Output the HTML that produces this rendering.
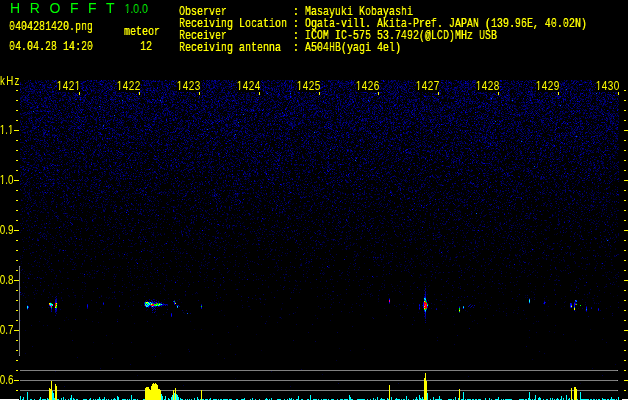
<!DOCTYPE html>
<html lang="en"><head><meta charset="utf-8"><title>HROFFT 1.0.0</title>
<style>
html,body{margin:0;padding:0;background:#000;overflow:hidden}
#s{position:relative;width:629px;height:400px;background:#000;overflow:hidden;font-family:"Liberation Sans",sans-serif}
#s>*{position:absolute}
#s>div,#s>pre{will-change:transform}
.m{font-family:"Liberation Mono","IPAGothic",monospace;font-size:13.6px;line-height:12px;color:#ff0;white-space:pre;transform-origin:0 0;transform:scaleX(0.7353);margin:0;text-shadow:0 0 0 #ff0}
.g{position:absolute;top:0;color:#0f0;font-size:14px;line-height:16px;white-space:pre;word-spacing:5.7px}
.v{color:#0f0;font-size:12.5px;line-height:12px;transform-origin:0 0;transform:scaleX(0.84);white-space:pre;text-indent:-0.6px}
.tl,.yl{position:absolute;color:#ff0;font-size:12.5px;line-height:12px;white-space:pre;transform-origin:0 0}
.tl{top:80px;width:28.75px;height:12px;background:#000;transform:scaleX(0.80);text-indent:-0.4px;letter-spacing:0.55px}
.yl{right:616px;transform-origin:100% 0;transform:scaleX(0.79)}
.kh{position:absolute;left:-0.4px;top:75px;color:#ff0;font-size:12.5px;line-height:12px;white-space:pre;transform-origin:0 0;transform:scaleX(0.78);letter-spacing:1.7px}
svg{position:absolute;left:0;top:0;overflow:hidden}
</style></head><body>
<div id="s">
<svg class="noise" width="599" height="320" viewBox="0 -0.5 599 320" style="left:20px;top:80px" shape-rendering="crispEdges" fill="none" stroke-width="1"><path stroke="#000028" d="M378 132h1M393 134h1m128 0h1M509 136h1M570 139h1M158 141h1m154 0h1m238 0h1M210 142h1M80 145h1m189 0h1M14 146h1m107 0h1m213 0h1m161 0h1M11 147h1m56 0h1M426 149h1M567 150h1M484 151h1M272 152h1m170 0h1M177 153h1M266 154h1m267 0h1M60 156h1m317 0h1m83 0h1M371 157h1M338 159h1M187 160h1m296 0h1m113 0h1M478 161h1M471 162h1M170 163h1m9 0h1M32 164h1m176 0h1m51 0h1m40 0h1m107 0h1m79 0h1M151 165h1m154 0h1m25 0h1M78 166h1m381 0h1M256 167h1M110 172h1m105 0h1m324 0h1M226 173h1m128 0h1m104 0h1M133 174h1m113 0h1m106 0h1m189 0h1M266 175h1m203 0h1M173 177h1m172 0h1m29 0h1M188 178h1m282 0h1m35 0h1M392 179h1m118 0h1M368 180h1M1 181h1M210 182h1m4 0h1m284 0h1m90 0h1M344 183h1M27 184h1M159 185h1m277 0h1M142 187h1m111 0h1m158 0h1m5 0h1m146 0h1M204 188h1m370 0h1M269 189h1M119 190h1m79 0h1m327 0h1M18 191h1m142 0h1M177 192h1m290 0h1m17 0h1M231 193h1M5 194h1m90 0h1m30 0h1m56 0h1m401 0h1m9 0h1M500 196h1M42 197h1M9 198h1m311 0h1M470 199h1M31 200h1m133 0h1m21 0h1m97 0h1M7 202h1m461 0h1m23 0h1m61 0h1M311 203h1M104 204h1m110 0h1m148 0h1m169 0h1M508 206h1M297 207h1M269 208h1m109 0h1M65 209h1m276 0h1M128 210h1M101 212h1m149 0h1M351 213h1m238 0h1M320 214h1M593 216h1M110 217h1m197 0h1m258 0h1M572 218h1M210 220h1M358 221h1m72 0h1m113 0h1M161 222h1m297 0h1M332 224h1m75 0h1m15 0h1m43 0h1M566 226h1M463 227h1M261 228h1m102 0h1m77 0h1m36 0h1m61 0h1M58 229h1M99 230h1M479 231h1M275 232h1M164 233h1M111 235h1M46 237h1m212 0h1M48 239h1m91 0h1m359 0h1M170 241h1M132 246h1M174 249h1m234 0h1m160 0h1M534 252h1M236 254h1M73 262h1M92 263h1M319 268h1M241 270h1M140 273h1M198 274h1M215 298h1M560 303h1M439 308h1"/><path stroke="#000032" d="M450 0h1M123 1h1M562 2h1M123 4h1m365 0h1M4 5h1M540 8h1M28 9h2m512 0h1M271 10h1M140 12h1m190 0h1M79 13h1m66 0h1m68 0h1m144 0h1m82 0h1m81 0h1M87 14h1M24 15h1m251 0h1m113 0h1M19 16h1m99 0h1m188 0h1M102 17h1M170 18h1m190 0h1M103 19h1m222 0h1m253 0h1M178 20h1m6 0h1m259 0h1m43 0h1M289 21h1m184 0h1M166 22h1m270 0h1m88 0h1M310 23h1M25 24h1m69 0h1m122 0h1M182 25h1m239 0h1M414 26h1m27 0h1M583 27h1M446 28h1m109 0h1M140 29h1m366 0h1m53 0h1M260 30h1m8 0h1m207 0h1M19 31h1m6 0h1m68 0h1m152 0h1m83 0h1m40 0h1M220 32h1m71 0h1m129 0h1M54 33h1m11 0h1m216 0h1M36 34h1m173 0h1m223 0h1m104 0h1M27 35h1m160 0h1M15 36h1m206 0h1m85 0h1m36 0h1m213 0h1M96 37h1m46 0h1m14 0h1m179 0h1M363 38h1M110 39h1m80 0h1m35 0h1m38 0h1M130 40h1m202 0h1m10 0h1m235 0h1M163 41h1m113 0h1m186 0h1M61 42h1m28 0h1m39 0h1M103 43h1m25 0h1m58 0h1m198 0h1m43 0h1m162 0h1M169 44h1m39 0h1m132 0h1m157 0h1m60 0h1M48 45h1m120 0h1m144 0h1m7 0h1m223 0h1M233 46h1m138 0h1m110 0h1m9 0h1M165 47h1m37 0h1m64 0h1m37 0h1m64 0h1m29 0h1m73 0h1m12 0h1m2 0h1m37 0h1M307 48h1M49 49h1m17 0h1m161 0h1m112 0h1m187 0h1m1 0h1M142 50h1m38 0h1m85 0h1m23 0h1m111 0h1M33 51h1m112 0h1m128 0h1m68 0h1M218 52h1m309 0h1M109 53h1M134 54h1M97 55h1m41 0h1m221 0h1m147 0h1m31 0h1m9 0h1M48 56h1m38 0h1m220 0h1m119 0h1M248 57h1m40 0h1m22 0h1m63 0h1m96 0h1m113 0h1M120 58h1m57 0h1m109 0h1m173 0h1m49 0h1m33 0h1M8 59h1m127 0h1m42 0h1m6 0h1m35 0h1m14 0h1m72 0h1m63 0h1m6 0h1m173 0h1M38 60h1m11 0h1m126 0h1m8 0h1m55 0h1M13 61h1m188 0h1m63 0h1m81 0h1m166 0h1m40 0h1m35 0h1M40 62h1m4 0h1m83 0h1m1 0h1M107 63h1m59 0h1m103 0h1m178 0h1M49 64h1m57 0h1m10 0h1m35 0h1m22 0h1m81 0h1m4 0h1m38 0h1m250 0h1M122 65h1m330 0h1M30 66h1m107 0h1m68 0h1m60 0h1m41 0h1m8 0h1m50 0h1m83 0h1m5 0h1m48 0h1m38 0h1m22 0h1M93 67h1m157 0h1m3 0h1m30 0h1m19 0h1m8 0h1m168 0h1m28 0h1M8 68h1m5 0h1m171 0h1m138 0h1m47 0h1m14 0h1m59 0h1m37 0h1m17 0h1m70 0h1M14 69h1m31 0h1m60 0h1m96 0h1m178 0h1m201 0h1M27 70h1m11 0h1m350 0h1m23 0h1M148 71h1m143 0h1m41 0h1M39 72h1m13 0h1m104 0h1m5 0h1m57 0h1m72 0h1m38 0h1m62 0h1m58 0h1m20 0h1M133 73h1m169 0h1m29 0h1m52 0h1m78 0h1m84 0h1m41 0h1m2 0h1M107 74h1m53 0h1m68 0h1m56 0h1m117 0h1m62 0h1m5 0h1m66 0h1m49 0h1M210 75h1m162 0h1m66 0h1m145 0h1M1 76h1m20 0h1m26 0h1m10 0h1m1 0h1m131 0h1m88 0h1m58 0h1m131 0h1m23 0h1M49 77h1m5 0h1m2 0h1m53 0h1m161 0h1m113 0h1m59 0h1m87 0h1M134 78h1m55 0h1m59 0h1m40 0h1m134 0h1m88 0h1M45 79h1m172 0h1m69 0h1m40 0h1m5 0h1m20 0h1m10 0h1m24 0h1m117 0h1m32 0h1M69 80h1m44 0h1m232 0h1m21 0h1m19 0h1m48 0h1m66 0h1m60 0h1M5 81h1m21 0h1m72 0h1m18 0h1m294 0h1m8 0h1m96 0h1M40 82h1m9 0h1m71 0h1m30 0h1m159 0h1m60 0h1m41 0h1M31 83h1m20 0h1m31 0h1m35 0h1m27 0h1m5 0h1m131 0h1m162 0h1m64 0h1M319 84h1m228 0h1m33 0h1M27 85h1m21 0h1m25 0h1m35 0h1m55 0h1m75 0h1m102 0h1M9 86h1m106 0h1m100 0h1m77 0h1m34 0h1m35 0h1m55 0h1m11 0h1m92 0h1m12 0h1m12 0h1m29 0h1M25 87h1m25 0h1m12 0h1m51 0h1m145 0h1m46 0h1m76 0h1m11 0h1m21 0h1m67 0h1m3 0h1m47 0h1M102 88h1m13 0h1m74 0h1m114 0h1m78 0h1M48 89h1m31 0h1m12 0h1m41 0h1m22 0h1m22 0h1m22 0h1m28 0h1m103 0h1m1 0h1m158 0h1M14 90h1m5 0h1m15 0h1m212 0h1m40 0h1m243 0h1M65 91h1m118 0h1m102 0h1m107 0h2m6 0h1M7 92h1m37 0h1m39 0h1m25 0h1m6 0h1m51 0h1m77 0h1m87 0h1m51 0h1m13 0h1m7 0h1m55 0h1M20 93h1m25 0h1m150 0h1m74 0h1m11 0h1m94 0h1m20 0h1m8 0h1m25 0h1M42 94h1m50 0h1m52 0h1m51 0h1m26 0h1m25 0h1m8 0h1m92 0h1m25 0h1m35 0h1m16 0h1m12 0h1m4 0h1m37 0h1m31 0h1m56 0h1M15 95h1m94 0h1m65 0h1m170 0h1m49 0h1m45 0h1M115 96h1m56 0h1m307 0h1M73 97h1m61 0h1m59 0h1m20 0h1m8 0h1m253 0h1m53 0h1m39 0h1M200 98h1m5 0h1m8 0h1m46 0h1m27 0h1m38 0h1m3 0h1m135 0h1m93 0h1M53 99h1m116 0h1m58 0h1m46 0h1m3 0h1m146 0h1m3 0h1m91 0h1m50 0h1m16 0h1M6 100h1m48 0h1m106 0h1m128 0h1m27 0h1m17 0h1m108 0h1m9 0h1m20 0h1m22 0h1m4 0h1m28 0h1m34 0h1M71 101h1m26 0h1m45 0h1m58 0h1m108 0h1m31 0h1m15 0h1m3 0h1m3 0h1m88 0h1m93 0h1M81 102h1m48 0h1m6 0h2m157 0h1m48 0h1m57 0h1m90 0h1M2 103h1m7 0h1m20 0h1m53 0h1m11 0h1m159 0h1m11 0h1m230 0h1m3 0h1M16 104h1m41 0h1m60 0h1m160 0h1m27 0h1m5 0h1m48 0h1m1 0h1m13 0h1m3 0h1m88 0h1m47 0h1m8 0h1m27 0h1m34 0h1M12 105h1m53 0h1m229 0h1m52 0h1m57 0h1m25 0h1m14 0h1m7 0h1m14 0h1M57 106h1m78 0h1m59 0h1m28 0h1m7 0h1m47 0h1m161 0h2m9 0h1m7 0h1m72 0h1M13 107h1m99 0h1m46 0h1m1 0h1m36 0h1m108 0h1m44 0h1m8 0h1m17 0h1m36 0h1m29 0h1m36 0h1m87 0h1M136 108h1m77 0h1m142 0h1m21 0h1m20 0h1m98 0h1m38 0h1m28 0h1m10 0h1M121 109h1m104 0h1m67 0h1m5 0h1m7 0h1m183 0h1m23 0h1M4 110h1m73 0h1m71 0h1m11 0h1m106 0h1m7 0h1m20 0h1m33 0h1m27 0h1m144 0h1m32 0h1M216 111h1m118 0h1m22 0h1m65 0h1m49 0h1M16 112h1m6 0h1m34 0h1m83 0h1m149 0h1m58 0h1m48 0h1m45 0h1m3 0h1m6 0h1m21 0h1m38 0h1m55 0h1M57 113h1m3 0h1m55 0h2m24 0h1m147 0h1m22 0h1m57 0h1m70 0h1m74 0h1m50 0h1M9 114h1m19 0h1m8 0h1m4 0h1m10 0h1m59 0h1m29 0h1m50 0h1m17 0h1m16 0h1m21 0h1m2 0h1m25 0h1m13 0h1m38 0h1m5 0h1m9 0h1m96 0h1m13 0h1m15 0h1m107 0h1M9 115h1m115 0h1m67 0h1m19 0h1m74 0h1m206 0h1m90 0h1M69 116h1m58 0h1m78 0h1m39 0h1m1 0h1m35 0h1m12 0h1m63 0h1m11 0h1m33 0h1m3 0h1m21 0h1m18 0h1m76 0h1m7 0h1m55 0h1M9 117h1m39 0h1m38 0h1m24 0h1m75 0h1m136 0h1m106 0h1m63 0h1m9 0h1m9 0h1M44 118h1m18 0h1m61 0h1m44 0h1m56 0h1m104 0h1m36 0h1m43 0h1m60 0h1m54 0h1m6 0h1M25 119h1m53 0h1m7 0h1m3 0h1m42 0h1m15 0h1m41 0h2m42 0h1m59 0h1m53 0h1m30 0h1m91 0h1m10 0h1m48 0h1m56 0h1m7 0h1M83 120h1m40 0h1m10 0h1m15 0h1m36 0h1m18 0h1m3 0h1m33 0h1m10 0h1m36 0h1m13 0h1m2 0h1m50 0h1m168 0h1M19 121h1m121 0h1m32 0h1m27 0h1m38 0h1m60 0h1m69 0h1m29 0h1m23 0h1m50 0h1m14 0h1m81 0h1m13 0h1M20 122h1m31 0h1m10 0h1m101 0h1m17 0h1m43 0h1m102 0h1m8 0h1m217 0h1M15 123h1m9 0h1m49 0h1m107 0h1m47 0h1m23 0h1m14 0h1m2 0h1m33 0h1m22 0h1m19 0h1m5 0h1m42 0h1m102 0h1M20 124h1m5 0h1m60 0h1m80 0h1m28 0h1m20 0h1m14 0h1m145 0h1m2 0h1m13 0h1m114 0h1m55 0h1M41 125h1m12 0h1m8 0h1m27 0h1m12 0h1m55 0h2m12 0h1m37 0h1m70 0h1m12 0h1m9 0h1m113 0h1m4 0h1m2 0h1m6 0h1m7 0h1M65 126h1m6 0h1m79 0h2m18 0h2m110 0h1m36 0h1m60 0h1m8 0h1m12 0h1m32 0h1m67 0h1m1 0h1m38 0h1m16 0h1m6 0h1M5 127h1m44 0h1m28 0h1m35 0h1m38 0h1m27 0h1m58 0h1m89 0h1m14 0h1m10 0h1m54 0h1m29 0h1m16 0h1m88 0h1m2 0h1M42 128h1m28 0h1m39 0h1m3 0h1m67 0h1m34 0h1m148 0h1m13 0h1m82 0h1m84 0h1m9 0h1m20 0h1M125 129h1m5 0h1m30 0h1m18 0h1m78 0h1m14 0h1m25 0h1m27 0h1m40 0h2m35 0h1m8 0h1m8 0h1m57 0h1m49 0h1M4 130h1m10 0h1m9 0h1m15 0h1m104 0h1m19 0h1m57 0h1m2 0h1m286 0h1m32 0h1M17 131h1m49 0h1m95 0h1m10 0h1m5 0h1m5 0h1m77 0h1m169 0h1m84 0h1M11 132h1m10 0h2m45 0h1m32 0h1m120 0h1m37 0h1m21 0h1m8 0h1m15 0h1m58 0h1m103 0h1m5 0h1m10 0h1m21 0h1m43 0h1m29 0h1M28 133h1m18 0h1m109 0h1m74 0h1m29 0h1m7 0h1m37 0h1m123 0h1m5 0h1m20 0h1m75 0h1m26 0h1m14 0h1M74 134h1m105 0h1m10 0h1m25 0h1m46 0h1m16 0h2m33 0h1m7 0h1m3 0h1m69 0h1m15 0h1m25 0h1m8 0h1m16 0h1m4 0h1m19 0h1m17 0h2m77 0h1M44 135h1m21 0h1m27 0h1m16 0h1m11 0h1m40 0h1m7 0h1m42 0h1m43 0h1m4 0h1m16 0h1m31 0h1m11 0h1m19 0h1m54 0h1m36 0h1m26 0h1m44 0h1m4 0h1m18 0h1m19 0h1M28 136h1m3 0h1m14 0h1m116 0h2m17 0h1m17 0h1m30 0h1m80 0h1m5 0h1m113 0h1m126 0h1m9 0h1m20 0h1M55 137h1m19 0h1m49 0h1m66 0h2m17 0h1m2 0h1m39 0h1m26 0h1m23 0h1m74 0h1m63 0h1m25 0h1M165 138h1m209 0h1m21 0h1m6 0h1m50 0h1m28 0h1m90 0h1M2 139h1m27 0h1m80 0h1m17 0h1m76 0h1m37 0h1m23 0h1m31 0h1m14 0h1m142 0h1m30 0h1M119 140h1m86 0h1m7 0h1m2 0h1m34 0h1m14 0h1m6 0h1m3 0h1m13 0h1m34 0h1m51 0h1m53 0h1m1 0h1m26 0h1m84 0h2m12 0h1m5 0h1m11 0h1M14 141h1m25 0h2m20 0h1m1 0h1m8 0h1m53 0h1m127 0h1m47 0h1m59 0h1m3 0h1m25 0h1m4 0h1m10 0h1m17 0h1m28 0h1m81 0h1m25 0h1M67 142h1m58 0h1m19 0h1m14 0h1m61 0h1m14 0h1m19 0h1m26 0h1m43 0h1m47 0h1m6 0h1m17 0h1m58 0h1m34 0h1m29 0h1m11 0h1m57 0h1M30 143h1m3 0h1m17 0h1m13 0h1m34 0h1m16 0h1m10 0h1m11 0h1m14 0h1m16 0h1m48 0h1m48 0h1m7 0h1m37 0h1m45 0h1m11 0h1m75 0h1m132 0h1m12 0h1M7 144h1m20 0h1m48 0h1m3 0h1m5 0h1m20 0h1m27 0h1m107 0h1m3 0h1m124 0h1m29 0h1m43 0h1m4 0h1m37 0h1m74 0h1m13 0h1M169 145h1m87 0h1m54 0h1m31 0h1m13 0h1m7 0h1m26 0h1m108 0h1m14 0h1m2 0h1m8 0h1M43 146h1m13 0h1m35 0h2m1 0h1m23 0h1m46 0h1m14 0h1m14 0h1m14 0h1m3 0h1m6 0h1m32 0h1m21 0h1m34 0h1m9 0h1m33 0h1m4 0h1m13 0h1m71 0h2m30 0h1m15 0h1m3 0h1m41 0h2m15 0h1M74 147h1m48 0h1m48 0h1m47 0h1m32 0h2m29 0h1m88 0h1m52 0h1m39 0h1m62 0h1m41 0h1M20 148h1m4 0h1m54 0h1m3 0h1m16 0h1m93 0h1m28 0h1m40 0h1m1 0h1m34 0h1m52 0h1m30 0h1m43 0h1m28 0h1m80 0h1M50 149h1m114 0h1m72 0h1m49 0h1m94 0h1m14 0h1m2 0h1m5 0h1m10 0h1m57 0h1m47 0h1m9 0h1M81 150h1m4 0h1m22 0h1m23 0h1m36 0h1m8 0h1m4 0h1m57 0h1m17 0h1m146 0h1m22 0h1m98 0h1m57 0h1M42 151h1m32 0h1m36 0h1m16 0h1m83 0h1m76 0h1m25 0h1m12 0h1m3 0h1m5 0h1m79 0h1m39 0h1m37 0h1m11 0h1m73 0h1M27 152h1m28 0h1m39 0h1m29 0h1m10 0h1m21 0h1m59 0h1m10 0h1m11 0h1m144 0h1M10 153h1m73 0h1m4 0h1m43 0h1m6 0h1m3 0h1m53 0h1m15 0h1m3 0h1m12 0h1m4 0h1m105 0h1m51 0h1m38 0h1m103 0h1M21 154h1m57 0h1m19 0h1m5 0h1m63 0h1m36 0h1m39 0h1m32 0h1m185 0h1M71 155h1m65 0h1m85 0h1m102 0h1m36 0h1m52 0h1m27 0h1m38 0h1m32 0h1m51 0h1m26 0h1M9 156h1m22 0h1m8 0h1m93 0h1m43 0h1m12 0h1m2 0h1m71 0h1m5 0h1m55 0h1m52 0h1m62 0h1m65 0h1m47 0h1M4 157h1m18 0h1m58 0h1m65 0h1m49 0h1m38 0h1m3 0h1m25 0h1m64 0h1m82 0h1m41 0h1m24 0h1m28 0h1m16 0h1m33 0h1m30 0h1M26 158h1m3 0h1m4 0h1m51 0h1m149 0h1m2 0h1m10 0h1m22 0h1m33 0h1m18 0h1m2 0h1m20 0h1m4 0h1m13 0h1m23 0h1m29 0h1m34 0h1M33 159h1m90 0h1m10 0h1m46 0h1m32 0h1m96 0h1m81 0h1m24 0h1m88 0h1m7 0h1m9 0h1m39 0h1m8 0h1m18 0h1M35 160h1m12 0h1m16 0h1m44 0h1m9 0h1m119 0h1m50 0h1m16 0h1m8 0h1m47 0h1m21 0h1m35 0h1m39 0h1m5 0h1M53 161h1m31 0h1m94 0h1m251 0h1m25 0h1M129 162h1m173 0h1m87 0h1m36 0h1m57 0h1m23 0h1m52 0h1M14 163h1m33 0h1m5 0h1m22 0h1m38 0h1m216 0h1m16 0h1m73 0h1m5 0h1m40 0h1m10 0h1m12 0h1M55 164h1m5 0h1m12 0h1m4 0h1m15 0h1m24 0h1m46 0h2m16 0h1m4 0h1m123 0h1m15 0h1m73 0h1m34 0h1m40 0h1m23 0h1m6 0h1m71 0h1M141 165h1m54 0h1m8 0h1m5 0h1m32 0h1m83 0h1m8 0h1m34 0h1m42 0h1m53 0h1m37 0h1m4 0h1m1 0h1m66 0h1M142 166h1m56 0h1m20 0h1m28 0h1m90 0h1m43 0h1m20 0h1m21 0h2m17 0h1m26 0h1m2 0h1m53 0h1m19 0h1m28 0h1m11 0h1M79 167h1m6 0h1m66 0h1m38 0h1m91 0h1m8 0h1m53 0h1m17 0h1m36 0h1m80 0h1m32 0h1m63 0h1m3 0h2M33 168h2m27 0h1m143 0h1m18 0h1m20 0h1m238 0h1m25 0h1m83 0h1M6 169h1m64 0h1m18 0h2m60 0h1m11 0h1m80 0h1m76 0h1m74 0h1m21 0h1m30 0h1m144 0h1M26 170h1m115 0h1m116 0h1m26 0h1m60 0h1m142 0h1m21 0h1m54 0h1M129 171h1m36 0h1m168 0h1m86 0h1m82 0h1m8 0h1M26 172h1m16 0h1m9 0h1m24 0h1m96 0h1m53 0h1m62 0h1m47 0h1m61 0h1m25 0h1m45 0h1m70 0h1M29 173h1m72 0h1m34 0h1m48 0h1m38 0h1m64 0h1m76 0h1m54 0h1m26 0h1m53 0h2m45 0h1m1 0h1m36 0h1M25 174h1m80 0h1m274 0h1m54 0h1m21 0h1m36 0h1m1 0h1m26 0h1m61 0h1M54 175h1m237 0h1m51 0h1m24 0h1m24 0h1m2 0h1m4 0h1m43 0h1m26 0h1m76 0h1m24 0h1M0 176h1m68 0h1m29 0h1m3 0h1m56 0h1m93 0h1m4 0h1m75 0h1m17 0h1m12 0h1m43 0h1m1 0h1m11 0h1m11 0h1m3 0h1m3 0h1m8 0h1m42 0h1m3 0h1M2 177h1m109 0h1m19 0h1m3 0h1m110 0h1m136 0h1m41 0h1m73 0h1m32 0h2M58 178h1m33 0h1m9 0h1m9 0h1m162 0h1m7 0h1m73 0h1m21 0h1m6 0h1m43 0h1m32 0h1m97 0h1M75 179h1m43 0h1m11 0h1m107 0h1m12 0h2m49 0h1m7 0h1m50 0h1m9 0h1m18 0h1m33 0h1m23 0h1m81 0h1m7 0h1m27 0h1m6 0h1M43 180h1m131 0h1m19 0h1m65 0h1m126 0h1m45 0h1m64 0h1M38 181h1m4 0h1m20 0h1m86 0h1m55 0h1m100 0h1m100 0h1m2 0h1m16 0h1m104 0h1m41 0h1m8 0h1M189 182h1m115 0h1m50 0h1m12 0h1m87 0h1m31 0h1m49 0h1M1 183h1m24 0h1m192 0h1m61 0h1m48 0h1m35 0h1m32 0h1m1 0h1m16 0h1m3 0h1m12 0h1m46 0h1m98 0h1M11 184h1m40 0h1m71 0h1m15 0h1m40 0h1m59 0h1m38 0h1m82 0h1m16 0h1m9 0h1m55 0h1m29 0h1m6 0h1m24 0h1M56 185h1m14 0h1m94 0h1m48 0h1m12 0h1m28 0h1m77 0h1m18 0h1m35 0h1m87 0h1m7 0h1m89 0h1m14 0h1M12 186h1m11 0h1m58 0h1m16 0h1m48 0h1m14 0h1m19 0h1m39 0h1m32 0h1m12 0h1m115 0h1m19 0h1m21 0h1m129 0h1M122 187h1m165 0h1m10 0h1m85 0h1m159 0h1M84 188h1m17 0h1m90 0h1m110 0h1m80 0h1m94 0h1m93 0h1m9 0h1M31 189h1m23 0h1m51 0h1m59 0h1m90 0h1m6 0h1m23 0h1m124 0h1M22 190h1m10 0h1m38 0h1m1 0h1m24 0h1m23 0h1m85 0h1m206 0h1m32 0h1m65 0h1M4 191h1m5 0h1m77 0h1m78 0h1m11 0h1m189 0h1m40 0h1m21 0h1m6 0h1m113 0h1M0 192h1m39 0h1m145 0h1m37 0h1m78 0h1m85 0h1m30 0h1m8 0h1m155 0h1M3 193h1m30 0h1m25 0h1m1 0h1m13 0h1m7 0h1m46 0h1m103 0h1m17 0h1m32 0h1m17 0h1m88 0h1m24 0h1m55 0h1m15 0h1M12 194h1m94 0h1m35 0h1m227 0h1m32 0h2m191 0h1M110 195h1m3 0h1m100 0h1m9 0h1m15 0h1m28 0h1m48 0h1m81 0h1m106 0h1m27 0h1m25 0h1m19 0h1M36 196h1m83 0h1m11 0h1m20 0h1m3 0h1m14 0h1m79 0h1m15 0h1m67 0h1m10 0h1m8 0h2m34 0h1m59 0h1m19 0h1m8 0h1m3 0h1m35 0h1M5 197h1m2 0h1m14 0h1m34 0h1m13 0h1m73 0h1m12 0h1m88 0h1m52 0h1m97 0h1m6 0h1m65 0h1m44 0h1m6 0h1m68 0h1m1 0h1M72 198h1m29 0h1m30 0h1m20 0h1m8 0h1m31 0h1m4 0h1m39 0h1m174 0h1m172 0h1M16 199h1m109 0h1m11 0h1m70 0h1m102 0h1M53 200h1m48 0h1m9 0h1m34 0h1m116 0h2m40 0h1m26 0h1m77 0h1m15 0h1m50 0h1m55 0h1m20 0h1M145 201h1m3 0h1m5 0h1m28 0h1m19 0h1m80 0h1m52 0h1m46 0h1m210 0h1M64 202h1m103 0h1m4 0h1m29 0h1m15 0h1m70 0h1m103 0h1m10 0h1m148 0h1M33 203h1m1 0h1m101 0h1m24 0h1m265 0h1m10 0h1m34 0h1m3 0h1m97 0h1M33 204h1m337 0h1m81 0h1m7 0h1m18 0h1M94 205h2m16 0h1m47 0h1m32 0h1m66 0h1m148 0h1m141 0h1m13 0h1M5 206h1m59 0h1m70 0h1m111 0h1m56 0h1m84 0h1m49 0h1m30 0h1m43 0h1m69 0h1m12 0h1M32 207h1m5 0h1m146 0h1m62 0h1m335 0h1M291 208h1m82 0h1m88 0h1m21 0h1M43 209h1m8 0h1m8 0h1m52 0h1m161 0h1m113 0h1m8 0h1m99 0h1m15 0h1m18 0h1M375 210h1m56 0h1M64 211h1m29 0h1m45 0h1m231 0h1m106 0h1m11 0h1m19 0h1M126 212h1m152 0h1m202 0h1m30 0h1m40 0h1m29 0h1M177 213h1m148 0h1m16 0h1m4 0h1m79 0h1m32 0h1m3 0h1m92 0h1M117 214h1m54 0h1m45 0h1m163 0h1m24 0h1m6 0h1m68 0h1M8 215h1m39 0h1m5 0h1m7 0h1m18 0h1m31 0h1m188 0h1m202 0h1m91 0h1M49 216h1m288 0h1m11 0h1M5 217h1m35 0h1m13 0h1m30 0h1m2 0h1m381 0h1m33 0h1M14 218h1m73 0h1m59 0h1m209 0h1m152 0h1m29 0h1m31 0h1M236 219h1m68 0h1m15 0h1m36 0h1m77 0h1M157 220h1m63 0h1m199 0h1m74 0h1m27 0h1m3 0h1m44 0h1M556 221h1m23 0h1M106 222h1m11 0h1m15 0h1m178 0h1m222 0h1m37 0h1M55 223h1m206 0h1m130 0h1m71 0h1m17 0h1m92 0h1M105 224h1m308 0h1m7 0h1m55 0h1M121 225h1m100 0h1m116 0h1m130 0h1M108 226h1m22 0h1m96 0h2m68 0h1m106 0h1m122 0h1m15 0h1M304 227h1m155 0h1m37 0h1M427 228h1m58 0h1m71 0h1m27 0h1M137 229h1m92 0h1m30 0h1m118 0h1m117 0h1M126 230h1m74 0h1m292 0h1m29 0h1m40 0h1M77 231h1m121 0h1m247 0h1M81 232h1m247 0h1m68 0h1M421 233h1M312 234h1m27 0h1m163 0h1M136 235h1m67 0h1m90 0h1m84 0h1m69 0h1m76 0h1M433 236h1m80 0h1M352 237h1m40 0h1M261 238h1M66 239h1m30 0h1M0 240h1m43 0h1m265 0h1m143 0h1M19 241h1m52 0h1m173 0h1m205 0h1m63 0h1M78 242h1m178 0h1M114 243h1m342 0h1m55 0h1M434 244h1M23 245h1M39 248h1M181 249h1M5 250h1m45 0h1M529 251h1M417 257h1m91 0h1M582 259h1M555 260h1M197 263h1M210 264h1M344 269h1M330 270h1M5 273h1M512 279h1M316 280h1M595 284h1M572 288h1M284 290h1M35 291h1M403 293h1M302 294h1M117 295h1M4 314h1M233 318h1"/><path stroke="#00003e" d="M4 0h1m12 0h1m3 0h1m5 0h1m45 0h1m1 0h1m59 0h1m13 0h1m6 0h1m106 0h1m2 0h1m34 0h1m4 0h1m5 0h2m58 0h2m14 0h1m45 0h1m9 0h1m39 0h1m25 0h1m41 0h1m14 0h1M83 1h1m56 0h1m3 0h1m53 0h1m6 0h1m64 0h1m118 0h1m4 0h1m42 0h1m8 0h1m7 0h1m39 0h1m1 0h1m59 0h1m13 0h1m2 0h1M23 2h1m72 0h1m33 0h1m7 0h1m15 0h1m52 0h1m36 0h1m29 0h1m46 0h2m4 0h1m57 0h1m40 0h1m28 0h1m87 0h1M79 3h1m8 0h1m52 0h1m1 0h1m10 0h1m37 0h1m14 0h1m44 0h1m22 0h1m36 0h1m4 0h1m8 0h2m36 0h2m25 0h1m51 0h1m5 0h1m30 0h1m6 0h1m20 0h1m37 0h1m27 0h1M1 4h1m7 0h1m51 0h1m4 0h1m79 0h1m35 0h1m8 0h1m16 0h1m51 0h1m45 0h1m10 0h1m65 0h1m3 0h1m36 0h1m26 0h1m33 0h1m61 0h1m20 0h1M2 5h1m22 0h1m5 0h1m32 0h1m6 0h1m12 0h1m38 0h1m2 0h1m53 0h1m12 0h1m8 0h1m41 0h1m29 0h1m119 0h1m31 0h1m2 0h1m118 0h1m4 0h1M15 6h1m1 0h1m47 0h1m19 0h1m6 0h1m40 0h1m6 0h1m11 0h1m3 0h1m36 0h1m4 0h2m55 0h1m47 0h1m30 0h1m47 0h1m36 0h1m128 0h2m15 0h1m3 0h1m3 0h1M1 7h1m7 0h1m72 0h1m2 0h1m4 0h1m35 0h1m21 0h1m31 0h1m1 0h1m27 0h1m3 0h1m25 0h1m22 0h1m12 0h1m44 0h1m13 0h1m32 0h1m58 0h1m51 0h1m67 0h2m1 0h1m14 0h1m6 0h1M0 8h1m8 0h1m112 0h1m21 0h1m53 0h1m51 0h1m18 0h1m31 0h1m7 0h1m4 0h1m11 0h1m35 0h1m13 0h1m5 0h1m1 0h1m52 0h1m12 0h2m59 0h1m57 0h1M25 9h1m42 0h1m2 0h1m50 0h1m141 0h1m7 0h2m26 0h1m30 0h1m33 0h1m2 0h1m8 0h1m42 0h1m30 0h1m28 0h1m2 0h1m5 0h1m6 0h1m8 0h1m37 0h1m15 0h1m12 0h1M11 10h1m14 0h1m54 0h1m8 0h1m2 0h1m41 0h1m1 0h1m6 0h1m5 0h3m35 0h1m24 0h2m1 0h1m27 0h2m26 0h1m3 0h1m43 0h1m14 0h1m28 0h1m19 0h1m99 0h1m13 0h1m6 0h1m2 0h1m6 0h1m23 0h1m3 0h1m21 0h1m5 0h1M19 11h1m10 0h1m44 0h1m5 0h1m7 0h1m33 0h1m67 0h1m10 0h1m68 0h1m1 0h1m30 0h1m15 0h1m62 0h1m11 0h1m27 0h1m65 0h1m20 0h1M13 12h2m30 0h1m25 0h1m49 0h1m9 0h1m30 0h1m13 0h1m19 0h1m4 0h2m25 0h1m41 0h1m13 0h1m13 0h1m34 0h1m6 0h1m10 0h1m1 0h1m11 0h1m54 0h1m5 0h1m7 0h1m5 0h1m11 0h1m17 0h1m29 0h1m17 0h1m41 0h1m7 0h1m6 0h1m19 0h1M20 13h1m7 0h1m11 0h1m17 0h1m11 0h1m4 0h1m7 0h1m9 0h2m2 0h1m24 0h1m15 0h1m10 0h2m18 0h2m10 0h1m16 0h1m17 0h1m27 0h1m29 0h1m3 0h1m2 0h1m18 0h1m13 0h1m8 0h2m51 0h1m16 0h1m16 0h1m2 0h1m1 0h1m17 0h1m6 0h1m27 0h1m58 0h1m54 0h1m14 0h1M94 14h1m6 0h1m73 0h1m17 0h1m1 0h1m3 0h1m27 0h1m8 0h1m3 0h1m5 0h1m10 0h1m9 0h1m1 0h1m8 0h1m8 0h1m10 0h1m29 0h1m2 0h1m10 0h1m1 0h1m11 0h1m12 0h1m19 0h1m24 0h1m27 0h1m80 0h1m21 0h2m9 0h1m6 0h1m11 0h1m2 0h2m1 0h1M6 15h1m28 0h1m23 0h1m1 0h1m11 0h1m7 0h1m17 0h1m15 0h1m22 0h1m2 0h1m84 0h1m7 0h1m20 0h1m1 0h1m4 0h1m35 0h1m24 0h1m3 0h1m14 0h1m4 0h1m45 0h1m42 0h1m21 0h1m1 0h1m3 0h1m7 0h1m20 0h1m2 0h1m25 0h1m11 0h1m4 0h1m2 0h1m38 0h1M25 16h1m10 0h1m14 0h1m28 0h1m34 0h1m14 0h1m22 0h1m48 0h1m5 0h1m7 0h1m3 0h1m5 0h1m4 0h1m44 0h1m3 0h1m45 0h1m13 0h1m2 0h1m9 0h1m7 0h1m34 0h2m23 0h1m2 0h1m4 0h1m36 0h1m4 0h1m16 0h1m52 0h1m12 0h1m15 0h1m3 0h1m14 0h1M0 17h1m58 0h1m10 0h1m40 0h1m21 0h1m8 0h1m18 0h1m3 0h1m22 0h1m17 0h1m40 0h1m9 0h2m24 0h1m17 0h1m22 0h1m71 0h1m10 0h1m22 0h1m31 0h1m2 0h1m17 0h2m2 0h1m47 0h1m1 0h1m49 0h1M14 18h1m3 0h1m13 0h2m3 0h1m16 0h1m23 0h1m2 0h1m12 0h1m73 0h1m29 0h1m45 0h1m22 0h1m7 0h1m6 0h2m3 0h1m56 0h2m11 0h1m22 0h1m38 0h1m3 0h1m35 0h1m4 0h1m12 0h1m5 0h1m5 0h1m1 0h1m1 0h1m3 0h1m11 0h1m51 0h1m9 0h1M43 19h1m3 0h1m14 0h1m19 0h1m27 0h1m7 0h1m9 0h1m11 0h1m60 0h1m19 0h1m2 0h1m1 0h1m50 0h1m17 0h1m9 0h1m3 0h1m34 0h1m20 0h1m83 0h1m17 0h1m5 0h1m13 0h1m8 0h1m89 0h1M24 20h1m51 0h1m9 0h1m4 0h1m6 0h1m12 0h2m87 0h1m45 0h1m41 0h1m23 0h1m34 0h1m5 0h1m37 0h1m73 0h1m4 0h1m5 0h1m10 0h1m29 0h1m13 0h1m37 0h1m6 0h1m4 0h1m5 0h1m5 0h1m4 0h1M6 21h1m44 0h1m16 0h1m8 0h1m58 0h1m16 0h1m25 0h1m56 0h1m2 0h1m14 0h2m27 0h1m55 0h1m27 0h1m4 0h1m3 0h1m39 0h1m28 0h1m4 0h1m19 0h1m14 0h1m25 0h1m3 0h1m16 0h1m1 0h1m11 0h1m41 0h1m3 0h1m2 0h1M7 22h1m50 0h1m6 0h1m14 0h1m5 0h1m30 0h1m1 0h1m16 0h1m1 0h1m40 0h1m1 0h1m49 0h1m1 0h1m6 0h1m54 0h1m34 0h1m5 0h1m2 0h1m30 0h1m12 0h1m18 0h1m15 0h1m4 0h1m41 0h1m53 0h1m1 0h1m15 0h1m37 0h2m20 0h1M6 23h1m14 0h1m25 0h1m32 0h1m6 0h2m43 0h1m34 0h1m11 0h1m15 0h1m16 0h1m6 0h1m42 0h1m10 0h1m6 0h1m2 0h1m58 0h1m6 0h1m2 0h1m16 0h1m6 0h1m29 0h1m12 0h1m15 0h1m38 0h1m25 0h1m28 0h1m2 0h1m5 0h1m17 0h1m1 0h1M24 24h1m13 0h1m25 0h1m22 0h1m4 0h1m19 0h1m44 0h1m15 0h1m6 0h1m16 0h1m4 0h1m2 0h1m14 0h1m62 0h1m55 0h1m2 0h1m27 0h1m21 0h1m1 0h1m6 0h1m24 0h2m3 0h1m1 0h1m1 0h1m8 0h1m42 0h1m1 0h1m3 0h1m8 0h1m1 0h1m16 0h1m9 0h1m22 0h1m2 0h1m5 0h1m3 0h1m12 0h1M12 25h1m3 0h1m24 0h1m2 0h1m39 0h1m8 0h1m51 0h1m45 0h1m10 0h1m1 0h1m9 0h1m2 0h2m3 0h1m2 0h2m16 0h1m28 0h1m15 0h1m4 0h1m27 0h1m4 0h1m17 0h1m3 0h1m3 0h1m29 0h1m43 0h2m3 0h2m6 0h1m6 0h1m1 0h1m41 0h1m2 0h1m12 0h1m6 0h1m2 0h1m6 0h1m10 0h1m22 0h1m4 0h1m30 0h2M1 26h1m4 0h1m5 0h1m50 0h1m2 0h1m4 0h1m28 0h1m12 0h1m27 0h1m39 0h1m87 0h1m36 0h1m24 0h1m16 0h1m6 0h1m15 0h2m38 0h1m6 0h1m9 0h1m66 0h1m3 0h1m4 0h1m1 0h1m11 0h1m12 0h1m43 0h1m15 0h1m2 0h1M25 27h1m8 0h1m36 0h1m9 0h1m8 0h1m10 0h1m4 0h1m10 0h1m44 0h1m13 0h1m19 0h1m9 0h1m3 0h1m35 0h1m9 0h1m4 0h1m7 0h1m6 0h1m12 0h1m1 0h1m5 0h1m23 0h1m6 0h2m3 0h2m31 0h1m2 0h1m5 0h1m48 0h1m146 0h1M17 28h1m73 0h1m4 0h1m63 0h1m9 0h1m25 0h1m32 0h2m19 0h1m2 0h1m1 0h1m14 0h1m8 0h1m27 0h1m13 0h1m18 0h1m1 0h1m14 0h1m21 0h1m139 0h1m6 0h1m13 0h1m18 0h1m2 0h1m4 0h1m23 0h1M13 29h2m7 0h1m9 0h1m2 0h1m15 0h1m6 0h1m39 0h1m12 0h1m2 0h1m43 0h1m4 0h1m16 0h2m5 0h1m1 0h1m10 0h1m12 0h1m36 0h1m10 0h1m4 0h1m12 0h1m8 0h1m47 0h1m10 0h1m2 0h1m1 0h1m2 0h1m6 0h1m2 0h1m5 0h1m35 0h1m8 0h1m4 0h1m11 0h1m28 0h1m6 0h1m4 0h1m7 0h1m27 0h1m2 0h1m34 0h1M30 30h1m2 0h1m39 0h1m2 0h1m9 0h1m4 0h1m24 0h1m9 0h1m5 0h1m3 0h1m9 0h1m4 0h1m1 0h1m7 0h1m11 0h1m1 0h1m7 0h1m10 0h1m10 0h1m5 0h1m3 0h1m16 0h1m16 0h1m35 0h1m14 0h1m5 0h1m33 0h2m18 0h1m25 0h1m12 0h1m11 0h1m21 0h1m21 0h1m16 0h1m17 0h1m18 0h1m9 0h2m28 0h1m43 0h1M46 31h1m11 0h1m18 0h1m42 0h1m8 0h1m5 0h1m2 0h1m19 0h1m10 0h1m2 0h1m8 0h1m6 0h1m1 0h1m24 0h1m12 0h1m3 0h1m1 0h1m3 0h1m5 0h1m30 0h1m45 0h1m19 0h1m30 0h1m19 0h1m16 0h1m4 0h1m5 0h1m27 0h2m60 0h1m8 0h1m16 0h1m56 0h1M34 32h1m23 0h1m68 0h1m55 0h1m12 0h1m19 0h1m5 0h1m20 0h1m30 0h1m10 0h1m42 0h1m59 0h1m5 0h1m12 0h1m8 0h1m1 0h1m31 0h1m5 0h1m33 0h1m8 0h1m20 0h1m21 0h2m10 0h1m21 0h1m21 0h1M2 33h1m7 0h1m6 0h1m5 0h1m15 0h1m33 0h1m13 0h2m3 0h2m55 0h1m15 0h1m14 0h1m45 0h1m28 0h1m20 0h1m9 0h1m18 0h1m6 0h1m14 0h1m3 0h1m18 0h1m10 0h1m27 0h1m51 0h1m36 0h1m6 0h1m20 0h1m33 0h1M16 34h1m4 0h1m22 0h1m3 0h1m94 0h2m74 0h1m2 0h1m18 0h1m76 0h1m2 0h1m3 0h1m15 0h1m51 0h1m27 0h1m6 0h1m13 0h1m16 0h1m16 0h1m15 0h1m3 0h1m3 0h1m4 0h1m11 0h1m3 0h1m22 0h1m18 0h1m23 0h1m9 0h1M40 35h1m9 0h1m35 0h1m2 0h1m11 0h1m9 0h1m55 0h1m3 0h1m9 0h1m13 0h1m3 0h1m7 0h1m33 0h1m15 0h1m2 0h1m1 0h1m12 0h1m29 0h1m12 0h1m4 0h1m18 0h1m8 0h1m41 0h1m8 0h1m24 0h1m36 0h1m16 0h1m3 0h1m8 0h1m22 0h1m7 0h1m9 0h1m12 0h1m21 0h2m6 0h1M51 36h1m5 0h1m8 0h1m16 0h1m49 0h1m15 0h1m8 0h1m1 0h1m50 0h1m27 0h2m6 0h1m4 0h1m31 0h2m4 0h1m59 0h1m22 0h1m16 0h1m7 0h2m1 0h1m3 0h1m1 0h1m1 0h1m2 0h1m19 0h1m4 0h1m39 0h1m5 0h1m3 0h1m3 0h1m5 0h1m6 0h2m11 0h1m6 0h1m10 0h1m43 0h1m10 0h1M2 37h1m8 0h1m23 0h1m25 0h1m21 0h1m23 0h1m21 0h1m12 0h1m32 0h1m78 0h1m39 0h2m88 0h1m24 0h1m99 0h1m49 0h1m13 0h1m17 0h1M2 38h1m7 0h1m10 0h1m48 0h1m7 0h1m12 0h1m32 0h2m47 0h2m20 0h1m21 0h1m7 0h1m1 0h1m20 0h1m35 0h1m11 0h1m5 0h1m9 0h1m7 0h1m6 0h1m2 0h1m16 0h1m11 0h1m44 0h1m18 0h1m49 0h1m27 0h1m1 0h1m24 0h1m13 0h1m14 0h1m8 0h1m1 0h1m6 0h1m3 0h1m9 0h1m1 0h1M22 39h1m3 0h1m6 0h1m5 0h1m3 0h1m10 0h2m12 0h1m25 0h1m21 0h1m2 0h1m10 0h1m2 0h1m68 0h1m10 0h1m7 0h1m22 0h1m23 0h1m4 0h1m5 0h1m23 0h1m4 0h1m41 0h1m17 0h1m21 0h1m5 0h1m15 0h1m2 0h1m4 0h1m7 0h1m14 0h1m7 0h1m2 0h1m23 0h1m40 0h1m18 0h1m20 0h1m18 0h1m2 0h1m2 0h1m13 0h1M42 40h1m15 0h1m16 0h1m14 0h1m16 0h1m20 0h2m20 0h2m8 0h1m42 0h1m28 0h1m25 0h1m9 0h1m1 0h1m8 0h1m3 0h1m15 0h1m21 0h1m1 0h1m2 0h1m32 0h1m24 0h1m14 0h1m11 0h1m6 0h1m38 0h1m15 0h1m116 0h1m5 0h2M18 41h2m25 0h2m6 0h2m11 0h1m3 0h1m28 0h2m3 0h1m11 0h1m24 0h1m4 0h1m31 0h1m33 0h3m2 0h1m19 0h1m11 0h2m21 0h1m29 0h1m7 0h2m30 0h1m6 0h1m5 0h1m17 0h1m23 0h1m2 0h1m50 0h1m29 0h1m3 0h1m1 0h1m27 0h1m13 0h1m22 0h1m41 0h1M5 42h1m18 0h1m9 0h1m20 0h1m8 0h1m19 0h2m10 0h1m28 0h1m14 0h1m13 0h1m3 0h1m36 0h1m20 0h1m4 0h1m51 0h1m4 0h1m1 0h1m14 0h1m11 0h1m10 0h1m28 0h1m9 0h1m3 0h2m16 0h1m23 0h1m57 0h1m33 0h1m6 0h1m23 0h1m19 0h1m13 0h1m1 0h1m13 0h1m9 0h1m5 0h1M12 43h1m11 0h1m23 0h1m4 0h1m40 0h1m3 0h1m15 0h1m5 0h1m10 0h1m2 0h1m22 0h1m15 0h1m12 0h1m9 0h1m4 0h2m3 0h1m6 0h1m3 0h1m25 0h1m4 0h1m32 0h1m11 0h1m4 0h1m7 0h1m12 0h2m8 0h1m27 0h1m25 0h1m10 0h2m68 0h1m1 0h1m27 0h2m28 0h1m2 0h1m6 0h1m56 0h1M12 44h1m12 0h1m41 0h1m15 0h1m89 0h1m39 0h1m3 0h1m61 0h1m13 0h1m19 0h1m5 0h2m33 0h1m21 0h1m9 0h1m11 0h1m16 0h1m29 0h1m16 0h1m1 0h1m12 0h1m15 0h1m2 0h1m26 0h1m60 0h1m10 0h1m2 0h1M13 45h1m25 0h1m40 0h1m68 0h1m2 0h1m7 0h1m7 0h1m33 0h1m16 0h1m19 0h1m36 0h1m11 0h2m16 0h1m14 0h1m12 0h1m36 0h1m48 0h1m25 0h1m6 0h1m67 0h1m5 0h1m5 0h1m33 0h1M0 46h1m22 0h1m11 0h1m44 0h1m55 0h1m23 0h1m32 0h1m7 0h1m22 0h1m3 0h1m1 0h1m12 0h1m27 0h1m1 0h1m115 0h1m12 0h1m5 0h1m1 0h1m52 0h1m17 0h1m4 0h1m15 0h1m65 0h1m18 0h1M48 47h1m19 0h1m7 0h1m27 0h1m6 0h1m2 0h1m15 0h1m12 0h1m25 0h1m2 0h1m20 0h1m13 0h1m8 0h1m7 0h1m69 0h1m5 0h2m9 0h1m8 0h1m12 0h1m32 0h1m2 0h1m16 0h1m15 0h1m74 0h1m6 0h1m7 0h1m33 0h1m19 0h1m15 0h1m8 0h1m2 0h1m15 0h1M13 48h1m38 0h1m4 0h1m72 0h1m9 0h2m20 0h1m23 0h1m27 0h1m2 0h1m24 0h1m42 0h1m14 0h1m38 0h1m14 0h1m13 0h1m22 0h1m31 0h1m6 0h1m20 0h1m13 0h1m17 0h1m36 0h1m18 0h1m3 0h1m7 0h1m9 0h1m8 0h1m26 0h1M14 49h1m44 0h1m30 0h1m35 0h1m39 0h1m21 0h1m1 0h1m22 0h1m41 0h1m12 0h1m33 0h1m6 0h1m35 0h1m2 0h1m29 0h1m1 0h1m24 0h2m5 0h1m8 0h1m1 0h1m2 0h1m5 0h1m17 0h1m3 0h1m19 0h1m24 0h1m28 0h1m15 0h1m7 0h1m13 0h1M8 50h1m3 0h1m71 0h1m13 0h1m10 0h1m21 0h1m33 0h1m9 0h1m65 0h1m7 0h1m35 0h1m18 0h1m19 0h1m9 0h1m1 0h1m1 0h2m32 0h2m32 0h1m18 0h1m30 0h1m6 0h1m5 0h1m4 0h1m26 0h1m30 0h1m18 0h1m5 0h1m10 0h1m1 0h1m8 0h1M11 51h1m36 0h1m2 0h1m25 0h1m11 0h1m2 0h1m15 0h1m8 0h3m4 0h1m19 0h1m44 0h1m23 0h1m23 0h1m58 0h1m19 0h1m40 0h1m18 0h1m29 0h1m79 0h1m1 0h1m7 0h1m10 0h1m6 0h2m3 0h1m14 0h1m12 0h1m5 0h1m4 0h1m3 0h1m24 0h1m5 0h1M19 52h1m56 0h1m25 0h1m35 0h1m32 0h1m24 0h1m4 0h1m34 0h1m20 0h1m1 0h1m11 0h2m9 0h1m12 0h1m26 0h1m10 0h1m14 0h1m13 0h1m35 0h1m27 0h1m17 0h1m13 0h1m29 0h1m16 0h1m1 0h1m4 0h1m47 0h1m1 0h1m6 0h1m10 0h1m13 0h1M5 53h1m23 0h1m15 0h1m3 0h1m19 0h1m9 0h1m18 0h1m5 0h1m8 0h1m5 0h1m6 0h1m9 0h1m11 0h1m29 0h1m2 0h1m11 0h1m44 0h1m3 0h1m26 0h1m8 0h1m14 0h1m7 0h1m8 0h1m17 0h1m24 0h1m44 0h1m7 0h1m24 0h1m26 0h1m7 0h1m10 0h1m13 0h1m4 0h1m12 0h1m8 0h1m3 0h1m16 0h1m3 0h1m3 0h1m6 0h2m18 0h1m5 0h1m16 0h1M12 54h1m8 0h1m6 0h1m4 0h1m24 0h1m31 0h1m1 0h1m4 0h1m5 0h1m17 0h1m56 0h2m3 0h1m1 0h1m9 0h1m59 0h1m32 0h1m5 0h1m41 0h1m83 0h1m23 0h1m17 0h1m39 0h1m4 0h2m12 0h1m5 0h1m16 0h1m4 0h2m30 0h1m14 0h1M29 55h1m4 0h1m54 0h1m2 0h1m15 0h1m1 0h1m9 0h1m1 0h1m1 0h2m8 0h1m19 0h1m6 0h1m2 0h1m39 0h1m4 0h1m8 0h1m7 0h1m8 0h3m9 0h1m37 0h1m52 0h1m12 0h1m63 0h1m17 0h1m15 0h1m116 0h1m1 0h1m27 0h1M32 56h1m2 0h1m3 0h1m36 0h1m31 0h1m19 0h1m4 0h1m3 0h1m2 0h1m13 0h1m11 0h1m30 0h1m24 0h1m31 0h1m2 0h1m3 0h1m56 0h1m2 0h1m11 0h1m12 0h1m12 0h2m82 0h2m5 0h1m12 0h1m2 0h1m3 0h1m18 0h1m3 0h2m13 0h1m68 0h1M10 57h1m46 0h1m3 0h1m10 0h1m18 0h1m17 0h2m14 0h1m30 0h1m9 0h1m1 0h1m1 0h1m6 0h1m66 0h1m13 0h1m19 0h1m31 0h1m31 0h1m23 0h1m29 0h1m3 0h1m11 0h1m7 0h2m4 0h1m8 0h1m28 0h1m23 0h1m23 0h1m2 0h1m9 0h1m23 0h2m12 0h1m21 0h2M15 58h1m52 0h1m37 0h1m7 0h1m26 0h1m57 0h1m12 0h1m28 0h1m8 0h1m7 0h1m9 0h1m1 0h1m36 0h1m9 0h1m16 0h1m35 0h1m6 0h1m37 0h1m20 0h1m1 0h1m8 0h1m6 0h1m22 0h1m15 0h1m17 0h1m6 0h1m5 0h1m14 0h1m4 0h1m17 0h1m2 0h1m4 0h1m6 0h1m17 0h1M10 59h1m36 0h1m39 0h1m1 0h1m88 0h1m3 0h1m71 0h1m12 0h1m8 0h1m9 0h1m8 0h1m19 0h1m7 0h1m4 0h1m18 0h1m14 0h1m63 0h1m38 0h1m3 0h1m61 0h1m12 0h1m16 0h1m30 0h1M10 60h1m38 0h1m1 0h1m2 0h1m8 0h1m19 0h1m12 0h1m18 0h1m1 0h1m27 0h1m70 0h1m2 0h1m5 0h1m24 0h1m4 0h1m11 0h1m21 0h1m23 0h1m1 0h1m26 0h2m16 0h1m23 0h1m20 0h1m8 0h1m1 0h1m24 0h1m14 0h1m30 0h1m33 0h2m5 0h1m1 0h1m4 0h1m30 0h1m21 0h1m6 0h1m1 0h1M19 61h1m18 0h1m9 0h1m34 0h1m10 0h1m38 0h1m31 0h1m40 0h1m16 0h1m73 0h1m3 0h1m17 0h1m34 0h1m54 0h1m31 0h1m23 0h1m5 0h1m24 0h1m86 0h1m6 0h1M3 62h1m34 0h1m32 0h1m30 0h1m3 0h1m1 0h1m5 0h1m4 0h1m28 0h1m12 0h1m21 0h1m10 0h1m1 0h1m37 0h1m23 0h1m29 0h1m5 0h1m28 0h1m2 0h1m3 0h1m1 0h1m4 0h1m20 0h1m11 0h1m13 0h1m36 0h1m9 0h1m9 0h1m11 0h1m65 0h1m8 0h1M24 63h1m11 0h1m6 0h1m8 0h1m16 0h1m2 0h1m6 0h1m24 0h1m3 0h1m8 0h1m14 0h1m9 0h1m7 0h1m10 0h1m9 0h2m18 0h1m32 0h1m6 0h1m4 0h1m5 0h1m31 0h1m8 0h1m21 0h1m6 0h1m25 0h1m17 0h1m45 0h1m4 0h1m10 0h1m1 0h1m10 0h1m2 0h1m11 0h2m6 0h1m10 0h1m5 0h1m6 0h1m32 0h1m52 0h1m11 0h1m2 0h1m8 0h1M22 64h2m8 0h1m9 0h1m14 0h1m8 0h1m62 0h1m51 0h1m44 0h1m3 0h1m55 0h1m5 0h1m19 0h1m6 0h1m6 0h1m15 0h1m27 0h1m27 0h1m26 0h1m1 0h1m19 0h1m9 0h1m4 0h2m4 0h1m5 0h1m16 0h1m15 0h1m13 0h1m21 0h1m2 0h1m22 0h1m28 0h1M3 65h1m12 0h1m8 0h1m20 0h1m21 0h1m39 0h1m15 0h1m3 0h1m6 0h1m26 0h1m34 0h1m16 0h1m4 0h1m25 0h1m73 0h1m23 0h1m3 0h1m3 0h1m4 0h1m16 0h1m13 0h1m11 0h1m44 0h1m30 0h1m13 0h1m6 0h1m66 0h1m17 0h1M11 66h1m31 0h1m25 0h1m11 0h1m14 0h1m20 0h1m1 0h1m5 0h1m7 0h1m39 0h1m4 0h1m40 0h1m17 0h1m3 0h1m60 0h1m24 0h1m12 0h1m6 0h1m23 0h1m4 0h1m34 0h1m10 0h1m10 0h1m7 0h1m10 0h1m22 0h1m30 0h1m18 0h1m9 0h1m3 0h1m5 0h1m4 0h1m31 0h1M16 67h2m15 0h1m4 0h1m36 0h1m3 0h1m6 0h1m28 0h2m15 0h1m1 0h1m2 0h1m9 0h1m18 0h1m11 0h1m4 0h1m28 0h1m13 0h1m5 0h2m33 0h1m10 0h1m26 0h1m12 0h1m21 0h1m4 0h1m28 0h1m3 0h1m53 0h1m18 0h1m18 0h1m33 0h1m15 0h1m1 0h1m34 0h1m12 0h1M0 68h1m11 0h1m17 0h1m11 0h3m5 0h1m4 0h1m48 0h1m7 0h1m12 0h1m58 0h1m3 0h1m25 0h1m8 0h1m49 0h1m34 0h1m14 0h1m7 0h1m2 0h2m14 0h1m26 0h1m14 0h1m19 0h1m4 0h1m4 0h1m5 0h1m32 0h1m29 0h2m13 0h1m50 0h1M0 69h1m8 0h1m7 0h1m52 0h1m3 0h1m62 0h1m5 0h1m4 0h3m41 0h1m42 0h1m12 0h1m26 0h1m22 0h1m6 0h1m20 0h1m17 0h1m27 0h2m4 0h1m70 0h1m7 0h1m8 0h1m4 0h1m27 0h1m13 0h1m23 0h1m9 0h1m26 0h1M9 70h1m6 0h1m1 0h1m7 0h1m16 0h1m28 0h1m21 0h1m69 0h2m34 0h1m5 0h1m12 0h1m31 0h1m14 0h1m38 0h1m28 0h1m31 0h1m3 0h1m9 0h1m15 0h1m40 0h1m55 0h1m67 0h1m5 0h1m20 0h2m6 0h1M28 71h1m12 0h1m26 0h1m4 0h1m7 0h1m2 0h1m29 0h1m29 0h1m11 0h1m29 0h1m3 0h1m7 0h1m48 0h1m16 0h1m2 0h1m26 0h1m28 0h1m4 0h1m1 0h1m8 0h1m20 0h1m12 0h2m4 0h1m32 0h1m24 0h1m62 0h1m11 0h1m3 0h1m4 0h1m54 0h1m4 0h1m12 0h2M15 72h1m2 0h1m43 0h1m16 0h2m11 0h1m37 0h1m12 0h1m24 0h1m22 0h2m16 0h1m134 0h1m24 0h1m10 0h1m10 0h1m14 0h1m2 0h1m40 0h1m2 0h1m34 0h1m2 0h1m9 0h1m5 0h1m13 0h1m13 0h1m7 0h1m16 0h1m15 0h1M48 73h1m10 0h1m19 0h1m29 0h1m8 0h2m30 0h1m3 0h1m41 0h1m43 0h2m16 0h1m7 0h1m47 0h1m4 0h1m17 0h1m1 0h1m40 0h1m4 0h1m2 0h1m23 0h1m7 0h1m43 0h1m9 0h1m5 0h1m14 0h1m65 0h1M27 74h1m13 0h1m2 0h1m6 0h1m4 0h1m7 0h1m14 0h1m2 0h1m9 0h1m15 0h1m2 0h1m60 0h1m43 0h2m68 0h1m51 0h1m4 0h1m1 0h1m7 0h1m3 0h1m4 0h1m34 0h1m12 0h1m16 0h1m28 0h1m8 0h1m1 0h1m55 0h1M37 75h1m3 0h1m4 0h1m4 0h1m4 0h1m16 0h1m28 0h1m5 0h1m8 0h1m1 0h1m31 0h1m82 0h1m52 0h1m7 0h1m18 0h1m30 0h1m2 0h1m6 0h1m29 0h1m28 0h1m9 0h1m7 0h1m8 0h1m3 0h1m2 0h1m36 0h1m13 0h1m10 0h1m1 0h1m46 0h1m37 0h1M0 76h1m8 0h1m8 0h1m13 0h1m11 0h1m21 0h1m69 0h1m21 0h1m41 0h1m5 0h1m21 0h1m10 0h1m14 0h1m4 0h1m54 0h1m8 0h1m26 0h1m2 0h1m38 0h1m13 0h1m45 0h1m18 0h1m18 0h1m41 0h1m35 0h1M1 77h1m13 0h1m66 0h1m25 0h1m29 0h2m23 0h1m109 0h1m27 0h1m25 0h1m43 0h1m30 0h1m22 0h1m27 0h1m9 0h1m40 0h1m20 0h1m2 0h1m30 0h1M0 78h1m8 0h1m7 0h1m9 0h2m1 0h1m3 0h1m60 0h1m2 0h1m1 0h1m65 0h1m15 0h1m27 0h1m4 0h1m1 0h1m3 0h1m13 0h1m25 0h1m6 0h1m54 0h1m11 0h1m18 0h1m1 0h1m6 0h1m103 0h1m9 0h1m5 0h2m49 0h1m29 0h1m2 0h1m27 0h1M11 79h1m17 0h1m5 0h1m27 0h1m56 0h1m16 0h1m2 0h1m6 0h1m8 0h1m7 0h1m23 0h1m36 0h1m40 0h1m55 0h1m5 0h1m43 0h1m26 0h1m33 0h1m20 0h1m13 0h1m9 0h2m17 0h1m2 0h1m14 0h1m1 0h1m20 0h1m2 0h1m14 0h1m4 0h1m13 0h1M14 80h1m6 0h2m2 0h1m10 0h1m5 0h1m15 0h1m26 0h1m26 0h1m30 0h1m77 0h1m10 0h1m32 0h1m64 0h1m36 0h1m3 0h1m4 0h1m49 0h1m6 0h1m14 0h1m14 0h1m10 0h1m29 0h1m76 0h1m6 0h1M3 81h1m13 0h1m32 0h1m9 0h1m29 0h1m48 0h1m18 0h2m23 0h1m32 0h1m9 0h1m11 0h1m5 0h1m10 0h1m15 0h1m10 0h1m7 0h1m16 0h1m7 0h1m17 0h1m24 0h1m25 0h1m18 0h1m32 0h1m19 0h1m34 0h1m13 0h1m4 0h1m40 0h1m6 0h1m19 0h1M6 82h2m1 0h1m32 0h1m8 0h1m30 0h2m48 0h2m8 0h1m37 0h1m1 0h1m7 0h1m19 0h1m15 0h1m8 0h1m59 0h1m9 0h1m1 0h1m64 0h1m13 0h1m28 0h1m5 0h1m6 0h1m63 0h1m1 0h1m42 0h1m56 0h1M14 83h1m11 0h1m22 0h1m53 0h1m6 0h1m13 0h1m39 0h1m34 0h1m2 0h1m9 0h1m17 0h1m15 0h1m59 0h1m65 0h1m45 0h1m14 0h1m7 0h1m23 0h1m12 0h1m7 0h1m8 0h1m11 0h1m21 0h1m9 0h1m27 0h1m2 0h1M13 84h1m3 0h1m5 0h1m6 0h1m16 0h1m17 0h1m8 0h1m2 0h1m25 0h2m5 0h1m17 0h1m17 0h1m54 0h1m12 0h1m49 0h1m20 0h1m23 0h1m41 0h1m3 0h1m12 0h1m8 0h1m27 0h1m5 0h1m24 0h1m23 0h1m39 0h1m14 0h1m17 0h1m2 0h1m54 0h1m1 0h1m3 0h1M12 85h1m25 0h1m13 0h1m12 0h1m8 0h1m66 0h1m13 0h1m33 0h1m6 0h1m63 0h1m13 0h1m6 0h1m23 0h1m7 0h1m24 0h1m29 0h1m3 0h1m67 0h1m17 0h1m18 0h1m5 0h1m19 0h1m27 0h1m9 0h1m21 0h1m6 0h1m5 0h1m2 0h1M24 86h1m7 0h1m3 0h1m16 0h1m2 0h1m6 0h1m15 0h1m23 0h1m7 0h1m8 0h1m64 0h1m27 0h1m43 0h1m62 0h1m18 0h1m51 0h1m94 0h1m36 0h1m12 0h1m6 0h1m50 0h1M7 87h1m47 0h1m4 0h1m38 0h1m7 0h1m23 0h1m32 0h1m26 0h1m5 0h1m1 0h1m3 0h1m49 0h1m1 0h1m11 0h1m39 0h1m17 0h1m1 0h1m16 0h1m72 0h1m19 0h1m4 0h1m15 0h1m20 0h1m6 0h1m6 0h1m2 0h1m101 0h1M28 88h1m7 0h1m14 0h1m81 0h1m33 0h1m15 0h1m23 0h2m20 0h2m3 0h1m8 0h1m6 0h1m27 0h1m7 0h1m1 0h1m30 0h1m13 0h1m28 0h1m3 0h1m38 0h1m13 0h1m7 0h1m13 0h1m23 0h1m37 0h1m2 0h1m5 0h1m2 0h1m63 0h1m6 0h1M2 89h1m16 0h1m19 0h1m34 0h1m8 0h1m11 0h1m8 0h1m21 0h1m32 0h1m31 0h1m58 0h1m6 0h1m37 0h1m13 0h1m90 0h2m7 0h1m41 0h1m5 0h1m15 0h2m22 0h1m52 0h1m15 0h1m1 0h2m18 0h1M55 90h1m37 0h1m21 0h1m16 0h1m18 0h1m2 0h2m2 0h1m11 0h1m4 0h1m9 0h1m14 0h1m16 0h1m16 0h1m10 0h1m14 0h2m1 0h1m20 0h2m3 0h1m29 0h1m12 0h1m4 0h1m4 0h1m6 0h1m7 0h1m13 0h1m17 0h1m5 0h1m11 0h1m33 0h1m33 0h1m25 0h1m74 0h1m8 0h1M0 91h1m62 0h1m42 0h1m14 0h1m20 0h1m11 0h1m45 0h1m45 0h1m8 0h1m6 0h1m1 0h1m55 0h1m29 0h1m34 0h1m22 0h1m13 0h1m27 0h1m27 0h1m21 0h1m9 0h1m5 0h1m25 0h1m26 0h1m27 0h1M6 92h1m16 0h1m4 0h1m43 0h1m6 0h1m2 0h1m18 0h1m27 0h1m35 0h1m11 0h1m4 0h1m9 0h1m32 0h1m29 0h1m23 0h1m39 0h2m9 0h1m24 0h1m23 0h1m52 0h1m55 0h1m2 0h1m38 0h1m4 0h1m2 0h1m23 0h1m23 0h1M1 93h1m2 0h1m19 0h1m2 0h1m14 0h1m15 0h1m7 0h1m24 0h1m34 0h1m6 0h1m11 0h1m10 0h1m11 0h1m35 0h1m12 0h1m1 0h1m4 0h1m13 0h1m18 0h1m88 0h1m8 0h1m11 0h1m3 0h1m11 0h1m43 0h1m16 0h1m30 0h2m21 0h1m5 0h1m43 0h1m3 0h1m43 0h1M14 94h1m17 0h1m66 0h2m1 0h1m29 0h1m7 0h1m21 0h1m46 0h1m56 0h1m80 0h1m48 0h1m15 0h1m87 0h1m11 0h1m16 0h1m1 0h1m10 0h1m18 0h1m24 0h1M9 95h1m65 0h1m8 0h1m12 0h1m28 0h1m14 0h1m25 0h1m1 0h1m39 0h1m18 0h1m7 0h1m1 0h1m24 0h1m58 0h1m8 0h1m1 0h1m5 0h1m45 0h1m4 0h1m20 0h1m51 0h1m4 0h1m19 0h1m14 0h1m33 0h1m5 0h1M33 96h1m4 0h1m6 0h1m6 0h1m21 0h1m17 0h1m3 0h1m5 0h2m32 0h1m17 0h1m25 0h1m1 0h1m9 0h1m23 0h1m5 0h1m5 0h1m16 0h1m21 0h1m46 0h1m1 0h1m7 0h1m15 0h1m22 0h1m21 0h1m43 0h1m7 0h1m12 0h1m42 0h1m22 0h1m61 0h1M31 97h1m14 0h1m2 0h1m8 0h1m37 0h1m49 0h1m30 0h1m15 0h1m52 0h1m31 0h1m7 0h1m10 0h1m13 0h1m3 0h1m15 0h1m6 0h1m9 0h1m4 0h1m16 0h1m7 0h1m21 0h1m9 0h1m2 0h1m35 0h1m36 0h1m33 0h1m8 0h1m35 0h1M18 98h1m14 0h1m55 0h1m40 0h1m1 0h1m6 0h1m18 0h1m61 0h2m25 0h2m3 0h1m25 0h1m14 0h1m11 0h1m6 0h1m1 0h1m20 0h1m7 0h1m7 0h1m13 0h1m13 0h1m15 0h1m51 0h1m42 0h1m13 0h1m4 0h1m14 0h1m4 0h1m12 0h1m14 0h1M45 99h1m27 0h1m17 0h1m53 0h1m50 0h1m42 0h1m10 0h1m11 0h1m2 0h1m25 0h1m28 0h1m8 0h1m22 0h1m3 0h1m7 0h1m15 0h1m11 0h1m5 0h1m8 0h1m39 0h1m5 0h1m14 0h1m52 0h1m49 0h1m5 0h1M17 100h1m16 0h1m1 0h1m25 0h1m23 0h1m3 0h1m32 0h1m11 0h1m8 0h1m10 0h1m17 0h1m18 0h1m22 0h1m22 0h1m75 0h1m50 0h1m33 0h1m1 0h1m3 0h1m7 0h1m2 0h1m1 0h1m5 0h1m3 0h1m28 0h1m55 0h1m32 0h1m47 0h1M9 101h1m90 0h1m50 0h1m10 0h1m1 0h1m31 0h1m23 0h1m1 0h1m2 0h1m3 0h1m141 0h2m1 0h1m41 0h1m6 0h1m4 0h1m6 0h1m31 0h1m27 0h1m1 0h1m18 0h1m1 0h1m7 0h1m71 0h1M8 102h2m23 0h1m4 0h1m7 0h1m4 0h1m62 0h1m19 0h1m118 0h1m55 0h1m4 0h1m15 0h1m5 0h1m3 0h1m15 0h1m36 0h1m3 0h1m23 0h1m43 0h1m7 0h1m12 0h1m22 0h1m17 0h1m1 0h1m12 0h1m2 0h1m17 0h1m17 0h1m1 0h1M0 103h1m5 0h1m9 0h1m8 0h1m13 0h1m3 0h1m20 0h1m31 0h1m13 0h1m5 0h1m27 0h2m40 0h1m7 0h1m28 0h1m10 0h3m9 0h1m41 0h1m1 0h1m52 0h1m37 0h1m26 0h1m34 0h1m5 0h2m31 0h1m52 0h1m1 0h1m5 0h1m9 0h1m4 0h1m13 0h1m5 0h1M24 104h1m37 0h1m10 0h1m15 0h1m9 0h1m5 0h1m4 0h1m26 0h1m30 0h1m28 0h1m8 0h1m78 0h1m39 0h1m25 0h1m7 0h1m14 0h1m2 0h1m15 0h1m25 0h2m5 0h1m14 0h1m33 0h1m4 0h1m15 0h1M26 105h1m3 0h1m39 0h1m3 0h1m40 0h1m5 0h1m3 0h1m10 0h1m22 0h1m14 0h1m28 0h1m2 0h1m57 0h1m23 0h1m33 0h1m11 0h1m17 0h1m14 0h1m8 0h1m27 0h1m4 0h1m11 0h1m22 0h1m12 0h1m9 0h1m35 0h1m36 0h1m11 0h1m4 0h1M9 106h1m13 0h2m2 0h1m2 0h1m13 0h1m1 0h2m18 0h1m17 0h1m26 0h1m67 0h1m18 0h1m15 0h2m28 0h1m32 0h1m44 0h1m33 0h1m34 0h1m18 0h1m22 0h1m16 0h1m6 0h1m5 0h1m33 0h1m45 0h1m31 0h1m19 0h1M2 107h1m29 0h1m55 0h1m4 0h1m18 0h1m11 0h1m10 0h1m41 0h1m1 0h1m31 0h1m18 0h1m13 0h1m1 0h1m23 0h1m11 0h1m7 0h1m8 0h1m18 0h1m25 0h1m20 0h1m3 0h1m18 0h2m1 0h1m11 0h1m28 0h2m18 0h1m43 0h1m24 0h1m13 0h1m17 0h1m23 0h1m11 0h1M47 108h1m45 0h1m3 0h1m9 0h1m78 0h1m8 0h1m1 0h1m3 0h1m14 0h1m12 0h1m10 0h1m12 0h1m16 0h1m7 0h1m15 0h1m7 0h1m1 0h1m9 0h1m8 0h1m40 0h1m47 0h2m7 0h1m20 0h1m63 0h1m62 0h1M9 109h1m40 0h1m13 0h1m6 0h1m4 0h1m58 0h2m12 0h1m19 0h1m11 0h1m7 0h1m28 0h1m48 0h1m143 0h1m84 0h1m26 0h1m43 0h1m3 0h1m25 0h1M27 110h1m7 0h1m45 0h1m20 0h2m30 0h1m25 0h1m12 0h1m33 0h1m1 0h1m17 0h1m15 0h1m42 0h1m8 0h1m4 0h1m12 0h1m63 0h1m19 0h1m6 0h1m1 0h1m1 0h1m7 0h1m30 0h1m28 0h1m16 0h1m1 0h1m26 0h1m1 0h1m23 0h1m15 0h1M42 111h1m8 0h1m8 0h1m9 0h1m17 0h1m6 0h1m57 0h1m2 0h1m8 0h1m5 0h1m17 0h1m62 0h1m38 0h1m2 0h1m1 0h1m3 0h1m6 0h1m5 0h1m1 0h1m60 0h1m15 0h1m82 0h1m4 0h1m35 0h1m33 0h2m8 0h1m15 0h1m17 0h1M74 112h1m9 0h1m11 0h2m17 0h1m25 0h1m4 0h1m2 0h1m59 0h1m25 0h1m4 0h2m8 0h1m14 0h1m9 0h1m7 0h1m28 0h1m3 0h1m3 0h1m1 0h1m17 0h1m55 0h1m14 0h1m11 0h1m7 0h1m34 0h1m13 0h1m24 0h1m4 0h1m6 0h1m19 0h1m48 0h1m3 0h1M30 113h1m19 0h1m2 0h1m24 0h1m3 0h1m30 0h1m2 0h1m14 0h1m6 0h1m6 0h1m2 0h1m3 0h1m7 0h1m18 0h1m14 0h2m5 0h1m16 0h2m10 0h1m2 0h1m2 0h1m4 0h1m1 0h1m9 0h1m29 0h1m2 0h1m2 0h1m30 0h1m2 0h1m9 0h1m25 0h1m48 0h1m29 0h1m13 0h1m26 0h1m34 0h1m7 0h1m30 0h1m5 0h1m6 0h1m5 0h1m6 0h1m8 0h1m3 0h1M35 114h1m31 0h1m4 0h1m28 0h1m3 0h1m4 0h1m36 0h1m15 0h1m19 0h1m31 0h1m2 0h1m18 0h1m13 0h1m12 0h1m18 0h1m8 0h1m27 0h1m9 0h1m8 0h1m9 0h1m4 0h1m10 0h1m8 0h1m63 0h1m12 0h1m47 0h1m11 0h1m10 0h1m2 0h1m15 0h1m5 0h1m10 0h1m17 0h1m1 0h1m11 0h1M6 115h1m9 0h1m4 0h1m22 0h1m33 0h1m87 0h1m11 0h1m13 0h1m16 0h1m43 0h1m11 0h1m30 0h1m30 0h1m12 0h1m61 0h1m5 0h1m3 0h1m10 0h1m22 0h1m47 0h1m10 0h1m38 0h1m27 0h1m14 0h1M47 116h1m38 0h1m17 0h1m14 0h1m7 0h1m5 0h1m31 0h1m27 0h1m14 0h1m59 0h1m3 0h1m26 0h1m46 0h1m19 0h1m32 0h1m42 0h1m5 0h1m29 0h1m11 0h1m82 0h1m15 0h1M60 117h1m17 0h1m18 0h1m6 0h1m1 0h2m39 0h1m26 0h1m11 0h1m24 0h1m24 0h2m6 0h1m36 0h1m9 0h1m30 0h1m4 0h1m10 0h1m8 0h1m10 0h1m23 0h1m1 0h1m39 0h1m24 0h1m4 0h1m3 0h1m4 0h1m35 0h1m50 0h1m35 0h1M8 118h1m41 0h1m15 0h1m17 0h1m2 0h1m87 0h1m22 0h1m31 0h1m8 0h1m3 0h1m2 0h1m92 0h1m1 0h1m17 0h1m4 0h1m58 0h1m24 0h1m19 0h1m7 0h1m67 0h1m7 0h1m20 0h1m1 0h1m5 0h1M1 119h1m3 0h1m5 0h1m1 0h1m7 0h1m12 0h1m23 0h1m9 0h1m90 0h1m50 0h1m18 0h1m14 0h1m26 0h1m66 0h1m19 0h1m4 0h1m21 0h1m1 0h1m4 0h1m1 0h1m50 0h1m15 0h1m1 0h1m6 0h1m74 0h1m22 0h1m6 0h2m6 0h1M23 120h1m9 0h1m80 0h1m22 0h1m16 0h1m15 0h1m22 0h1m6 0h1m11 0h1m15 0h1m25 0h1m14 0h1m112 0h1m39 0h1m17 0h1m54 0h1m26 0h1m19 0h1m17 0h1m25 0h1M72 121h1m15 0h1m2 0h1m3 0h1m4 0h1m1 0h1m1 0h1m22 0h1m22 0h1m7 0h1m21 0h1m13 0h1m1 0h1m9 0h1m9 0h1m15 0h1m24 0h1m10 0h1m1 0h1m32 0h1m2 0h1m3 0h1m15 0h1m1 0h1m60 0h1m7 0h1m40 0h1m7 0h1m4 0h1m49 0h1m3 0h1m5 0h1m69 0h1M19 122h1m3 0h1m7 0h1m4 0h1m57 0h1m12 0h1m39 0h1m40 0h1m12 0h1m12 0h1m19 0h1m3 0h1m55 0h1m24 0h1m15 0h1m8 0h1m25 0h1m3 0h1m55 0h1m11 0h1m17 0h1m2 0h1m24 0h1m15 0h1m35 0h1m6 0h1m25 0h1m1 0h1m8 0h1M32 123h1m14 0h2m18 0h2m39 0h1m11 0h1m11 0h1m5 0h1m26 0h1m19 0h2m35 0h1m37 0h1m41 0h1m34 0h1m2 0h1m18 0h1m62 0h1m32 0h2m73 0h1m25 0h1M9 124h1m6 0h1m19 0h2m2 0h1m1 0h1m1 0h1m9 0h1m8 0h1m20 0h1m6 0h1m28 0h1m13 0h1m53 0h1m26 0h1m24 0h1m53 0h1m5 0h1m49 0h1m49 0h1m8 0h1m6 0h1m27 0h1m1 0h1m15 0h1m7 0h1m32 0h1m57 0h1m29 0h1m3 0h1M0 125h1m5 0h1m5 0h2m55 0h1m12 0h1m7 0h1m39 0h1m54 0h1m35 0h1m26 0h1m11 0h1m2 0h1m20 0h1m1 0h1m2 0h1m5 0h1m22 0h1m22 0h1m7 0h1m4 0h1m36 0h2m54 0h1m12 0h1m15 0h1m28 0h1m5 0h1m14 0h1m5 0h1m10 0h1m12 0h1m13 0h1m11 0h1M26 126h2m22 0h1m5 0h1m5 0h1m13 0h1m18 0h1m55 0h1m2 0h1m2 0h1m2 0h1m15 0h1m3 0h1m24 0h1m32 0h1m5 0h1m35 0h1m19 0h2m58 0h1m36 0h1m20 0h1m120 0h1m9 0h1m36 0h1M8 127h1m10 0h1m60 0h1m1 0h1m1 0h1m24 0h1m10 0h1m23 0h1m2 0h1m12 0h1m62 0h1m24 0h1m2 0h1m27 0h1m27 0h1m51 0h1m15 0h1m28 0h1m69 0h1m19 0h1m12 0h1m41 0h1M27 128h1m65 0h1m6 0h1m1 0h1m46 0h1m15 0h1m13 0h1m90 0h1m5 0h1m6 0h2m16 0h1m27 0h1m97 0h1m69 0h1m32 0h1m22 0h1m38 0h1m3 0h1M1 129h1m28 0h1m12 0h1m61 0h1m5 0h1m3 0h1m17 0h1m2 0h1m4 0h1m2 0h1m12 0h1m14 0h1m58 0h1m82 0h1m9 0h1m26 0h1m103 0h1m12 0h1m13 0h1m19 0h1m54 0h1m3 0h1m12 0h1m19 0h1M14 130h1m3 0h1m75 0h1m31 0h1m6 0h1m34 0h1m40 0h2m6 0h1m8 0h1m6 0h1m21 0h1m8 0h1m13 0h1m53 0h1m30 0h1m9 0h1m2 0h1m22 0h1m26 0h1m10 0h1m1 0h1m17 0h1m5 0h1m26 0h1m21 0h1m10 0h1m16 0h1m45 0h1m3 0h1M44 131h1m93 0h1m8 0h1m45 0h1m31 0h1m6 0h1m8 0h1m17 0h1m13 0h1m35 0h1m9 0h1m20 0h1m1 0h1m3 0h1m60 0h1m19 0h1m11 0h2m21 0h1m13 0h1m22 0h1m2 0h1m10 0h1m14 0h1m9 0h1m5 0h1m37 0h1m11 0h1M8 132h1m26 0h1m65 0h1m18 0h1m24 0h1m1 0h1m1 0h1m12 0h1m1 0h1m21 0h1m50 0h1m11 0h1m10 0h1m33 0h1m53 0h1m33 0h1m54 0h1m2 0h1m11 0h1m29 0h1m52 0h1m30 0h1m19 0h1M94 133h1m22 0h1m40 0h1m47 0h1m45 0h1m6 0h1m18 0h1m5 0h1m1 0h1m4 0h1m12 0h1m14 0h1m5 0h1m8 0h1m6 0h1m39 0h1m1 0h1m4 0h1m7 0h1m23 0h1m80 0h1m5 0h1m3 0h1m52 0h1m16 0h1m1 0h1m10 0h1M1 134h1m51 0h1m2 0h1m16 0h1m23 0h1m85 0h1m8 0h1m4 0h1m10 0h1m35 0h1m20 0h1m13 0h1m23 0h1m5 0h2m21 0h1m7 0h1m29 0h1m18 0h1m23 0h1m55 0h1m31 0h1m81 0h1m8 0h1M28 135h1m5 0h1m14 0h1m53 0h1m31 0h1m1 0h1m69 0h1m5 0h1m15 0h1m27 0h1m58 0h1m21 0h1m4 0h1m33 0h1m46 0h1m81 0h1m50 0h1m9 0h1m17 0h1M14 136h1m20 0h1m94 0h1m4 0h1m34 0h1m29 0h1m40 0h1m56 0h1m33 0h1m5 0h1m6 0h1m11 0h1m42 0h1m55 0h1m6 0h1m22 0h1m13 0h1m3 0h1m3 0h1m23 0h1m63 0h1M4 137h1m83 0h1m10 0h1m53 0h1m18 0h1m15 0h1m18 0h1m29 0h1m30 0h1m45 0h1m3 0h1m63 0h1m9 0h1m29 0h1m16 0h1m34 0h1m17 0h1m14 0h1M74 138h1m6 0h1m7 0h1m45 0h1m5 0h1m43 0h1m35 0h1m9 0h1m5 0h1m5 0h1m36 0h1m31 0h1m39 0h1m10 0h1m8 0h1m26 0h1m38 0h1m2 0h1m10 0h1m43 0h1m8 0h1m2 0h1m29 0h1m26 0h1M40 139h1m18 0h1m13 0h1m23 0h1m67 0h1m3 0h1m11 0h1m14 0h1m12 0h1m16 0h1m3 0h1m1 0h1m37 0h1m47 0h1m46 0h1m23 0h1m48 0h1m35 0h2m9 0h1m13 0h1m18 0h1m22 0h1m13 0h1m8 0h1m6 0h1m17 0h1m5 0h1m1 0h1M7 140h1m14 0h1m25 0h1m1 0h1m11 0h1m21 0h1m13 0h1m22 0h1m43 0h1m152 0h1m18 0h1m10 0h2m3 0h1m8 0h1m7 0h2m19 0h1m8 0h1m4 0h1m11 0h1m25 0h1m13 0h1m32 0h1m22 0h1m10 0h1m1 0h1m46 0h1m2 0h1M3 141h1m68 0h1m16 0h1m9 0h1m5 0h1m16 0h2m5 0h1m27 0h1m42 0h1m13 0h1m42 0h1m33 0h1m60 0h1m19 0h1m71 0h1m41 0h1m2 0h1M87 142h1m180 0h1m29 0h1m3 0h2m4 0h1m24 0h1m40 0h1m14 0h1m10 0h1m12 0h1m15 0h1m37 0h1m7 0h1m1 0h1m2 0h1m13 0h1m63 0h1m12 0h2M12 143h1m11 0h1m4 0h1m13 0h1m55 0h1m10 0h1m48 0h1m10 0h2m48 0h1m14 0h1m40 0h1m51 0h1m20 0h1m11 0h1m22 0h1m57 0h1m36 0h1m13 0h1m5 0h1m5 0h1m53 0h1m17 0h1M24 144h1m18 0h1m49 0h1m1 0h1m4 0h1m33 0h1m5 0h1m13 0h1m19 0h1m16 0h1m64 0h1m26 0h1m42 0h1m18 0h1m33 0h1m9 0h1m34 0h1m74 0h1m8 0h1m12 0h1m17 0h1m11 0h1M73 145h1m4 0h1m5 0h1m23 0h1m5 0h1m44 0h1m6 0h1m36 0h1m8 0h1m3 0h1m169 0h1m30 0h1m3 0h1m18 0h1m12 0h1m16 0h1m21 0h1m94 0h1m4 0h1M11 146h1m10 0h1m66 0h1m19 0h2m24 0h2m48 0h1m20 0h1m8 0h1m41 0h1m7 0h1m14 0h1m8 0h1m29 0h1m4 0h1m14 0h1m1 0h1m1 0h1m28 0h1m4 0h1m10 0h2m1 0h1m8 0h1m73 0h1m35 0h1m3 0h1m11 0h1m1 0h1m23 0h1m8 0h1m16 0h1m11 0h1m6 0h1M6 147h1m34 0h1m3 0h1m59 0h1m28 0h1m5 0h1m2 0h1m17 0h1m66 0h1m2 0h1m55 0h1m4 0h1m39 0h1m3 0h1m8 0h1m15 0h1m1 0h1m47 0h1m2 0h1m23 0h1m28 0h1m8 0h1m15 0h1m11 0h1m22 0h1M21 148h1m10 0h1m35 0h1m30 0h1m30 0h1m16 0h1m3 0h1m20 0h1m13 0h1m75 0h1m49 0h1m43 0h1m16 0h1m48 0h1m21 0h1m1 0h1m3 0h1m25 0h1m17 0h1m12 0h1m21 0h1m21 0h1m5 0h1m2 0h1m3 0h1m11 0h1M9 149h1m46 0h1m15 0h1m4 0h1m11 0h1m24 0h1m10 0h1m15 0h1m22 0h1m3 0h1m64 0h1m11 0h1m31 0h1m5 0h1m48 0h1m11 0h1m69 0h1m4 0h1m8 0h1m23 0h1m72 0h1M1 150h1m7 0h1m3 0h1m10 0h1m70 0h1m7 0h1m57 0h1m6 0h1m140 0h1m27 0h1m9 0h1m26 0h1m14 0h1m8 0h1m49 0h1m3 0h1m4 0h1m3 0h1m10 0h1m91 0h1m20 0h1M11 151h1m35 0h1m3 0h1m31 0h1m9 0h1m138 0h1m16 0h1m3 0h1m3 0h1m28 0h1m68 0h1m116 0h1m4 0h1m13 0h1m29 0h1m24 0h1M0 152h1m14 0h1m21 0h1m67 0h1m25 0h1m81 0h1m24 0h1m43 0h1m97 0h1m22 0h1m28 0h1m55 0h1m56 0h1m14 0h1m7 0h2M23 153h1m4 0h1m11 0h1m19 0h1m14 0h1m85 0h1m21 0h1m16 0h1m3 0h1m30 0h1m63 0h1m4 0h1m24 0h1m34 0h1m26 0h1m4 0h1m15 0h1m30 0h1m2 0h1m19 0h1m7 0h1m11 0h1m27 0h1m4 0h1m1 0h1m49 0h1m26 0h1M25 154h1m13 0h1m5 0h1m60 0h1m12 0h1m2 0h1m10 0h1m42 0h2m71 0h1m47 0h1m8 0h1m10 0h1m23 0h1m22 0h1m54 0h2m6 0h1m8 0h1m31 0h1m9 0h1m16 0h1m27 0h1m12 0h1m58 0h1M22 155h1m47 0h1m28 0h1m41 0h1m159 0h1m1 0h2m16 0h1m29 0h1m35 0h1m19 0h1m33 0h1m100 0h1m16 0h1M77 156h1m20 0h1m26 0h1m36 0h1m5 0h1m37 0h1m1 0h1m95 0h1m35 0h1m36 0h1m13 0h1m12 0h1m14 0h1m81 0h1m3 0h1m78 0h2M41 157h1m9 0h1m47 0h1m35 0h1m19 0h1m23 0h1m21 0h1m81 0h1m6 0h1m35 0h1m59 0h1m8 0h1m21 0h1m15 0h1m2 0h1m6 0h1m1 0h1m25 0h1m11 0h1m3 0h1m5 0h1m21 0h1m74 0h1M6 158h1m6 0h1m3 0h1m13 0h1m19 0h1m9 0h1m11 0h1m15 0h1m28 0h1m39 0h1m13 0h1m12 0h1m15 0h1m36 0h1m101 0h1m17 0h1m9 0h1m35 0h1m21 0h1m77 0h1m19 0h1m67 0h1M18 159h1m46 0h1m21 0h1m91 0h1m54 0h1m28 0h1m47 0h1m7 0h1m5 0h1m1 0h1m35 0h1m33 0h1m75 0h1m25 0h1m25 0h1m57 0h1m4 0h1M68 160h1m157 0h1m1 0h1m38 0h1m79 0h1m1 0h1m9 0h1m23 0h1m6 0h1m4 0h1m47 0h1m4 0h1m6 0h1m46 0h1m47 0h1m4 0h1M3 161h1m36 0h1m14 0h1m19 0h1m17 0h1m57 0h1m12 0h1m62 0h1m75 0h1m22 0h1m28 0h1m29 0h1m38 0h1m8 0h1m25 0h1m47 0h1m32 0h1m43 0h1M32 162h1m8 0h1m19 0h1m41 0h1m68 0h1m9 0h1m12 0h1m106 0h1m27 0h1m59 0h1m4 0h1m37 0h1m3 0h1m12 0h1m15 0h1m36 0h1m13 0h1M52 163h1m62 0h1m4 0h1m24 0h1m35 0h1m51 0h1m4 0h1m57 0h1m22 0h1m14 0h1m1 0h1m29 0h1m8 0h1m81 0h1m14 0h1m34 0h1m26 0h1m10 0h1m20 0h1m3 0h1M12 164h1m29 0h1m111 0h1m28 0h1m22 0h1m15 0h1m2 0h1m23 0h1m30 0h1m9 0h1m75 0h1m23 0h1m11 0h1m61 0h1m58 0h1m16 0h1M9 165h1m58 0h1m105 0h1m43 0h2m76 0h1m33 0h1m75 0h1m18 0h1m95 0h1m36 0h1m29 0h1M11 166h1m86 0h1m2 0h1m6 0h1m1 0h3m23 0h1m53 0h1m11 0h1m14 0h1m70 0h1m13 0h1m2 0h1m7 0h1m40 0h1m65 0h1m21 0h2m46 0h1m38 0h1m9 0h1M3 167h1m127 0h3m22 0h1m16 0h1m8 0h1m17 0h1m13 0h1m45 0h1m121 0h1m5 0h1m38 0h1m4 0h1m57 0h1m11 0h1m24 0h1m21 0h1m15 0h1m4 0h1m8 0h1M9 168h1m46 0h1m27 0h1m75 0h1m21 0h1m11 0h1m55 0h1m30 0h1m4 0h1m5 0h1m32 0h1m94 0h1m27 0h1m17 0h1m24 0h1m12 0h1m27 0h2M39 169h1m26 0h1m16 0h2m62 0h1m94 0h1m8 0h2m112 0h1m40 0h1m47 0h1m13 0h1m44 0h1m42 0h1M24 170h1m98 0h2m6 0h2m55 0h1m16 0h1m14 0h1m34 0h1m106 0h1m45 0h1m2 0h1m33 0h1m10 0h1m21 0h1m20 0h1m5 0h1m18 0h1m44 0h1m4 0h1M53 171h1m12 0h1m7 0h1m6 0h1m11 0h1m60 0h1m1 0h1m1 0h1m119 0h1m30 0h1m109 0h1m170 0h1M98 172h1m6 0h1m5 0h1m7 0h1m20 0h1m2 0h1m16 0h1m2 0h1m98 0h1m24 0h1m17 0h1m48 0h1m21 0h1m30 0h1m7 0h1m62 0h1m29 0h1m41 0h1M38 173h1m25 0h1m20 0h1m3 0h1m17 0h1m50 0h1m1 0h1m20 0h1m66 0h1m45 0h1m42 0h1m32 0h1m16 0h1m17 0h1m44 0h1m30 0h1m40 0h1m54 0h1M31 174h1m25 0h1m77 0h1m67 0h1m130 0h1m2 0h1m46 0h1m104 0h1m16 0h1m32 0h1m57 0h1M2 175h1m8 0h1m7 0h1m79 0h1m7 0h1m31 0h1m84 0h1m51 0h1m17 0h1m68 0h1m88 0h1m4 0h1m17 0h1m13 0h1m6 0h1m88 0h1M21 176h1m7 0h1m154 0h1m24 0h1m6 0h1m5 0h1m15 0h1m9 0h1m48 0h1m38 0h1m6 0h1m19 0h1m20 0h1m11 0h1m183 0h1m6 0h1m7 0h1M15 177h1m49 0h1m9 0h1m89 0h1m23 0h1m9 0h1m4 0h2m32 0h1m74 0h1m19 0h1m38 0h1m34 0h1m4 0h1m17 0h1m24 0h1m66 0h1M24 178h1m19 0h1m110 0h1m2 0h1m25 0h1m111 0h1m9 0h1m48 0h1m41 0h1m70 0h1m15 0h1m38 0h1m2 0h1M89 179h1m31 0h1m17 0h1m16 0h1m15 0h1m81 0h1m53 0h1m47 0h1m51 0h1m20 0h1m63 0h1m22 0h1m26 0h1M27 180h1m87 0h1m34 0h1m135 0h1m113 0h1m35 0h1m13 0h1m5 0h1m26 0h1m47 0h1m9 0h1m2 0h1M28 181h1m42 0h1m11 0h1m77 0h1m40 0h1m27 0h1m57 0h1m72 0h1m8 0h1m19 0h1m67 0h1m12 0h1m18 0h1m8 0h1m44 0h1m9 0h1M17 182h1m1 0h1m105 0h1m30 0h1m24 0h1m6 0h1m45 0h1m21 0h1m111 0h1m20 0h1m119 0h1m45 0h1M8 183h1m46 0h1m87 0h1m43 0h1m49 0h1m50 0h1m120 0h1m109 0h1m35 0h1m5 0h1m7 0h1m7 0h1M23 184h1m23 0h1m14 0h1m68 0h1m34 0h1m18 0h1m29 0h1m9 0h1m55 0h1m20 0h1m54 0h1m23 0h1m19 0h1m97 0h1m66 0h1m2 0h1M114 185h1m11 0h1m60 0h1m9 0h1m111 0h1m49 0h1m24 0h1m2 0h1m38 0h1m34 0h1m2 0h1m52 0h1m29 0h2M13 186h1m63 0h1m7 0h1m8 0h1m22 0h1m38 0h1m3 0h1m18 0h1m33 0h1m41 0h1m16 0h1m56 0h1m4 0h1m29 0h1m38 0h1m8 0h1m26 0h1m119 0h1m22 0h1M28 187h1m64 0h1m33 0h1m9 0h1m90 0h1m29 0h1m2 0h1m4 0h1m12 0h1m6 0h1m22 0h1m53 0h1m84 0h1m40 0h1m2 0h1m56 0h1M43 188h1m70 0h1m2 0h1m17 0h1m14 0h1m43 0h1m245 0h1m4 0h1m19 0h1m28 0h1m10 0h1m7 0h1m33 0h1m14 0h1M29 189h1m2 0h1m20 0h1m73 0h1m133 0h1m109 0h1m83 0h1m14 0h1m65 0h1m57 0h1M78 190h1m178 0h1m25 0h1m102 0h1m72 0h1m5 0h1m13 0h1m17 0h1m42 0h1m2 0h1m1 0h1M66 191h1m9 0h1m31 0h1m1 0h1m48 0h1m48 0h1m6 0h1m6 0h1m43 0h1m8 0h1m11 0h1m26 0h1m12 0h1m60 0h1m49 0h1m63 0h1m10 0h1m27 0h1m47 0h1M47 192h1m82 0h1m4 0h1m22 0h1m11 0h1m28 0h1m129 0h1m89 0h1m8 0h1m12 0h1m13 0h1m7 0h1m37 0h1m10 0h1m74 0h1m3 0h1M9 193h1m100 0h1m31 0h1m71 0h1m87 0h1M26 194h1m95 0h1m78 0h1m48 0h1m3 0h1m38 0h1m69 0h1m2 0h1m33 0h1M7 195h1m76 0h1m53 0h1m40 0h1m7 0h1m55 0h1m76 0h1m7 0h1m71 0h1m51 0h1m62 0h1m50 0h1m5 0h1m10 0h1m11 0h1M69 196h1m23 0h1m23 0h1m62 0h1m55 0h1m46 0h1m27 0h1m31 0h1m18 0h1m136 0h1m7 0h1m30 0h1m47 0h1M19 197h1m54 0h1m36 0h1m74 0h1m73 0h1m154 0h1m34 0h1M47 198h2m215 0h1m163 0h1M83 199h1m35 0h1m64 0h1m37 0h1m13 0h1m88 0h1m3 0h1m10 0h1m1 0h1m101 0h1m84 0h1M192 200h1m10 0h1m7 0h1m21 0h1m8 0h1m2 0h1m118 0h1m170 0h1M24 201h1m69 0h1m181 0h1m3 0h1m19 0h1m16 0h1m116 0h1m30 0h1m31 0h1M109 202h1m21 0h1m216 0h1m244 0h1M132 203h1m229 0h1m30 0h1m114 0h1M124 204h1m1 0h2m276 0h1m42 0h1m48 0h1m89 0h1m7 0h1M224 205h1m50 0h1m1 0h1m51 0h1m34 0h1m12 0h1m107 0h1M361 206h1m10 0h1m9 0h1m25 0h1m14 0h1m132 0h1m29 0h1M0 207h1m5 0h1m81 0h1m29 0h1m1 0h1m77 0h1m148 0h1m1 0h1m83 0h1m4 0h1m18 0h1m6 0h1M32 208h1m95 0h1m109 0h1m63 0h1m4 0h1M24 209h1m92 0h1m26 0h1m7 0h1m63 0h1m63 0h1m81 0h1m207 0h1M15 210h1m1 0h1m5 0h1m121 0h1m111 0h1m186 0h1m134 0h1M73 211h1M13 212h1m27 0h1m11 0h1m38 0h1m9 0h1m170 0h1M2 213h1m1 0h1m11 0h1m123 0h1m34 0h1m129 0h1m152 0h1M0 214h1m20 0h1m8 0h1m71 0h1m45 0h1m16 0h1m40 0h1m101 0h1m36 0h1m22 0h1m198 0h1M352 215h1m221 0h1M94 216h1m29 0h1m316 0h1m55 0h1m28 0h1m18 0h1M62 217h1m363 0h1m80 0h1m6 0h1M41 218h1m50 0h1m104 0h1m41 0h2m72 0h1m78 0h1m62 0h1m68 0h1M144 219h1m14 0h1m80 0h1m4 0h1m65 0h1m28 0h1m221 0h1M42 220h1m28 0h1m122 0h1m8 0h1m262 0h1M113 221h1m113 0h1M240 222h1m324 0h1M336 223h1m237 0h1M53 224h1m257 0h1m12 0h1m17 0h1m181 0h1m40 0h1M374 225h1M59 226h1m282 0h1m33 0h1m213 0h1M22 227h1m5 0h1m108 0h1m84 0h1m108 0h1M80 228h1m219 0h1m85 0h1m24 0h1m56 0h1m93 0h1M40 229h1m63 0h1m22 0h1M435 230h1m9 0h1m30 0h1M332 231h1m150 0h1m71 0h1M163 232h1m329 0h1M486 233h1m10 0h1M269 234h1M366 235h1m106 0h1m12 0h1M241 236h1m7 0h1M382 237h1M297 238h1m208 0h1m76 0h1M394 240h1M518 241h1M276 244h1M11 245h1m15 0h1m507 0h1M217 246h1m114 0h1M509 250h1M208 252h1m79 0h1m227 0h1M86 255h1M417 260h1M111 262h1m474 0h1M434 264h1M12 266h1M168 269h1M519 271h1M524 273h1M215 274h1M57 277h1M204 278h1M110 284h1M80 288h1M281 289h1M251 291h1M448 296h1M378 303h1M163 305h1M44 306h1m225 0h1M573 318h1"/><path stroke="#00004c" d="M8 0h1m6 0h1m17 0h1m34 0h1m1 0h1m19 0h1m5 0h1m89 0h1m4 0h1m11 0h1m1 0h2m5 0h1m44 0h2m3 0h1m4 0h4m4 0h1m38 0h2m46 0h1m2 0h1m18 0h1m9 0h1m28 0h1m4 0h1m14 0h1m65 0h1m37 0h1m7 0h2m11 0h1M20 1h1m7 0h1m4 0h1m2 0h1m24 0h1m17 0h1m46 0h2m13 0h1m5 0h1m46 0h1m1 0h2m4 0h1m12 0h1m29 0h1m1 0h1m3 0h2m2 0h1m18 0h1m28 0h1m71 0h1m9 0h1m42 0h1m1 0h1m22 0h1m1 0h1m55 0h1m29 0h1m3 0h1m12 0h1m6 0h1M6 2h2m23 0h1m2 0h1m1 0h1m31 0h1m4 0h1m2 0h2m4 0h1m6 0h1m36 0h1m1 0h1m12 0h1m7 0h1m1 0h1m45 0h1m7 0h2m38 0h2m4 0h1m60 0h2m18 0h1m43 0h2m14 0h2m36 0h1m17 0h1m36 0h1m5 0h1m17 0h1m32 0h1m15 0h1m5 0h1m2 0h1M13 3h1m110 0h1m13 0h1m57 0h1m2 0h1m10 0h1m3 0h2m24 0h1m7 0h1m8 0h1m13 0h1m29 0h2m1 0h1m14 0h1m2 0h1m1 0h1m35 0h1m7 0h1m5 0h1m2 0h1m3 0h1m11 0h1m34 0h1m15 0h1m6 0h1m3 0h1m29 0h1m14 0h1m50 0h1m10 0h1m1 0h1M12 4h1m55 0h1m9 0h2m7 0h1m1 0h1m31 0h1m64 0h1m11 0h1m49 0h1m14 0h1m2 0h1m60 0h1m38 0h1m21 0h1m31 0h1m13 0h1m18 0h1m25 0h1m3 0h2m2 0h1m20 0h1m31 0h1m4 0h1m20 0h1m3 0h1M22 5h1m11 0h1m37 0h1m17 0h1m39 0h1m6 0h1m4 0h1m5 0h1m41 0h1m4 0h1m4 0h1m2 0h1m7 0h2m2 0h1m27 0h1m26 0h1m39 0h2m7 0h1m2 0h2m41 0h1m7 0h1m64 0h1m2 0h1m5 0h1m55 0h1m10 0h1m34 0h1M0 6h1m5 0h1m6 0h2m7 0h1m39 0h1m11 0h1m4 0h1m2 0h1m12 0h2m53 0h1m3 0h1m50 0h2m1 0h1m45 0h1m12 0h1m5 0h1m28 0h1m2 0h1m14 0h2m4 0h1m3 0h1m35 0h2m1 0h2m2 0h1m9 0h1m5 0h1m1 0h1m32 0h1m16 0h2m5 0h1m37 0h1m2 0h1m4 0h1m1 0h1m4 0h1m49 0h1m4 0h1m4 0h1M3 7h1m9 0h1m2 0h1m1 0h1m3 0h1m13 0h1m44 0h1m1 0h1m49 0h1m10 0h1m5 0h1m105 0h1m5 0h1m44 0h1m3 0h1m10 0h1m38 0h1m12 0h1m47 0h2m13 0h1m16 0h1m28 0h1m1 0h1m6 0h1m8 0h1m7 0h1m3 0h1m38 0h1m3 0h2M2 8h1m1 0h1m18 0h1m9 0h1m39 0h1m1 0h1m10 0h1m42 0h1m11 0h1m1 0h1m36 0h1m9 0h1m2 0h1m7 0h1m4 0h1m5 0h1m32 0h1m10 0h1m13 0h1m4 0h2m41 0h1m64 0h1m10 0h1m27 0h1m4 0h1m3 0h1m8 0h1m3 0h2m9 0h1m30 0h1m5 0h1m5 0h1m7 0h1m41 0h1m4 0h1M17 9h1m9 0h1m45 0h1m2 0h1m1 0h1m13 0h1m30 0h1m3 0h1m8 0h1m2 0h1m8 0h1m5 0h1m25 0h1m34 0h1m29 0h1m3 0h1m12 0h2m59 0h1m57 0h1m54 0h1m4 0h1m8 0h1m35 0h1m7 0h2m7 0h1m36 0h2m11 0h1m3 0h1m10 0h1M22 10h1m1 0h1m7 0h1m44 0h1m4 0h1m8 0h1m29 0h1m9 0h1m15 0h1m49 0h1m3 0h1m53 0h1m11 0h1m36 0h1m3 0h1m4 0h1m17 0h1m104 0h1m18 0h1m33 0h1m10 0h1m39 0h1m4 0h2m7 0h1m4 0h1M7 11h1m2 0h1m1 0h2m2 0h1m1 0h1m16 0h1m37 0h1m22 0h1m34 0h1m6 0h1m8 0h1m2 0h1m2 0h1m1 0h1m45 0h1m43 0h1m19 0h1m8 0h1m96 0h1m2 0h2m45 0h1m3 0h1m1 0h1m5 0h1m11 0h1m36 0h2m10 0h1m3 0h1m1 0h1m5 0h1m5 0h1m1 0h1m28 0h1m1 0h1m8 0h1m14 0h2M8 12h1m3 0h1m17 0h1m2 0h1m1 0h1m2 0h1m3 0h1m41 0h2m13 0h1m9 0h1m10 0h1m1 0h3m8 0h1m3 0h1m12 0h1m4 0h2m38 0h1m4 0h1m13 0h1m9 0h1m8 0h2m2 0h1m1 0h1m5 0h1m3 0h1m6 0h1m6 0h1m35 0h1m5 0h1m24 0h1m4 0h1m1 0h1m3 0h1m8 0h1m22 0h1m18 0h1m1 0h1m2 0h1m30 0h1m22 0h1m7 0h1m46 0h1m20 0h1m7 0h1m3 0h1m4 0h2m1 0h1m21 0h1m4 0h1m15 0h1M12 13h2m1 0h1m6 0h1m3 0h1m15 0h1m6 0h1m2 0h1m1 0h1m5 0h2m7 0h1m4 0h1m5 0h1m3 0h1m3 0h1m50 0h1m5 0h1m31 0h1m27 0h1m3 0h1m17 0h1m3 0h1m5 0h1m57 0h1m6 0h1m4 0h1m1 0h1m3 0h1m5 0h1m11 0h1m1 0h1m41 0h1m6 0h1m13 0h2m1 0h1m12 0h1m15 0h1m8 0h1m15 0h1m4 0h1m5 0h1m15 0h1m6 0h1m14 0h1m9 0h1m2 0h1m2 0h1m31 0h2m20 0h1m12 0h1m10 0h1M15 14h1m46 0h1m20 0h1m4 0h1m32 0h1m11 0h1m1 0h1m13 0h2m5 0h1m1 0h1m20 0h1m11 0h1m5 0h1m25 0h1m4 0h1m3 0h1m23 0h1m4 0h1m2 0h1m3 0h1m15 0h2m2 0h1m12 0h2m2 0h1m6 0h3m5 0h1m2 0h1m1 0h1m17 0h1m2 0h1m4 0h1m18 0h1m1 0h2m2 0h1m1 0h1m5 0h1m12 0h1m8 0h1m13 0h1m13 0h2m13 0h1m14 0h1m23 0h1m3 0h1m7 0h1m8 0h1m14 0h1m4 0h1m6 0h1m14 0h1m20 0h1M1 15h1m16 0h1m2 0h1m6 0h1m21 0h1m2 0h1m55 0h1m2 0h1m30 0h1m1 0h1m7 0h2m4 0h1m5 0h1m6 0h1m7 0h1m4 0h1m1 0h1m8 0h1m11 0h1m9 0h2m19 0h1m5 0h1m4 0h2m21 0h1m30 0h1m6 0h1m2 0h1m14 0h1m2 0h1m4 0h1m5 0h1m2 0h1m8 0h1m38 0h1m9 0h1m3 0h1m13 0h1m3 0h2m7 0h1m5 0h1m4 0h1m4 0h1m2 0h1m15 0h1m13 0h1m24 0h2m1 0h1m5 0h1m5 0h1m8 0h1m20 0h1m13 0h3m12 0h1m12 0h1M12 16h1m4 0h1m14 0h1m24 0h1m1 0h1m8 0h1m4 0h1m2 0h1m9 0h1m18 0h1m1 0h1m1 0h1m1 0h1m8 0h2m25 0h1m2 0h1m1 0h1m12 0h1m3 0h1m5 0h1m10 0h1m25 0h1m16 0h1m3 0h1m6 0h2m5 0h1m3 0h2m16 0h1m12 0h1m1 0h1m1 0h1m7 0h2m3 0h1m46 0h1m2 0h1m16 0h1m15 0h1m12 0h1m10 0h1m2 0h2m3 0h1m4 0h2m1 0h1m2 0h1m11 0h1m2 0h1m2 0h1m16 0h1m21 0h1m7 0h1m23 0h1m10 0h1m32 0h1m4 0h1m4 0h1m7 0h1m3 0h1m4 0h1m6 0h1m1 0h1m3 0h1M2 17h1m1 0h1m1 0h1m2 0h1m3 0h1m30 0h3m8 0h1m1 0h2m5 0h1m16 0h1m2 0h1m6 0h1m9 0h1m4 0h1m19 0h1m23 0h1m16 0h1m19 0h1m6 0h1m1 0h1m24 0h1m7 0h1m7 0h1m5 0h1m5 0h1m21 0h1m15 0h1m7 0h1m22 0h1m20 0h1m8 0h1m21 0h1m3 0h1m5 0h1m2 0h1m21 0h1m17 0h1m8 0h1m14 0h1m23 0h1m49 0h1m8 0h1m20 0h1m1 0h1m5 0h1m10 0h1m11 0h1m8 0h1M1 18h1m4 0h2m31 0h2m9 0h1m1 0h2m2 0h1m5 0h1m20 0h1m1 0h1m3 0h1m6 0h1m1 0h1m4 0h1m4 0h1m7 0h1m5 0h1m2 0h1m17 0h1m3 0h1m8 0h1m21 0h2m13 0h1m5 0h1m4 0h1m6 0h1m11 0h1m7 0h1m16 0h1m31 0h1m30 0h1m7 0h1m3 0h1m24 0h2m12 0h1m1 0h1m1 0h1m9 0h1m7 0h1m3 0h1m17 0h1m9 0h2m3 0h1m5 0h1m38 0h1m7 0h1m12 0h1m13 0h1m37 0h1m19 0h1m5 0h1m2 0h1m21 0h1m4 0h1M0 19h1m21 0h1m6 0h1m33 0h1m8 0h1m5 0h1m22 0h1m5 0h1m4 0h1m32 0h1m23 0h1m12 0h1m11 0h1m1 0h1m11 0h1m5 0h1m20 0h1m4 0h1m4 0h1m18 0h1m17 0h1m10 0h2m16 0h1m1 0h1m36 0h1m6 0h1m4 0h1m3 0h2m9 0h1m3 0h1m6 0h1m4 0h2m17 0h1m3 0h1m10 0h1m12 0h1m33 0h1m8 0h1m5 0h1m4 0h1m19 0h1m1 0h1m61 0h1m3 0h1m7 0h1m1 0h2m1 0h1M1 20h1m1 0h1m1 0h1m8 0h1m7 0h1m2 0h1m7 0h1m19 0h1m13 0h1m3 0h1m20 0h1m14 0h2m7 0h1m3 0h1m7 0h1m23 0h1m11 0h2m2 0h1m1 0h1m9 0h1m7 0h1m6 0h1m10 0h3m7 0h1m11 0h2m1 0h1m12 0h2m15 0h1m12 0h1m12 0h1m4 0h2m15 0h1m8 0h3m22 0h1m18 0h1m24 0h1m6 0h2m3 0h1m16 0h1m1 0h1m8 0h1m13 0h1m10 0h1m3 0h1m22 0h1m22 0h1m3 0h1m30 0h2m8 0h1m1 0h1m4 0h1m1 0h1m5 0h1m8 0h1m8 0h1m3 0h1M63 21h1m3 0h1m3 0h1m19 0h1m1 0h1m2 0h1m17 0h1m10 0h1m3 0h1m13 0h1m13 0h1m4 0h1m11 0h1m15 0h1m3 0h1m28 0h1m10 0h1m8 0h1m9 0h1m10 0h1m9 0h1m12 0h1m2 0h1m1 0h2m1 0h1m5 0h1m30 0h1m11 0h1m11 0h2m19 0h1m10 0h1m19 0h1m1 0h1m28 0h2m32 0h1m15 0h1m4 0h1m25 0h2m3 0h1m4 0h1m4 0h1m17 0h1m8 0h1m19 0h1M8 22h1m3 0h1m1 0h1m10 0h1m19 0h1m4 0h1m10 0h1m1 0h1m18 0h1m1 0h1m10 0h1m43 0h1m15 0h1m7 0h2m18 0h1m14 0h1m16 0h2m5 0h1m7 0h1m4 0h1m6 0h1m15 0h2m7 0h1m14 0h1m7 0h1m12 0h1m4 0h2m2 0h1m5 0h1m28 0h1m1 0h1m4 0h1m37 0h1m19 0h1m15 0h1m28 0h1m16 0h1m1 0h2m9 0h1m6 0h1m7 0h1m12 0h1m1 0h1m52 0h1M1 23h1m8 0h1m12 0h1m4 0h1m4 0h1m7 0h1m3 0h1m14 0h1m11 0h1m2 0h1m22 0h1m1 0h1m16 0h1m2 0h1m18 0h1m1 0h1m8 0h1m9 0h1m21 0h1m11 0h1m19 0h1m2 0h1m3 0h1m26 0h1m6 0h1m26 0h1m16 0h2m3 0h1m4 0h1m2 0h1m10 0h1m6 0h1m7 0h1m1 0h1m3 0h1m16 0h1m26 0h1m20 0h1m22 0h1m24 0h1m8 0h1m4 0h1m32 0h1m3 0h1m10 0h1m6 0h1m23 0h1m13 0h1m1 0h2m8 0h1M19 24h1m2 0h1m7 0h1m1 0h1m1 0h1m8 0h1m7 0h1m6 0h1m8 0h1m8 0h1m2 0h1m11 0h1m62 0h1m5 0h1m22 0h1m27 0h1m22 0h1m1 0h1m6 0h1m24 0h1m21 0h1m2 0h1m8 0h1m7 0h1m17 0h1m1 0h2m11 0h1m1 0h1m5 0h1m3 0h1m6 0h1m21 0h1m12 0h1m40 0h1m12 0h1m9 0h1m6 0h1m1 0h1m6 0h1m3 0h1m6 0h1m31 0h1m7 0h1m9 0h1m9 0h1m35 0h1M5 25h1m11 0h1m4 0h1m3 0h2m3 0h1m19 0h1m5 0h1m4 0h1m8 0h2m22 0h1m1 0h1m7 0h1m5 0h1m16 0h1m12 0h1m5 0h1m5 0h1m15 0h1m14 0h1m1 0h1m1 0h1m8 0h1m13 0h1m17 0h1m20 0h2m12 0h1m11 0h1m6 0h3m8 0h1m14 0h2m5 0h1m6 0h1m1 0h1m33 0h1m2 0h1m31 0h1m3 0h1m1 0h1m5 0h1m5 0h1m40 0h1m6 0h2m12 0h1m20 0h1m7 0h1m1 0h1m5 0h1m10 0h1m42 0h1m1 0h1M44 26h1m49 0h2m1 0h1m5 0h1m10 0h1m8 0h1m1 0h1m25 0h1m12 0h1m11 0h1m5 0h1m23 0h1m12 0h1m2 0h1m10 0h1m10 0h1m2 0h1m14 0h1m9 0h2m2 0h1m16 0h1m29 0h2m9 0h1m3 0h1m19 0h1m2 0h1m6 0h1m5 0h1m10 0h1m18 0h1m2 0h1m8 0h1m13 0h1m5 0h1m22 0h1m2 0h1m5 0h2m3 0h1m15 0h1m6 0h1m5 0h1m20 0h1m5 0h1m12 0h1m3 0h1m1 0h2m13 0h1m8 0h2m2 0h1m10 0h1m1 0h1M0 27h1m23 0h1m14 0h1m22 0h1m2 0h1m14 0h1m13 0h1m30 0h1m15 0h1m9 0h1m4 0h1m13 0h1m13 0h1m2 0h1m16 0h1m3 0h1m3 0h1m39 0h1m14 0h1m19 0h1m2 0h1m4 0h1m14 0h1m7 0h1m20 0h1m8 0h1m5 0h1m1 0h1m25 0h1m10 0h1m2 0h1m3 0h1m26 0h2m1 0h1m6 0h1m3 0h1m9 0h1m1 0h1m2 0h2m26 0h1m15 0h1m5 0h1m7 0h1m12 0h2m4 0h1m7 0h2m3 0h2m29 0h1m1 0h1m10 0h1m2 0h1M11 28h1m36 0h1m9 0h1m1 0h1m5 0h1m6 0h1m31 0h2m1 0h2m9 0h2m1 0h1m21 0h1m10 0h3m1 0h1m7 0h1m7 0h3m9 0h1m2 0h1m12 0h2m4 0h1m12 0h1m10 0h1m18 0h1m6 0h1m2 0h1m8 0h1m5 0h1m37 0h1m33 0h1m15 0h1m10 0h1m14 0h1m8 0h1m1 0h2m12 0h1m3 0h2m27 0h1m1 0h1m29 0h1m16 0h1m9 0h1m2 0h1m22 0h1m22 0h1m14 0h2m4 0h1m2 0h1m7 0h2m4 0h1m1 0h1M36 29h1m4 0h2m2 0h1m13 0h2m6 0h1m2 0h1m4 0h2m6 0h1m4 0h1m3 0h1m7 0h1m27 0h1m7 0h1m9 0h1m23 0h1m12 0h1m13 0h1m11 0h1m2 0h1m61 0h1m12 0h1m5 0h1m1 0h1m19 0h1m3 0h1m12 0h1m49 0h1m2 0h1m1 0h1m20 0h2m17 0h1m9 0h1m10 0h1m11 0h1m16 0h1m3 0h1m13 0h1m9 0h1m12 0h1m4 0h1m10 0h1m6 0h1m7 0h1M20 30h2m3 0h1m3 0h1m13 0h2m30 0h1m5 0h1m3 0h1m22 0h1m6 0h1m6 0h1m21 0h1m2 0h1m9 0h1m4 0h2m5 0h1m36 0h1m9 0h1m17 0h2m7 0h1m27 0h1m2 0h1m5 0h1m15 0h1m14 0h1m14 0h1m2 0h1m1 0h2m10 0h1m2 0h1m19 0h1m12 0h1m5 0h1m3 0h1m8 0h1m16 0h1m4 0h1m1 0h1m13 0h1m7 0h1m26 0h1m3 0h1m4 0h1m6 0h1m8 0h1m8 0h1m20 0h1m10 0h1m27 0h1m3 0h1m18 0h1M8 31h1m1 0h1m5 0h1m1 0h1m3 0h1m1 0h1m22 0h1m11 0h1m4 0h1m9 0h1m13 0h1m14 0h1m4 0h1m4 0h1m13 0h1m34 0h1m3 0h1m3 0h1m7 0h1m1 0h1m4 0h1m6 0h1m23 0h1m8 0h1m1 0h1m5 0h1m46 0h2m23 0h1m2 0h1m2 0h1m42 0h1m1 0h1m21 0h1m5 0h1m5 0h1m3 0h1m9 0h1m2 0h1m10 0h1m12 0h1m7 0h1m19 0h1m18 0h2m5 0h1m4 0h1m18 0h1m4 0h1m10 0h1m15 0h1m4 0h1m1 0h1m3 0h1m2 0h1m2 0h2m5 0h1m3 0h1m9 0h2m8 0h1M31 32h1m21 0h2m23 0h1m2 0h1m24 0h1m8 0h1m10 0h1m1 0h1m9 0h2m11 0h1m5 0h1m37 0h1m27 0h1m5 0h1m16 0h1m24 0h2m3 0h1m2 0h1m25 0h2m33 0h1m1 0h1m3 0h1m1 0h1m13 0h1m9 0h1m19 0h1m3 0h1m17 0h1m5 0h1m49 0h1m1 0h1m8 0h1m1 0h1m5 0h1m11 0h1m28 0h1m9 0h1m5 0h1m12 0h1m3 0h1m6 0h1m8 0h1m2 0h1m5 0h2M4 33h1m6 0h2m2 0h1m10 0h1m3 0h1m1 0h1m4 0h1m11 0h1m22 0h1m33 0h2m6 0h2m16 0h2m23 0h1m17 0h1m21 0h1m4 0h1m7 0h1m36 0h1m11 0h1m11 0h1m8 0h1m7 0h1m7 0h1m31 0h1m3 0h1m33 0h1m1 0h1m1 0h1m42 0h1m5 0h1m3 0h1m21 0h1m41 0h1m3 0h1m3 0h1m3 0h1m1 0h1m7 0h1m16 0h1m2 0h1m12 0h1m29 0h1m12 0h2m1 0h1m2 0h1m5 0h1M0 34h1m8 0h1m16 0h1m3 0h1m6 0h1m43 0h1m6 0h1m12 0h1m24 0h1m5 0h1m7 0h1m24 0h1m1 0h1m5 0h2m9 0h1m14 0h1m5 0h1m6 0h1m1 0h1m2 0h1m7 0h1m10 0h1m10 0h1m12 0h1m7 0h1m10 0h1m11 0h1m10 0h1m4 0h1m41 0h1m7 0h1m38 0h1m5 0h1m1 0h1m33 0h1m4 0h1m22 0h1m15 0h1m8 0h1m9 0h2m12 0h1m6 0h1m15 0h1m3 0h1m27 0h1m2 0h1m21 0h1M3 35h2m6 0h1m41 0h1m24 0h1m5 0h1m7 0h1m6 0h1m20 0h1m9 0h1m7 0h1m1 0h1m4 0h1m9 0h1m24 0h1m10 0h1m19 0h1m8 0h1m6 0h1m3 0h1m12 0h1m3 0h1m7 0h1m8 0h1m19 0h1m12 0h1m9 0h1m3 0h1m14 0h1m16 0h1m13 0h1m7 0h1m23 0h1m3 0h2m16 0h1m17 0h1m36 0h2m3 0h1m4 0h1m8 0h1m17 0h1m35 0h1m12 0h1m14 0h1m23 0h1m5 0h1M20 36h1m2 0h1m7 0h1m7 0h1m6 0h2m4 0h1m17 0h1m6 0h1m10 0h1m11 0h1m7 0h2m31 0h1m2 0h1m7 0h1m46 0h1m2 0h2m30 0h1m19 0h1m3 0h1m3 0h1m19 0h1m5 0h1m21 0h1m15 0h1m5 0h1m3 0h1m17 0h1m8 0h1m10 0h1m5 0h1m5 0h1m2 0h1m18 0h1m5 0h1m5 0h1m17 0h1m17 0h1m22 0h1m1 0h1m50 0h1m29 0h2m9 0h1m7 0h1m6 0h1m3 0h1m1 0h1m1 0h1M6 37h1m3 0h1m1 0h1m1 0h1m8 0h1m1 0h1m4 0h1m14 0h1m11 0h1m2 0h1m13 0h1m5 0h1m46 0h1m11 0h1m28 0h1m4 0h2m2 0h1m32 0h1m7 0h1m13 0h1m12 0h1m5 0h1m25 0h1m4 0h2m5 0h1m11 0h1m6 0h1m13 0h1m5 0h1m28 0h1m25 0h1m16 0h1m24 0h1m17 0h1m2 0h1m22 0h2m1 0h1m11 0h1m1 0h1m20 0h1m12 0h1m4 0h1m13 0h1m4 0h1m1 0h1m2 0h1m13 0h1m11 0h1M16 38h1m5 0h1m10 0h1m2 0h1m5 0h1m3 0h1m7 0h1m10 0h1m1 0h1m7 0h1m12 0h1m47 0h1m1 0h1m14 0h1m10 0h1m12 0h1m18 0h1m17 0h1m24 0h1m9 0h1m13 0h1m3 0h1m37 0h1m4 0h1m38 0h1m2 0h1m24 0h1m10 0h1m5 0h1m3 0h1m3 0h1m3 0h1m8 0h1m3 0h1m14 0h2m21 0h2m1 0h1m4 0h1m1 0h2m33 0h1m19 0h1m2 0h1m9 0h1m12 0h1m33 0h1m1 0h1M8 39h2m14 0h1m5 0h1m34 0h2m3 0h1m5 0h1m3 0h1m1 0h2m6 0h1m2 0h1m7 0h1m7 0h1m3 0h2m10 0h1m10 0h1m4 0h1m12 0h1m20 0h1m20 0h1m23 0h1m2 0h1m18 0h1m7 0h1m16 0h1m7 0h1m33 0h2m5 0h1m7 0h1m18 0h1m13 0h1m3 0h1m5 0h1m8 0h1m1 0h1m6 0h2m19 0h1m7 0h1m17 0h1m4 0h2m10 0h1m12 0h1m5 0h2m18 0h2m1 0h1m1 0h1m5 0h1m6 0h1m32 0h2m3 0h1m12 0h1m31 0h1M0 40h1m16 0h2m8 0h1m7 0h1m2 0h1m7 0h1m1 0h1m4 0h1m9 0h1m19 0h1m3 0h1m9 0h1m5 0h1m10 0h1m19 0h1m19 0h1m1 0h1m4 0h1m3 0h1m1 0h1m8 0h1m11 0h1m2 0h1m21 0h1m8 0h1m6 0h1m18 0h1m4 0h1m6 0h1m5 0h1m7 0h1m6 0h1m29 0h1m12 0h1m4 0h1m1 0h1m25 0h1m2 0h1m5 0h1m3 0h1m2 0h1m7 0h1m13 0h1m19 0h2m15 0h1m9 0h1m1 0h1m26 0h1m20 0h1m8 0h1m1 0h1m15 0h1m67 0h1m5 0h1M0 41h1m15 0h1m5 0h1m7 0h1m1 0h1m8 0h1m6 0h1m32 0h1m1 0h1m17 0h1m15 0h1m10 0h1m3 0h1m6 0h1m10 0h1m29 0h1m4 0h1m4 0h3m13 0h1m9 0h1m5 0h1m16 0h1m29 0h1m1 0h1m2 0h1m7 0h1m37 0h1m9 0h1m4 0h1m5 0h1m1 0h1m16 0h1m3 0h1m4 0h1m13 0h1m7 0h1m15 0h1m27 0h1m19 0h1m13 0h2m24 0h1m4 0h1m2 0h1m14 0h1m8 0h1m2 0h1m36 0h1m5 0h1m18 0h1m4 0h2M10 42h1m1 0h1m3 0h1m2 0h2m4 0h1m14 0h1m19 0h1m4 0h1m5 0h1m7 0h1m18 0h1m3 0h1m21 0h1m9 0h1m3 0h1m6 0h1m9 0h1m3 0h1m1 0h1m36 0h1m14 0h2m56 0h1m30 0h1m7 0h1m6 0h1m6 0h1m4 0h2m5 0h2m32 0h1m2 0h1m8 0h1m3 0h1m17 0h2m3 0h2m12 0h1m1 0h1m10 0h1m30 0h1m4 0h1m75 0h1m8 0h1m10 0h1m5 0h1M4 43h1m11 0h1m3 0h1m4 0h1m4 0h1m5 0h1m30 0h1m1 0h1m19 0h1m3 0h1m7 0h1m13 0h1m12 0h1m10 0h1m4 0h1m17 0h1m8 0h1m13 0h1m17 0h1m7 0h1m15 0h1m17 0h1m18 0h2m17 0h1m12 0h1m12 0h1m1 0h1m3 0h1m7 0h1m4 0h1m1 0h1m11 0h2m3 0h1m4 0h1m15 0h1m15 0h1m8 0h1m11 0h1m34 0h1m3 0h1m1 0h1m11 0h1m22 0h1m10 0h1m7 0h1m11 0h1m9 0h1m7 0h1m4 0h1m25 0h1m7 0h1m15 0h1M6 44h1m8 0h1m38 0h1m25 0h1m3 0h1m11 0h1m9 0h1m7 0h1m13 0h1m7 0h1m33 0h1m8 0h1m18 0h1m17 0h1m9 0h2m26 0h1m1 0h1m11 0h1m1 0h1m1 0h1m35 0h1m16 0h1m14 0h1m52 0h1m6 0h1m15 0h1m13 0h1m11 0h1m5 0h1m12 0h1m7 0h1m20 0h1m7 0h2m35 0h1m5 0h1m4 0h1m10 0h1m27 0h1M12 45h1m6 0h1m7 0h1m22 0h2m4 0h1m43 0h2m12 0h1m14 0h1m2 0h1m13 0h1m14 0h1m19 0h1m16 0h1m10 0h2m11 0h1m10 0h1m13 0h1m2 0h1m4 0h1m4 0h1m11 0h3m9 0h1m6 0h1m1 0h1m18 0h1m2 0h2m1 0h1m9 0h1m24 0h2m29 0h1m54 0h1m9 0h1m6 0h1m6 0h1m1 0h1m3 0h1m2 0h1m42 0h1m7 0h1m52 0h1m1 0h1m5 0h1m1 0h1M7 46h1m9 0h1m11 0h1m21 0h1m5 0h1m6 0h1m7 0h1m23 0h1m6 0h1m20 0h1m13 0h1m30 0h1m18 0h1m5 0h1m22 0h1m8 0h1m13 0h1m22 0h1m21 0h1m21 0h1m21 0h1m3 0h1m11 0h1m32 0h1m24 0h1m64 0h1m39 0h1m10 0h1m3 0h1m25 0h1m3 0h1m10 0h1m9 0h1m7 0h2m10 0h1M3 47h1m2 0h1m1 0h1m16 0h1m6 0h1m55 0h1m8 0h1m2 0h1m18 0h1m9 0h1m7 0h2m16 0h1m3 0h1m17 0h1m13 0h1m12 0h1m20 0h1m10 0h1m15 0h1m23 0h1m4 0h1m2 0h1m6 0h1m35 0h1m23 0h1m35 0h1m10 0h1m19 0h1m32 0h1m5 0h1m5 0h2m14 0h1m16 0h1m2 0h1m2 0h1m7 0h1m13 0h1m14 0h2m10 0h1m6 0h1m9 0h1m4 0h1m14 0h2m2 0h1m3 0h1M23 48h1m5 0h1m2 0h2m9 0h1m1 0h1m4 0h1m10 0h1m15 0h1m3 0h1m63 0h2m12 0h3m2 0h1m28 0h1m7 0h1m4 0h1m29 0h1m2 0h1m26 0h1m19 0h1m11 0h1m15 0h1m9 0h1m1 0h1m8 0h1m29 0h1m20 0h1m14 0h1m10 0h2m7 0h1m2 0h1m8 0h1m1 0h1m2 0h2m28 0h1m12 0h1m26 0h1m13 0h1m5 0h1m20 0h1m5 0h1m3 0h1m26 0h1M16 49h1m33 0h1m41 0h3m25 0h2m22 0h2m7 0h1m7 0h1m10 0h1m13 0h1m14 0h1m41 0h1m3 0h1m10 0h1m6 0h1m22 0h1m40 0h2m1 0h1m8 0h1m1 0h1m21 0h1m17 0h2m33 0h1m38 0h1m30 0h1m8 0h1m2 0h1m30 0h1m19 0h1m9 0h1m18 0h1M1 50h1m26 0h2m36 0h1m4 0h1m14 0h1m6 0h1m11 0h1m7 0h1m1 0h1m4 0h1m2 0h1m10 0h2m2 0h1m17 0h1m19 0h1m23 0h1m1 0h1m17 0h1m8 0h2m3 0h1m33 0h1m38 0h1m7 0h1m4 0h1m14 0h1m39 0h1m24 0h1m9 0h1m13 0h1m3 0h1m10 0h1m4 0h1m10 0h1m3 0h1m24 0h1m20 0h1m13 0h1m3 0h1m3 0h1m46 0h1M9 51h1m13 0h1m5 0h1m6 0h1m17 0h1m4 0h1m8 0h1m2 0h1m16 0h1m23 0h1m53 0h1m10 0h1m5 0h1m11 0h1m34 0h1m13 0h2m7 0h1m34 0h1m16 0h1m9 0h1m14 0h1m2 0h1m60 0h1m3 0h1m19 0h1m6 0h1m2 0h1m18 0h1m16 0h1m10 0h1m3 0h1m13 0h1m18 0h1m10 0h1m49 0h1m3 0h1m3 0h1m7 0h1m4 0h1m3 0h1M2 52h2m27 0h1m27 0h2m28 0h1m4 0h1m1 0h1m18 0h1m4 0h1m18 0h1m8 0h1m4 0h1m22 0h1m12 0h1m29 0h1m6 0h1m5 0h1m1 0h1m26 0h1m3 0h1m23 0h1m20 0h1m13 0h1m1 0h1m1 0h1m36 0h1m14 0h1m15 0h1m3 0h1m31 0h1m3 0h1m4 0h1m4 0h1m12 0h1m6 0h1m1 0h1m5 0h1m20 0h1m20 0h1m1 0h1m5 0h1m5 0h1m2 0h1m17 0h2M4 53h1m22 0h1m12 0h1m1 0h1m7 0h1m2 0h1m2 0h1m17 0h1m32 0h1m31 0h1m23 0h1m5 0h1m4 0h1m10 0h1m9 0h2m8 0h1m3 0h1m1 0h1m6 0h1m13 0h1m6 0h1m11 0h1m6 0h1m8 0h1m11 0h1m27 0h1m31 0h1m2 0h1m3 0h1m2 0h1m16 0h1m18 0h1m24 0h1m1 0h1m28 0h2m35 0h1m5 0h1m7 0h2m23 0h1m20 0h1m5 0h1m3 0h1m4 0h1m15 0h1m6 0h2m5 0h1m8 0h1m5 0h1M0 54h1m18 0h1m9 0h1m2 0h1m4 0h1m1 0h1m3 0h1m26 0h1m3 0h1m7 0h1m17 0h1m36 0h1m4 0h1m2 0h1m5 0h1m10 0h1m25 0h1m7 0h1m10 0h1m3 0h1m5 0h1m12 0h3m34 0h2m17 0h1m22 0h1m12 0h1m10 0h1m6 0h1m22 0h1m11 0h1m38 0h1m44 0h1m10 0h4m4 0h1m11 0h1m7 0h1m13 0h1m4 0h1m24 0h1m3 0h1m7 0h1m3 0h1m12 0h1m8 0h1m9 0h1M5 55h1m6 0h1m6 0h2m32 0h1m1 0h1m4 0h1m2 0h1m12 0h1m28 0h1m9 0h1m10 0h1m23 0h1m4 0h1m2 0h1m3 0h1m6 0h1m20 0h1m12 0h1m16 0h2m12 0h1m25 0h1m10 0h1m5 0h1m11 0h1m1 0h1m2 0h1m13 0h1m18 0h1m7 0h1m8 0h1m36 0h1m8 0h1m9 0h1m16 0h1m6 0h1m12 0h1m7 0h1m4 0h1m2 0h3m3 0h1m2 0h1m18 0h1m2 0h2m22 0h1m8 0h1m12 0h2m5 0h1m43 0h1m8 0h1m6 0h1M9 56h1m12 0h3m70 0h1m16 0h1m9 0h1m7 0h1m19 0h1m13 0h1m14 0h1m16 0h1m10 0h1m8 0h1m19 0h1m9 0h1m2 0h1m19 0h1m23 0h2m10 0h1m3 0h1m18 0h2m4 0h1m22 0h1m27 0h1m20 0h1m3 0h1m5 0h1m19 0h1m4 0h1m16 0h1m14 0h1m8 0h1m18 0h1m2 0h1m10 0h1m5 0h1m16 0h1m15 0h1m8 0h1m32 0h2M24 57h1m13 0h1m12 0h1m1 0h2m25 0h1m27 0h1m2 0h1m2 0h1m23 0h1m11 0h1m4 0h1m15 0h1m22 0h1m2 0h1m3 0h1m16 0h1m15 0h1m5 0h1m2 0h1m13 0h1m1 0h1m6 0h1m7 0h1m8 0h1m2 0h1m9 0h1m2 0h1m6 0h1m2 0h1m12 0h1m13 0h1m4 0h1m5 0h1m8 0h1m3 0h1m8 0h1m2 0h1m16 0h1m24 0h2m13 0h1m14 0h1m1 0h1m7 0h1m4 0h2m1 0h1m7 0h1m5 0h1m8 0h2m4 0h1m1 0h1m5 0h1m9 0h1m27 0h1m4 0h1m16 0h2m15 0h1m19 0h1M20 58h1m35 0h1m14 0h1m1 0h1m4 0h1m5 0h1m3 0h1m1 0h1m42 0h1m28 0h1m53 0h1m10 0h1m29 0h1m7 0h1m20 0h1m9 0h1m4 0h1m7 0h2m1 0h1m2 0h1m10 0h1m15 0h1m10 0h1m27 0h2m3 0h1m22 0h1m11 0h1m4 0h1m10 0h1m13 0h1m12 0h1m2 0h1m4 0h1m11 0h1m5 0h1m13 0h1m22 0h1m3 0h1m11 0h1m3 0h1m5 0h1m12 0h1m18 0h1m2 0h1M7 59h1m29 0h2m1 0h1m23 0h1m8 0h1m30 0h1m15 0h2m1 0h2m2 0h1m16 0h1m2 0h1m6 0h1m9 0h2m5 0h1m40 0h1m1 0h1m9 0h1m7 0h1m17 0h1m18 0h1m21 0h1m10 0h1m36 0h1m5 0h1m5 0h1m3 0h1m11 0h1m2 0h1m7 0h1m4 0h1m5 0h1m26 0h1m7 0h1m6 0h1m22 0h1m2 0h1m5 0h1m4 0h1m34 0h1m13 0h1m28 0h1m1 0h1m23 0h1m4 0h1M33 60h1m51 0h1m6 0h1m10 0h1m4 0h1m10 0h1m7 0h1m6 0h1m11 0h1m8 0h2m13 0h1m28 0h1m15 0h1m14 0h1m7 0h2m21 0h1m1 0h1m11 0h1m5 0h1m3 0h1m26 0h1m3 0h1m4 0h1m1 0h1m9 0h1m16 0h1m14 0h1m8 0h1m5 0h1m4 0h1m7 0h1m86 0h1m4 0h1m9 0h1m3 0h1m25 0h1m13 0h1m6 0h1m4 0h1m37 0h1M17 61h1m16 0h1m4 0h2m3 0h1m19 0h1m3 0h1m9 0h1m7 0h1m20 0h1m13 0h1m4 0h1m23 0h1m22 0h1m5 0h2m5 0h1m4 0h1m16 0h1m8 0h1m16 0h1m6 0h1m1 0h1m2 0h1m12 0h1m2 0h1m11 0h1m1 0h1m7 0h2m12 0h1m7 0h1m14 0h1m2 0h1m2 0h2m2 0h1m8 0h2m1 0h1m8 0h1m11 0h2m3 0h1m17 0h1m14 0h1m1 0h1m12 0h1m1 0h1m18 0h2m19 0h1m4 0h1m7 0h1m18 0h1m5 0h1m12 0h1m27 0h1m16 0h1m1 0h1m14 0h1m22 0h1M1 62h2m17 0h1m10 0h1m35 0h1m8 0h1m3 0h1m13 0h1m2 0h3m10 0h1m11 0h1m2 0h1m2 0h1m7 0h1m39 0h1m14 0h1m5 0h1m13 0h1m10 0h1m16 0h1m28 0h1m18 0h1m5 0h1m7 0h1m17 0h1m11 0h1m49 0h1m10 0h1m1 0h1m4 0h2m11 0h1m9 0h1m9 0h1m9 0h1m13 0h1m10 0h1m2 0h1m2 0h1m1 0h1m1 0h1m21 0h1m26 0h1m5 0h1m3 0h1m10 0h1m2 0h1m1 0h1m1 0h1m12 0h1m1 0h1m12 0h1m5 0h1M15 63h1m15 0h1m8 0h1m3 0h1m9 0h1m15 0h1m9 0h1m9 0h1m1 0h1m6 0h1m20 0h1m5 0h1m4 0h1m7 0h1m15 0h1m6 0h1m17 0h1m1 0h2m2 0h2m8 0h1m13 0h2m23 0h1m29 0h1m13 0h1m4 0h1m46 0h1m37 0h1m3 0h1m17 0h1m5 0h1m27 0h1m17 0h1m11 0h1m13 0h1m3 0h1m23 0h1m8 0h4m2 0h1m3 0h1m2 0h1m29 0h1m35 0h1M15 64h1m35 0h1m13 0h1m28 0h1m5 0h1m14 0h1m24 0h1m7 0h2m18 0h1m21 0h1m3 0h1m24 0h1m3 0h1m16 0h1m5 0h1m9 0h1m24 0h1m6 0h1m5 0h1m2 0h1m1 0h1m21 0h1m2 0h1m29 0h1m4 0h1m9 0h1m25 0h1m4 0h1m1 0h1m1 0h1m2 0h1m3 0h1m7 0h1m3 0h1m2 0h1m1 0h1m52 0h1m7 0h1m26 0h1m38 0h1m18 0h2m4 0h1m3 0h2m5 0h2m4 0h1M6 65h1m42 0h1m29 0h1m2 0h1m9 0h1m4 0h1m2 0h1m43 0h1m4 0h1m20 0h1m16 0h1m8 0h1m5 0h1m38 0h1m28 0h1m4 0h1m21 0h1m2 0h1m37 0h1m92 0h1m5 0h1m42 0h1m5 0h1m14 0h1m27 0h1m3 0h1m23 0h1m2 0h2m17 0h1m14 0h1M13 66h1m25 0h1m8 0h1m12 0h1m4 0h1m8 0h1m1 0h1m6 0h1m18 0h1m25 0h1m27 0h1m30 0h1m11 0h1m9 0h1m6 0h1m4 0h1m13 0h1m2 0h1m4 0h1m11 0h1m6 0h1m18 0h1m5 0h1m5 0h1m1 0h1m6 0h1m1 0h1m5 0h1m1 0h2m6 0h1m58 0h1m13 0h1m9 0h2m2 0h1m34 0h1m23 0h1m8 0h1m9 0h1m2 0h1m52 0h1m1 0h1m11 0h1m13 0h1M5 67h1m5 0h2m8 0h1m2 0h1m11 0h1m7 0h1m7 0h1m10 0h1m5 0h1m39 0h1m1 0h1m29 0h1m9 0h1m3 0h1m9 0h1m6 0h1m13 0h1m5 0h1m15 0h1m2 0h1m2 0h1m3 0h1m1 0h1m3 0h1m3 0h1m23 0h1m24 0h1m21 0h1m20 0h2m35 0h1m3 0h1m11 0h1m1 0h1m4 0h1m24 0h1m15 0h1m7 0h1m14 0h1m9 0h1m13 0h1m39 0h1m32 0h1m1 0h1m10 0h1m18 0h1m5 0h1M24 68h1m42 0h1m5 0h1m4 0h1m4 0h2m9 0h1m7 0h1m7 0h1m67 0h2m18 0h1m11 0h1m5 0h1m18 0h1m25 0h1m17 0h1m7 0h1m2 0h1m7 0h1m5 0h1m2 0h1m9 0h1m26 0h1m30 0h1m18 0h1m42 0h1m33 0h2m8 0h1m5 0h1m9 0h1m14 0h1m42 0h1m12 0h1m10 0h1M47 69h1m17 0h1m9 0h2m32 0h1m24 0h1m17 0h1m2 0h2m37 0h1m18 0h1m31 0h1m16 0h1m7 0h1m6 0h1m2 0h1m10 0h1m56 0h1m7 0h1m1 0h1m18 0h1m25 0h1m7 0h1m4 0h1m3 0h1m54 0h1m3 0h1m23 0h1m4 0h1m24 0h1m2 0h1m7 0h1m12 0h1m5 0h1m3 0h1m9 0h1m2 0h1m11 0h1M2 70h1m26 0h1m3 0h1m14 0h1m31 0h1m19 0h1m7 0h1m7 0h1m11 0h2m8 0h1m21 0h2m7 0h1m3 0h1m6 0h1m7 0h1m14 0h1m28 0h1m3 0h2m9 0h1m11 0h1m7 0h1m4 0h1m74 0h1m13 0h1m2 0h1m30 0h1m1 0h1m9 0h1m4 0h1m8 0h1m26 0h1m5 0h1m41 0h2m20 0h2m4 0h1m7 0h1m5 0h1m14 0h1m1 0h1m1 0h1m8 0h1m1 0h1m1 0h2m1 0h1m4 0h1M4 71h1m1 0h1m9 0h1m22 0h1m65 0h2m6 0h1m6 0h1m44 0h1m44 0h1m66 0h1m29 0h1m77 0h1m13 0h1m15 0h1m3 0h1m5 0h1m1 0h1m8 0h1m4 0h1m5 0h1m6 0h1m6 0h1m15 0h1m9 0h1m49 0h1m1 0h1m3 0h3m10 0h1m15 0h1m4 0h2M0 72h1m2 0h1m19 0h1m2 0h1m20 0h2m7 0h1m39 0h2m3 0h1m39 0h1m30 0h1m4 0h1m12 0h1m27 0h1m29 0h1m3 0h1m6 0h1m3 0h1m24 0h1m1 0h1m6 0h1m4 0h1m1 0h1m9 0h1m33 0h1m34 0h1m4 0h1m4 0h1m24 0h1m22 0h1m28 0h1m3 0h1m15 0h1m3 0h1m37 0h1m26 0h1m11 0h2m22 0h1M3 73h1m13 0h2m15 0h1m30 0h1m6 0h2m9 0h1m6 0h1m33 0h1m20 0h1m5 0h1m33 0h1m36 0h1m2 0h1m30 0h1m12 0h1m15 0h1m1 0h1m2 0h2m15 0h1m5 0h1m12 0h1m5 0h1m7 0h1m13 0h1m6 0h2m4 0h1m5 0h1m22 0h1m22 0h1m8 0h1m24 0h2m1 0h1m11 0h1m8 0h1m1 0h1m17 0h1m34 0h2m46 0h1m16 0h1M10 74h1m17 0h1m20 0h1m7 0h1m11 0h1m28 0h1m2 0h1m12 0h1m6 0h1m34 0h1m9 0h1m8 0h1m1 0h1m7 0h1m18 0h1m19 0h1m2 0h2m8 0h1m44 0h1m17 0h1m2 0h1m113 0h1m13 0h1m25 0h1m3 0h1m7 0h1m6 0h1m20 0h1m2 0h1m9 0h1m2 0h1m18 0h1m48 0h1m7 0h1M10 75h1m24 0h1m8 0h1m29 0h1m4 0h1m4 0h1m2 0h1m6 0h1m21 0h1m24 0h1m3 0h1m3 0h1m2 0h1m17 0h1m4 0h1m10 0h1m25 0h1m5 0h1m5 0h1m6 0h1m9 0h1m7 0h1m32 0h1m20 0h1m26 0h1m18 0h1m10 0h1m16 0h1m20 0h1m2 0h1m25 0h1m34 0h1m6 0h1m32 0h1m23 0h1m3 0h1m8 0h1M4 76h1m8 0h1m17 0h1m8 0h1m6 0h1m24 0h1m3 0h1m6 0h1m7 0h1m8 0h1m18 0h1m1 0h1m2 0h1m9 0h1m35 0h1m4 0h1m2 0h1m10 0h1m5 0h1m18 0h1m3 0h1m6 0h1m1 0h1m1 0h1m22 0h1m9 0h1m38 0h1m65 0h1m7 0h1m2 0h1m23 0h2m8 0h1m13 0h1m1 0h1m46 0h1m5 0h1m7 0h1m35 0h1m4 0h1m15 0h1m7 0h1m4 0h1M19 77h1m13 0h1m14 0h1m1 0h1m8 0h2m28 0h1m8 0h1m15 0h2m27 0h1m2 0h1m1 0h1m19 0h1m6 0h1m13 0h1m12 0h1m17 0h1m2 0h1m1 0h1m9 0h1m20 0h1m8 0h1m17 0h1m18 0h1m10 0h2m2 0h1m1 0h1m28 0h1m12 0h1m14 0h1m10 0h1m5 0h1m23 0h1m38 0h1m7 0h2m4 0h1m1 0h1m3 0h1m4 0h1m14 0h1m14 0h1m27 0h2m20 0h2m12 0h1m5 0h1M14 78h1m10 0h1m3 0h1m6 0h2m22 0h1m54 0h1m5 0h1m6 0h1m8 0h1m27 0h1m3 0h1m29 0h1m36 0h1m19 0h1m21 0h1m4 0h2m4 0h1m13 0h1m2 0h1m36 0h1m17 0h1m8 0h1m14 0h1m29 0h1m1 0h1m7 0h1m14 0h1m45 0h1m67 0h1m4 0h1m34 0h1M3 79h1m36 0h1m11 0h3m29 0h1m21 0h2m2 0h1m4 0h2m36 0h1m23 0h1m1 0h1m9 0h1m21 0h1m7 0h1m8 0h1m1 0h1m3 0h1m13 0h1m2 0h1m26 0h1m44 0h1m2 0h1m26 0h1m5 0h1m3 0h1m20 0h1m6 0h1m17 0h1m9 0h1m11 0h1m23 0h1m6 0h2m5 0h1m5 0h1m8 0h1m19 0h1m9 0h1m9 0h1m11 0h1m17 0h1m12 0h1m22 0h1M20 80h1m32 0h2m8 0h1m8 0h1m16 0h1m7 0h1m3 0h1m19 0h1m3 0h2m21 0h1m8 0h1m30 0h1m6 0h1m16 0h1m22 0h1m3 0h1m5 0h1m4 0h1m15 0h1m20 0h1m6 0h1m51 0h1m7 0h1m57 0h1m4 0h1m27 0h1m10 0h1m7 0h1m17 0h1m1 0h1m27 0h1m1 0h1m4 0h1m37 0h1m2 0h1m11 0h1M4 81h1m10 0h1m22 0h1m28 0h1m14 0h3m4 0h1m46 0h1m16 0h1m25 0h1m2 0h1m6 0h1m2 0h1m6 0h1m5 0h1m40 0h1m38 0h1m6 0h1m8 0h1m15 0h1m1 0h1m7 0h1m12 0h1m34 0h1m6 0h2m6 0h1m24 0h1m4 0h1m11 0h1m6 0h2m3 0h1m16 0h1m7 0h1m3 0h1m3 0h1m3 0h1m39 0h1m1 0h1m10 0h1m13 0h1m4 0h1m9 0h1m1 0h1m16 0h1m9 0h1m5 0h1M15 82h1m78 0h1m14 0h1m4 0h1m6 0h1m15 0h1m2 0h1m7 0h1m12 0h1m2 0h1m11 0h1m6 0h1m7 0h1m39 0h1m5 0h1m3 0h1m9 0h1m10 0h1m59 0h1m1 0h1m27 0h1m18 0h1m13 0h1m2 0h1m8 0h1m4 0h1m67 0h1m7 0h1m23 0h1m15 0h1m7 0h1m24 0h1m22 0h1m3 0h1m3 0h2m8 0h1m4 0h1M21 83h1m33 0h1m9 0h1m9 0h1m10 0h1m51 0h1m28 0h1m38 0h1m4 0h1m10 0h1m5 0h1m2 0h1m2 0h2m17 0h2m4 0h1m1 0h2m27 0h1m1 0h1m26 0h1m6 0h1m17 0h1m3 0h1m2 0h3m3 0h1m7 0h1m12 0h1m8 0h1m2 0h1m13 0h1m2 0h1m5 0h1m17 0h1m10 0h2m13 0h1m10 0h1m91 0h2m9 0h1m1 0h1m9 0h1M14 84h1m3 0h1m18 0h1m6 0h1m1 0h1m42 0h1m41 0h1m35 0h1m1 0h2m18 0h1m9 0h1m3 0h1m1 0h1m1 0h1m5 0h1m4 0h1m9 0h1m46 0h1m1 0h1m23 0h1m9 0h1m1 0h1m8 0h1m6 0h1m7 0h1m3 0h1m19 0h2m46 0h1m29 0h1m1 0h1m28 0h1m4 0h1m6 0h1m13 0h1m34 0h1m12 0h1m22 0h1m3 0h1M26 85h1m28 0h2m2 0h1m9 0h1m19 0h1m3 0h2m15 0h1m9 0h2m34 0h1m43 0h1m29 0h1m4 0h1m17 0h1m21 0h1m13 0h1m18 0h1m26 0h1m3 0h1m56 0h1m24 0h1m1 0h1m12 0h1m16 0h1m14 0h1m2 0h2m1 0h2m23 0h1m1 0h2m14 0h1m39 0h1m15 0h1m4 0h1m3 0h2m12 0h1M27 86h1m2 0h1m19 0h1m1 0h1m5 0h2m1 0h1m12 0h1m29 0h1m23 0h1m21 0h1m2 0h1m16 0h1m8 0h1m9 0h2m3 0h1m29 0h1m11 0h1m3 0h1m10 0h1m2 0h1m52 0h1m56 0h1m24 0h1m12 0h1m13 0h1m12 0h1m7 0h1m10 0h1m75 0h2m4 0h1m38 0h1m5 0h1m14 0h1m2 0h1M14 87h1m44 0h1m31 0h1m29 0h1m25 0h1m4 0h1m21 0h1m2 0h1m3 0h1m6 0h3m9 0h1m40 0h1m16 0h1m27 0h1m18 0h1m9 0h1m44 0h1m8 0h1m5 0h1m4 0h1m9 0h1m19 0h1m84 0h1m3 0h1m4 0h1m12 0h1m18 0h1m54 0h1M8 88h1m21 0h1m18 0h1m9 0h1m20 0h1m27 0h1m33 0h1m1 0h1m5 0h1m22 0h1m8 0h1m7 0h1m13 0h1m31 0h1m10 0h1m3 0h1m1 0h1m6 0h1m14 0h1m1 0h1m31 0h1m22 0h1m13 0h1m5 0h1m1 0h1m9 0h1m12 0h1m24 0h1m22 0h1m33 0h1m21 0h1m8 0h1m2 0h1m20 0h1m40 0h1m18 0h1m9 0h1m5 0h1m4 0h1M8 89h1m16 0h1m15 0h1m16 0h1m7 0h1m10 0h1m6 0h1m2 0h1m3 0h1m6 0h1m6 0h1m22 0h1m36 0h1m44 0h1m17 0h1m1 0h1m10 0h1m3 0h1m22 0h1m13 0h1m9 0h1m20 0h1m14 0h1m3 0h1m25 0h1m57 0h1m24 0h2m18 0h1m31 0h2m1 0h1m7 0h1m20 0h1m9 0h1m18 0h1m38 0h1M23 90h1m23 0h1m6 0h1m3 0h1m14 0h1m16 0h1m9 0h1m24 0h1m12 0h1m28 0h1m14 0h1m8 0h1m26 0h1m14 0h1m2 0h1m33 0h1m3 0h4m1 0h1m36 0h1m12 0h1m3 0h1m9 0h1m17 0h1m18 0h1m2 0h1m17 0h1m2 0h1m10 0h1m30 0h2m1 0h1m15 0h1m11 0h1m30 0h1m2 0h1m7 0h1m4 0h1m8 0h1m4 0h2m11 0h1m16 0h1m4 0h1M26 91h1m12 0h1m5 0h1m5 0h1m2 0h1m15 0h1m14 0h1m11 0h1m3 0h1m2 0h1m11 0h1m18 0h1m24 0h2m17 0h1m8 0h1m39 0h1m5 0h1m6 0h1m26 0h1m14 0h2m7 0h1m52 0h1m6 0h1m5 0h1m9 0h1m1 0h1m7 0h1m32 0h1m50 0h1m4 0h1m4 0h1m2 0h1m6 0h1m8 0h1m14 0h1m5 0h1m9 0h1m53 0h1m7 0h1M20 92h1m10 0h1m12 0h1m4 0h1m2 0h1m5 0h2m2 0h1m7 0h1m10 0h1m7 0h1m3 0h1m36 0h1m2 0h1m68 0h1m4 0h1m26 0h1m35 0h1m4 0h1m14 0h1m10 0h1m3 0h1m45 0h1m4 0h1m12 0h1m11 0h1m2 0h1m1 0h1m13 0h1m5 0h1m13 0h1m25 0h1m31 0h1m32 0h1m33 0h1m42 0h1m7 0h1M49 93h1m15 0h1m4 0h1m7 0h1m3 0h1m1 0h1m4 0h1m3 0h1m2 0h1m31 0h1m22 0h1m71 0h1m3 0h1m40 0h1m24 0h1m18 0h1m2 0h1m5 0h1m30 0h1m5 0h1m35 0h1m4 0h1m28 0h1m7 0h1m2 0h1m25 0h1m1 0h2m19 0h1m22 0h2m5 0h1m13 0h1m43 0h1m6 0h1M16 94h1m7 0h1m11 0h1m48 0h1m3 0h1m4 0h2m7 0h1m16 0h1m7 0h1m18 0h1m24 0h1m9 0h1m11 0h2m15 0h1m15 0h1m35 0h1m13 0h1m45 0h1m2 0h1m11 0h1m3 0h1m21 0h1m1 0h1m26 0h1m32 0h1m12 0h1m7 0h1m10 0h1m23 0h1m28 0h1m3 0h1m8 0h1m23 0h1m35 0h1m13 0h1M49 95h1m8 0h1m20 0h1m20 0h1m4 0h1m19 0h1m6 0h1m13 0h1m7 0h1m17 0h1m4 0h1m19 0h1m2 0h1m7 0h1m20 0h1m4 0h1m22 0h1m11 0h1m15 0h1m88 0h1m19 0h1m25 0h2m8 0h1m2 0h1m20 0h1m11 0h1m20 0h1m25 0h1m1 0h1m1 0h1m12 0h1m18 0h1m8 0h1m19 0h1m1 0h1m8 0h1M17 96h2m7 0h1m2 0h2m87 0h1m6 0h1m16 0h1m5 0h1m18 0h1m22 0h1m18 0h2m3 0h1m14 0h1m6 0h1m41 0h1m19 0h1m5 0h2m22 0h1m16 0h1m10 0h2m14 0h1m1 0h1m14 0h1m23 0h1m4 0h1m33 0h1m35 0h1m19 0h1M12 97h1m14 0h1m17 0h1m4 0h1m15 0h2m13 0h1m12 0h1m2 0h1m34 0h1m53 0h1m14 0h1m2 0h1m1 0h1m46 0h1m2 0h1m44 0h1m26 0h1m29 0h1m27 0h1m8 0h1m2 0h1m3 0h1m3 0h1m2 0h1m8 0h2m11 0h1m84 0h1m24 0h1m2 0h1m1 0h1m1 0h1m5 0h1m6 0h1m14 0h1m2 0h1m9 0h1M26 98h1m18 0h1m1 0h1m31 0h1m8 0h1m9 0h1m4 0h1m32 0h1m54 0h1m7 0h1m1 0h1m10 0h1m3 0h1m10 0h1m43 0h1m13 0h1m12 0h1m9 0h2m145 0h1m33 0h1m38 0h1m4 0h1m5 0h1m8 0h1m23 0h1m21 0h2M21 99h1m12 0h1m40 0h1m1 0h2m19 0h1m12 0h1m62 0h1m12 0h1m30 0h1m5 0h2m16 0h1m35 0h1m5 0h1m14 0h1m5 0h1m5 0h1m9 0h1m15 0h1m11 0h1m1 0h1m2 0h1m18 0h1m1 0h1m5 0h1m1 0h1m1 0h1m19 0h1m22 0h1m15 0h1m21 0h1m39 0h1m1 0h1m11 0h1m14 0h1m23 0h1M28 100h1m22 0h1m5 0h1m9 0h1m6 0h1m20 0h1m1 0h1m1 0h1m103 0h1m15 0h1m8 0h1m11 0h1m2 0h1m8 0h1m2 0h1m2 0h1m3 0h1m17 0h1m1 0h1m72 0h1m26 0h1m2 0h2m8 0h1m42 0h1m12 0h1m43 0h1m60 0h1m1 0h1m4 0h2m3 0h1m2 0h1m8 0h1m7 0h1m3 0h1M24 101h1m5 0h1m2 0h1m8 0h1m10 0h1m24 0h1m5 0h1m19 0h1m35 0h1m22 0h1m24 0h1m16 0h1m31 0h1m9 0h2m10 0h1m14 0h1m14 0h1m11 0h1m1 0h1m11 0h1m23 0h1m47 0h1m5 0h1m3 0h1m11 0h1m49 0h1m3 0h1m11 0h1m7 0h1m20 0h1m26 0h1m2 0h1m20 0h1m21 0h1M14 102h1m58 0h1m25 0h1m24 0h1m3 0h1m13 0h1m39 0h1m30 0h1m3 0h1m10 0h1m43 0h1m22 0h1m30 0h1m17 0h1m27 0h1m13 0h1m2 0h1m61 0h1m4 0h1m24 0h1m16 0h1m11 0h1m35 0h1m11 0h2m4 0h1M17 103h2m2 0h1m2 0h1m1 0h2m4 0h1m29 0h1m2 0h1m14 0h1m39 0h1m3 0h1m15 0h1m10 0h1m2 0h1m6 0h1m20 0h1m12 0h1m4 0h1m4 0h1m11 0h1m15 0h1m8 0h1m21 0h1m8 0h1m9 0h1m24 0h1m1 0h1m53 0h1m15 0h1m61 0h1m45 0h1m1 0h1m32 0h1m28 0h1m21 0h1M5 104h1m7 0h1m19 0h1m4 0h1m33 0h1m12 0h1m23 0h1m8 0h1m8 0h1m31 0h1m55 0h1m2 0h1m29 0h1m3 0h1m10 0h1m3 0h1m4 0h1m3 0h1m7 0h1m28 0h1m20 0h1m17 0h1m27 0h1m21 0h1m2 0h1m12 0h1m2 0h1m32 0h1m30 0h1m35 0h1m11 0h1m4 0h1m16 0h1m9 0h1m8 0h1M41 105h1m20 0h1m29 0h1m98 0h1m10 0h1m31 0h1m6 0h1m27 0h1m10 0h1m21 0h1m7 0h1m8 0h1m42 0h1m26 0h1m11 0h1m18 0h1m16 0h1m16 0h1m15 0h1m20 0h1m5 0h1m22 0h1m24 0h1m1 0h1m30 0h1M25 106h1m12 0h1m15 0h1m4 0h1m4 0h1m11 0h1m6 0h1m3 0h1m12 0h1m2 0h1m1 0h1m23 0h1m8 0h1m22 0h1m1 0h1m39 0h1m2 0h1m4 0h1m8 0h1m2 0h1m16 0h1m51 0h1m58 0h1m27 0h1m3 0h1m20 0h1m11 0h1m21 0h1m31 0h1m23 0h1m8 0h1m22 0h1m12 0h1m14 0h1m12 0h1m13 0h1m7 0h1M18 107h1m18 0h1m32 0h1m7 0h2m45 0h1m41 0h1m36 0h1m19 0h1m6 0h1m29 0h1m6 0h1m4 0h1m19 0h1m1 0h1m24 0h1m33 0h1m17 0h1m17 0h1m2 0h1m7 0h1m42 0h1m6 0h1m19 0h1m38 0h1m19 0h1m32 0h2M4 108h1m6 0h1m37 0h1m2 0h1m25 0h1m13 0h1m2 0h1m17 0h1m9 0h1m9 0h1m64 0h1m20 0h1m7 0h1m22 0h1m8 0h1m13 0h1m25 0h1m7 0h1m19 0h1m5 0h1m15 0h1m32 0h1m16 0h1m26 0h1m59 0h1m5 0h1m7 0h1m74 0h1m11 0h1M11 109h1m7 0h1m27 0h1m8 0h1m26 0h1m9 0h1m14 0h1m25 0h1m4 0h1m5 0h1m9 0h1m7 0h2m5 0h1m27 0h1m23 0h1m5 0h1m24 0h1m38 0h1m4 0h1m4 0h1m30 0h1m52 0h1m1 0h1m5 0h1m21 0h1m14 0h1m13 0h1m18 0h1m41 0h1m10 0h1m22 0h1m43 0h1m1 0h1m8 0h1M1 110h1m57 0h1m8 0h1m15 0h1m22 0h1m13 0h1m36 0h1m20 0h1m5 0h1m15 0h1m12 0h2m17 0h1m4 0h1m2 0h1m10 0h1m10 0h1m80 0h1m12 0h1m38 0h1m36 0h1m2 0h2m13 0h1m7 0h1m3 0h1m1 0h1m20 0h1m47 0h1m7 0h3m33 0h1m13 0h1M5 111h1m5 0h1m55 0h1m4 0h1m9 0h1m6 0h1m2 0h1m3 0h1m4 0h1m12 0h1m8 0h1m1 0h1m15 0h1m2 0h1m6 0h1m6 0h1m9 0h1m50 0h1m33 0h1m27 0h1m73 0h1m14 0h2m5 0h1m36 0h1m34 0h1m6 0h1m19 0h1m15 0h2m12 0h2m28 0h1m2 0h1M5 112h1m3 0h1m5 0h1m6 0h1m1 0h1m28 0h1m28 0h1m52 0h1m31 0h1m5 0h1m8 0h1m9 0h1m30 0h1m12 0h1m42 0h1m4 0h1m5 0h1m16 0h1m72 0h1m10 0h1m25 0h1m21 0h1m1 0h1m11 0h1m22 0h1m16 0h1m4 0h1m23 0h1m11 0h1m7 0h1m2 0h1m31 0h1M4 113h1m3 0h2m7 0h1m5 0h1m82 0h1m1 0h1m6 0h1m6 0h1m14 0h1m23 0h2m2 0h1m19 0h1m23 0h1m6 0h1m6 0h1m1 0h1m2 0h1m23 0h1m2 0h2m3 0h1m15 0h1m20 0h1m24 0h1m21 0h1m4 0h1m14 0h1m3 0h1m2 0h1m23 0h1m15 0h1m1 0h1m12 0h1m21 0h1m6 0h1m27 0h1m3 0h1m15 0h1m32 0h1m3 0h1m1 0h1m31 0h1m15 0h1M53 114h1m4 0h1m26 0h2m39 0h1m31 0h1m7 0h1m7 0h1m19 0h1m19 0h1m29 0h1m49 0h1m14 0h2m17 0h1m14 0h1m11 0h1m1 0h3m12 0h1m2 0h1m10 0h1m11 0h1m3 0h1m4 0h1m1 0h1m4 0h1m24 0h1m3 0h1m49 0h1m26 0h1m7 0h1m6 0h1m24 0h1m9 0h1M12 115h2m5 0h1m40 0h1m16 0h1m20 0h1m9 0h1m40 0h1m47 0h1m24 0h1m27 0h1m13 0h1m27 0h1m12 0h1m27 0h1m4 0h2m21 0h1m11 0h1m50 0h1m6 0h1m48 0h1m10 0h1m43 0h2m3 0h1m9 0h1m8 0h1m4 0h1m2 0h1m5 0h1m22 0h1m1 0h1M5 116h1m3 0h1m24 0h1m17 0h1m46 0h1m11 0h1m17 0h1m27 0h1m18 0h1m15 0h1m5 0h1m11 0h1m47 0h1m8 0h1m1 0h1m10 0h1m10 0h1m13 0h1m3 0h1m100 0h1m15 0h1m29 0h1m25 0h1m5 0h1m23 0h1m2 0h1m35 0h1m8 0h1m1 0h1m15 0h1M7 117h1m16 0h1m18 0h1m26 0h1m38 0h1m5 0h1m12 0h1m33 0h1m45 0h1m4 0h1m15 0h1m8 0h1m12 0h1m3 0h1m29 0h1m16 0h1m16 0h1m26 0h1m4 0h1m25 0h1m20 0h1m2 0h1m8 0h1m29 0h1m19 0h1m9 0h1m29 0h1m21 0h2m22 0h1m4 0h1m10 0h1m16 0h1M3 118h1m6 0h1m35 0h2m29 0h1m49 0h1m2 0h1m20 0h1m17 0h1m4 0h1m27 0h1m3 0h1m17 0h1m6 0h1m8 0h1m63 0h1m1 0h1m1 0h1m9 0h1m10 0h1m14 0h1m53 0h1m11 0h1m18 0h3m1 0h1m3 0h1m69 0h1m20 0h1m6 0h1m4 0h1M8 119h1m35 0h1m40 0h1m3 0h1m32 0h1m17 0h1m16 0h1m20 0h1m5 0h1m21 0h1m9 0h1m53 0h1m43 0h1m10 0h1m31 0h1m22 0h1m12 0h1m25 0h1m8 0h1m6 0h1m2 0h1m1 0h1m16 0h1m4 0h1m24 0h1m12 0h1m6 0h1m10 0h1m18 0h1m1 0h1m1 0h1m31 0h2m11 0h1M2 120h1m73 0h1m29 0h1m23 0h1m45 0h1m4 0h1m16 0h1m6 0h1m7 0h1m26 0h1m18 0h1m56 0h1m4 0h1m9 0h1m2 0h1m29 0h1m38 0h1m31 0h1m2 0h1m37 0h1m10 0h1m28 0h1m11 0h1m28 0h1m10 0h1m20 0h1M14 121h1m11 0h1m4 0h2m13 0h1m28 0h1m9 0h1m7 0h1m35 0h1m3 0h1m56 0h1m49 0h1m6 0h1m1 0h1m19 0h1m19 0h1m22 0h1m1 0h1m45 0h1m32 0h1m5 0h1m15 0h1m3 0h1m21 0h1m5 0h1m20 0h1m46 0h1m13 0h1m5 0h1m16 0h1m11 0h1m6 0h1m8 0h1m5 0h2m4 0h1M11 122h1m3 0h1m8 0h1m17 0h1m3 0h1m40 0h1m115 0h1m61 0h1m46 0h1m21 0h1m24 0h1m25 0h1m33 0h1m1 0h1m5 0h1m15 0h1m2 0h1m10 0h1m8 0h1m19 0h1m2 0h1m15 0h1m54 0h1m33 0h1M4 123h1m8 0h1m27 0h2m22 0h1m11 0h1m122 0h1m26 0h1m22 0h1m1 0h1m15 0h1m7 0h1m8 0h1m12 0h1m62 0h1m5 0h1m36 0h1m11 0h1m23 0h1m43 0h1m38 0h2m32 0h1M23 124h1m1 0h1m5 0h1m29 0h1m20 0h1m3 0h1m8 0h1m15 0h1m16 0h1m19 0h1m9 0h1m16 0h1m3 0h1m92 0h1m80 0h1m4 0h1m4 0h1m1 0h1m3 0h1m20 0h1m7 0h1m15 0h1m50 0h1m58 0h1m13 0h1m32 0h1M53 125h1m12 0h1m11 0h1m39 0h1m1 0h1m80 0h1m42 0h2m85 0h1m1 0h1m9 0h1m17 0h1m18 0h1m23 0h1m39 0h2m10 0h1m28 0h1m31 0h1m3 0h1m50 0h1m1 0h1m6 0h1M17 126h1m31 0h1m20 0h1m4 0h1m49 0h1m10 0h1m67 0h1m18 0h1m32 0h1m11 0h2m9 0h1m6 0h1m16 0h1m8 0h2m6 0h1m22 0h1m18 0h1m23 0h1m7 0h1m6 0h1m21 0h1m14 0h1m12 0h1m15 0h1m9 0h1m4 0h1m8 0h1m34 0h1m4 0h1m40 0h1M30 127h1m22 0h1m17 0h1m18 0h1m36 0h1m14 0h1m12 0h1m63 0h1m2 0h1m33 0h1m18 0h1m15 0h1m17 0h1m19 0h1m4 0h1m35 0h1m6 0h1m5 0h1m17 0h1m34 0h1m18 0h1m31 0h1m23 0h1m47 0h1m6 0h1m4 0h1m4 0h1m15 0h1M7 128h1m2 0h1m43 0h1m4 0h1m2 0h1m22 0h1m9 0h1m96 0h1m16 0h1m54 0h1m4 0h1m20 0h1m29 0h1m3 0h2m11 0h1m80 0h1m36 0h1m1 0h1m35 0h1m49 0h1m24 0h1m17 0h1M6 129h1m38 0h1m37 0h1m1 0h1m13 0h1m7 0h1m12 0h1m28 0h1m3 0h1m35 0h1m19 0h1m27 0h1m17 0h1m3 0h1m14 0h1m30 0h1m16 0h1m16 0h2m28 0h1m26 0h1m13 0h1m16 0h1m6 0h2m25 0h1m7 0h1m24 0h1m19 0h1m29 0h1m19 0h1m2 0h1M56 130h1m4 0h1m44 0h1m16 0h1m11 0h1m51 0h1m6 0h1m2 0h1m90 0h1m23 0h1m5 0h1m12 0h1m68 0h1m2 0h1m11 0h1m38 0h1m41 0h1m30 0h1m18 0h1m4 0h1m19 0h1m10 0h1m14 0h1M4 131h1m28 0h1m49 0h1m20 0h1m80 0h1m51 0h2m26 0h1m16 0h1m7 0h1m37 0h1m4 0h1m4 0h1m36 0h1m30 0h1m22 0h1m8 0h1m33 0h1m122 0h1M7 132h1m12 0h1m15 0h1m25 0h1m18 0h1m14 0h1m17 0h1m12 0h1m110 0h1m20 0h1m92 0h1m21 0h1m9 0h1m8 0h1m67 0h1m7 0h1m5 0h1m2 0h1m63 0h1m26 0h1m9 0h1M44 133h1m76 0h1m10 0h1m23 0h1m31 0h1m6 0h1m1 0h1m9 0h1m121 0h1m75 0h1m4 0h1m4 0h2m73 0h1m58 0h2M0 134h1m14 0h1m59 0h1m65 0h1m61 0h1m21 0h1m48 0h1m8 0h1m4 0h1m19 0h1m13 0h1m4 0h1m46 0h1m30 0h1m4 0h1m10 0h1m29 0h1m69 0h1m32 0h1m6 0h1m14 0h1m14 0h1m4 0h1M17 135h1m19 0h1m9 0h1m10 0h1m17 0h1m12 0h1m9 0h1m55 0h1m5 0h1m11 0h1m73 0h1m26 0h1m29 0h1m130 0h1m4 0h1m19 0h1m35 0h1m10 0h1m30 0h1m24 0h1m9 0h1m7 0h1m10 0h1M26 136h1m19 0h1m25 0h1m71 0h1m17 0h1m56 0h1m13 0h1m25 0h1m9 0h1m7 0h1m36 0h1m21 0h1m24 0h1m26 0h1m6 0h1m40 0h1m5 0h1m21 0h1m71 0h1m11 0h1m5 0h1M11 137h1m4 0h1m36 0h2m15 0h1m13 0h1m21 0h1m45 0h1m14 0h1m18 0h1m30 0h1m20 0h1m28 0h1m11 0h1m9 0h1m1 0h1m10 0h1m5 0h1m46 0h1m58 0h2m7 0h1m5 0h1m79 0h1m39 0h1m6 0h1m2 0h1m18 0h1m17 0h1M2 138h1m5 0h1m23 0h1m5 0h1m11 0h1m24 0h1m20 0h1m16 0h1m40 0h1m2 0h1m4 0h1m13 0h1m30 0h1m3 0h1m22 0h1m14 0h1m20 0h1m5 0h1m1 0h1m41 0h1m19 0h1m2 0h1m9 0h1m17 0h1m21 0h1m11 0h1m18 0h1m15 0h1m74 0h1m28 0h1M54 139h1m2 0h1m7 0h1m6 0h1m11 0h1m33 0h1m25 0h1m2 0h1m6 0h1m19 0h1m30 0h1m31 0h1m5 0h1m79 0h1m13 0h1m44 0h1m30 0h1m34 0h1m111 0h2m24 0h1M6 140h1m3 0h1m6 0h1m19 0h1m74 0h1m46 0h1m11 0h1m76 0h1m49 0h1m3 0h1m3 0h1m6 0h1m73 0h1m2 0h1m30 0h1m16 0h1m36 0h1m45 0h1m16 0h1m14 0h1M6 141h1m22 0h1m36 0h1m76 0h1m12 0h1m16 0h1m32 0h1m11 0h2m72 0h1m27 0h1m102 0h1m25 0h1m11 0h1m1 0h1m39 0h1m35 0h1m4 0h1m33 0h1m3 0h1M90 142h1m33 0h1m28 0h1m10 0h1m18 0h1m49 0h1m27 0h1m32 0h1m30 0h1m34 0h1m7 0h1m57 0h1m89 0h1m31 0h1m35 0h1m2 0h1m5 0h1M0 143h1m99 0h1m14 0h1m20 0h1m57 0h1m22 0h1m101 0h1m25 0h1m4 0h1m2 0h1m17 0h1m20 0h1m3 0h1m12 0h1m3 0h1m21 0h1m10 0h1m33 0h1m72 0h1m19 0h1m2 0h1M5 144h1m38 0h1m144 0h1m17 0h1m35 0h1m51 0h1m4 0h1m1 0h1m5 0h1m104 0h1m11 0h1m57 0h1m13 0h1m33 0h1m5 0h1m32 0h1m4 0h1m16 0h1M1 145h1m6 0h1m34 0h1m7 0h1m14 0h1m20 0h1m39 0h1m3 0h1m74 0h1m37 0h1m32 0h1m21 0h1m51 0h2m28 0h1m13 0h1m13 0h1m40 0h1m9 0h1m32 0h1m1 0h1m5 0h1m3 0h1m32 0h1M8 146h1m31 0h1m5 0h1m105 0h1m117 0h1m32 0h1m25 0h1m38 0h1m13 0h1m4 0h1m75 0h1m4 0h1m20 0h1m21 0h1m4 0h1m32 0h1M12 147h1m5 0h1m17 0h1m38 0h1m19 0h1m16 0h2m12 0h1m58 0h1m8 0h1m8 0h1m3 0h1m43 0h1m7 0h1m62 0h1m7 0h1m19 0h1m6 0h1m59 0h1m14 0h2m24 0h1m22 0h1m60 0h1m47 0h1M35 148h1m61 0h1m5 0h1m60 0h1m15 0h1m3 0h1m27 0h1m27 0h1m2 0h1m41 0h1m92 0h1m31 0h1m43 0h1m26 0h1m15 0h1m52 0h1M44 149h1m45 0h1m98 0h1m22 0h1m27 0h1m64 0h1m12 0h1m30 0h1m43 0h1m35 0h1m39 0h1m12 0h1m8 0h1m17 0h1m60 0h1m4 0h2M51 150h1m53 0h1m15 0h1m33 0h1m19 0h1m87 0h1m7 0h1m26 0h1m31 0h1m109 0h1m12 0h1m71 0h2m64 0h1M27 151h1m168 0h1m33 0h1m28 0h1m8 0h1m14 0h1m16 0h1m27 0h1m72 0h1m2 0h1m90 0h1m8 0h1m35 0h1m19 0h1m23 0h1M53 152h1m61 0h1m17 0h1m27 0h1m3 0h1m13 0h1m82 0h1m42 0h1m4 0h1m3 0h1m6 0h2m70 0h1m5 0h1m37 0h1m19 0h1m14 0h1m39 0h1m27 0h1m14 0h1M18 153h1m5 0h1m128 0h1m1 0h1m13 0h1m3 0h1m23 0h1m23 0h1m34 0h1m22 0h1m31 0h1m119 0h1m70 0h1M23 154h1m30 0h1m55 0h1m29 0h1m3 0h1m37 0h1m38 0h1m28 0h1m1 0h2m7 0h1m37 0h1m37 0h1m24 0h1m4 0h1m22 0h1m1 0h1m5 0h1m1 0h1m16 0h1m55 0h1m15 0h1m64 0h1m43 0h1M20 155h1m5 0h1m9 0h1m35 0h1m20 0h1m68 0h1m3 0h1m3 0h1m17 0h1m69 0h1m3 0h1m14 0h1m7 0h1m34 0h1m9 0h1m45 0h1m5 0h1m25 0h1m6 0h1m145 0h1m36 0h1M26 156h1m56 0h1m39 0h1m7 0h1m61 0h1m24 0h1m28 0h1m44 0h1m34 0h1m16 0h1m10 0h1m34 0h1m29 0h1m33 0h1m5 0h1m6 0h1m11 0h1m8 0h1m8 0h1m14 0h1m83 0h1M33 157h1m11 0h1m4 0h1m37 0h1m4 0h1m19 0h1m6 0h1m2 0h1m44 0h1m26 0h1m43 0h1m24 0h1m7 0h1m18 0h1m49 0h1m17 0h1m59 0h1m39 0h1m13 0h1m10 0h1m13 0h1m97 0h1M180 158h1m14 0h2m1 0h1m3 0h1m52 0h1m14 0h1m35 0h1m22 0h1m11 0h1m13 0h1m35 0h1m102 0h1m4 0h1m54 0h1m21 0h1m4 0h1M2 159h1m14 0h1m30 0h1m2 0h1m9 0h1m26 0h1m3 0h1m33 0h1m46 0h1m4 0h1m44 0h1m43 0h1m6 0h1m9 0h1m120 0h1m7 0h1m39 0h1M45 160h1m35 0h1m30 0h1m19 0h1m6 0h1m32 0h1m32 0h1m33 0h1m40 0h1m12 0h1m13 0h1m5 0h1m1 0h1m68 0h1m89 0h1m11 0h1m6 0h1m2 0h1m8 0h1m35 0h1m46 0h1M8 161h1m19 0h1m17 0h1m73 0h2m5 0h1m19 0h1m95 0h1m4 0h1m27 0h1m131 0h1m7 0h1m6 0h1m31 0h1m53 0h1m12 0h1m58 0h1M37 162h1m43 0h1m55 0h1m14 0h1m15 0h1m8 0h1m22 0h1m7 0h1m56 0h1m15 0h1m4 0h1m17 0h1m52 0h2m3 0h1m88 0h1m49 0h1m68 0h1m10 0h1m7 0h1M71 163h1m116 0h1m1 0h1m36 0h1m23 0h1m25 0h1m102 0h1m24 0h1m23 0h1m21 0h1m12 0h1m8 0h1m49 0h1m53 0h1M16 164h1m21 0h1m10 0h1m37 0h1m2 0h2m22 0h1m21 0h1m95 0h1m3 0h1m42 0h1m16 0h1m4 0h1m9 0h1m21 0h1m20 0h1m15 0h1m54 0h1m19 0h1m57 0h1m84 0h1M59 165h2m68 0h1m24 0h1m27 0h1m14 0h1m16 0h1m132 0h1m3 0h1m19 0h1m31 0h1m9 0h1m2 0h1m41 0h1m5 0h1m99 0h1M45 166h1m16 0h1m24 0h1m88 0h1m150 0h1m49 0h1m56 0h2m12 0h1m32 0h1m100 0h1M25 167h1m10 0h1m167 0h1m34 0h1m22 0h1m194 0h1m37 0h1M74 168h1m100 0h1m3 0h1m19 0h1m23 0h1m72 0h1m4 0h1m24 0h1m2 0h1m15 0h1m54 0h1m25 0h1m18 0h1m31 0h1m24 0h1m26 0h1m19 0h1m11 0h1m28 0h1M20 169h1m19 0h1m14 0h1m66 0h1m15 0h1m18 0h1m24 0h1m72 0h1m11 0h1m14 0h1m43 0h1m16 0h1m29 0h1m75 0h1m12 0h1m37 0h1m30 0h1M42 170h1m45 0h1m27 0h1m120 0h1m13 0h1m57 0h1m192 0h1m70 0h1M39 171h1m90 0h1m119 0h1m83 0h1m17 0h1m54 0h1m152 0h1m24 0h1M12 172h2m262 0h1m74 0h1m14 0h1m17 0h1m54 0h1m12 0h1m52 0h1M56 173h1m1 0h1m103 0h1m4 0h1m21 0h1m75 0h1m1 0h1m151 0h1m134 0h1M98 174h1m146 0h1m70 0h1m185 0h1m47 0h1m47 0h1M31 175h1m3 0h1m30 0h2m102 0h1m13 0h1m73 0h1m31 0h1m45 0h1m1 0h1m21 0h1m61 0h1m3 0h1m84 0h1m25 0h1m56 0h1M155 176h1m156 0h1m13 0h1m48 0h1m50 0h1m10 0h1m5 0h1m10 0h1m139 0h1M120 177h1m16 0h1m33 0h1m177 0h1m8 0h1m4 0h1m71 0h1m44 0h1m4 0h1m50 0h1m6 0h1m9 0h1m13 0h1M0 178h1m28 0h1m20 0h1m43 0h1m11 0h1m381 0h1m74 0h1m1 0h1M51 179h2m17 0h1m172 0h1m91 0h1m17 0h1m76 0h1m32 0h1m7 0h1m54 0h1m64 0h1M15 180h1m48 0h1m61 0h1m3 0h1m84 0h1m11 0h1m86 0h1m91 0h1M50 181h1m117 0h1m16 0h1m46 0h1m56 0h1m81 0h1m21 0h1m29 0h1M27 182h1m25 0h1m141 0h1m74 0h1m18 0h1m89 0h1m23 0h1M62 183h1m60 0h1m7 0h1m15 0h1m108 0h1m28 0h1m105 0h1m12 0h1m64 0h1m38 0h1M54 184h1m148 0h1m129 0h1m72 0h1m26 0h1m34 0h1m42 0h1m55 0h1M16 185h1m63 0h1m100 0h1m1 0h1m20 0h1m75 0h1m32 0h1m44 0h1m17 0h1m30 0h1m24 0h1m6 0h1m61 0h1m28 0h1m53 0h1m7 0h1M0 186h1m28 0h1m31 0h1m45 0h1m23 0h1m86 0h1m73 0h1m84 0h1m2 0h1m35 0h2m31 0h1m11 0h1M54 187h1m42 0h1m150 0h1m53 0h1m36 0h1m52 0h1m182 0h1M110 188h1m13 0h1m41 0h1m161 0h1m76 0h1m95 0h1M52 189h1m33 0h1m47 0h1m34 0h1m59 0h1m104 0h1m3 0h1m108 0h1m24 0h1m57 0h1m34 0h1M1 190h1m37 0h1m105 0h1m217 0h1m11 0h1m8 0h1m119 0h1m4 0h1M40 191h1m340 0h1m29 0h1m69 0h1M25 192h1m43 0h1m67 0h1m69 0h1m114 0h1m13 0h1m107 0h1m30 0h1m28 0h1m12 0h1m80 0h1M74 193h1m144 0h1m101 0h1M70 194h1m192 0h1m1 0h1m37 0h1m23 0h1M146 195h1M64 196h1m43 0h1m13 0h1m7 0h1m333 0h1M116 197h1m8 0h1m93 0h1m4 0h1m128 0h1m137 0h1M14 198h1m79 0h1m99 0h1m364 0h1m3 0h1m32 0h1M146 199h1m91 0h1m71 0h1m110 0h1m114 0h1m23 0h1m28 0h1M151 200h1m5 0h1m98 0h1m18 0h1m177 0h1m84 0h2M269 201h1m58 0h1m51 0h1M3 202h1m58 0h1m427 0h1M41 203h1m23 0h1m444 0h1m13 0h1m33 0h1M37 204h1m74 0h1m87 0h1m41 0h1m109 0h1m239 0h1M20 205h1m93 0h1m29 0h1m194 0h1m10 0h1m143 0h1m45 0h1m23 0h1M144 206h1m23 0h1m95 0h1m48 0h1M106 207h1m81 0h1m175 0h1M15 208h1m74 0h1m52 0h1m130 0h1m203 0h1m2 0h1m76 0h1M204 209h1m58 0h1M110 210h1m162 0h1m73 0h1m106 0h1m79 0h1m15 0h1M23 211h1m75 0h1m212 0h1m66 0h1M29 212h1m146 0h1m94 0h1m108 0h1m188 0h1M38 213h1m353 0h1m176 0h1M1 214h1m12 0h1m140 0h1m185 0h1m8 0h1m163 0h1m49 0h1M55 215h1m109 0h1m30 0h1m38 0h1m74 0h1m47 0h1m148 0h1M32 216h1m48 0h1m139 0h1m75 0h1m134 0h1m19 0h1m124 0h1M28 217h1m171 0h1m237 0h1m5 0h1M95 218h1m136 0h1M134 219h1m281 0h1m97 0h1M408 220h1m11 0h1m19 0h1M6 221h1M76 222h1m242 0h1m224 0h1m10 0h1m42 0h1M37 223h1m373 0h1m166 0h1M244 224h1m134 0h1m3 0h1M34 225h1m78 0h1m292 0h1M277 227h1m32 0h1m287 0h1M166 230h1m336 0h1m74 0h1m1 0h1M321 231h1M146 232h1M592 233h1M143 234h1M592 235h1M465 238h1M127 241h1M292 244h1m99 0h1M317 252h1M192 254h1m350 0h1M437 255h1M52 260h1m220 0h1M295 261h1M506 266h1M169 271h1M135 276h1M92 278h1M582 295h1M318 303h1"/><path stroke="#00005d" d="M25 0h1m2 0h1m7 0h1m46 0h2m39 0h1m2 0h2m1 0h1m15 0h1m5 0h1m1 0h1m99 0h1m16 0h1m44 0h1m5 0h1m6 0h1m38 0h1m9 0h1m56 0h1m5 0h1m13 0h1m23 0h1m3 0h1m3 0h1m10 0h1m7 0h1m5 0h2m40 0h1m5 0h1M15 1h1m2 0h1m41 0h1m2 0h2m4 0h2m5 0h1m4 0h1m11 0h1m45 0h1m2 0h1m8 0h1m29 0h1m4 0h1m4 0h1m16 0h1m35 0h1m64 0h1m7 0h1m1 0h1m1 0h1m3 0h1m1 0h1m4 0h2m38 0h2m6 0h1m6 0h1m31 0h1m6 0h1m66 0h1m6 0h2m3 0h1m1 0h2m1 0h1m28 0h1m21 0h1m2 0h1M0 2h1m15 0h1m15 0h1m29 0h1m1 0h1m9 0h1m4 0h1m8 0h1m42 0h1m10 0h1m12 0h1m33 0h1m1 0h1m2 0h1m8 0h1m39 0h1m17 0h1m3 0h1m7 0h1m30 0h1m5 0h1m6 0h1m2 0h1m48 0h1m13 0h1m7 0h1m36 0h1m2 0h1m11 0h1m2 0h1m40 0h1m25 0h1m25 0h1m23 0h1m5 0h1M9 3h1m18 0h1m31 0h1m65 0h1m15 0h1m2 0h2m2 0h1m32 0h1m3 0h1m26 0h1m52 0h1m58 0h1m2 0h5m29 0h1m16 0h1m8 0h1m30 0h1m3 0h1m11 0h1m3 0h2m7 0h1m3 0h1m31 0h1m7 0h1m4 0h2m16 0h1m26 0h1m5 0h1m4 0h1M2 4h1m8 0h1m7 0h1m4 0h2m59 0h2m5 0h1m27 0h1m5 0h1m25 0h1m31 0h1m3 0h1m1 0h1m6 0h1m3 0h1m39 0h1m1 0h1m18 0h1m4 0h1m8 0h1m24 0h1m9 0h1m4 0h1m2 0h1m47 0h2m10 0h1m2 0h1m10 0h1m1 0h1m30 0h1m20 0h1m2 0h1m29 0h1m9 0h1m1 0h2m17 0h1m30 0h1m7 0h1m5 0h1m5 0h1M13 5h1m1 0h1m3 0h1m9 0h1m32 0h2m21 0h2m45 0h1m5 0h1m6 0h1m9 0h1m38 0h1m1 0h1m17 0h1m36 0h1m10 0h1m4 0h1m44 0h1m1 0h1m19 0h1m25 0h1m8 0h2m5 0h1m4 0h1m7 0h1m29 0h2m10 0h1m10 0h1m3 0h1m1 0h1m4 0h1m39 0h1m2 0h1m2 0h1m57 0h1m16 0h1M7 6h1m1 0h1m1 0h2m10 0h2m2 0h1m33 0h1m10 0h1m5 0h1m8 0h1m95 0h1m13 0h1m9 0h1m1 0h2m48 0h1m100 0h1m3 0h1m6 0h1m5 0h1m1 0h1m10 0h1m35 0h1m1 0h1m11 0h1m3 0h1m6 0h3m55 0h1m1 0h1m40 0h1m14 0h1m3 0h1M7 7h1m12 0h1m109 0h2m7 0h1m2 0h2m42 0h1m1 0h1m8 0h1m5 0h1m40 0h1m8 0h1m46 0h1m19 0h1m5 0h2m51 0h1m60 0h1m1 0h2m2 0h1m1 0h1m31 0h1m1 0h1m1 0h1m8 0h1m4 0h1m4 0h1m35 0h1m4 0h1m14 0h1M3 8h1m10 0h1m14 0h1m4 0h1m32 0h1m2 0h1m8 0h1m7 0h2m7 0h1m36 0h1m13 0h1m37 0h1m11 0h1m6 0h1m3 0h1m49 0h1m2 0h1m5 0h1m47 0h1m6 0h1m36 0h1m1 0h1m5 0h1m17 0h1m4 0h1m1 0h1m32 0h2m7 0h2m13 0h1m32 0h1m10 0h1m47 0h1M5 9h2m4 0h1m3 0h1m5 0h1m43 0h1m14 0h1m3 0h1m5 0h1m34 0h1m4 0h1m2 0h1m1 0h1m9 0h1m37 0h1m7 0h1m4 0h1m46 0h1m26 0h1m37 0h1m1 0h1m13 0h1m34 0h1m15 0h1m7 0h1m9 0h1m31 0h1m1 0h1m4 0h1m7 0h1m3 0h1m4 0h1m38 0h1m1 0h1m7 0h1m9 0h1m1 0h2m42 0h2m18 0h1M0 10h1m12 0h1m50 0h1m1 0h1m5 0h3m3 0h1m4 0h1m4 0h1m5 0h1m27 0h1m13 0h1m2 0h1m3 0h1m4 0h1m45 0h1m12 0h1m43 0h1m2 0h1m6 0h1m71 0h1m36 0h1m2 0h1m1 0h1m18 0h1m39 0h2m1 0h1m1 0h1m14 0h1m48 0h1m47 0h1m4 0h1m7 0h1m2 0h1M6 11h1m7 0h1m7 0h1m37 0h1m5 0h1m12 0h1m52 0h1m1 0h1m1 0h2m7 0h1m8 0h1m25 0h1m5 0h2m6 0h1m48 0h1m3 0h1m11 0h1m7 0h1m8 0h1m34 0h1m15 0h1m7 0h1m27 0h1m22 0h1m42 0h1m23 0h2m44 0h1m48 0h1M19 12h1m11 0h1m5 0h1m1 0h1m3 0h2m8 0h1m23 0h2m9 0h1m12 0h2m31 0h1m11 0h1m11 0h1m10 0h1m8 0h1m3 0h1m4 0h1m3 0h1m1 0h1m5 0h1m13 0h1m17 0h2m15 0h1m28 0h1m11 0h1m18 0h1m23 0h1m9 0h1m16 0h1m25 0h1m12 0h1m3 0h1m5 0h1m38 0h1m9 0h2m4 0h1m1 0h1m19 0h1m24 0h1m1 0h1m13 0h1m5 0h1m1 0h1m28 0h1m6 0h1m1 0h1m9 0h2m12 0h1M2 13h1m2 0h1m11 0h1m5 0h1m11 0h1m62 0h3m4 0h1m7 0h1m29 0h1m7 0h1m2 0h1m6 0h1m4 0h1m6 0h1m10 0h1m41 0h1m1 0h1m4 0h1m19 0h1m36 0h1m2 0h1m11 0h1m12 0h1m8 0h1m2 0h1m7 0h1m11 0h1m8 0h1m2 0h1m9 0h1m4 0h1m40 0h2m18 0h1m13 0h1m17 0h1m2 0h1m10 0h1m3 0h1m6 0h1m1 0h1m1 0h1m6 0h1m3 0h2m2 0h1m6 0h1m11 0h1m1 0h1m30 0h1M20 14h1m13 0h1m3 0h1m5 0h1m8 0h1m1 0h1m24 0h1m8 0h1m2 0h1m2 0h1m17 0h1m14 0h1m9 0h1m16 0h1m21 0h1m30 0h1m11 0h1m3 0h1m25 0h1m2 0h1m45 0h1m10 0h1m5 0h2m4 0h1m6 0h1m3 0h1m7 0h1m29 0h1m11 0h1m18 0h1m53 0h1m9 0h1m6 0h1m4 0h1m10 0h1m9 0h1m3 0h1m9 0h2m2 0h1m13 0h1m5 0h1m4 0h1m21 0h1m1 0h1m2 0h1m15 0h1m3 0h1M4 15h1m2 0h1m8 0h1m15 0h1m27 0h1m18 0h1m14 0h1m2 0h2m2 0h1m19 0h1m4 0h1m30 0h1m8 0h1m6 0h1m9 0h1m4 0h1m26 0h1m7 0h1m3 0h3m6 0h1m12 0h1m9 0h1m25 0h1m7 0h1m6 0h1m7 0h1m8 0h1m38 0h1m1 0h1m2 0h1m8 0h1m4 0h1m4 0h1m22 0h1m59 0h1m7 0h1m5 0h1m3 0h1m6 0h1m11 0h1m28 0h1m22 0h1m24 0h1M7 16h1m35 0h1m4 0h2m14 0h1m32 0h1m2 0h1m16 0h1m15 0h1m9 0h1m5 0h1m27 0h1m14 0h1m3 0h1m2 0h1m9 0h1m3 0h1m13 0h1m30 0h1m4 0h1m2 0h1m22 0h1m1 0h1m4 0h2m2 0h1m16 0h1m6 0h1m11 0h1m52 0h1m1 0h1m15 0h2m29 0h1m2 0h1m7 0h1m6 0h1m10 0h1m5 0h1m19 0h1m14 0h1m13 0h1m3 0h3m9 0h1m3 0h1m1 0h1m24 0h1m1 0h1M1 17h1m9 0h1m13 0h3m7 0h1m14 0h1m1 0h1m8 0h1m55 0h1m21 0h1m3 0h1m7 0h1m3 0h1m49 0h1m8 0h1m11 0h1m1 0h1m2 0h1m2 0h2m4 0h1m10 0h1m10 0h1m1 0h1m14 0h1m1 0h1m21 0h1m3 0h1m21 0h1m31 0h1m11 0h1m21 0h1m19 0h1m11 0h2m14 0h2m41 0h1m45 0h1m5 0h2m27 0h1m9 0h1m10 0h1m3 0h1M5 18h1m6 0h1m6 0h1m4 0h1m3 0h1m13 0h1m6 0h1m34 0h1m6 0h1m25 0h1m5 0h1m24 0h1m3 0h2m29 0h1m17 0h1m4 0h1m19 0h1m34 0h1m4 0h1m1 0h1m12 0h1m7 0h1m1 0h1m1 0h1m6 0h1m29 0h1m4 0h1m22 0h1m6 0h1m2 0h1m46 0h1m14 0h2m3 0h1m4 0h1m2 0h1m4 0h1m24 0h1m12 0h1m1 0h1m6 0h1m2 0h1m32 0h1m2 0h2m9 0h1m7 0h1m16 0h1m5 0h1m4 0h1m11 0h1M4 19h2m1 0h1m1 0h1m7 0h1m3 0h1m6 0h1m1 0h1m9 0h1m1 0h1m18 0h1m2 0h1m9 0h2m16 0h1m1 0h1m34 0h1m4 0h1m15 0h2m4 0h1m3 0h1m6 0h1m7 0h1m19 0h1m10 0h1m3 0h1m4 0h1m12 0h2m4 0h1m1 0h1m14 0h1m60 0h1m29 0h2m4 0h1m3 0h1m17 0h1m16 0h1m1 0h1m7 0h1m1 0h1m6 0h1m41 0h1m4 0h1m16 0h1m4 0h1m9 0h1m6 0h1m15 0h1m13 0h2m37 0h2m13 0h1m11 0h1M6 20h1m4 0h1m30 0h1m11 0h1m29 0h1m8 0h1m42 0h1m11 0h1m50 0h1m11 0h1m2 0h2m11 0h1m7 0h1m16 0h2m17 0h1m1 0h1m4 0h1m4 0h1m16 0h1m2 0h1m25 0h1m24 0h1m1 0h1m17 0h1m5 0h1m11 0h1m10 0h1m1 0h1m4 0h1m4 0h1m28 0h1m12 0h1m5 0h1m17 0h1m9 0h1m1 0h1m15 0h1m1 0h1m10 0h1m9 0h1m19 0h1m15 0h1M2 21h1m11 0h1m18 0h1m5 0h1m8 0h1m8 0h1m11 0h1m3 0h1m1 0h1m4 0h1m16 0h1m4 0h3m3 0h1m2 0h1m29 0h1m4 0h1m5 0h1m6 0h1m10 0h1m1 0h1m4 0h1m8 0h1m1 0h1m3 0h1m4 0h1m12 0h1m3 0h2m2 0h1m7 0h1m15 0h1m5 0h1m9 0h1m41 0h1m7 0h1m4 0h2m2 0h1m3 0h1m8 0h1m27 0h1m10 0h1m3 0h1m7 0h1m7 0h1m1 0h1m4 0h1m2 0h1m2 0h1m10 0h1m7 0h1m12 0h1m12 0h1m4 0h3m20 0h1m1 0h1m3 0h1m4 0h1m5 0h1m2 0h1m7 0h1m3 0h2m24 0h1m36 0h1m9 0h1m9 0h1m7 0h1M4 22h2m14 0h1m2 0h1m9 0h1m1 0h1m21 0h1m2 0h1m5 0h1m4 0h1m1 0h1m1 0h1m1 0h1m22 0h1m2 0h1m12 0h1m10 0h1m1 0h1m7 0h1m4 0h2m5 0h1m34 0h1m2 0h1m1 0h1m14 0h2m2 0h1m9 0h1m9 0h1m21 0h1m9 0h1m2 0h1m10 0h1m10 0h1m2 0h1m2 0h1m10 0h1m1 0h1m15 0h1m25 0h1m18 0h1m24 0h1m12 0h1m11 0h1m9 0h2m22 0h1m5 0h1m2 0h2m1 0h1m8 0h1m24 0h1m11 0h1m8 0h1m11 0h1m14 0h1m6 0h1m33 0h2M17 23h1m1 0h1m29 0h1m13 0h1m12 0h1m14 0h1m7 0h1m4 0h1m7 0h1m14 0h1m6 0h1m1 0h1m47 0h1m6 0h1m5 0h1m11 0h1m8 0h1m8 0h1m11 0h3m36 0h1m26 0h1m30 0h1m71 0h1m22 0h1m5 0h1m24 0h1m13 0h1m43 0h2m27 0h1m5 0h1m5 0h1m17 0h1m4 0h1m9 0h1m1 0h2M13 24h1m21 0h2m11 0h1m11 0h1m35 0h1m5 0h1m28 0h1m9 0h1m3 0h1m25 0h2m1 0h1m7 0h1m9 0h1m2 0h1m5 0h1m19 0h1m15 0h1m11 0h1m20 0h1m4 0h1m2 0h1m2 0h2m9 0h1m2 0h1m19 0h1m18 0h1m13 0h1m50 0h1m24 0h1m21 0h1m10 0h1m6 0h1m7 0h1m11 0h1m6 0h1m14 0h2m7 0h2m5 0h1m3 0h2m11 0h1m1 0h1m5 0h1m13 0h1m8 0h1m6 0h1m1 0h1m1 0h1m3 0h2M1 25h1m21 0h1m6 0h1m5 0h1m30 0h1m36 0h1m4 0h1m25 0h1m3 0h1m30 0h1m2 0h1m16 0h1m2 0h1m22 0h1m6 0h1m9 0h1m2 0h1m2 0h1m5 0h1m7 0h1m3 0h1m24 0h1m7 0h2m5 0h1m24 0h1m6 0h1m21 0h1m13 0h1m30 0h1m8 0h1m10 0h1m2 0h1m13 0h1m10 0h1m23 0h1m6 0h1m12 0h1m3 0h1m16 0h1m19 0h1m3 0h1m42 0h1m5 0h2m1 0h1m11 0h1M9 26h1m11 0h1m4 0h1m5 0h1m6 0h1m3 0h1m4 0h1m9 0h1m49 0h1m2 0h1m5 0h1m17 0h1m6 0h1m19 0h1m28 0h2m4 0h1m15 0h1m26 0h1m9 0h1m6 0h1m2 0h1m35 0h1m1 0h1m14 0h1m8 0h1m3 0h1m14 0h1m1 0h2m1 0h1m18 0h1m11 0h1m6 0h1m5 0h1m19 0h1m12 0h1m9 0h1m7 0h1m45 0h1m25 0h1m2 0h1m2 0h1m1 0h1m10 0h1m7 0h1m15 0h1m1 0h1m8 0h1m3 0h1m2 0h1m2 0h2m3 0h1m3 0h1m3 0h1M5 27h1m6 0h1m5 0h1m10 0h1m6 0h1m18 0h1m1 0h1m14 0h1m42 0h1m2 0h1m36 0h1m1 0h1m45 0h1m1 0h1m16 0h1m5 0h1m3 0h2m19 0h1m1 0h1m2 0h1m16 0h1m3 0h1m16 0h1m9 0h1m9 0h1m19 0h1m1 0h1m34 0h1m30 0h1m4 0h1m2 0h1m7 0h1m2 0h1m10 0h2m3 0h1m28 0h1m3 0h1m1 0h1m17 0h1m14 0h1m1 0h1m7 0h1m2 0h1m3 0h1m6 0h1m12 0h1m9 0h1m18 0h1m22 0h1M14 28h1m15 0h1m6 0h1m17 0h1m20 0h1m7 0h1m28 0h1m4 0h1m2 0h1m10 0h1m14 0h1m36 0h1m26 0h1m14 0h1m11 0h1m4 0h1m3 0h1m26 0h1m6 0h1m1 0h1m5 0h1m4 0h3m2 0h3m2 0h1m4 0h1m3 0h1m14 0h1m3 0h1m19 0h1m6 0h1m1 0h1m39 0h1m5 0h1m1 0h1m1 0h1m2 0h1m2 0h1m4 0h1m2 0h1m3 0h1m1 0h2m2 0h1m8 0h1m18 0h1m2 0h1m9 0h1m8 0h2m3 0h1m4 0h1m6 0h1m3 0h1m6 0h1m2 0h1m4 0h1m6 0h1m10 0h1m5 0h1m30 0h1M20 29h1m4 0h1m2 0h1m18 0h1m4 0h1m27 0h1m15 0h1m19 0h1m5 0h1m1 0h1m6 0h1m1 0h1m10 0h1m16 0h1m4 0h1m5 0h1m5 0h1m16 0h1m10 0h1m17 0h1m11 0h1m4 0h1m34 0h1m17 0h1m9 0h1m88 0h1m8 0h1m8 0h1m2 0h1m5 0h1m25 0h1m29 0h1m7 0h1m41 0h1m36 0h1m1 0h1m4 0h1m6 0h1M2 30h1m6 0h1m5 0h2m6 0h1m14 0h1m13 0h1m49 0h1m22 0h1m8 0h1m21 0h1m8 0h2m14 0h2m2 0h1m35 0h1m7 0h1m10 0h1m6 0h1m8 0h2m21 0h1m22 0h1m6 0h1m11 0h1m5 0h1m9 0h1m16 0h1m3 0h1m13 0h1m15 0h1m12 0h1m10 0h1m4 0h1m16 0h1m3 0h1m10 0h1m18 0h1m42 0h1m10 0h1m7 0h1m12 0h1m7 0h1m4 0h1m5 0h1m13 0h1m4 0h2m9 0h1M17 31h1m18 0h1m19 0h1m14 0h2m6 0h2m3 0h1m7 0h1m28 0h1m62 0h1m18 0h1m3 0h1m1 0h2m2 0h1m4 0h1m12 0h1m33 0h1m26 0h1m40 0h1m5 0h1m6 0h2m7 0h1m11 0h1m1 0h1m21 0h1m11 0h1m9 0h1m3 0h1m16 0h1m22 0h2m9 0h1m3 0h1m15 0h2m5 0h1m9 0h1m29 0h1m9 0h1m27 0h1m7 0h1m1 0h1m10 0h1M4 32h1m2 0h1m35 0h1m23 0h1m1 0h1m13 0h1m3 0h1m3 0h1m4 0h1m4 0h1m3 0h1m1 0h2m7 0h1m3 0h1m1 0h1m14 0h1m9 0h1m7 0h1m3 0h1m22 0h1m4 0h1m1 0h1m22 0h1m37 0h1m6 0h1m7 0h1m7 0h1m9 0h1m11 0h1m2 0h1m14 0h1m2 0h1m3 0h1m9 0h1m2 0h1m13 0h1m1 0h1m19 0h2m14 0h1m24 0h3m11 0h2m14 0h1m1 0h1m4 0h1m12 0h1m13 0h1m16 0h1m10 0h2m7 0h2m2 0h1m11 0h1m1 0h1m5 0h1m11 0h1m12 0h1m3 0h1M9 33h1m8 0h1m29 0h1m8 0h1m2 0h1m50 0h1m5 0h2m2 0h2m13 0h1m6 0h1m9 0h1m22 0h1m4 0h1m9 0h1m2 0h1m5 0h1m6 0h2m3 0h1m45 0h1m4 0h1m8 0h1m4 0h1m16 0h1m7 0h2m5 0h1m16 0h1m17 0h1m18 0h1m13 0h1m13 0h1m25 0h1m12 0h1m22 0h1m7 0h1m5 0h1m7 0h1m10 0h1m7 0h1m7 0h1m10 0h1m13 0h1m15 0h2m7 0h1m10 0h1m17 0h1m5 0h1m1 0h1m3 0h1m2 0h1M1 34h1m3 0h1m26 0h1m1 0h1m45 0h1m6 0h1m27 0h2m4 0h1m6 0h1m4 0h1m11 0h1m3 0h1m11 0h1m47 0h1m36 0h1m2 0h1m21 0h1m11 0h1m8 0h1m1 0h2m57 0h1m2 0h1m11 0h1m11 0h1m8 0h1m22 0h1m18 0h1m1 0h1m34 0h1m6 0h1m31 0h1m11 0h1m16 0h1m15 0h1m2 0h1m32 0h1M22 35h1m31 0h1m18 0h1m9 0h1m66 0h1m13 0h1m17 0h1m1 0h1m16 0h1m7 0h1m3 0h1m4 0h1m27 0h1m4 0h1m39 0h1m1 0h1m17 0h1m16 0h1m5 0h1m41 0h1m12 0h1m18 0h1m9 0h1m6 0h1m6 0h1m1 0h1m4 0h1m21 0h1m13 0h1m21 0h1m2 0h1m11 0h1m10 0h1m5 0h1m2 0h1m8 0h1m37 0h2m8 0h1M9 36h1m1 0h1m24 0h1m30 0h1m4 0h1m18 0h1m9 0h1m4 0h1m3 0h1m2 0h1m2 0h1m9 0h1m9 0h1m37 0h1m23 0h1m32 0h1m61 0h1m4 0h2m61 0h2m6 0h2m1 0h1m42 0h1m6 0h1m4 0h1m22 0h1m1 0h2m3 0h1m5 0h1m25 0h1m6 0h1m2 0h1m7 0h1m15 0h1m16 0h1m2 0h1m17 0h1m7 0h3M20 37h1m28 0h1m5 0h1m16 0h1m22 0h1m8 0h1m19 0h1m6 0h1m4 0h1m1 0h1m13 0h1m7 0h1m18 0h1m7 0h1m4 0h1m6 0h1m22 0h1m4 0h1m44 0h1m1 0h2m11 0h2m2 0h1m12 0h1m55 0h1m4 0h1m11 0h1m3 0h1m33 0h1m5 0h1m5 0h1m13 0h1m13 0h1m3 0h1m1 0h2m3 0h1m18 0h1m8 0h1m18 0h1m20 0h1m10 0h1m47 0h1M8 38h1m23 0h1m29 0h1m10 0h1m2 0h1m17 0h1m17 0h1m8 0h1m11 0h1m1 0h1m10 0h1m12 0h1m8 0h1m10 0h1m19 0h1m8 0h1m2 0h1m17 0h1m1 0h1m2 0h1m5 0h2m10 0h1m20 0h1m4 0h1m1 0h1m25 0h1m14 0h2m9 0h1m5 0h1m6 0h1m5 0h1m8 0h1m6 0h1m5 0h1m9 0h1m12 0h1m11 0h1m5 0h1m15 0h1m1 0h1m7 0h1m10 0h1m12 0h1m25 0h1m1 0h1m15 0h1m14 0h2m1 0h1m14 0h1m12 0h1m4 0h1m38 0h1M59 39h2m24 0h1m29 0h1m1 0h1m34 0h1m35 0h1m8 0h3m4 0h1m2 0h1m8 0h2m37 0h1m3 0h1m22 0h1m2 0h1m1 0h1m1 0h1m4 0h1m31 0h1m5 0h1m7 0h1m5 0h1m6 0h1m1 0h1m8 0h1m5 0h1m39 0h1m6 0h1m9 0h1m2 0h1m2 0h1m13 0h1m24 0h1m34 0h1m12 0h1m5 0h1m1 0h1m12 0h1m13 0h1m29 0h1m4 0h1M43 40h1m1 0h1m42 0h1m6 0h1m27 0h2m15 0h2m7 0h1m12 0h1m3 0h1m1 0h1m2 0h1m11 0h1m6 0h1m4 0h1m6 0h1m2 0h1m2 0h1m15 0h2m5 0h1m6 0h1m4 0h1m5 0h1m2 0h1m2 0h1m33 0h1m22 0h1m6 0h2m17 0h1m4 0h1m20 0h1m40 0h2m14 0h1m3 0h1m2 0h1m1 0h2m5 0h1m7 0h1m18 0h1m14 0h1m1 0h1m22 0h1m17 0h1m2 0h1m3 0h1m6 0h1m2 0h1m21 0h1m13 0h1M12 41h1m2 0h1m13 0h1m12 0h1m22 0h1m10 0h1m3 0h1m4 0h1m24 0h1m25 0h1m6 0h1m3 0h1m39 0h1m10 0h1m2 0h1m8 0h1m16 0h1m20 0h1m7 0h1m10 0h2m6 0h1m12 0h1m4 0h1m6 0h1m6 0h2m20 0h1m7 0h1m7 0h1m12 0h1m28 0h1m13 0h1m16 0h1m2 0h1m17 0h1m12 0h1m5 0h2m22 0h1m11 0h1m13 0h1m2 0h3m8 0h1m11 0h1m21 0h1m2 0h1m1 0h1m9 0h1m15 0h1m3 0h1m4 0h1M0 42h1m10 0h1m16 0h1m13 0h1m4 0h1m9 0h1m18 0h1m9 0h1m16 0h1m12 0h1m22 0h1m6 0h1m21 0h1m14 0h1m3 0h1m27 0h1m8 0h1m37 0h1m11 0h1m17 0h1m13 0h1m7 0h1m11 0h2m39 0h1m22 0h1m1 0h2m1 0h1m5 0h1m6 0h1m4 0h2m13 0h1m33 0h1m1 0h2m4 0h1m13 0h1m31 0h1m4 0h1m14 0h1m12 0h1m17 0h1m7 0h1m7 0h1m9 0h1M8 43h1m1 0h1m4 0h1m45 0h1m13 0h2m9 0h1m31 0h1m6 0h1m23 0h1m18 0h1m5 0h1m14 0h1m2 0h1m47 0h1m21 0h1m7 0h1m1 0h1m1 0h1m14 0h1m10 0h1m21 0h1m8 0h1m1 0h1m6 0h1m4 0h1m4 0h1m19 0h1m9 0h1m8 0h1m12 0h1m15 0h1m29 0h1m21 0h1m18 0h1m51 0h1m12 0h2m8 0h1m30 0h1M64 44h1m22 0h1m9 0h1m1 0h1m12 0h1m3 0h1m16 0h1m13 0h1m11 0h1m1 0h1m13 0h2m10 0h1m22 0h1m17 0h1m2 0h2m2 0h1m38 0h1m15 0h1m43 0h2m23 0h1m1 0h1m41 0h1m4 0h1m29 0h1m2 0h1m4 0h1m2 0h1m7 0h1m14 0h1m11 0h1m10 0h1m5 0h1m22 0h1m23 0h1m2 0h1m14 0h1m10 0h1M31 45h1m17 0h1m36 0h1m7 0h1m7 0h1m17 0h1m36 0h1m47 0h1m1 0h1m36 0h1m20 0h1m3 0h3m3 0h1m10 0h1m12 0h1m11 0h1m13 0h1m3 0h1m7 0h1m11 0h1m47 0h1m5 0h1m32 0h2m17 0h1m33 0h1m2 0h1m14 0h1m3 0h2m47 0h1m12 0h1m15 0h1M2 46h1m3 0h1m8 0h1m22 0h1m14 0h1m1 0h1m2 0h1m16 0h1m6 0h1m42 0h1m16 0h1m7 0h1m47 0h2m15 0h1m22 0h1m18 0h1m14 0h1m8 0h1m14 0h1m2 0h1m28 0h1m37 0h1m4 0h1m9 0h2m14 0h1m6 0h1m6 0h1m1 0h1m1 0h1m10 0h1m16 0h1m29 0h1m16 0h1m10 0h1m3 0h1m26 0h1m10 0h1m7 0h1m4 0h1m20 0h1m1 0h1M0 47h1m6 0h1m20 0h2m20 0h2m5 0h1m13 0h1m7 0h1m2 0h1m22 0h1m1 0h1m42 0h1m17 0h1m9 0h1m6 0h1m15 0h1m8 0h1m20 0h1m1 0h1m14 0h1m10 0h1m2 0h1m6 0h1m7 0h1m15 0h1m4 0h2m2 0h1m6 0h1m14 0h1m5 0h3m12 0h1m10 0h1m16 0h1m14 0h1m21 0h1m18 0h1m4 0h1m15 0h1m9 0h1m9 0h1m1 0h1m12 0h2m13 0h1m14 0h1m1 0h1m14 0h1m2 0h1m27 0h1m15 0h1m2 0h1m3 0h1M26 48h1m29 0h1m3 0h1m19 0h1m9 0h1m7 0h1m4 0h1m18 0h1m35 0h1m12 0h1m1 0h1m3 0h2m56 0h1m15 0h1m40 0h1m6 0h1m11 0h1m5 0h1m23 0h1m2 0h1m2 0h1m1 0h1m7 0h1m13 0h1m23 0h1m4 0h1m3 0h1m14 0h1m8 0h1m24 0h1m4 0h1m3 0h1m7 0h1m11 0h1m5 0h1m1 0h1m6 0h1m4 0h1m1 0h1m36 0h1m3 0h1m2 0h1m22 0h1m5 0h1m17 0h1M0 49h1m3 0h1m19 0h1m49 0h1m32 0h2m3 0h1m5 0h1m37 0h1m6 0h1m3 0h1m53 0h1m28 0h2m4 0h1m9 0h1m3 0h1m26 0h1m14 0h1m22 0h1m4 0h1m55 0h1m12 0h2m6 0h1m22 0h1m26 0h1m1 0h1m11 0h2m13 0h1m11 0h2m6 0h1m39 0h2m25 0h1m8 0h1m3 0h1M2 50h1m7 0h2m1 0h1m4 0h1m6 0h1m6 0h1m3 0h1m19 0h1m61 0h1m3 0h1m3 0h1m28 0h1m10 0h2m36 0h1m7 0h1m15 0h1m24 0h1m28 0h1m7 0h1m31 0h1m17 0h1m6 0h1m7 0h1m4 0h1m3 0h1m1 0h1m26 0h1m27 0h1m8 0h1m14 0h4m12 0h2m29 0h1m25 0h1m12 0h1m2 0h2m19 0h1m29 0h2M20 51h1m4 0h1m20 0h1m13 0h1m5 0h1m3 0h1m65 0h1m6 0h1m16 0h1m11 0h1m18 0h1m13 0h3m6 0h1m1 0h1m2 0h1m3 0h1m7 0h1m50 0h1m9 0h1m1 0h1m16 0h1m22 0h1m21 0h1m1 0h1m28 0h1m8 0h1m8 0h1m6 0h1m21 0h1m7 0h1m27 0h1m18 0h2m13 0h1m4 0h1m16 0h1m25 0h1m7 0h1m7 0h1m10 0h1m11 0h1M15 52h1m2 0h1m4 0h1m14 0h1m36 0h1m3 0h2m12 0h1m13 0h1m39 0h1m3 0h1m7 0h2m34 0h1m1 0h1m6 0h1m4 0h1m2 0h1m1 0h1m6 0h1m31 0h1m1 0h1m21 0h1m21 0h1m15 0h1m47 0h1m56 0h1m2 0h1m10 0h1m8 0h1m28 0h2m6 0h1m11 0h1m15 0h1m5 0h1m20 0h1m19 0h1m5 0h1m3 0h1m1 0h1m4 0h1m13 0h1m5 0h1M7 53h1m6 0h1m53 0h1m19 0h1m38 0h1m17 0h1m1 0h1m11 0h1m16 0h1m26 0h1m2 0h1m1 0h1m28 0h1m6 0h1m8 0h1m1 0h1m9 0h2m16 0h1m6 0h1m9 0h1m8 0h1m4 0h1m1 0h1m1 0h1m11 0h1m20 0h1m10 0h2m1 0h1m1 0h1m15 0h2m2 0h1m7 0h1m13 0h1m4 0h1m11 0h2m18 0h1m8 0h1m5 0h1m37 0h2m4 0h1m2 0h1m28 0h1m14 0h1m7 0h1m12 0h1m5 0h1m2 0h1m11 0h1M10 54h1m12 0h1m10 0h1m7 0h1m22 0h1m12 0h1m1 0h1m41 0h1m2 0h1m4 0h1m32 0h1m2 0h1m1 0h1m12 0h1m5 0h1m17 0h1m2 0h1m5 0h1m7 0h1m5 0h1m9 0h1m20 0h1m6 0h1m12 0h1m12 0h1m4 0h1m2 0h1m25 0h1m1 0h2m1 0h1m14 0h1m27 0h1m3 0h1m8 0h1m8 0h1m86 0h1m17 0h1m26 0h2m9 0h1m46 0h1M10 55h1m4 0h1m17 0h1m18 0h1m9 0h1m4 0h1m1 0h1m15 0h1m27 0h1m32 0h1m2 0h1m60 0h1m16 0h1m5 0h1m6 0h2m6 0h1m5 0h1m4 0h1m5 0h1m22 0h1m14 0h1m3 0h1m14 0h1m18 0h1m6 0h1m3 0h1m3 0h1m40 0h1m7 0h1m1 0h1m27 0h1m2 0h1m2 0h1m15 0h1m8 0h1m1 0h1m4 0h1m26 0h1m5 0h1m6 0h1m4 0h1m13 0h1m9 0h1m13 0h1m18 0h2m3 0h1m6 0h1M53 56h1m5 0h1m5 0h1m7 0h1m5 0h2m4 0h1m27 0h1m3 0h1m1 0h1m70 0h1m7 0h1m25 0h1m6 0h1m6 0h1m4 0h1m6 0h1m34 0h1m4 0h1m1 0h1m18 0h1m10 0h1m3 0h1m18 0h1m57 0h2m12 0h1m51 0h1m26 0h1m23 0h1m13 0h1m4 0h2m4 0h1m13 0h1m5 0h2m4 0h2m13 0h1M5 57h1m23 0h1m14 0h1m23 0h1m5 0h1m7 0h1m1 0h1m36 0h1m17 0h1m8 0h1m3 0h1m10 0h1m8 0h1m1 0h1m24 0h1m28 0h2m5 0h3m1 0h1m27 0h1m61 0h1m24 0h1m33 0h1m3 0h1m4 0h1m12 0h1m14 0h1m2 0h1m5 0h1m21 0h2m17 0h1m18 0h1m15 0h1m24 0h1m20 0h1m20 0h1m6 0h1M16 58h1m35 0h1m17 0h1m3 0h1m1 0h1m18 0h1m15 0h1m3 0h1m5 0h1m1 0h1m3 0h1m40 0h2m2 0h1m32 0h2m4 0h1m14 0h1m18 0h1m47 0h1m65 0h1m30 0h1m4 0h1m10 0h1m11 0h1m31 0h1m12 0h1m9 0h1m2 0h1m5 0h1m8 0h1m8 0h1m14 0h1m39 0h1m4 0h1m3 0h1m8 0h1m8 0h1M15 59h1m1 0h1m11 0h1m3 0h1m16 0h1m19 0h1m4 0h1m20 0h1m8 0h1m29 0h1m87 0h1m11 0h1m38 0h1m8 0h1m13 0h2m33 0h1m8 0h1m22 0h1m1 0h1m5 0h1m22 0h1m7 0h1m18 0h2m14 0h1m9 0h1m13 0h1m21 0h1m17 0h1m11 0h1m39 0h1m3 0h1m14 0h1m1 0h1m4 0h1m16 0h1M18 60h1m28 0h1m9 0h1m32 0h1m10 0h1m46 0h1m2 0h1m45 0h1m31 0h1m6 0h1m33 0h1m1 0h1m25 0h1m3 0h1m34 0h1m1 0h1m28 0h1m13 0h1m4 0h1m12 0h1m32 0h1m16 0h1m3 0h1m7 0h1m7 0h1m11 0h1m1 0h1m13 0h1m2 0h1m4 0h1m24 0h1m6 0h1m32 0h1m15 0h1M24 61h2m21 0h1m18 0h1m28 0h2m41 0h1m8 0h1m3 0h1m16 0h1m2 0h2m24 0h2m37 0h1m7 0h1m55 0h1m2 0h1m11 0h1m28 0h1m23 0h1m1 0h1m10 0h1m21 0h1m7 0h1m43 0h1m23 0h1m1 0h1m1 0h1m24 0h1m8 0h1m16 0h1m5 0h1m7 0h1m18 0h1m19 0h1m8 0h1M0 62h1m22 0h1m17 0h1m4 0h1m11 0h1m3 0h1m24 0h1m23 0h1m1 0h1m10 0h1m9 0h1m32 0h1m27 0h1m60 0h1m4 0h1m11 0h1m24 0h2m4 0h2m15 0h1m38 0h1m1 0h1m10 0h1m19 0h1m24 0h1m11 0h1m32 0h1m1 0h1m37 0h1m1 0h1m16 0h1m38 0h1m11 0h1m4 0h1M17 63h1m20 0h1m7 0h1m17 0h1m37 0h1m19 0h1m30 0h1m34 0h1m20 0h1m13 0h1m35 0h1m44 0h1m2 0h1m3 0h1m8 0h1m19 0h1m12 0h1m40 0h1m10 0h1m32 0h1m3 0h1m10 0h1m21 0h1m81 0h1m5 0h1m1 0h1m14 0h2m8 0h1M28 64h1m5 0h1m21 0h1m1 0h1m21 0h1m2 0h1m28 0h1m3 0h1m22 0h1m18 0h1m38 0h1m30 0h1m36 0h1m5 0h1m18 0h1m17 0h1m25 0h1m17 0h1m8 0h2m17 0h1m4 0h2m4 0h3m40 0h1m80 0h1m1 0h1m15 0h1m5 0h1m4 0h1m2 0h1m47 0h1M9 65h1m60 0h1m25 0h1m9 0h1m16 0h1m21 0h1m1 0h1m37 0h1m8 0h1m88 0h1m27 0h1m8 0h1m48 0h1m6 0h1m8 0h1m4 0h1m5 0h1m11 0h1m7 0h1m6 0h1m2 0h1m9 0h1m11 0h1m7 0h2m13 0h1m22 0h1m2 0h1m6 0h1m5 0h1m11 0h1m13 0h1M7 66h1m14 0h1m2 0h1m2 0h1m2 0h1m3 0h1m2 0h1m3 0h1m14 0h1m89 0h1m10 0h1m11 0h1m1 0h1m11 0h1m26 0h1m13 0h1m23 0h1m15 0h1m10 0h1m2 0h1m9 0h1m47 0h1m17 0h1m41 0h3m1 0h1m4 0h1m23 0h2m21 0h1m15 0h1m31 0h1m9 0h1m39 0h1m5 0h1m37 0h1M51 67h1m9 0h1m48 0h1m38 0h1m14 0h1m2 0h1m2 0h1m16 0h1m21 0h1m21 0h1m6 0h1m7 0h1m2 0h1m19 0h1m42 0h1m1 0h1m9 0h1m2 0h1m7 0h1m43 0h1m28 0h1m100 0h1m16 0h1m34 0h1m16 0h1m16 0h1m2 0h1M37 68h1m1 0h1m23 0h1m23 0h1m2 0h2m32 0h1m25 0h1m14 0h2m2 0h1m11 0h1m1 0h1m81 0h1m10 0h1m8 0h1m20 0h1m59 0h1m13 0h1m2 0h1m5 0h2m13 0h1m15 0h1m2 0h1m3 0h1m4 0h1m8 0h1m5 0h1m10 0h1m4 0h2m12 0h1m27 0h1m22 0h1m18 0h1m12 0h1m24 0h1m2 0h1M6 69h1m6 0h1m12 0h1m9 0h1m7 0h1m14 0h1m3 0h1m95 0h1m2 0h1m24 0h1m13 0h1m7 0h1m17 0h1m2 0h1m5 0h1m31 0h1m20 0h1m3 0h1m9 0h1m2 0h1m21 0h1m23 0h1m22 0h1m56 0h1m3 0h1m3 0h1m9 0h1m7 0h1m10 0h1m16 0h1m10 0h1m32 0h1m22 0h1m8 0h1m34 0h2M60 70h1m26 0h1m9 0h1m36 0h1m5 0h1m2 0h1m4 0h1m34 0h1m28 0h1m4 0h1m16 0h1m8 0h1m6 0h1m35 0h1m13 0h1m3 0h1m12 0h1m2 0h1m3 0h1m14 0h1m5 0h1m33 0h1m22 0h1m1 0h2m2 0h1m2 0h1m1 0h1m10 0h1m26 0h1m9 0h2m37 0h1m10 0h1m9 0h1m24 0h1m2 0h1m19 0h1m10 0h1m5 0h1M27 71h1m25 0h1m8 0h1m3 0h1m35 0h1m9 0h1m15 0h1m23 0h2m1 0h1m85 0h1m3 0h1m2 0h1m39 0h1m7 0h1m23 0h1m10 0h1m8 0h1m7 0h1m14 0h1m12 0h1m11 0h1m7 0h1m12 0h1m1 0h1m4 0h1m16 0h1m6 0h1m30 0h1m19 0h1m3 0h1m3 0h1m24 0h1m22 0h1m5 0h1m7 0h1m4 0h2m14 0h1m7 0h1M31 72h1m6 0h1m4 0h1m29 0h1m41 0h2m2 0h1m15 0h1m6 0h1m18 0h1m18 0h1m14 0h1m1 0h1m7 0h1m1 0h1m36 0h1m21 0h1m12 0h1m9 0h1m4 0h1m8 0h1m8 0h1m5 0h1m3 0h1m3 0h1m3 0h1m20 0h1m7 0h1m3 0h1m3 0h1m4 0h1m8 0h1m33 0h1m26 0h1m4 0h1m16 0h1m31 0h1m16 0h1m14 0h1m2 0h1m13 0h2m17 0h1m8 0h1m22 0h1M12 73h1m3 0h1m15 0h1m21 0h1m6 0h1m25 0h1m4 0h1m8 0h2m3 0h1m52 0h2m5 0h1m3 0h1m6 0h1m8 0h1m5 0h1m31 0h1m1 0h1m19 0h1m23 0h1m1 0h2m2 0h1m2 0h1m44 0h1m28 0h1m17 0h1m25 0h2m16 0h1m17 0h1m8 0h1m46 0h1m10 0h1m10 0h1m8 0h1m9 0h1m22 0h1m8 0h2m4 0h2M0 74h1m7 0h1m6 0h1m3 0h1m25 0h2m24 0h1m6 0h1m6 0h1m7 0h1m1 0h1m4 0h1m9 0h1m7 0h1m9 0h1m15 0h1m47 0h1m6 0h1m33 0h1m16 0h1m21 0h1m22 0h1m23 0h1m8 0h1m8 0h1m18 0h1m36 0h1m4 0h1m27 0h1m5 0h2m3 0h1m49 0h2m7 0h1m45 0h1m8 0h2m8 0h1m1 0h1m28 0h1M18 75h1m26 0h1m20 0h1m55 0h1m20 0h1m35 0h1m18 0h1m9 0h1m48 0h1m6 0h1m6 0h1m4 0h1m13 0h1m3 0h1m28 0h1m7 0h1m1 0h1m8 0h1m13 0h1m7 0h1m3 0h1m57 0h1m16 0h1m15 0h1m12 0h1m14 0h1m17 0h1m13 0h2m4 0h1m7 0h1m26 0h1m24 0h1m8 0h1M55 76h1m22 0h1m9 0h1m10 0h1m1 0h1m36 0h1m6 0h1m66 0h2m33 0h1m15 0h1m3 0h1m4 0h1m15 0h1m24 0h1m4 0h1m22 0h1m9 0h1m6 0h2m22 0h1m3 0h1m30 0h1m4 0h1m6 0h1m3 0h2m3 0h1m5 0h1m8 0h1m41 0h1m1 0h1m10 0h1m22 0h1m4 0h1m5 0h1m20 0h1m7 0h1m18 0h1M64 77h1m1 0h1m26 0h1m2 0h1m12 0h1m8 0h1m25 0h1m11 0h1m22 0h1m61 0h1m2 0h2m13 0h1m2 0h1m15 0h1m11 0h1m75 0h1m22 0h2m10 0h1m1 0h2m1 0h1m32 0h1m1 0h1m12 0h1m6 0h1m11 0h1m40 0h1m4 0h1m6 0h1m15 0h1m43 0h1m3 0h1M2 78h1m1 0h1m54 0h1m3 0h1m1 0h1m31 0h1m1 0h1m20 0h1m15 0h1m14 0h1m39 0h1m30 0h1m30 0h1m12 0h1m42 0h1m1 0h2m46 0h2m12 0h1m10 0h1m4 0h1m9 0h1m38 0h1m2 0h1m5 0h1m54 0h1m9 0h1m25 0h1m3 0h1m13 0h1m33 0h1M13 79h1m4 0h2m19 0h1m29 0h1m19 0h1m1 0h1m26 0h1m6 0h1m10 0h1m25 0h1m18 0h1m9 0h1m1 0h1m5 0h1m10 0h1m16 0h1m30 0h2m26 0h1m4 0h1m3 0h1m9 0h1m12 0h1m21 0h1m3 0h1m21 0h1m1 0h1m6 0h1m44 0h1m24 0h2m5 0h1m14 0h1m8 0h1m18 0h2m23 0h1m1 0h1m16 0h1m8 0h1m40 0h1M2 80h1m13 0h1m15 0h1m16 0h1m1 0h1m13 0h1m11 0h1m31 0h1m40 0h1m50 0h1m17 0h1m7 0h1m19 0h1m7 0h1m1 0h1m1 0h1m10 0h2m11 0h1m11 0h1m26 0h1m9 0h1m12 0h1m12 0h1m7 0h1m32 0h1m31 0h1m46 0h1m42 0h1m56 0h1M21 81h1m10 0h1m8 0h1m44 0h1m42 0h1m16 0h1m14 0h2m15 0h1m9 0h1m4 0h1m9 0h1m9 0h1m11 0h1m8 0h2m16 0h1m40 0h1m58 0h1m1 0h1m19 0h1m32 0h1m25 0h1m1 0h1m21 0h1m13 0h1m6 0h1m1 0h1m58 0h1m15 0h1m3 0h1m4 0h1m15 0h1m6 0h1m2 0h1M4 82h1m22 0h1m65 0h1m6 0h1m12 0h1m3 0h1m2 0h1m34 0h1m15 0h2m5 0h1m9 0h1m10 0h1m8 0h1m2 0h1m3 0h1m17 0h1m4 0h1m8 0h1m13 0h1m14 0h1m15 0h1m22 0h1m1 0h1m12 0h1m9 0h1m22 0h1m42 0h1m24 0h1m4 0h1m2 0h1m14 0h1m26 0h1m26 0h1m11 0h1m33 0h1m2 0h2m7 0h1m3 0h1M46 83h1m11 0h1m4 0h1m4 0h1m2 0h1m2 0h1m29 0h1m37 0h1m17 0h1m12 0h1m12 0h1m54 0h1m5 0h1m16 0h1m50 0h1m9 0h1m17 0h1m1 0h2m52 0h1m39 0h1m19 0h1m6 0h2m3 0h1m36 0h1m36 0h1m5 0h1m12 0h1m31 0h1M83 84h1m11 0h1m16 0h1m4 0h1m35 0h1m30 0h1m24 0h1m7 0h1m30 0h1m4 0h1m26 0h1m2 0h1m7 0h1m3 0h1m3 0h1m28 0h1m3 0h1m6 0h1m3 0h1m38 0h1m2 0h1m24 0h1m60 0h1m13 0h1m3 0h1m2 0h2m19 0h1m6 0h1m16 0h1M0 85h1m10 0h1m4 0h1m1 0h1m47 0h1m37 0h1m2 0h1m6 0h1m23 0h1m27 0h1m11 0h1m3 0h1m4 0h1m15 0h1m10 0h1m13 0h1m50 0h1m29 0h1m19 0h1m67 0h1m5 0h1m5 0h1m33 0h1m17 0h1m99 0h1m2 0h1m1 0h1m4 0h1m23 0h1M2 86h1m8 0h1m6 0h1m23 0h1m22 0h2m2 0h1m5 0h1m12 0h1m9 0h1m39 0h1m8 0h1m3 0h1m15 0h2m9 0h1m4 0h1m17 0h1m40 0h1m3 0h1m16 0h1m38 0h1m5 0h1m3 0h2m18 0h2m34 0h1m28 0h1m9 0h1m19 0h1m19 0h1m40 0h1m42 0h1m47 0h1M6 87h1m8 0h1m7 0h1m2 0h2m5 0h1m32 0h1m73 0h1m15 0h2m35 0h1m25 0h1m56 0h1m23 0h1m27 0h1m25 0h1m15 0h2m27 0h1m31 0h1m39 0h1m36 0h1m12 0h1m5 0h1m10 0h1m26 0h1m9 0h1m8 0h1m9 0h1M9 88h2m5 0h1m15 0h1m1 0h1m30 0h1m4 0h1m10 0h2m3 0h1m2 0h1m6 0h2m26 0h1m15 0h1m2 0h1m8 0h1m19 0h1m26 0h1m12 0h1m1 0h1m25 0h1m14 0h1m6 0h1m41 0h1m23 0h1m10 0h1m4 0h1m20 0h1m22 0h2m7 0h1m47 0h1m24 0h1m18 0h1m1 0h1m8 0h1m6 0h1m1 0h1m14 0h1m21 0h1m15 0h1m12 0h1m21 0h1M23 89h1m37 0h1m14 0h1m9 0h1m40 0h1m4 0h1m36 0h2m32 0h1m33 0h1m15 0h1m6 0h1m1 0h1m98 0h1m3 0h1m28 0h1m53 0h1m27 0h1m30 0h2m9 0h1m34 0h1m6 0h1m2 0h1m34 0h1M7 90h1m7 0h1m2 0h1m8 0h1m6 0h1m26 0h2m14 0h1m18 0h1m52 0h1m7 0h1m36 0h1m48 0h1m10 0h1m28 0h1m19 0h1m21 0h1m4 0h1m9 0h1m9 0h1m72 0h1m27 0h1m6 0h1m23 0h2m10 0h1m8 0h2m15 0h1m6 0h1m8 0h1m28 0h1m9 0h1M8 91h1m28 0h1m26 0h1m4 0h1m39 0h1m58 0h1m3 0h1m7 0h1m2 0h1m26 0h1m1 0h1m14 0h1m3 0h1m13 0h1m10 0h1m1 0h1m8 0h1m20 0h2m17 0h1m36 0h1m1 0h1m9 0h1m8 0h1m14 0h1m47 0h1m12 0h1m9 0h1m19 0h1m9 0h1m10 0h1m52 0h1m8 0h2m21 0h1m2 0h1m8 0h2m7 0h1M1 92h1m1 0h1m8 0h1m16 0h1m8 0h1m53 0h1m39 0h1m1 0h1m27 0h1m25 0h2m55 0h1m16 0h1m22 0h1m28 0h1m11 0h1m40 0h1m67 0h1m81 0h1m5 0h1m2 0h1m1 0h1m7 0h1m17 0h1m10 0h1m18 0h1m13 0h1M5 93h1m23 0h1m13 0h1m25 0h1m24 0h1m5 0h1m4 0h3m7 0h1m14 0h1m8 0h1m7 0h1m9 0h1m43 0h1m28 0h1m14 0h1m12 0h1m10 0h1m7 0h1m1 0h1m25 0h1m17 0h1m7 0h1m16 0h1m10 0h1m6 0h1m2 0h1m14 0h1m18 0h1m133 0h1m26 0h1m3 0h1m11 0h1M1 94h1m1 0h1m13 0h1m7 0h1m8 0h1m12 0h1m1 0h1m18 0h1m13 0h1m28 0h1m7 0h1m7 0h1m20 0h1m12 0h1m4 0h1m24 0h1m1 0h1m9 0h1m22 0h1m6 0h1m22 0h1m11 0h1m7 0h1m11 0h1m44 0h1m16 0h1m19 0h1m67 0h1m31 0h1m3 0h1m8 0h1m1 0h1m72 0h1m21 0h1m2 0h1m10 0h1M0 95h1m2 0h1m41 0h1m67 0h1m28 0h1m1 0h1m34 0h1m8 0h1m41 0h1m56 0h1m58 0h1m7 0h1m80 0h1m2 0h1m28 0h1m17 0h1m60 0h1m10 0h1m11 0h1M0 96h1m4 0h1m17 0h1m56 0h1m1 0h1m27 0h1m18 0h1m10 0h1m24 0h1m60 0h1m3 0h1m18 0h1m15 0h1m24 0h1m28 0h1m1 0h2m4 0h1m1 0h1m38 0h1m6 0h1m33 0h1m10 0h1m43 0h1m11 0h1m4 0h1m5 0h1m35 0h1m17 0h1m1 0h1m23 0h1m13 0h1m13 0h1M20 97h1m18 0h1m22 0h1m52 0h1m6 0h1m50 0h1m17 0h1m60 0h1m45 0h1m14 0h1m4 0h2m3 0h1m52 0h1m37 0h1m18 0h1m10 0h1m31 0h1m17 0h1m65 0h1m25 0h1M10 98h1m26 0h1m4 0h1m19 0h1m11 0h1m26 0h1m35 0h1m7 0h1m4 0h1m74 0h1m2 0h1m24 0h1m18 0h1m14 0h1m73 0h1m5 0h1m18 0h1m28 0h1m52 0h1m4 0h1m46 0h1m1 0h1m29 0h1m8 0h1M22 99h1m6 0h1m3 0h1m3 0h1m5 0h1m15 0h1m5 0h1m24 0h1m5 0h1m8 0h1m9 0h1m2 0h1m33 0h1m16 0h1m21 0h1m27 0h1m6 0h1m16 0h1m8 0h1m3 0h1m9 0h1m3 0h1m54 0h1m10 0h1m22 0h1m33 0h1m30 0h1m16 0h1m17 0h1m1 0h1m28 0h1m34 0h2m23 0h1m47 0h1M2 100h1m10 0h1m17 0h1m17 0h1m14 0h1m14 0h1m47 0h1m1 0h1m9 0h1m6 0h1m50 0h1m12 0h1m7 0h1m32 0h1m14 0h1m35 0h1m23 0h1m49 0h1m7 0h1m4 0h1m12 0h1m1 0h1m4 0h1m55 0h1m9 0h1m6 0h1m9 0h1m91 0h1M19 101h1m45 0h1m13 0h1m38 0h1m2 0h1m50 0h1m8 0h1m34 0h1m18 0h1m5 0h1m33 0h1m9 0h2m9 0h1m14 0h1m14 0h2m3 0h1m49 0h1m3 0h1m64 0h1m29 0h2m10 0h1m34 0h1m14 0h1m4 0h1m11 0h1m29 0h1m1 0h1M3 102h1m2 0h1m15 0h1m64 0h1m37 0h1m21 0h1m13 0h1m14 0h1m2 0h1m62 0h1m6 0h1m1 0h2m15 0h2m21 0h1m18 0h1m1 0h1m15 0h1m5 0h1m27 0h1m95 0h1m40 0h1m14 0h1m21 0h1m53 0h1M1 103h1m18 0h1m7 0h1m9 0h1m1 0h1m6 0h1m10 0h2m39 0h1m30 0h1m3 0h2m21 0h1m12 0h1m9 0h1m8 0h1m25 0h1m4 0h1m121 0h1m23 0h1m11 0h1m24 0h1m28 0h1m19 0h1m14 0h1m15 0h1m14 0h1m81 0h1M6 104h1m2 0h1m55 0h1m5 0h1m3 0h1m3 0h1m11 0h1m44 0h1m3 0h1m10 0h1m12 0h1m14 0h2m8 0h1m30 0h2m97 0h1m20 0h1m117 0h1m8 0h1m16 0h1m8 0h1m4 0h1m2 0h1m33 0h1m8 0h1M14 105h1m5 0h1m11 0h1m18 0h1m101 0h1m12 0h1m71 0h1m1 0h1m7 0h1m12 0h1m4 0h1m4 0h1m58 0h1m1 0h1m8 0h1m39 0h1m41 0h1m21 0h1m44 0h1m23 0h2M3 106h1m63 0h1m7 0h1m12 0h1m20 0h1m85 0h1m50 0h1m12 0h1m3 0h1m5 0h1m35 0h1m20 0h1m11 0h1m6 0h1m32 0h1m5 0h1m71 0h1m1 0h1m10 0h1m3 0h1m2 0h1m19 0h1m2 0h1m2 0h1m2 0h1m30 0h1M47 107h1m9 0h1m1 0h1m1 0h1m11 0h1m57 0h1m7 0h1m14 0h1m46 0h1m17 0h1m22 0h1m4 0h1m19 0h1m16 0h1m12 0h1m47 0h1m50 0h1m2 0h1m9 0h1m35 0h1m66 0h1m25 0h1m9 0h1m39 0h1m8 0h1M41 108h1m15 0h2m15 0h1m13 0h1m15 0h1m12 0h1m53 0h1m2 0h1m57 0h1m31 0h1m4 0h1m78 0h1m2 0h1m8 0h1m27 0h1m2 0h1m90 0h1m13 0h1m30 0h1m24 0h1M4 109h1m22 0h1m6 0h1m3 0h1m21 0h1m89 0h1m74 0h1m1 0h1m5 0h1m43 0h1m2 0h1m20 0h1m14 0h1m39 0h1m109 0h1m26 0h1m37 0h1M9 110h1m14 0h1m3 0h1m14 0h1m42 0h1m9 0h1m3 0h1m5 0h1m15 0h1m9 0h1m28 0h1m15 0h1m13 0h1m18 0h1m1 0h1m32 0h1m27 0h1m4 0h1m15 0h1m1 0h1m17 0h1m37 0h1m12 0h1m4 0h1m17 0h1m9 0h1m26 0h1m22 0h1m36 0h1m11 0h1m8 0h1m20 0h1m17 0h1m7 0h1m18 0h1M43 111h1m104 0h1m18 0h1m9 0h1m17 0h1m19 0h1m22 0h1m24 0h2m54 0h1m24 0h1m20 0h1m23 0h2m5 0h1m32 0h1m18 0h1m33 0h1m12 0h1m23 0h1m3 0h1m9 0h1m38 0h1M85 112h1m53 0h2m2 0h1m1 0h1m7 0h1m4 0h1m54 0h1m8 0h1m10 0h1m47 0h1m21 0h1m88 0h1m19 0h1m2 0h1m2 0h1m9 0h1m68 0h1m4 0h1m23 0h1m30 0h1m13 0h1m6 0h1m1 0h1M3 113h1m11 0h1m17 0h1m24 0h1m3 0h1m16 0h1m13 0h1m18 0h1m6 0h1m33 0h2m11 0h1m4 0h1m25 0h1m80 0h1m30 0h1m15 0h1m12 0h1m7 0h1m22 0h1m53 0h1m13 0h1m3 0h1m16 0h1m8 0h1m33 0h1m21 0h2m6 0h1m26 0h1m24 0h1m12 0h1M8 114h1m64 0h1m34 0h1m14 0h1m53 0h1m14 0h1m23 0h2m41 0h1m14 0h1m3 0h2m21 0h1m81 0h1m3 0h1m11 0h1m21 0h1m5 0h1m6 0h1m24 0h1m9 0h1m11 0h1m19 0h1m7 0h1m83 0h1M5 115h1m26 0h1m14 0h1m28 0h1m82 0h1m30 0h1m17 0h1m88 0h1m6 0h1m9 0h1m98 0h1m18 0h1m29 0h1m15 0h1m13 0h1m4 0h1m8 0h1m23 0h1m40 0h1M23 116h1m39 0h1m2 0h1m14 0h1m9 0h1m1 0h1m9 0h1m27 0h1m31 0h2m14 0h1m14 0h1m20 0h1m67 0h1m2 0h1m16 0h1m46 0h2m12 0h1m65 0h1m72 0h1m46 0h1m12 0h1m19 0h1M10 117h1m53 0h1m3 0h1m6 0h1m7 0h1m219 0h1m29 0h1m18 0h1m8 0h1m27 0h1m19 0h1m1 0h1m126 0h1m28 0h1m3 0h1m4 0h1m7 0h1m3 0h1M22 118h1m79 0h1m1 0h1m3 0h1m5 0h1m64 0h1m32 0h1m68 0h1m25 0h1m9 0h1m24 0h1m15 0h1m28 0h1m1 0h1m30 0h1m6 0h1m11 0h1m18 0h1m22 0h1m36 0h1m22 0h1m12 0h1m16 0h1M47 119h1m17 0h1m10 0h1m87 0h1m3 0h1m46 0h1m2 0h1m45 0h1m59 0h1m10 0h1m5 0h1m14 0h1m47 0h1m4 0h1m8 0h1m18 0h1m3 0h1m2 0h1m2 0h1m7 0h1m39 0h1m7 0h1m12 0h1m43 0h1m21 0h1M10 120h1m10 0h1m55 0h1m29 0h1m58 0h1m62 0h1m9 0h1m10 0h1m64 0h1m54 0h1m28 0h1m1 0h1m10 0h1m31 0h1m18 0h1m9 0h1m70 0h1m8 0h1M33 121h1m15 0h1m21 0h1m4 0h1m61 0h1m22 0h1m53 0h1m45 0h1m26 0h1m59 0h1m4 0h1m56 0h1m21 0h1m9 0h1m15 0h1m7 0h1m12 0h1m56 0h1m57 0h1M72 122h1m107 0h1m68 0h1m6 0h1m76 0h1m17 0h1m73 0h1m54 0h1m44 0h1m30 0h1m32 0h1M81 123h1m34 0h1m29 0h1m17 0h1m32 0h1m41 0h1m22 0h1m21 0h1m70 0h1m70 0h1m115 0h1m5 0h1m1 0h1M47 124h1m64 0h1m34 0h1m66 0h1m16 0h1m24 0h1m103 0h1m6 0h1m114 0h1m19 0h1m24 0h1m21 0h1m8 0h1m27 0h1M16 125h1m43 0h1m24 0h1m27 0h1m20 0h1m3 0h1m19 0h1m7 0h1m2 0h1m5 0h1m57 0h1m4 0h1m53 0h1m74 0h1m70 0h2m83 0h1m38 0h1m1 0h1m3 0h1m8 0h1m5 0h1M20 126h1m2 0h1m20 0h1m8 0h1m28 0h1m17 0h1m5 0h1m25 0h1m76 0h1m49 0h1m88 0h2m27 0h2m1 0h1m18 0h1m44 0h1m28 0h1m4 0h1m15 0h1m7 0h1M6 127h1m29 0h1m32 0h1m8 0h1m14 0h1m49 0h1m27 0h1m28 0h1m4 0h1m5 0h1m24 0h1m26 0h1m74 0h1m139 0h1m1 0h1m54 0h1m9 0h1m15 0h1m21 0h1M2 128h1m20 0h2m76 0h1m68 0h1m9 0h1m10 0h1m8 0h1m10 0h1m4 0h1m16 0h1m11 0h1m6 0h2m12 0h1m39 0h1m4 0h1m81 0h1m78 0h1m18 0h1m11 0h1M9 129h1m15 0h1m25 0h1m24 0h1m33 0h1m2 0h1m3 0h1m11 0h1m26 0h1m13 0h1m43 0h1m24 0h1m12 0h1m62 0h1m2 0h1m18 0h1m16 0h1m68 0h1m46 0h1m101 0h1m9 0h1M13 130h1m39 0h1m30 0h1m32 0h1m12 0h1m1 0h1m43 0h1m8 0h1m16 0h1m72 0h1m13 0h1m1 0h1m4 0h1m47 0h1m14 0h1m15 0h1m5 0h1m135 0h1m80 0h1M21 131h1m52 0h1m17 0h1m15 0h1m14 0h1m30 0h1m18 0h1m182 0h2m4 0h1m5 0h1m3 0h1m62 0h1m15 0h1m51 0h1m57 0h2M27 132h2m105 0h1m69 0h1m57 0h1m328 0h1M34 133h1m8 0h1m2 0h1m53 0h1m19 0h1m178 0h1m9 0h1m72 0h1m41 0h1m9 0h1m10 0h1m15 0h1m22 0h1M118 134h1m12 0h1m75 0h1m4 0h1m16 0h2m11 0h1m133 0h2m54 0h1m37 0h1m45 0h1m15 0h1m5 0h1m13 0h1M124 135h1m19 0h1m31 0h1m6 0h1m40 0h1m25 0h1m17 0h1m3 0h1m14 0h1m72 0h1m10 0h1m22 0h1m15 0h1m3 0h1m50 0h1m39 0h1M9 136h1m28 0h1m141 0h1m125 0h1m57 0h1m131 0h1m18 0h1m30 0h1M37 137h1m9 0h1m8 0h1m3 0h1m18 0h1m204 0h1m27 0h1m159 0h1m56 0h2M26 138h1m10 0h1m74 0h1m25 0h1m212 0h1m12 0h1m14 0h1m39 0h1m71 0h1m17 0h1m4 0h1m35 0h1m16 0h1M61 139h1m28 0h1m4 0h1m44 0h1m30 0h1m18 0h1m159 0h1m47 0h1m37 0h1m78 0h1m22 0h1M61 140h1m25 0h1m30 0h1m9 0h1m8 0h1m38 0h1m64 0h1m39 0h1m60 0h1m16 0h1m28 0h1m100 0h1m35 0h1m23 0h1M45 141h1m113 0h1m37 0h1m66 0h1m54 0h1m82 0h1m152 0h1m18 0h1m12 0h1M47 142h1m37 0h1m87 0h1m198 0h1m10 0h1m102 0h1m43 0h1m26 0h1M2 143h1m129 0h1m70 0h1m26 0h1m62 0h1m126 0h1m1 0h1m2 0h1m113 0h1M21 144h1m244 0h1m69 0h1m79 0h1m6 0h1m21 0h1m14 0h1m19 0h1m5 0h1m51 0h1m56 0h1M48 145h1m52 0h1m13 0h1m83 0h1m14 0h1m58 0h1m51 0h1m2 0h1m9 0h1m3 0h1m116 0h1m19 0h1m11 0h1m67 0h1m28 0h1M209 146h1m29 0h1m12 0h1m47 0h1m15 0h1m28 0h1m29 0h1m2 0h1m83 0h1m95 0h1M24 147h1m4 0h1m106 0h1m72 0h1m110 0h1m2 0h1m14 0h1m70 0h1m45 0h1m104 0h1M47 148h1m13 0h1m3 0h1m38 0h1m23 0h1m41 0h1m36 0h1m56 0h1m70 0h2m15 0h1m30 0h1m30 0h1m74 0h1m47 0h1M58 149h1m8 0h1m44 0h1m8 0h1m66 0h1m36 0h1m20 0h1m40 0h1m28 0h1m160 0h1m37 0h1m69 0h1m7 0h1M7 150h1m31 0h1m26 0h1m84 0h1m17 0h1m27 0h1m39 0h1m13 0h1m22 0h1m67 0h1m6 0h1m92 0h1m100 0h1M60 151h1m41 0h1m8 0h1m51 0h1m80 0h1m7 0h1m19 0h1m24 0h1m6 0h1m14 0h1m2 0h1m19 0h1m5 0h1m17 0h1m23 0h1m3 0h1m90 0h1m26 0h1m38 0h1M166 152h1m31 0h1m55 0h1m39 0h1m31 0h1m92 0h1m55 0h1m23 0h1m80 0h1m7 0h1M103 153h1m62 0h1m13 0h1m58 0h1m145 0h1m27 0h1m66 0h1m73 0h1M30 154h1m65 0h1m41 0h1m81 0h1m3 0h1m50 0h1m104 0h1m74 0h1m59 0h1m41 0h1M44 155h1m88 0h1m33 0h1m41 0h1m26 0h1m29 0h1m48 0h1m172 0h1m13 0h1M40 156h1m13 0h2m127 0h1m69 0h1m296 0h1m2 0h1M20 157h1m97 0h1m178 0h1m209 0h1m66 0h1M24 158h1m44 0h1m141 0h1m13 0h1m18 0h1m45 0h1m29 0h2m78 0h1m1 0h1m10 0h1m73 0h1m38 0h1m59 0h1m3 0h1M108 159h1m13 0h1m145 0h1m45 0h1m69 0h1m4 0h1m25 0h1m47 0h1m99 0h1m22 0h1M80 160h1m1 0h1m26 0h1m55 0h1m29 0h1m167 0h1m25 0h1M49 161h1m33 0h1m12 0h1m97 0h1m57 0h1m45 0h1m19 0h1m145 0h1m130 0h1M158 162h1m32 0h1m4 0h1m78 0h1m23 0h1m24 0h1m31 0h1m237 0h1M111 163h1m212 0h1m130 0h1m81 0h1M34 164h1m98 0h1m10 0h1m48 0h1m44 0h2m78 0h1m2 0h1M23 165h1m31 0h1m133 0h1m244 0h1m66 0h1m25 0h1m62 0h1M34 166h1m291 0h1m220 0h2M216 167h1m61 0h1m13 0h1m47 0h1m82 0h1M124 168h1m173 0h1m97 0h1m122 0h1M4 169h1m56 0h1m91 0h1m325 0h1m3 0h1m48 0h1M127 170h1m275 0h1m15 0h1m8 0h1M3 171h1m12 0h1m6 0h1m127 0h1m118 0h1m171 0h1m14 0h1m52 0h1M131 172h1m321 0h1m93 0h1M10 173h1m82 0h1m439 0h1m12 0h1M62 174h1m127 0h1m59 0h1m59 0h1m49 0h1m43 0h1m148 0h1M261 175h1m110 0h1m122 0h1m32 0h1m49 0h1M75 176h1m345 0h1m167 0h1M55 177h1m301 0h1m2 0h1m82 0h1m30 0h1M71 178h1m125 0h1m88 0h1m104 0h1m61 0h1m43 0h1m20 0h1M25 179h1m85 0h1m4 0h1m66 0h1m177 0h1M258 180h1m75 0h1m135 0h1M178 181h1m112 0h1m62 0h1m148 0h1M116 182h1m348 0h1M146 183h1m80 0h1m140 0h1M238 184h1M172 185h1m108 0h1M19 186h1m148 0h1m201 0h1m24 0h1m90 0h1m34 0h1M274 187h1m33 0h1M88 188h1m91 0h1m6 0h1m264 0h1m82 0h1m45 0h1M2 189h1m346 0h1m38 0h1M301 190h1m17 0h1m121 0h1m133 0h1M31 191h1m138 0h1M82 192h1m97 0h1m234 0h1m7 0h1m126 0h1M300 193h1m247 0h1M10 194h1m56 0h1m26 0h1m171 0h1m16 0h1m128 0h1m97 0h1M36 195h1m426 0h1M95 196h1m315 0h1m42 0h1m75 0h1m67 0h1M264 197h1m22 0h1m208 0h1M20 198h2m13 0h1M306 201h1m165 0h1M20 202h1M479 203h1m2 0h1m107 0h1M169 204h1m366 0h1M12 205h1m15 0h1m171 0h1m231 0h1M102 206h1m355 0h1m64 0h1M263 207h1m292 0h1M47 208h1M217 209h1m108 0h1M359 210h1M313 211h1M196 212h1M243 214h1m177 0h1m77 0h1M3 215h1m313 0h1M79 217h1m174 0h1M270 218h1m221 0h1M178 220h1M387 225h1M147 229h1M162 230h1M170 233h1m102 0h1M568 236h1M260 237h1M353 238h1M245 243h1M449 248h1"/><path stroke="#000072" d="M32 0h1m52 0h1m8 0h1m28 0h1m2 0h1m65 0h1m11 0h1m11 0h1m25 0h1m4 0h1m12 0h1m4 0h1m10 0h1m31 0h2m1 0h1m63 0h1m15 0h1m29 0h2m25 0h1m4 0h2m38 0h1m21 0h1m28 0h1m1 0h1M8 1h1m10 0h1m15 0h1m46 0h1m3 0h1m4 0h1m2 0h1m30 0h1m2 0h1m2 0h1m1 0h2m2 0h1m54 0h2m12 0h1m4 0h2m46 0h1m58 0h1m12 0h1m36 0h1m1 0h2m6 0h1m61 0h2m8 0h1m29 0h1m65 0h1m4 0h1m1 0h2M18 2h1m2 0h2m3 0h1m51 0h1m16 0h1m28 0h1m62 0h1m13 0h1m54 0h1m1 0h1m10 0h1m1 0h1m100 0h1m11 0h1m10 0h1m26 0h1m14 0h2m1 0h1m4 0h1m6 0h1m55 0h1m57 0h1M0 3h1m11 0h1m49 0h1m10 0h1m11 0h1m1 0h1m1 0h2m2 0h1m2 0h1m30 0h3m1 0h1m19 0h1m41 0h1m49 0h1m10 0h1m6 0h2m57 0h2m1 0h1m9 0h1m37 0h1m4 0h1m45 0h1m8 0h1m1 0h1m7 0h1m4 0h1m44 0h1m22 0h1m25 0h1m2 0h1m25 0h1m5 0h1M22 4h1m4 0h1m34 0h1m33 0h1m27 0h1m12 0h1m3 0h1m9 0h1m41 0h1m19 0h1m51 0h1m49 0h1m6 0h1m3 0h1m7 0h2m48 0h1m46 0h1m10 0h2m50 0h1m20 0h1m27 0h1m4 0h1m24 0h1M7 5h1m16 0h1m5 0h1m36 0h1m1 0h1m11 0h1m9 0h1m35 0h1m18 0h1m35 0h2m56 0h1m7 0h2m7 0h1m1 0h1m9 0h1m36 0h2m16 0h2m40 0h1m28 0h1m27 0h1m4 0h1m10 0h1m3 0h1m1 0h1m4 0h1m56 0h1m33 0h1m17 0h1m8 0h1M60 6h1m5 0h1m3 0h1m13 0h1m5 0h1m51 0h1m12 0h1m30 0h1m2 0h1m4 0h1m1 0h1m46 0h1m17 0h1m44 0h1m58 0h1m14 0h1m11 0h1m86 0h1m1 0h1m5 0h1m7 0h1m4 0h1m40 0h1m21 0h1m8 0h1M5 7h2m7 0h1m12 0h1m1 0h2m3 0h1m27 0h1m25 0h1m5 0h1m89 0h1m20 0h1m3 0h1m37 0h2m16 0h1m6 0h1m39 0h1m1 0h1m1 0h1m48 0h1m16 0h1m1 0h1m36 0h1m9 0h1m4 0h1m2 0h1m10 0h1m4 0h1m32 0h1m21 0h2m3 0h1m24 0h1m4 0h1m5 0h1M24 8h1m49 0h1m45 0h1m7 0h1m60 0h1m2 0h1m2 0h1m44 0h1m2 0h1m5 0h1m1 0h1m2 0h1m13 0h1m60 0h1m3 0h1m1 0h1m27 0h2m5 0h1m3 0h1m2 0h1m3 0h1m37 0h1m4 0h1m11 0h1m4 0h1m6 0h1m40 0h1m6 0h1m10 0h1m4 0h1m2 0h1m31 0h1m1 0h1m2 0h1m4 0h1m8 0h1m3 0h1M8 9h1m7 0h1m15 0h1m37 0h1m11 0h1m2 0h1m5 0h1m4 0h1m29 0h1m57 0h1m5 0h1m19 0h1m31 0h1m4 0h1m6 0h1m3 0h1m8 0h1m7 0h1m28 0h1m22 0h1m39 0h1m1 0h1m64 0h1m47 0h1m62 0h1m16 0h1m6 0h2M25 10h1m53 0h1m7 0h1m41 0h1m4 0h1m5 0h1m4 0h1m36 0h1m7 0h1m61 0h1m10 0h1m51 0h1m2 0h1m4 0h1m61 0h2m1 0h1m41 0h1m16 0h1m37 0h1m10 0h1m14 0h1m49 0h1m1 0h1m8 0h1M1 11h1m6 0h2m1 0h1m14 0h1m68 0h1m25 0h1m30 0h1m28 0h1m28 0h1m3 0h1m41 0h2m4 0h1m5 0h1m34 0h1m2 0h1m1 0h1m60 0h1m2 0h1m9 0h1m5 0h1m39 0h1m6 0h1m5 0h2m9 0h1m104 0h1M0 12h1m31 0h1m7 0h1m7 0h1m32 0h1m12 0h1m10 0h1m55 0h1m8 0h1m17 0h1m14 0h1m4 0h2m11 0h1m28 0h1m4 0h1m3 0h1m2 0h1m11 0h1m4 0h1m20 0h2m9 0h1m31 0h1m30 0h1m1 0h1m7 0h1m5 0h2m27 0h1m17 0h1m8 0h1m19 0h1m29 0h1m5 0h1m2 0h1m19 0h1m11 0h1m39 0h1M11 13h1m24 0h1m8 0h1m9 0h1m1 0h1m27 0h2m19 0h2m2 0h1m7 0h1m5 0h1m5 0h1m17 0h1m9 0h1m12 0h1m2 0h1m7 0h1m3 0h1m6 0h1m13 0h2m54 0h1m21 0h1m3 0h1m7 0h1m6 0h1m31 0h1m16 0h2m15 0h2m1 0h1m7 0h1m5 0h1m4 0h1m42 0h1m8 0h1m11 0h1m2 0h3m1 0h1m10 0h1m7 0h1m9 0h1m31 0h1m1 0h1m26 0h1m2 0h1m3 0h1m37 0h1M28 14h1m3 0h1m8 0h1m3 0h1m13 0h1m5 0h2m2 0h1m40 0h1m8 0h1m11 0h1m11 0h1m2 0h1m5 0h2m18 0h1m1 0h1m12 0h1m12 0h1m4 0h1m9 0h1m6 0h1m15 0h1m9 0h1m2 0h1m2 0h1m3 0h1m11 0h1m50 0h1m27 0h1m4 0h1m13 0h1m26 0h1m3 0h1m15 0h1m1 0h1m11 0h1m16 0h1m5 0h1m2 0h1m9 0h1m3 0h1m4 0h1m5 0h1m5 0h1m21 0h1m1 0h1m1 0h1m30 0h1m6 0h1m4 0h1m18 0h1m12 0h1M3 15h1m15 0h1m23 0h1m1 0h1m1 0h1m6 0h1m1 0h1m7 0h1m19 0h1m5 0h1m2 0h1m37 0h1m17 0h1m14 0h1m10 0h1m18 0h1m15 0h1m26 0h1m27 0h1m4 0h1m38 0h2m5 0h1m19 0h1m30 0h1m6 0h1m11 0h1m89 0h1m9 0h1m2 0h1m37 0h1m22 0h1m9 0h1m10 0h1m4 0h1m12 0h1m1 0h1m5 0h1M2 16h1m2 0h1m27 0h1m21 0h1m19 0h1m2 0h1m12 0h1m9 0h1m2 0h1m27 0h1m2 0h1m10 0h1m10 0h1m10 0h1m10 0h1m23 0h1m2 0h2m2 0h1m3 0h1m8 0h1m8 0h1m24 0h1m20 0h1m11 0h1m40 0h1m19 0h1m5 0h1m26 0h1m9 0h1m23 0h1m9 0h1m5 0h1m37 0h1m12 0h1m11 0h1m17 0h1m23 0h1m7 0h1m3 0h1m3 0h2m5 0h1m24 0h1m2 0h1M8 17h1m15 0h1m9 0h1m14 0h1m4 0h1m25 0h1m5 0h1m3 0h1m33 0h1m19 0h2m1 0h1m33 0h2m6 0h2m11 0h1m10 0h1m52 0h1m7 0h1m9 0h1m1 0h1m5 0h1m11 0h1m27 0h2m11 0h1m22 0h1m16 0h1m66 0h1m13 0h1m14 0h1m13 0h1m13 0h2m29 0h1m15 0h1m11 0h1m10 0h1M0 18h1m14 0h1m10 0h1m9 0h1m28 0h1m14 0h1m25 0h2m1 0h1m4 0h1m4 0h1m17 0h1m29 0h1m32 0h1m13 0h1m54 0h1m4 0h1m2 0h1m16 0h1m1 0h1m5 0h1m11 0h1m1 0h1m11 0h1m17 0h1m3 0h1m8 0h1m9 0h2m1 0h1m5 0h1m23 0h1m4 0h1m14 0h1m15 0h1m3 0h1m7 0h1m30 0h1m12 0h1m37 0h2m3 0h1m4 0h1m14 0h1m2 0h1m12 0h1m10 0h1m12 0h1M26 19h1m22 0h1m16 0h1m9 0h1m16 0h1m17 0h1m2 0h2m8 0h1m17 0h1m10 0h2m8 0h1m2 0h1m5 0h1m10 0h1m18 0h1m15 0h1m8 0h1m9 0h1m9 0h1m4 0h1m7 0h1m12 0h1m1 0h1m22 0h1m20 0h1m11 0h1m3 0h1m3 0h1m36 0h1m5 0h1m1 0h1m23 0h1m8 0h1m18 0h2m6 0h1m2 0h1m2 0h1m17 0h2m18 0h1m8 0h1m5 0h1m2 0h1m6 0h1m1 0h1m3 0h1m45 0h1m5 0h1M4 20h1m8 0h1m2 0h1m4 0h1m4 0h1m7 0h2m7 0h1m4 0h1m1 0h1m9 0h1m2 0h1m8 0h1m5 0h1m36 0h1m1 0h1m11 0h1m3 0h1m4 0h2m2 0h1m8 0h1m40 0h1m16 0h1m2 0h1m4 0h1m39 0h1m31 0h1m35 0h2m8 0h1m6 0h1m2 0h1m4 0h1m15 0h2m9 0h1m4 0h1m10 0h1m12 0h1m6 0h2m2 0h1m19 0h1m2 0h1m9 0h1m31 0h1m5 0h1m29 0h1m2 0h1m8 0h1m8 0h1m20 0h1m6 0h1m17 0h1M7 21h1m17 0h1m6 0h1m2 0h1m19 0h1m26 0h1m2 0h1m23 0h1m18 0h1m1 0h1m1 0h1m7 0h1m4 0h1m17 0h1m4 0h1m18 0h1m8 0h1m36 0h1m7 0h1m8 0h2m4 0h1m8 0h1m3 0h1m3 0h1m4 0h1m28 0h1m12 0h1m14 0h1m10 0h1m1 0h1m22 0h1m18 0h1m10 0h1m12 0h1m29 0h1m1 0h1m8 0h1m7 0h1m12 0h1m40 0h1m32 0h1m12 0h1m4 0h1m12 0h1m2 0h1M0 22h1m8 0h2m4 0h1m31 0h1m35 0h1m1 0h1m16 0h1m2 0h1m9 0h1m14 0h1m19 0h1m10 0h2m61 0h1m1 0h1m9 0h1m10 0h1m6 0h1m21 0h1m1 0h1m15 0h1m28 0h1m1 0h1m2 0h1m3 0h1m12 0h1m14 0h1m5 0h1m2 0h1m1 0h2m1 0h1m2 0h1m7 0h1m3 0h1m3 0h1m7 0h1m36 0h1m27 0h1m32 0h1m1 0h1m1 0h2m7 0h1m1 0h1m3 0h1m1 0h1m2 0h2m10 0h1m5 0h1m17 0h1m20 0h1m8 0h1M25 23h1m3 0h2m23 0h1m22 0h1m28 0h1m16 0h1m40 0h1m39 0h1m3 0h1m37 0h1m34 0h1m2 0h1m23 0h1m8 0h2m9 0h1m35 0h1m29 0h1m25 0h1m29 0h1m1 0h1m3 0h1m22 0h1m30 0h1m22 0h1m12 0h1m5 0h1m4 0h1m10 0h1m12 0h1m5 0h1M7 24h1m46 0h1m7 0h1m6 0h1m10 0h2m8 0h1m3 0h1m15 0h1m2 0h1m4 0h1m23 0h1m9 0h1m2 0h1m35 0h1m7 0h1m35 0h1m3 0h2m13 0h2m6 0h1m25 0h1m28 0h1m19 0h1m36 0h1m12 0h1m20 0h1m28 0h1m5 0h1m19 0h1m5 0h1m3 0h1m72 0h1m8 0h1m3 0h1m31 0h1M18 25h1m16 0h1m7 0h1m16 0h1m24 0h1m29 0h1m1 0h1m14 0h1m3 0h1m15 0h1m3 0h1m4 0h2m15 0h1m6 0h1m29 0h1m58 0h1m4 0h2m8 0h1m11 0h1m4 0h1m5 0h1m7 0h1m7 0h1m21 0h1m3 0h1m2 0h1m10 0h1m12 0h1m2 0h1m17 0h2m5 0h1m4 0h1m10 0h1m8 0h1m43 0h1m4 0h1m10 0h1m13 0h1m15 0h1m13 0h2m3 0h1m1 0h1M3 26h1m3 0h1m5 0h2m7 0h1m4 0h1m6 0h1m1 0h1m8 0h1m4 0h1m17 0h2m5 0h1m6 0h1m18 0h1m14 0h1m14 0h1m15 0h1m27 0h1m7 0h1m15 0h1m2 0h1m32 0h1m2 0h1m44 0h1m2 0h1m21 0h1m6 0h1m11 0h1m26 0h1m38 0h1m12 0h1m2 0h1m19 0h1m16 0h1m18 0h1m24 0h1m1 0h1m1 0h1m17 0h1m2 0h1m12 0h1m30 0h1m37 0h1M16 27h1m9 0h1m13 0h1m29 0h1m11 0h1m1 0h1m7 0h1m10 0h1m5 0h1m9 0h1m3 0h1m3 0h1m18 0h1m2 0h1m13 0h1m15 0h1m34 0h1m6 0h1m32 0h1m16 0h1m2 0h1m11 0h1m12 0h1m41 0h1m8 0h1m4 0h1m2 0h1m2 0h1m15 0h1m10 0h1m14 0h1m28 0h1m25 0h3m20 0h1m5 0h1m11 0h1m23 0h1m5 0h1m59 0h1M1 28h1m5 0h1m2 0h1m4 0h1m16 0h1m35 0h1m1 0h1m3 0h1m15 0h1m25 0h1m11 0h2m3 0h1m5 0h1m5 0h2m1 0h1m52 0h1m8 0h1m3 0h1m8 0h1m15 0h1m9 0h1m15 0h1m31 0h1m47 0h1m8 0h1m14 0h1m11 0h1m12 0h1m47 0h1m7 0h1m7 0h1m8 0h2m1 0h1m3 0h2m29 0h1m42 0h1m2 0h1m6 0h1m1 0h1m16 0h1M33 29h1m28 0h1m15 0h2m2 0h1m7 0h1m19 0h1m16 0h1m10 0h1m23 0h1m11 0h1m43 0h1m8 0h1m2 0h1m1 0h2m12 0h1m1 0h2m39 0h1m12 0h1m50 0h1m6 0h1m8 0h1m10 0h1m13 0h1m2 0h1m24 0h1m12 0h1m60 0h1m4 0h1m1 0h1m8 0h1m71 0h1m12 0h2M24 30h1m32 0h1m7 0h1m18 0h1m14 0h1m19 0h1m23 0h1m4 0h1m46 0h1m8 0h1m19 0h1m1 0h1m12 0h1m18 0h1m22 0h1m6 0h1m9 0h1m9 0h1m1 0h1m12 0h1m20 0h1m4 0h1m9 0h1m2 0h1m1 0h1m5 0h1m4 0h1m2 0h1m5 0h1m2 0h1m6 0h1m37 0h1m18 0h1m14 0h1m30 0h1m19 0h1m15 0h1m23 0h1m6 0h1m1 0h1m11 0h1M20 31h1m4 0h1m3 0h2m1 0h2m17 0h1m1 0h1m35 0h1m7 0h1m19 0h1m4 0h1m25 0h2m5 0h1m23 0h1m9 0h1m7 0h1m16 0h1m15 0h1m20 0h1m17 0h1m29 0h1m15 0h1m21 0h1m4 0h1m6 0h1m2 0h1m35 0h1m13 0h1m38 0h1m40 0h1m33 0h1m6 0h1m5 0h1m20 0h1M5 32h1m3 0h1m1 0h1m2 0h1m13 0h1m9 0h1m17 0h1m29 0h1m1 0h1m13 0h1m18 0h1m3 0h1m16 0h1m17 0h1m6 0h1m17 0h1m63 0h1m28 0h1m12 0h1m4 0h1m13 0h1m13 0h2m17 0h1m8 0h1m1 0h1m21 0h1m4 0h1m4 0h2m27 0h1m3 0h1m9 0h1m35 0h1m9 0h2m2 0h1m16 0h2m7 0h1m1 0h1m9 0h1m14 0h1m12 0h1m28 0h2m4 0h1m3 0h1M0 33h1m2 0h1m3 0h2m7 0h1m29 0h1m31 0h1m21 0h1m12 0h1m17 0h1m8 0h1m1 0h1m8 0h1m14 0h1m3 0h2m17 0h2m22 0h1m10 0h1m11 0h1m8 0h1m10 0h1m49 0h1m4 0h1m21 0h1m1 0h1m6 0h1m2 0h1m8 0h1m7 0h1m6 0h1m3 0h1m19 0h2m68 0h1m15 0h1m25 0h1m4 0h1m7 0h1m9 0h1m10 0h1m19 0h1m16 0h1m17 0h1M45 34h1m6 0h1m4 0h1m6 0h1m21 0h1m11 0h1m4 0h1m31 0h1m11 0h1m9 0h1m50 0h1m33 0h1m5 0h1m17 0h1m3 0h1m1 0h1m12 0h1m19 0h1m7 0h1m5 0h1m6 0h1m34 0h1m3 0h1m11 0h1m3 0h1m12 0h1m3 0h1m2 0h1m3 0h1m14 0h1m8 0h1m16 0h2m14 0h1m1 0h2m17 0h1m15 0h1m25 0h2m22 0h1m1 0h1m30 0h1M25 35h1m31 0h1m9 0h1m22 0h1m12 0h1m2 0h1m5 0h1m9 0h1m12 0h1m11 0h1m5 0h1m2 0h1m37 0h1m21 0h1m12 0h1m17 0h1m7 0h1m10 0h1m27 0h1m2 0h1m37 0h1m4 0h1m33 0h1m9 0h2m34 0h1m3 0h1m3 0h1m2 0h1m8 0h1m18 0h1m35 0h1m12 0h1m1 0h1m7 0h1m54 0h2m1 0h2m10 0h1m2 0h1m3 0h1m1 0h1M55 36h1m9 0h1m14 0h1m11 0h1m21 0h1m5 0h1m19 0h1m20 0h1m11 0h1m4 0h1m10 0h1m6 0h1m10 0h1m4 0h1m29 0h1m2 0h1m14 0h1m5 0h1m16 0h1m33 0h1m11 0h1m27 0h1m29 0h1m8 0h1m6 0h1m17 0h1m1 0h1m1 0h2m12 0h1m9 0h1m32 0h1m65 0h1m2 0h1m39 0h1M15 37h1m13 0h1m1 0h1m2 0h1m4 0h1m1 0h1m20 0h1m13 0h1m5 0h1m25 0h4m1 0h1m1 0h1m5 0h1m67 0h1m12 0h1m4 0h2m47 0h1m2 0h1m13 0h1m31 0h1m17 0h1m12 0h1m29 0h1m3 0h1m9 0h1m23 0h1m12 0h1m11 0h1m2 0h1m25 0h1m1 0h1m27 0h1m12 0h1m33 0h1m1 0h1m27 0h1m8 0h1m1 0h1m12 0h1M9 38h1m8 0h1m11 0h1m9 0h1m2 0h1m14 0h1m38 0h1m16 0h1m7 0h1m6 0h1m4 0h1m4 0h2m8 0h1m5 0h3m17 0h1m2 0h1m22 0h2m39 0h1m11 0h1m2 0h1m12 0h2m45 0h1m46 0h1m11 0h1m85 0h2m18 0h1m5 0h1m24 0h1m3 0h1m9 0h1m4 0h1m17 0h1m14 0h1m6 0h2m13 0h1M21 39h1m19 0h1m15 0h1m6 0h1m9 0h1m16 0h1m5 0h1m33 0h1m2 0h2m20 0h1m23 0h1m8 0h1m15 0h1m19 0h1m5 0h1m14 0h1m13 0h1m4 0h1m51 0h2m1 0h1m24 0h1m31 0h1m9 0h1m15 0h1m5 0h1m3 0h1m7 0h1m18 0h1m3 0h1m41 0h1m25 0h1m8 0h1m15 0h1m38 0h1m10 0h1m6 0h1M9 40h1m15 0h1m18 0h1m6 0h1m5 0h1m1 0h1m6 0h1m9 0h1m23 0h1m1 0h1m5 0h1m17 0h1m51 0h1m15 0h1m6 0h1m42 0h1m37 0h1m13 0h1m1 0h1m33 0h1m12 0h2m16 0h1m12 0h1m12 0h1m13 0h1m9 0h1m22 0h1m9 0h2m26 0h1m18 0h1m53 0h1m7 0h1m4 0h1m5 0h1m24 0h1M2 41h1m6 0h1m17 0h1m22 0h2m11 0h1m29 0h1m12 0h1m8 0h1m3 0h1m14 0h1m27 0h1m3 0h1m8 0h1m19 0h1m28 0h1m16 0h1m3 0h1m6 0h1m11 0h1m15 0h1m28 0h1m7 0h1m8 0h1m4 0h1m27 0h1m1 0h1m5 0h1m2 0h1m13 0h1m1 0h1m3 0h1m21 0h1m16 0h1m4 0h1m56 0h1m12 0h1m16 0h1m10 0h1m6 0h1m3 0h1m11 0h1m10 0h1M32 42h1m5 0h1m58 0h1m15 0h1m51 0h1m4 0h1m7 0h1m5 0h1m16 0h1m2 0h1m20 0h1m8 0h1m31 0h1m3 0h1m8 0h1m3 0h1m15 0h1m4 0h1m10 0h1m4 0h1m35 0h1m9 0h1m5 0h1m3 0h1m40 0h1m19 0h1m20 0h1m39 0h1m13 0h1m9 0h1m22 0h1m44 0h1M1 43h1m4 0h1m51 0h1m9 0h1m19 0h1m11 0h1m40 0h1m9 0h1m8 0h1m54 0h1m16 0h1m9 0h1m35 0h1m1 0h1m3 0h1m75 0h1m12 0h1m11 0h1m15 0h1m22 0h1m2 0h2m39 0h1m2 0h1m5 0h1m1 0h1m35 0h1m12 0h1m7 0h1m7 0h1m15 0h1m5 0h1m23 0h1m1 0h1M19 44h1m35 0h1m46 0h1m24 0h1m1 0h1m38 0h1m14 0h1m6 0h1m14 0h1m1 0h1m7 0h1m2 0h1m28 0h1m2 0h1m20 0h1m23 0h1m1 0h1m7 0h1m6 0h1m19 0h1m11 0h2m19 0h1m23 0h1m2 0h1m30 0h1m8 0h1m7 0h1m35 0h1m1 0h1m13 0h1m28 0h1m3 0h1m21 0h1m12 0h1m10 0h1m14 0h1m5 0h1M30 45h1m12 0h1m28 0h1m24 0h1m27 0h1m7 0h1m11 0h1m30 0h1m9 0h1m34 0h1m3 0h1m12 0h1m9 0h1m2 0h1m30 0h1m40 0h1m18 0h1m9 0h1m11 0h1m31 0h1m43 0h1m30 0h1m12 0h1m2 0h1m5 0h1m12 0h1m9 0h1m1 0h1m9 0h1m7 0h1m4 0h1m50 0h1m2 0h2M3 46h1m1 0h1m8 0h1m26 0h1m10 0h1m1 0h1m4 0h1m1 0h1m45 0h1m7 0h1m11 0h1m19 0h1m16 0h1m10 0h1m16 0h1m13 0h1m7 0h1m3 0h2m3 0h1m37 0h1m49 0h1m10 0h1m20 0h1m11 0h1m17 0h1m3 0h1m6 0h1m2 0h1m7 0h1m4 0h1m4 0h2m9 0h1m27 0h2m10 0h1m7 0h1m4 0h2m6 0h1m31 0h1m2 0h1m22 0h1m24 0h3m26 0h2M15 47h1m5 0h2m11 0h1m5 0h1m2 0h1m16 0h1m13 0h1m12 0h1m6 0h1m4 0h1m9 0h1m38 0h1m8 0h1m4 0h1m29 0h1m111 0h1m12 0h1m3 0h1m17 0h1m1 0h1m5 0h1m35 0h1m13 0h1m68 0h1m1 0h1m86 0h1M5 48h1m9 0h1m21 0h1m11 0h1m42 0h1m15 0h1m8 0h1m14 0h1m2 0h1m18 0h1m1 0h2m5 0h1m4 0h1m15 0h1m4 0h2m11 0h1m5 0h1m12 0h1m3 0h3m77 0h1m3 0h1m20 0h1m9 0h1m15 0h1m4 0h1m11 0h1m3 0h1m36 0h1m92 0h1m6 0h1m10 0h1m26 0h1m4 0h1m9 0h1m16 0h1m2 0h2m2 0h1m4 0h1M3 49h1m28 0h1m3 0h1m32 0h1m8 0h1m3 0h1m6 0h1m12 0h1m1 0h1m33 0h1m8 0h1m36 0h1m15 0h1m26 0h1m8 0h1m22 0h2m15 0h1m62 0h1m27 0h1m3 0h1m14 0h1m13 0h1m2 0h1m16 0h1m16 0h1m17 0h1m23 0h1m9 0h1m8 0h1m60 0h1m9 0h1m27 0h1M22 50h1m1 0h1m1 0h1m8 0h1m13 0h1m3 0h2m19 0h1m19 0h1m1 0h1m32 0h2m5 0h1m25 0h1m19 0h1m18 0h1m4 0h2m6 0h2m19 0h2m7 0h1m50 0h1m6 0h1m13 0h1m28 0h1m3 0h1m8 0h1m22 0h1m25 0h2m33 0h1m25 0h1m4 0h1m1 0h1m24 0h1m7 0h1m3 0h1m7 0h1m9 0h1m22 0h1m2 0h1M7 51h1m36 0h1m50 0h1m8 0h1m5 0h1m20 0h2m4 0h1m7 0h1m55 0h1m9 0h1m8 0h1m6 0h1m51 0h1m17 0h2m48 0h2m1 0h1m13 0h1m25 0h1m20 0h1m15 0h1m3 0h1m4 0h1m26 0h1m2 0h2m19 0h1m66 0h1m4 0h1m11 0h1m2 0h1m7 0h1m3 0h1m5 0h1M5 52h1m1 0h1m3 0h1m4 0h1m7 0h1m33 0h1m9 0h1m35 0h1m20 0h1m5 0h1m3 0h1m18 0h1m12 0h1m43 0h1m37 0h1m13 0h1m3 0h1m17 0h1m27 0h1m42 0h1m30 0h1m2 0h2m11 0h1m27 0h1m5 0h1m12 0h1m1 0h2m29 0h2m17 0h1m7 0h1m23 0h1m7 0h1m2 0h1m2 0h1m8 0h1m20 0h1m2 0h1m2 0h1M23 53h1m39 0h1m28 0h1m4 0h1m10 0h1m8 0h1m40 0h1m2 0h1m6 0h1m57 0h2m53 0h1m4 0h1m1 0h1m10 0h1m21 0h1m13 0h1m12 0h1m24 0h1m12 0h1m43 0h1m28 0h1m21 0h1m1 0h1m36 0h2m24 0h1m3 0h1m19 0h1M8 54h1m15 0h1m28 0h1m25 0h1m5 0h1m10 0h1m1 0h1m7 0h1m25 0h1m10 0h1m3 0h1m32 0h1m5 0h1m13 0h1m38 0h1m2 0h1m20 0h1m5 0h1m5 0h1m62 0h1m14 0h1m10 0h1m43 0h1m8 0h1m5 0h1m1 0h1m23 0h1m14 0h1m2 0h1m7 0h1m86 0h1m20 0h1M0 55h1m15 0h1m6 0h1m3 0h1m11 0h1m5 0h2m54 0h1m5 0h1m33 0h1m15 0h1m1 0h1m17 0h1m35 0h1m30 0h1m52 0h1m14 0h1m5 0h2m1 0h1m32 0h1m15 0h1m25 0h1m7 0h1m81 0h1m2 0h1m13 0h1m12 0h1m12 0h1m16 0h2m31 0h1m5 0h1m8 0h1M17 56h1m16 0h1m2 0h1m3 0h1m4 0h1m47 0h1m4 0h1m39 0h1m12 0h1m8 0h1m7 0h1m55 0h1m6 0h1m7 0h1m21 0h1m1 0h2m22 0h1m6 0h1m2 0h1m5 0h1m9 0h1m1 0h1m37 0h1m11 0h1m14 0h1m7 0h1m32 0h1m32 0h1m8 0h1m15 0h2m5 0h1m17 0h1m4 0h1m6 0h1m33 0h1m16 0h1m4 0h1m19 0h1m1 0h1M25 57h1m4 0h1m28 0h1m16 0h1m17 0h1m1 0h1m16 0h1m17 0h1m59 0h1m13 0h1m7 0h1m93 0h1m7 0h1m15 0h1m18 0h1m8 0h1m5 0h1m73 0h1m11 0h1m3 0h1m5 0h1m44 0h1m16 0h1m15 0h1m5 0h1m36 0h1M10 58h1m2 0h1m45 0h1m7 0h1m18 0h1m4 0h1m4 0h1m1 0h1m18 0h2m32 0h2m14 0h1m6 0h1m2 0h1m17 0h1m19 0h1m5 0h1m37 0h2m26 0h1m20 0h1m11 0h1m15 0h1m25 0h1m11 0h2m9 0h1m41 0h1m17 0h1m46 0h1m8 0h1m18 0h1m7 0h1m5 0h1m51 0h1m3 0h1m5 0h1M18 59h1m30 0h1m26 0h1m23 0h1m15 0h1m21 0h1m11 0h1m2 0h1m7 0h1m46 0h1m27 0h1m8 0h1m6 0h1m9 0h1m3 0h1m10 0h1m62 0h1m1 0h1m28 0h1m1 0h1m53 0h1m24 0h1m6 0h1m47 0h1m15 0h1m8 0h1m2 0h1m4 0h1m18 0h1m25 0h1M6 60h1m1 0h1m12 0h2m1 0h1m28 0h1m2 0h1m4 0h1m6 0h1m55 0h1m16 0h1m71 0h1m14 0h1m4 0h1m31 0h1m59 0h1m28 0h1m3 0h1m36 0h1m2 0h1m7 0h1m50 0h1m9 0h1m21 0h1m28 0h1m5 0h1m12 0h1m5 0h1m29 0h1M57 61h1m3 0h1m5 0h1m19 0h1m20 0h1m118 0h1m7 0h1m39 0h1m16 0h1m1 0h1m13 0h1m23 0h1m5 0h1m23 0h1m34 0h1m10 0h1m28 0h1m2 0h1m3 0h1m11 0h1m3 0h1m23 0h1m17 0h1m6 0h1m39 0h1m1 0h1m22 0h1m18 0h1M26 62h1m27 0h1m11 0h1m36 0h1m13 0h1m3 0h1m66 0h1m10 0h1m18 0h1m1 0h1m20 0h1m8 0h1m19 0h1m24 0h1m37 0h1m55 0h1m14 0h1m15 0h1m40 0h1m6 0h1m3 0h1m69 0h1m21 0h1m11 0h2M4 63h1m14 0h1m5 0h1m70 0h1m49 0h1m48 0h1m4 0h1m4 0h1m19 0h1m4 0h1m1 0h1m14 0h1m77 0h1m23 0h1m27 0h2m72 0h1m25 0h1m22 0h1m27 0h1m1 0h1m9 0h1m5 0h1m24 0h1m19 0h1M47 64h1m41 0h1m29 0h1m3 0h1m22 0h1m17 0h1m1 0h1m5 0h1m7 0h1m14 0h1m38 0h1m27 0h1m19 0h1m12 0h1m9 0h1m41 0h1m7 0h1m80 0h1m12 0h1m35 0h1m37 0h1m3 0h1m3 0h1m30 0h1M11 65h2m11 0h1m3 0h1m14 0h1m20 0h1m12 0h2m1 0h1m5 0h1m43 0h1m3 0h1m3 0h1m7 0h1m13 0h1m27 0h1m4 0h1m7 0h1m9 0h1m1 0h1m19 0h1m3 0h1m20 0h1m1 0h1m4 0h1m2 0h1m15 0h1m13 0h1m4 0h1m2 0h1m19 0h1m10 0h1m26 0h1m3 0h1m3 0h1m5 0h1m24 0h1m1 0h1m4 0h1m21 0h1m6 0h1m1 0h1m9 0h1m12 0h1m5 0h1m5 0h2m25 0h1m12 0h1m6 0h1m1 0h1m1 0h1m4 0h1m29 0h1m9 0h1M4 66h1m9 0h1m64 0h1m27 0h1m53 0h1m23 0h1m83 0h1m16 0h1m43 0h1m5 0h1m15 0h1m5 0h1m5 0h1m45 0h1m13 0h1m54 0h1m3 0h1m9 0h1m19 0h1m26 0h1m13 0h1m9 0h1m3 0h1m27 0h1M2 67h1m62 0h1m22 0h1m32 0h1m52 0h1m84 0h1m23 0h1m26 0h1m22 0h1m7 0h1m25 0h1m30 0h1m11 0h1m25 0h1m28 0h1m14 0h1m5 0h1m3 0h1m41 0h1m52 0h1M133 68h1m26 0h1m2 0h1m3 0h1m26 0h1m9 0h1m39 0h1m26 0h2m20 0h1m3 0h1m14 0h3m64 0h1m13 0h1m48 0h1m2 0h1m7 0h1m40 0h1m4 0h1m31 0h1m18 0h1m2 0h1m33 0h1m2 0h1m4 0h1m1 0h1M50 69h1m5 0h1m31 0h1m30 0h1m19 0h1m6 0h1m19 0h1m9 0h1m1 0h1m9 0h1m16 0h1m11 0h2m7 0h1m20 0h1m3 0h1m65 0h1m9 0h1m2 0h1m26 0h1m11 0h1m24 0h1m35 0h1m47 0h1m15 0h1m12 0h1m12 0h1m22 0h1m16 0h1m17 0h1M14 70h1m55 0h1m20 0h1m115 0h1m8 0h1m9 0h1m38 0h1m27 0h1m19 0h1m2 0h1m13 0h1m72 0h1m18 0h1m32 0h1m23 0h1m3 0h1m21 0h1m10 0h1m6 0h1m6 0h1M51 71h1m8 0h2m17 0h1m3 0h1m4 0h1m1 0h1m30 0h1m66 0h1m28 0h1m24 0h2m6 0h1m17 0h1m2 0h1m2 0h1m6 0h1m13 0h1m5 0h1m30 0h1m2 0h1m34 0h1m19 0h1m38 0h1m46 0h1m24 0h1m5 0h1m27 0h1m34 0h1m13 0h1M16 72h1m19 0h1m9 0h1m70 0h1m13 0h1m46 0h1m2 0h1m19 0h1m11 0h1m12 0h1m13 0h1m10 0h1m4 0h1m36 0h1m14 0h1m78 0h1m1 0h2m3 0h1m15 0h1m32 0h1m8 0h1m20 0h1m26 0h1m4 0h1m8 0h1m5 0h1m57 0h1M6 73h1m26 0h1m24 0h1m38 0h1m7 0h1m62 0h1m2 0h1m57 0h1m59 0h1m9 0h1m8 0h1m39 0h1m8 0h1m10 0h1m21 0h1m12 0h1m22 0h1m60 0h1m29 0h1m3 0h1m3 0h1m40 0h1M16 74h1m56 0h1m28 0h1m81 0h1m4 0h1m19 0h1m25 0h1m23 0h1m13 0h1m86 0h2m14 0h1m17 0h1m25 0h1m1 0h1m5 0h1m11 0h1m6 0h1m2 0h1m29 0h1m87 0h1M19 75h1m5 0h1m28 0h1m15 0h1m7 0h1m3 0h1m27 0h1m3 0h1m23 0h1m26 0h1m6 0h1m93 0h1m1 0h1m9 0h1m25 0h1m20 0h2m11 0h1m48 0h1m35 0h1m68 0h1m8 0h1m1 0h1m10 0h1m8 0h1m22 0h1m35 0h1M127 76h1m39 0h1m41 0h1m21 0h1m50 0h1m7 0h1m12 0h1m42 0h1m94 0h1m82 0h1m56 0h1m1 0h1m8 0h1M16 77h1m4 0h1m19 0h1m10 0h1m19 0h1m8 0h1m80 0h1m71 0h1m47 0h1m10 0h1m12 0h1m29 0h2m42 0h1m11 0h1m17 0h1m46 0h1m10 0h1m33 0h1m69 0h1m3 0h1m16 0h1M8 78h1m12 0h1m2 0h1m55 0h1m46 0h1m79 0h1m8 0h1m16 0h1m28 0h1m8 0h1m8 0h1m23 0h1m23 0h1m17 0h1m1 0h1m27 0h1m24 0h1m30 0h1m3 0h1m35 0h1m15 0h1m7 0h1m4 0h1m11 0h2m6 0h1m10 0h1m37 0h1M33 79h1m37 0h1m62 0h1m6 0h1m24 0h1m7 0h1m82 0h1m34 0h2m39 0h1m45 0h2m6 0h1m17 0h1m10 0h1m10 0h1m6 0h1m64 0h1m30 0h1m29 0h1m13 0h1M86 80h1m26 0h1m82 0h1m20 0h1m13 0h1m5 0h1m16 0h1m7 0h1m13 0h1m13 0h1m6 0h1m85 0h1m7 0h1m17 0h1m48 0h1m50 0h1m67 0h1M20 81h1m32 0h1m12 0h1m10 0h1m28 0h1m65 0h1m4 0h1m7 0h1m33 0h1m7 0h1m4 0h1m6 0h1m18 0h1m8 0h2m39 0h1m27 0h1m11 0h1m16 0h1m10 0h1m57 0h1m17 0h1m39 0h1m37 0h1m9 0h1m9 0h1m1 0h1m24 0h1m3 0h1M47 82h1m47 0h2m28 0h1m10 0h1m15 0h1m17 0h1m2 0h1m46 0h1m18 0h1m6 0h1m54 0h1m6 0h1m5 0h1m28 0h1m4 0h1m13 0h1m51 0h1m47 0h1m35 0h1m32 0h1m29 0h1m11 0h1m24 0h1M30 83h1m25 0h1m16 0h1m25 0h1m17 0h1m4 0h1m23 0h1m18 0h1m6 0h1m17 0h1m18 0h1m10 0h1m16 0h1m29 0h1m3 0h1m23 0h1m98 0h1m53 0h1m3 0h1m9 0h1m40 0h1m8 0h1m4 0h1m8 0h1m50 0h1m3 0h2m7 0h1m3 0h1M80 84h1m51 0h1m25 0h1m18 0h1m19 0h1m39 0h1m13 0h1m2 0h2m1 0h1m16 0h1m1 0h1m4 0h1m6 0h1m9 0h1m3 0h1m4 0h1m2 0h1m7 0h1m2 0h1m1 0h1m66 0h1m103 0h1m40 0h1m51 0h1M10 85h1m18 0h1m4 0h1m4 0h1m36 0h1m13 0h1m9 0h1m32 0h1m11 0h1m4 0h1m8 0h1m8 0h1m2 0h2m117 0h1m1 0h1m25 0h1m21 0h1m18 0h1m11 0h1m30 0h1m1 0h1m28 0h1m21 0h1m41 0h1m6 0h1m37 0h2m30 0h1M70 86h1m13 0h1m55 0h1m18 0h1m24 0h1m26 0h1m129 0h1m29 0h1m9 0h1m44 0h1M0 87h1m12 0h1m2 0h1m52 0h1m38 0h1m74 0h1m1 0h1m74 0h1m32 0h1m14 0h1m11 0h1m41 0h1m55 0h1m10 0h1m4 0h1m13 0h1m24 0h1m3 0h1m2 0h1m17 0h1m57 0h1m2 0h1m23 0h1M3 88h1m13 0h1m135 0h1m94 0h1m7 0h1m15 0h1m30 0h1m36 0h1m7 0h1m14 0h1m9 0h1m8 0h1m73 0h1m3 0h1m19 0h1m32 0h1m54 0h2m3 0h1m4 0h1M24 89h1m20 0h1m29 0h1m23 0h1m14 0h1m23 0h1m5 0h1m1 0h1m4 0h1m12 0h1m9 0h1m4 0h1m13 0h1m92 0h1m20 0h1m4 0h1m39 0h2m15 0h1m12 0h1m55 0h1m39 0h1m1 0h1m5 0h1m57 0h2M16 90h1m11 0h1m70 0h1m61 0h1m1 0h1m4 0h1m20 0h1m7 0h1m7 0h1m1 0h1m4 0h1m6 0h1m1 0h1m7 0h1m2 0h1m17 0h1m41 0h1m16 0h1m95 0h1m46 0h1m9 0h1m5 0h1m61 0h1m31 0h1m7 0h1m7 0h1M43 91h1m47 0h1m47 0h1m84 0h1m75 0h1m35 0h1m92 0h1m73 0h1m3 0h1m21 0h1m7 0h1m13 0h1m1 0h1m12 0h1m6 0h1M21 92h1m11 0h1m57 0h1m14 0h1m15 0h1m1 0h1m10 0h1m11 0h1m48 0h1m27 0h1m10 0h1m29 0h1m23 0h1m9 0h1m34 0h1m33 0h1m73 0h1m43 0h1m3 0h1m18 0h1m56 0h1M98 93h1m37 0h1m45 0h1m20 0h1m21 0h1m40 0h1m15 0h1m15 0h1m8 0h1m2 0h1m5 0h1m84 0h1m27 0h1m17 0h1m16 0h1m43 0h1m60 0h1m5 0h1M33 94h1m3 0h1m21 0h1m64 0h1m19 0h1m55 0h1m16 0h1m23 0h1m10 0h2m41 0h1m14 0h1m3 0h1m76 0h1m49 0h1m29 0h1m78 0h2m1 0h1m17 0h1M14 95h1m89 0h1m16 0h1m84 0h1m45 0h1m81 0h1m15 0h1m49 0h1m15 0h1m8 0h1m27 0h1m10 0h1m26 0h1m14 0h1m2 0h1m29 0h1m1 0h1m23 0h1m25 0h1M6 96h1m55 0h1m50 0h1m5 0h1m53 0h1m32 0h1m5 0h2m11 0h1m21 0h1m14 0h1m144 0h1m4 0h1m4 0h1m33 0h1m30 0h1m16 0h1m5 0h1m7 0h1m1 0h1m10 0h1m18 0h1m6 0h1m37 0h1M91 97h1m72 0h1m34 0h1m12 0h1m37 0h1m6 0h2m3 0h1m16 0h1m57 0h1m14 0h1m64 0h1m49 0h1m31 0h1m13 0h1m7 0h1m2 0h1m49 0h1M1 98h1m6 0h1m7 0h1m75 0h1m3 0h1m3 0h1m4 0h1m1 0h1m1 0h1m207 0h1m52 0h1m22 0h1m11 0h1m51 0h1m24 0h1m38 0h1m31 0h1m24 0h2m10 0h1m7 0h1M28 99h1m32 0h1m14 0h1m26 0h1m10 0h1m28 0h1m24 0h1m80 0h1m5 0h1m82 0h1m61 0h1m18 0h1m95 0h1m18 0h1m5 0h1m25 0h1M53 100h2m16 0h1m53 0h1m31 0h1m33 0h1m22 0h1m107 0h1m23 0h1m13 0h1m2 0h1m7 0h1m69 0h1m60 0h1m44 0h1M0 101h1m6 0h1m31 0h1m26 0h1m19 0h1m69 0h1m32 0h1m116 0h1m62 0h1m7 0h1m98 0h1m107 0h1M37 102h1m36 0h1m36 0h1m63 0h1m20 0h1m6 0h1m63 0h1m9 0h1m16 0h1m22 0h1m1 0h1m7 0h1m29 0h1m49 0h1m38 0h1M5 103h1m28 0h1m21 0h1m19 0h1m76 0h1m59 0h1m11 0h1m14 0h1m9 0h1m15 0h1m39 0h1m90 0h1m13 0h1m22 0h1m13 0h1m2 0h1m29 0h1m36 0h1m66 0h1m1 0h1M0 104h1m3 0h1m18 0h1m52 0h1m34 0h1m16 0h1m84 0h1m59 0h1m25 0h1m7 0h1m10 0h1m14 0h1m13 0h1m53 0h1m2 0h1m27 0h1m19 0h1m4 0h1m31 0h1m10 0h1m17 0h1M7 105h1m25 0h1m12 0h1m41 0h1m8 0h2m1 0h1m34 0h1m48 0h1m22 0h1m84 0h1m6 0h1m20 0h1m74 0h1m152 0h1M5 106h1m25 0h1m39 0h1m58 0h1m22 0h1m4 0h1m7 0h1m4 0h1m5 0h1m35 0h1m80 0h1m17 0h1m18 0h1m37 0h1m31 0h2m52 0h1m53 0h1m34 0h1M39 107h1m8 0h1m40 0h1m196 0h1m25 0h1m53 0h1m41 0h1m21 0h1m26 0h1m69 0h1m17 0h1M18 108h1m10 0h1m18 0h1m21 0h1m38 0h1m65 0h1m101 0h1m25 0h1m49 0h1m2 0h1m109 0h1m57 0h1m23 0h1M116 109h1m76 0h2m26 0h1m117 0h1m22 0h1m15 0h1m4 0h1m16 0h1m41 0h1m31 0h1m1 0h1m68 0h1M47 110h1m6 0h1m24 0h1m37 0h1m5 0h1m70 0h1m5 0h1m3 0h1m146 0h1m40 0h1m2 0h1m58 0h1m1 0h1m20 0h1m2 0h1m7 0h1m5 0h1m14 0h1m22 0h1m17 0h1M22 111h1m21 0h1m26 0h1m9 0h1m1 0h1m38 0h1m8 0h1m42 0h1m28 0h1m51 0h1m13 0h1m48 0h1m42 0h1m101 0h1m8 0h1m10 0h1m13 0h1m56 0h1m9 0h1M7 112h1m12 0h1m9 0h1m63 0h1m90 0h1m38 0h1m46 0h1m72 0h1m26 0h1m34 0h1m82 0h1m39 0h2M26 113h1m17 0h1m30 0h1m1 0h1m79 0h1m30 0h1m38 0h1m40 0h2m3 0h1m22 0h1m2 0h1m32 0h1m9 0h1m84 0h1m134 0h1M23 114h1m22 0h1m74 0h1m116 0h1m7 0h1m97 0h1m34 0h1m84 0h1m71 0h1m25 0h1m10 0h1M59 115h1m63 0h1m23 0h1m48 0h1m20 0h1m21 0h1m144 0h1m101 0h1M137 116h1m57 0h1m4 0h1m16 0h1m19 0h1m68 0h1m6 0h1m115 0h1m29 0h1m17 0h1M40 117h2m35 0h1m55 0h1m81 0h1m42 0h1m4 0h1m18 0h1m81 0h1m125 0h1m7 0h1m2 0h1m7 0h1M135 118h1m46 0h1m91 0h1m22 0h1m40 0h1m53 0h1M86 119h1m15 0h1m25 0h1m67 0h1m56 0h1m4 0h1m33 0h1m53 0h1m106 0h1m10 0h1m50 0h1m30 0h1m32 0h1M1 120h1m13 0h1m40 0h1m59 0h1m100 0h1m46 0h1m103 0h1m54 0h1m51 0h1m13 0h1m62 0h1M7 121h1m45 0h1m29 0h1m47 0h1m148 0h1m88 0h1m39 0h1m51 0h1m29 0h1m104 0h1M196 122h1m23 0h1m1 0h1m77 0h1m1 0h1m11 0h1m7 0h1m58 0h1m62 0h1m31 0h1m13 0h1m88 0h2m17 0h1M14 123h1m45 0h1m64 0h1m140 0h1m27 0h1m20 0h1m9 0h1m12 0h1m35 0h1m54 0h1m44 0h1m20 0h1m35 0h1m4 0h1m16 0h1M7 124h1m97 0h1m12 0h1m8 0h1m137 0h1m35 0h1m40 0h1m64 0h1m26 0h1m12 0h1m21 0h1m24 0h1m53 0h1m3 0h1m30 0h1M73 125h1m20 0h1m13 0h1m87 0h1m14 0h1m133 0h1m67 0h1m36 0h1m19 0h1m21 0h1m37 0h1m40 0h1m13 0h1M196 126h1m169 0h1m149 0h1m56 0h1M45 127h1m55 0h1m51 0h1m55 0h1m135 0h1m18 0h1m111 0h1m31 0h1m56 0h1M297 128h1m108 0h1M197 129h1m92 0h1m98 0h1m36 0h1m60 0h1m20 0h1m36 0h1M32 130h1m50 0h1m11 0h1m86 0h1m207 0h1m4 0h1m22 0h1M2 131h1m81 0h1m9 0h2m24 0h1m8 0h1m69 0h1m130 0h1m143 0h1m64 0h1m13 0h1M56 132h1m357 0h1m15 0h1m125 0h1M7 133h2m219 0h2m192 0h1m28 0h1m36 0h1m17 0h1M8 134h1m112 0h1m59 0h1m7 0h1m12 0h1m19 0h1m173 0h1M171 135h1m145 0h1m114 0h1m99 0h1m9 0h1M52 136h1m31 0h1m91 0h1m99 0h1m4 0h1m46 0h1m13 0h1m6 0h1m37 0h1m28 0h1m61 0h1m102 0h1M51 137h1m39 0h1m63 0h1m64 0h1m107 0h1m14 0h1m44 0h1m71 0h1m14 0h1m113 0h1M17 138h1m43 0h1m122 0h1m60 0h1m22 0h1m8 0h1m172 0h1m55 0h1m9 0h1M101 139h1m5 0h1m86 0h1m101 0h1m137 0h1M257 140h1m27 0h1m52 0h1m158 0h1M184 141h1m103 0h1m13 0h1m24 0h1m75 0h1m22 0h1m19 0h1M96 142h1m92 0h1m119 0h1m2 0h1m5 0h1m1 0h1m83 0h1M109 143h1m81 0h1m149 0h1m20 0h1m85 0h1M149 144h1m47 0h1m266 0h1m38 0h1M16 145h1m185 0h1m17 0h1m97 0h1m24 0h1m103 0h1m102 0h1M166 146h1m57 0h1m351 0h1M92 147h1m39 0h1m34 0h1m100 0h1m184 0h1m37 0h1M227 148h1m77 0h1m9 0h1m121 0h1m37 0h1m24 0h1m34 0h1M123 149h1m312 0h1M276 150h1m22 0h1m58 0h1m95 0h1m24 0h1M76 151h1m84 0h1m7 0h1m64 0h1m29 0h1m9 0h1m215 0h1m22 0h1M418 152h1m28 0h1m95 0h1m48 0h1M19 153h1m87 0h1m169 0h1m10 0h1m11 0h1m49 0h1m4 0h1M132 154h1m52 0h1m56 0h1m132 0h1m129 0h1m83 0h1M361 155h1m59 0h1m158 0h1M22 156h1m1 0h1m94 0h1m185 0h1m118 0h1m136 0h1M9 157h1m260 0h1m147 0h1M99 158h1m24 0h1m30 0h1m196 0h1m137 0h1m69 0h1m14 0h1M26 159h1m32 0h1m253 0h1m22 0h1m54 0h1m40 0h1m59 0h1m69 0h1m8 0h1M17 160h1m235 0h1m42 0h1m149 0h1M72 161h1m130 0h1m91 0h1m258 0h1M256 162h1m198 0h1m64 0h1M92 163h1m6 0h1m384 0h1m4 0h1m8 0h1m34 0h1M493 164h1m65 0h1M18 165h1M385 166h1m70 0h1M311 168h1m142 0h1M204 169h1m205 0h1M39 170h1m5 0h1m151 0h1M472 171h1M204 172h1M166 173h1m117 0h1M91 174h1m97 0h1m22 0h1M47 175h1m451 0h1m73 0h1M575 176h1M226 177h1m209 0h1M20 178h1m279 0h1m186 0h1M196 179h1m83 0h1m10 0h1M38 180h1M14 181h1m370 0h1M108 182h1m177 0h1m218 0h1M31 183h1m303 0h1M412 184h1M489 185h1M535 187h1M192 189h1M77 191h1M369 193h1m111 0h1M233 194h1m297 0h1M391 195h1m49 0h1M439 197h1M296 199h1M178 201h1m15 0h1m231 0h1M140 203h1M577 206h1M397 207h1M77 208h1m362 0h1M555 210h1M165 211h1M94 212h1M535 214h1M447 216h1M228 217h1M535 224h1M55 239h1M97 241h1"/><path stroke="#00008c" d="M71 0h1m2 0h1m13 0h1m44 0h1m5 0h1m43 0h1m3 0h1m1 0h1m8 0h2m8 0h1m44 0h1m64 0h1m12 0h1m2 0h1m26 0h1m9 0h1m2 0h1m51 0h1m54 0h1m3 0h1m28 0h1m36 0h1m9 0h1m8 0h1M26 1h1m105 0h1m5 0h1m13 0h1m3 0h1m31 0h1m6 0h1m53 0h1m114 0h1m23 0h1m58 0h1m4 0h1m38 0h1m5 0h1m59 0h1m13 0h1M10 2h1m4 0h1m67 0h1m99 0h1m11 0h1m20 0h1m40 0h1m6 0h1m35 0h1m29 0h1m2 0h1m34 0h1m19 0h1m1 0h1m62 0h1m32 0h1m7 0h1m9 0h1m39 0h1M11 3h1m24 0h1m152 0h1m5 0h1m4 0h1m10 0h1m39 0h1m59 0h1m3 0h1m45 0h1m24 0h1m39 0h1m3 0h1m57 0h1m7 0h1m4 0h1m53 0h1M73 4h1m55 0h1m12 0h1m4 0h1m5 0h1m50 0h1m6 0h1m59 0h1m30 0h1m9 0h1m15 0h1m2 0h2m41 0h1m2 0h1m63 0h1m6 0h1m32 0h1m19 0h1m39 0h1m12 0h1m16 0h1M9 5h1m2 0h1m10 0h1m51 0h1m68 0h1m9 0h1m31 0h1m1 0h2m23 0h1m28 0h1m18 0h1m2 0h1m6 0h1m59 0h1m46 0h1m164 0h2M36 6h1m36 0h1m2 0h1m180 0h2m6 0h1m5 0h1m4 0h1m33 0h1m17 0h1m46 0h1m5 0h1m4 0h1m35 0h1m4 0h1m9 0h1m16 0h1m29 0h1m14 0h1m6 0h1M24 7h1m44 0h1m17 0h1m4 0h1m28 0h1m25 0h1m41 0h1m11 0h1m44 0h1m4 0h1m17 0h1m31 0h1m67 0h1m1 0h1m14 0h1m47 0h1m12 0h1m3 0h1M61 8h1m4 0h1m17 0h1m45 0h1m60 0h1m19 0h1m40 0h1m10 0h1m166 0h1m60 0h1m13 0h1m36 0h1M10 9h1m11 0h1m39 0h1m4 0h1m74 0h1m4 0h1m54 0h1m102 0h1m5 0h1m5 0h1m10 0h1m1 0h1m29 0h1m27 0h1m37 0h1m6 0h1m14 0h1m102 0h1M5 10h1m8 0h1m21 0h1m83 0h1m5 0h1m75 0h1m1 0h1m54 0h1m50 0h1m19 0h1m50 0h1m37 0h1m5 0h1m1 0h1m17 0h1M20 11h1m3 0h1m4 0h1m41 0h1m48 0h1m35 0h1m51 0h1m37 0h1m7 0h1m14 0h1m32 0h1m64 0h1m10 0h1m40 0h1m18 0h1m4 0h2m2 0h1m39 0h1m23 0h1m3 0h1m24 0h1m6 0h1M3 12h1m23 0h1m31 0h1m15 0h1m19 0h1m7 0h1m28 0h1m20 0h1m9 0h1m13 0h1m14 0h1m11 0h1m12 0h1m68 0h1m37 0h1m21 0h1m10 0h1m2 0h1m25 0h1m2 0h1m42 0h1m27 0h1m22 0h1m4 0h1m12 0h1m18 0h1m29 0h1m33 0h1m3 0h1m4 0h1M9 13h1m38 0h1m18 0h1m27 0h1m16 0h1m21 0h1m6 0h1m97 0h1m6 0h1m4 0h1m27 0h1m23 0h1m48 0h1m3 0h1m48 0h1m11 0h1m30 0h1m13 0h1m35 0h1m2 0h1m29 0h1m6 0h1m4 0h1m3 0h1m13 0h1m11 0h1m5 0h1M33 14h1m34 0h1m35 0h1m9 0h1m39 0h1m14 0h1m105 0h1m18 0h1m12 0h1m3 0h1m18 0h1m62 0h1m18 0h1m41 0h1m17 0h1m2 0h1m21 0h1m13 0h1m42 0h1m5 0h1m27 0h1M8 15h1m46 0h1m52 0h1m15 0h1m38 0h1m18 0h1m1 0h1m28 0h1m30 0h1m13 0h1m7 0h1m12 0h1m10 0h1m28 0h1m5 0h1m8 0h1m19 0h1m37 0h1m32 0h1m54 0h1m24 0h1m5 0h1m2 0h1m17 0h1m11 0h1m21 0h1m18 0h1m8 0h1M13 16h1m6 0h1m8 0h1m12 0h1m96 0h1m42 0h1m21 0h1m55 0h1m3 0h2m2 0h1m2 0h1m62 0h1m4 0h1m20 0h1m12 0h1m1 0h1m2 0h1m8 0h1m25 0h1m17 0h1m47 0h1m18 0h1m5 0h1m2 0h1m4 0h1m8 0h1m8 0h1m4 0h3m7 0h1m13 0h1m18 0h1M29 17h1m33 0h1m1 0h1m9 0h1m16 0h1m14 0h1m19 0h1m51 0h1m19 0h1m18 0h1m34 0h1m11 0h1m9 0h1m22 0h1m14 0h1m5 0h1m5 0h1m25 0h1m7 0h1m4 0h1m48 0h1m8 0h1m25 0h1m21 0h1m6 0h1m11 0h1m29 0h1m28 0h1m5 0h1m11 0h1M25 18h1m4 0h1m29 0h1m12 0h1m44 0h1m76 0h1m7 0h1m15 0h1m22 0h1m6 0h1m9 0h1m12 0h1m54 0h1m6 0h1m38 0h1m3 0h1m20 0h2m9 0h1m22 0h1m11 0h1m25 0h1m4 0h1m6 0h1m9 0h1m14 0h1m2 0h1m13 0h1m2 0h1m15 0h1m10 0h1m22 0h1M3 19h1m4 0h1m41 0h1m8 0h1m11 0h1m19 0h1m34 0h1m93 0h1m2 0h1m7 0h1m6 0h1m5 0h1m21 0h1m14 0h1m39 0h1m1 0h1m6 0h1m60 0h1m3 0h2m7 0h1m41 0h1m63 0h1m21 0h1m11 0h1m6 0h1m11 0h1m19 0h2m9 0h1m2 0h1M40 20h1m58 0h1m13 0h1m13 0h1m32 0h1m2 0h1m20 0h1m13 0h1m86 0h1m5 0h1m13 0h1m26 0h1m56 0h1m6 0h1m42 0h1m3 0h1m42 0h1m56 0h1m1 0h1M1 21h1m47 0h1m14 0h1m22 0h1m7 0h1m31 0h1m7 0h1m6 0h1m58 0h1m22 0h1m5 0h1m94 0h1m3 0h1m13 0h1m16 0h1m34 0h1m22 0h1m30 0h1m1 0h1m7 0h1m11 0h1m46 0h1m22 0h1m1 0h1m11 0h1m2 0h1m7 0h1m18 0h1m1 0h1m8 0h1M16 22h1m52 0h1m22 0h1m59 0h1m5 0h1m6 0h1m12 0h1m3 0h1m3 0h1m5 0h1m1 0h1m7 0h1m34 0h1m23 0h1m7 0h1m1 0h1m15 0h1m38 0h1m55 0h1m48 0h1m14 0h1m5 0h1m9 0h1m10 0h1m1 0h1m33 0h1m1 0h1m20 0h1m6 0h1M11 23h1m40 0h2m14 0h1m24 0h1m72 0h1m3 0h1m28 0h1m26 0h1m33 0h1m7 0h1m3 0h1m33 0h1m13 0h1m3 0h1m6 0h1m41 0h1m13 0h1m9 0h1m15 0h1m14 0h1m7 0h1m1 0h1m5 0h1m4 0h1m4 0h1m8 0h2m21 0h1m24 0h2m21 0h1m18 0h1m15 0h1m3 0h1m9 0h1M12 24h1m8 0h1m28 0h1m15 0h1m54 0h1m2 0h1m21 0h1m6 0h1m21 0h1m20 0h1m6 0h1m26 0h1m68 0h1m20 0h1m38 0h1m15 0h2m3 0h1m1 0h1m5 0h1m1 0h1m2 0h1m27 0h1m44 0h1m15 0h1m51 0h1m48 0h1m14 0h1M25 25h1m62 0h1m18 0h1m16 0h1m42 0h1m13 0h1m17 0h1m1 0h1m57 0h1m18 0h1m58 0h1m9 0h1m45 0h1m17 0h1m12 0h1m15 0h1m2 0h1m15 0h1m5 0h1m13 0h1m21 0h1m2 0h1m14 0h1m15 0h1m34 0h1m1 0h1m22 0h1M29 26h1m50 0h1m53 0h1m17 0h1m17 0h1m14 0h1m23 0h1m1 0h1m22 0h1m36 0h1m5 0h1m13 0h1m24 0h1m1 0h1m14 0h1m36 0h1m2 0h1m5 0h1m14 0h1m32 0h1m11 0h1m63 0h1m1 0h1m58 0h1m3 0h1M10 27h1m36 0h1m11 0h1m14 0h1m2 0h1m9 0h1m78 0h1m5 0h1m15 0h1m2 0h1m21 0h1m23 0h1m28 0h1m55 0h1m3 0h1m10 0h1m15 0h1m8 0h1m20 0h1m1 0h1m3 0h1m12 0h1m16 0h1m18 0h1m16 0h1m9 0h1m71 0h1m12 0h1m6 0h1M35 28h1m9 0h1m6 0h1m22 0h1m4 0h1m5 0h1m16 0h1m133 0h1m28 0h1m26 0h1m101 0h1m77 0h1m15 0h1m4 0h1m12 0h1m44 0h1m16 0h2M56 29h1m6 0h1m5 0h1m72 0h1m4 0h1m27 0h1m18 0h1m21 0h1m14 0h1m7 0h1m33 0h1m7 0h1m8 0h2m24 0h1m3 0h1m4 0h1m5 0h1m16 0h1m39 0h1m29 0h1m7 0h1m23 0h1m4 0h1m9 0h1m25 0h1m12 0h1m17 0h1m9 0h1m38 0h2M62 30h1m7 0h1m12 0h1m12 0h1m48 0h1m76 0h1m15 0h1m13 0h1m8 0h1m6 0h1m14 0h1m20 0h2m12 0h1m29 0h1m55 0h1m16 0h1m24 0h1m32 0h1m35 0h1m8 0h1M11 31h1m49 0h1m54 0h1m33 0h1m16 0h1m26 0h1m13 0h1m46 0h1m33 0h1m6 0h1m10 0h1m10 0h1m5 0h1m13 0h1m21 0h1m39 0h1m5 0h1m43 0h1m16 0h1m7 0h1m36 0h1m18 0h1m8 0h1m1 0h1m8 0h1m2 0h1M40 32h1m10 0h2m6 0h1m35 0h1m53 0h1m2 0h1m35 0h1m9 0h1m40 0h1m30 0h1m30 0h1m56 0h1m40 0h1m41 0h1m4 0h1m10 0h1m93 0h1m4 0h1m14 0h1M28 33h1m116 0h1m1 0h1m112 0h1m1 0h1m18 0h1m13 0h1m24 0h1m1 0h1m58 0h1m17 0h2m10 0h1m21 0h1m40 0h1m13 0h1m19 0h1m2 0h1m20 0h1m31 0h1m1 0h2m2 0h1m11 0h1M6 34h1m31 0h1m34 0h1m9 0h1m52 0h1m13 0h1m27 0h1m9 0h1m1 0h1m29 0h1m38 0h1m24 0h1m12 0h1m75 0h1m2 0h1m1 0h1m7 0h1m68 0h1m37 0h2m2 0h2m5 0h1m8 0h1m19 0h1m58 0h1M34 35h1m6 0h1m6 0h1m21 0h1m31 0h1m6 0h1m34 0h1m7 0h1m20 0h1m24 0h1m36 0h2m53 0h1m11 0h1m1 0h1m15 0h1m136 0h1m15 0h1m56 0h1m35 0h1m18 0h1M28 36h1m20 0h1m54 0h1m27 0h1m36 0h1m65 0h1m20 0h1m12 0h1m31 0h1m11 0h1m7 0h1m15 0h1m4 0h1m8 0h1m61 0h1m15 0h1m48 0h1m40 0h1m2 0h1m14 0h1m11 0h1m25 0h1m22 0h1M1 37h1m20 0h1m40 0h1m30 0h1m30 0h1m55 0h1m12 0h1m9 0h1m6 0h1m13 0h1m10 0h1m48 0h1m7 0h1m16 0h1m41 0h1m2 0h1m18 0h1m17 0h1m9 0h1m7 0h1m37 0h1m44 0h1m18 0h1m42 0h1m11 0h1m1 0h1m16 0h1M11 38h1m26 0h1m62 0h1m13 0h1m11 0h1m88 0h1m47 0h1m77 0h1m3 0h1m8 0h1m1 0h1m8 0h1m30 0h1m22 0h1m3 0h1m8 0h1m3 0h1m102 0h1m15 0h1m3 0h1m25 0h1m3 0h1M16 39h2m14 0h1m42 0h1m3 0h1m19 0h1m22 0h1m5 0h1m24 0h1m7 0h1m14 0h1m42 0h1m41 0h1m26 0h1m65 0h1m11 0h1m2 0h1m30 0h1m1 0h1m8 0h1m49 0h1m9 0h1m11 0h1m1 0h1m96 0h1M15 40h1m45 0h1m17 0h1m5 0h1m3 0h1m3 0h1m2 0h1m15 0h1m4 0h1m79 0h1m2 0h1m13 0h2m23 0h1m102 0h1m45 0h1m40 0h1m11 0h1m35 0h1m28 0h1m14 0h1m15 0h1m40 0h1M6 41h1m135 0h1m17 0h1m6 0h1m28 0h1m43 0h1m13 0h1m35 0h1m107 0h1m31 0h1m5 0h1m10 0h1m6 0h1m24 0h2m16 0h1m1 0h1m44 0h1m15 0h1m29 0h1M23 42h1m9 0h1m7 0h1m10 0h1m46 0h1m85 0h1m2 0h1m93 0h1m7 0h1m2 0h1m2 0h1m22 0h1m5 0h1m9 0h1m19 0h1m15 0h1m2 0h1m9 0h2m14 0h1m10 0h1m19 0h1m11 0h1m36 0h1m13 0h1m5 0h1m13 0h1m8 0h1m13 0h1m15 0h1m27 0h2m15 0h1M41 43h1m12 0h1m95 0h1m19 0h1m43 0h1m52 0h1m11 0h1m56 0h1m21 0h1m20 0h1m10 0h1m35 0h1m3 0h1m43 0h1m16 0h1m6 0h1m33 0h1m12 0h1M1 44h1m11 0h1m47 0h1m27 0h1m42 0h1m1 0h1m57 0h1m13 0h1m5 0h1m28 0h1m11 0h1m5 0h1m9 0h1m5 0h1m10 0h1m7 0h1m11 0h1m15 0h1m44 0h1m49 0h1m4 0h1m105 0h1m7 0h1m41 0h1M128 45h1m9 0h1m5 0h1m20 0h1m8 0h1m7 0h2m22 0h1m28 0h1m72 0h1m11 0h1m35 0h1m47 0h1m29 0h1m29 0h1m16 0h1m16 0h1m30 0h1m24 0h1m25 0h1M13 46h1m18 0h1m13 0h1m16 0h1m5 0h2m49 0h1m5 0h1m80 0h1m4 0h1m33 0h1m13 0h1m13 0h1m30 0h1m10 0h1m46 0h1m15 0h1m32 0h1m25 0h1m3 0h1m37 0h1m16 0h2m27 0h1m23 0h1m19 0h1m15 0h1M12 47h1m3 0h1m25 0h1m53 0h1m9 0h1m6 0h1m1 0h1m12 0h1m2 0h1m77 0h1m12 0h1m20 0h1m20 0h1m51 0h1m36 0h1m14 0h1m6 0h2m2 0h1m150 0h1m14 0h1m1 0h1m29 0h1M12 48h1m45 0h1m5 0h1m26 0h1m8 0h1m15 0h1m77 0h1m27 0h1m21 0h1m14 0h1m7 0h1m38 0h1m25 0h1m50 0h1m52 0h1m23 0h1m23 0h1m8 0h1m69 0h1m12 0h1M23 49h1m14 0h1m23 0h1m16 0h1m79 0h1m22 0h1m14 0h1m6 0h1m7 0h1m25 0h1m14 0h1m15 0h1m4 0h1m4 0h1m9 0h1m21 0h1m116 0h1m72 0h1m1 0h1m18 0h1m31 0h1m34 0h2M63 50h1m8 0h1m19 0h1m28 0h1m94 0h2m7 0h1m107 0h1m25 0h1m7 0h1m6 0h1m5 0h1m86 0h1m41 0h1m36 0h1M10 51h1m28 0h1m25 0h1m6 0h1m80 0h1m7 0h1m3 0h1m19 0h1m8 0h1m26 0h1m3 0h1m42 0h1m50 0h1m18 0h1m4 0h1m2 0h1m25 0h1m128 0h1M4 52h1m48 0h1m3 0h1m92 0h1m1 0h1m57 0h1m139 0h1m16 0h1m18 0h1m24 0h1m43 0h1m41 0h1m52 0h1m24 0h1M58 53h1m11 0h1m23 0h1m23 0h1m9 0h1m93 0h1m17 0h1m6 0h1m13 0h1m42 0h1m3 0h1m17 0h1m27 0h1m4 0h1m40 0h1m47 0h1m7 0h1m25 0h1m20 0h1m61 0h1M27 54h1m23 0h1m47 0h1m1 0h1m117 0h1m23 0h1m33 0h1m20 0h1m16 0h1m16 0h1m11 0h1m90 0h1m9 0h1m20 0h1m86 0h1m6 0h1M32 55h1m3 0h1m62 0h1m71 0h1m11 0h1m23 0h1m6 0h1m28 0h1m2 0h1m15 0h1m54 0h1m62 0h1m37 0h1m73 0h1m50 0h1m1 0h1m4 0h1m26 0h1M4 56h1m67 0h1m36 0h1m76 0h1m169 0h1m19 0h1m14 0h1m79 0h1m4 0h1m25 0h1m49 0h1m4 0h1m21 0h1M8 57h1m47 0h1m45 0h2m80 0h1m11 0h1m19 0h1m7 0h1m48 0h1m79 0h1m23 0h1m1 0h1m85 0h2m4 0h1m59 0h1m12 0h1M46 58h1m1 0h1m33 0h1m25 0h1m35 0h1m3 0h1m41 0h1m44 0h1m20 0h1m25 0h1m65 0h1m7 0h1m6 0h1m70 0h1m6 0h1m29 0h1m9 0h1m26 0h1m8 0h1m17 0h1m61 0h1M0 59h1m23 0h1m32 0h1m55 0h1m41 0h1m14 0h1m4 0h1m58 0h1m25 0h1m118 0h1m12 0h1m40 0h1m64 0h1M20 60h1m6 0h1m6 0h1m2 0h1m38 0h1m61 0h1m25 0h1m39 0h1m5 0h1m43 0h1m31 0h1m8 0h1m11 0h1m56 0h1m31 0h1m68 0h1m7 0h1m23 0h1m57 0h1m37 0h1M16 61h1m35 0h1m20 0h1m93 0h1m21 0h1m3 0h1m13 0h1m8 0h1m5 0h1m87 0h1m155 0h1m15 0h1m22 0h1m10 0h1m37 0h1m11 0h1m12 0h1M33 62h1m78 0h1m19 0h1m4 0h1m3 0h1m23 0h1m59 0h1m58 0h1m58 0h1m15 0h1m53 0h1m20 0h1m10 0h1m18 0h1m9 0h1m11 0h1m4 0h1m24 0h1m10 0h1m46 0h1M27 63h1m69 0h1m8 0h1m68 0h1m46 0h1m5 0h1m57 0h1m71 0h1m25 0h1m13 0h1m33 0h1m7 0h1m4 0h1m22 0h1m11 0h1m12 0h1m32 0h1m15 0h1m23 0h1m26 0h1M20 64h1m42 0h1m14 0h1m25 0h1m25 0h1m16 0h1m45 0h1m28 0h1m32 0h1m53 0h1m4 0h1m25 0h1m9 0h1m63 0h1m23 0h1m65 0h1m46 0h1M54 65h1m17 0h1m48 0h1m9 0h1m25 0h1m113 0h1m86 0h1m66 0h1M27 66h1m82 0h1m20 0h1m149 0h1m1 0h1m31 0h1m13 0h1m79 0h1m56 0h1m24 0h1m4 0h1m36 0h1m15 0h1m19 0h1m24 0h1M67 67h1m91 0h1m17 0h1m17 0h1m66 0h1m27 0h1m51 0h1m19 0h1m33 0h1m17 0h1m20 0h1m58 0h1m45 0h1m9 0h1m2 0h1M69 68h1m43 0h1m33 0h1m80 0h1m19 0h1m3 0h1m9 0h1m25 0h1m62 0h1m2 0h1m59 0h1m31 0h1m10 0h1m15 0h1m34 0h1m12 0h1m14 0h1m3 0h1m22 0h1m13 0h1m15 0h1M1 69h1m43 0h1m99 0h1m176 0h1m31 0h1m24 0h1m11 0h1m7 0h1m83 0h1m41 0h1m39 0h1M19 70h1m22 0h1m20 0h1m11 0h1m2 0h1m9 0h1m7 0h1m88 0h1m35 0h1m8 0h1m22 0h1m14 0h1m40 0h1m18 0h1m57 0h1m32 0h1m9 0h1m95 0h1m59 0h1m1 0h1M5 71h1m2 0h1m65 0h1m16 0h1m100 0h1m14 0h1m4 0h1m44 0h1m33 0h1m35 0h1m28 0h1m51 0h1M33 72h1m11 0h1m5 0h1m22 0h1m24 0h2m59 0h1m76 0h1m17 0h1m5 0h1m10 0h1m4 0h1m141 0h1m143 0h1M24 73h1m38 0h1m17 0h1m29 0h2m4 0h1m5 0h1m14 0h1m60 0h1m57 0h1m2 0h1m120 0h1m7 0h1m61 0h1m21 0h1m27 0h1m16 0h1m20 0h1M29 74h1m33 0h1m13 0h1m25 0h1m21 0h1m24 0h1m29 0h2m5 0h1m2 0h1m80 0h1m38 0h1m21 0h1m14 0h1m43 0h1m50 0h1m29 0h1m47 0h1m9 0h1m53 0h1m3 0h1M20 75h1m9 0h1m8 0h1m94 0h1m45 0h1m1 0h1m9 0h1m13 0h1m35 0h1m10 0h1m15 0h1m38 0h1m7 0h1m59 0h1m35 0h1m145 0h1m34 0h1M109 76h1m59 0h1m10 0h1m23 0h1m10 0h1m24 0h1m1 0h1m5 0h1m22 0h1m90 0h1m130 0h1m28 0h1m32 0h1m17 0h1m5 0h1M39 77h1m130 0h1m6 0h1m54 0h2m21 0h1m51 0h1m27 0h1m4 0h1m23 0h1m33 0h1m36 0h1m93 0h1m30 0h1m28 0h1M3 78h1m53 0h1m75 0h1m29 0h1m19 0h1m75 0h1m12 0h1m35 0h1m8 0h1m11 0h1m2 0h1m9 0h1m10 0h1m32 0h1m41 0h1m56 0h1m23 0h2m37 0h1m32 0h1M22 79h1m41 0h1m21 0h1m48 0h1m22 0h1m9 0h1m67 0h1m28 0h1m53 0h1m119 0h1m143 0h1M110 80h1m34 0h1m9 0h1m92 0h1m26 0h1m160 0h1m91 0h1m13 0h1M59 81h1m64 0h1m66 0h1m158 0h1m158 0h1m22 0h1m37 0h1M8 82h1m57 0h1m4 0h1m6 0h1m64 0h1m18 0h1m289 0h1m8 0h1m87 0h1M158 83h1m4 0h1m15 0h1m7 0h1m69 0h1m50 0h1m20 0h1m32 0h1m30 0h1m164 0h1m10 0h1M8 84h1m24 0h1m67 0h1m49 0h1m119 0h1m173 0h1m71 0h1M53 85h1m45 0h1m47 0h1m111 0h1m90 0h1m22 0h1m20 0h1m35 0h1m103 0h1M3 86h1m18 0h1m74 0h1m94 0h1m23 0h1m12 0h1m15 0h1m94 0h1m37 0h1m49 0h1m88 0h1m34 0h1m44 0h1M1 87h1m104 0h1m66 0h1m33 0h1m58 0h1m21 0h1m144 0h1m35 0h1m46 0h1m62 0h1m6 0h1M130 88h1m35 0h1m36 0h1m19 0h1m72 0h1m14 0h1m25 0h1m195 0h1m2 0h1m7 0h1m11 0h1m25 0h1M3 89h1m8 0h1m24 0h1m35 0h1m47 0h1m49 0h1m26 0h1m9 0h1m27 0h1m77 0h1m73 0h1m13 0h1m12 0h1m24 0h1m23 0h1m10 0h1m6 0h1m46 0h1m40 0h1m6 0h1M4 90h1m33 0h1m5 0h1m177 0h1m25 0h1m189 0h1m9 0h1m25 0h1m35 0h1M15 91h1m79 0h1m79 0h1m93 0h1m42 0h1m10 0h1m51 0h1m48 0h1m83 0h1m23 0h1M54 92h1m47 0h1m17 0h1m48 0h1m10 0h1m56 0h1m6 0h1m43 0h1m72 0h1M97 93h1m15 0h1m115 0h1m7 0h1m91 0h1m108 0h1m1 0h1m22 0h1m131 0h1M4 94h1m132 0h1m91 0h1m7 0h1m10 0h1m57 0h1m14 0h1m107 0h1m57 0h1m34 0h1m7 0h1m44 0h1m5 0h1M90 95h1m72 0h1m164 0h1m23 0h2m2 0h1m5 0h1m49 0h1m36 0h1m86 0h1M27 96h1m88 0h1m107 0h1m51 0h1m2 0h1m82 0h1m10 0h1m9 0h1m114 0h1m19 0h1m27 0h1m12 0h1M11 97h1m29 0h1m5 0h1m24 0h1m196 0h1m29 0h1m10 0h1m60 0h1m151 0h1m8 0h1m36 0h1M67 98h1m42 0h1m36 0h1m70 0h1m265 0h1m82 0h1M7 99h1m24 0h1m5 0h1m29 0h1m53 0h1m7 0h1m209 0h1m89 0h1m11 0h1m154 0h1M26 100h1m33 0h1m155 0h1m17 0h1m78 0h1m11 0h1m99 0h1m38 0h1m97 0h1m16 0h1M159 101h1m71 0h1m103 0h1m151 0h1m3 0h1m19 0h1M109 102h1m78 0h1m228 0h1m105 0h1M172 103h1m24 0h1m65 0h1m115 0h1m55 0h1m8 0h1m18 0h1m37 0h1m43 0h1m43 0h1M50 104h1m131 0h1m71 0h1m6 0h1m105 0h1M42 105h1m84 0h1m30 0h1m50 0h1m103 0h1m172 0h1m49 0h1M252 106h1m268 0h1m40 0h1m15 0h1M53 107h1m120 0h1m203 0h1m129 0h1M342 108h1m22 0h1m14 0h1m205 0h1M0 109h1m118 0h1m164 0h1m95 0h1M58 110h1m8 0h1m48 0h1m263 0h1m168 0h1m6 0h1M258 111h1m136 0h1m24 0h1m124 0h1m51 0h1M27 112h1m4 0h1m48 0h1m44 0h1m62 0h1m4 0h1m118 0h1m140 0h1m98 0h1m12 0h1M52 113h1m42 0h1m126 0h1m23 0h1m134 0h1m22 0h1M141 114h1m57 0h1m125 0h1m272 0h1M37 115h1m8 0h1m11 0h1m30 0h1m152 0h1m150 0h1M43 116h1m213 0h1m31 0h1m46 0h1m47 0h1M122 117h1m157 0h1m3 0h1m32 0h1m108 0h1m87 0h1m68 0h1M73 118h1m121 0h1m3 0h1m64 0h1M493 119h1M47 120h1m81 0h1m23 0h1m308 0h1m102 0h1M199 121h1m87 0h1M48 122h1m129 0h1m32 0h1m133 0h1M433 123h1M124 124h1m346 0h1M106 125h1m154 0h1m161 0h1M201 126h1m33 0h1m55 0h1M173 127h1M177 128h1m19 0h1m58 0h1m281 0h1M121 129h1m462 0h1M219 130h1m109 0h1M10 131h1m142 0h1m108 0h1m52 0h1m204 0h1M45 133h1m73 0h1m390 0h1m2 0h1M136 134h1m23 0h1m269 0h1M128 135h1m243 0h1M587 136h1M182 137h1m330 0h1M155 138h1M439 139h1m61 0h1M569 140h1M15 141h1m225 0h1M171 142h1m172 0h1M51 143h1M88 144h1m292 0h1M14 145h1m89 0h1m104 0h1m3 0h1m40 0h1M437 146h1m26 0h1M25 147h1m241 0h1M129 148h1m416 0h1M506 149h1M111 150h1m350 0h1M374 151h1m196 0h1M20 152h1m99 0h1m84 0h1M295 153h1M79 155h2M491 156h1M197 157h1M12 159h1M18 160h1m137 0h1m32 0h1m48 0h1m37 0h1M217 161h1M432 163h1M300 164h1M362 166h1M542 167h1M541 169h1M294 170h1M427 171h1m75 0h1M523 172h1M372 173h1M82 174h1m200 0h1M526 175h1m69 0h1M353 177h1m1 0h1m206 0h1M504 182h1M207 188h1M17 197h1"/><path stroke="#0000af" d="M10 0h1m24 0h1m31 0h1m8 0h1m16 0h1m28 0h1m71 0h2m52 0h1m23 0h1m163 0h1M71 1h1m8 0h1m160 0h1m23 0h1m3 0h1m32 0h1m5 0h1m1 0h1m15 0h1m111 0h1m42 0h1m20 0h1M63 2h1m145 0h1m118 0h1m96 0h1m28 0h1m43 0h1m12 0h1m41 0h1m2 0h1m13 0h1M5 3h1m10 0h1m53 0h1m9 0h1m278 0h1m87 0h1m96 0h1m7 0h1m18 0h1M0 4h1m79 0h3m12 0h1m91 0h1m12 0h1m253 0h1m49 0h1m56 0h1M36 5h1m84 0h1m2 0h2m3 0h1m135 0h1m38 0h1m15 0h1m64 0h1M91 6h1m54 0h2m92 0h1m4 0h1M28 7h1m164 0h2m21 0h1m28 0h1m25 0h1m1 0h1m28 0h1m21 0h1m34 0h1m20 0h1m54 0h1m9 0h1m66 0h1m62 0h1M62 8h1m28 0h1m2 0h1m32 0h1m6 0h1m14 0h1m53 0h1m44 0h1m22 0h1m38 0h1m78 0h1M12 9h1m6 0h1m220 0h1m11 0h1m3 0h1m106 0h1m20 0h1m181 0h1M65 10h1m5 0h1m55 0h1m2 0h1m56 0h1m55 0h1m25 0h1m96 0h1m10 0h1m42 0h1m21 0h1m37 0h1M32 11h2m48 0h1m106 0h1m2 0h1m73 0h1m38 0h1m8 0h1m14 0h1m63 0h1m114 0h1m41 0h1M17 12h1m49 0h1m25 0h1m32 0h2m14 0h1m1 0h1m15 0h1m85 0h1m35 0h1m31 0h1m21 0h1m7 0h2m15 0h1m2 0h1m3 0h2m8 0h1m56 0h1m40 0h1m2 0h1m28 0h1m29 0h1m2 0h1m37 0h1M38 13h1m114 0h1m57 0h1m22 0h1m112 0h1m72 0h1m6 0h1m117 0h1m24 0h1m10 0h1m13 0h1M8 14h1m18 0h1m28 0h1m67 0h1m65 0h1m25 0h1m22 0h1m34 0h1m100 0h1m40 0h1m27 0h1m62 0h1m11 0h1m70 0h1M44 15h1m40 0h2m9 0h1m3 0h1m6 0h1m98 0h1m85 0h1m71 0h1m73 0h1m39 0h1m58 0h1m26 0h1M30 16h1m83 0h1m1 0h1m25 0h1m31 0h1m16 0h1m112 0h1m11 0h1m12 0h2m21 0h1m10 0h1m16 0h2m30 0h1m23 0h1m47 0h1M5 17h1m73 0h1m15 0h1m14 0h1m30 0h1m17 0h1m62 0h1m15 0h1m110 0h1m2 0h1m80 0h1m22 0h1m15 0h1m12 0h1m26 0h1M21 18h1m119 0h2m93 0h1m72 0h1m2 0h1m28 0h1m72 0h1m18 0h1m23 0h1m68 0h1m25 0h1m35 0h1m3 0h1M46 19h1m39 0h1m8 0h1m37 0h1m3 0h1m69 0h1m59 0h1m38 0h1m25 0h1m125 0h1m12 0h1m71 0h1m1 0h1M7 20h1m31 0h1m24 0h1m15 0h1m7 0h1m46 0h1m10 0h1m28 0h1m6 0h1m22 0h1m64 0h1m46 0h1m51 0h1m113 0h1m35 0h1m5 0h1m24 0h1m26 0h1M24 21h1m4 0h1m69 0h1m5 0h1m60 0h1m11 0h1m27 0h1m5 0h1m22 0h1m41 0h1m6 0h1m13 0h1m136 0h1m86 0h1m5 0h1m30 0h1M37 22h1m24 0h1m71 0h1m22 0h1m63 0h1m83 0h1m27 0h1m4 0h1m14 0h1m10 0h1m75 0h1m90 0h1m58 0h1M15 23h1m86 0h1m141 0h1m41 0h1m115 0h1m39 0h1m42 0h1M0 24h1m82 0h1m13 0h1m9 0h1m60 0h1m40 0h1m69 0h1m47 0h1m1 0h1m26 0h1m46 0h1m82 0h1M213 25h1m53 0h1m27 0h1m38 0h1m25 0h1m14 0h1m3 0h1m174 0h1m5 0h1M17 26h1m37 0h1m34 0h1m19 0h1m17 0h1m29 0h1m12 0h1m14 0h1m37 0h1m30 0h1m140 0h1m61 0h1m1 0h1m92 0h1M11 27h1m15 0h1m71 0h1m69 0h1m7 0h1m14 0h1m4 0h1m83 0h1m104 0h1m35 0h1m6 0h1m59 0h1M183 28h1m35 0h1m98 0h1m5 0h1m10 0h1m20 0h1m5 0h1m8 0h1m3 0h1m1 0h1m19 0h1m55 0h1m68 0h1M61 29h1m33 0h1m75 0h1m12 0h1m98 0h1m34 0h1m85 0h1m1 0h1m80 0h1m31 0h1m55 0h1m5 0h1M17 30h1m42 0h1m166 0h1m3 0h1m163 0h1m47 0h1m25 0h1m83 0h1M21 31h1m6 0h1m77 0h1m27 0h1m8 0h1m123 0h1m6 0h1m22 0h1m4 0h1m142 0h1m84 0h1m26 0h1M179 32h1m41 0h1m161 0h1m7 0h1m44 0h1M41 33h1m77 0h1m112 0h1m2 0h1m30 0h1m3 0h1m3 0h1m32 0h1m8 0h1m13 0h1m21 0h1m6 0h1m14 0h1m106 0h1M63 34h1m14 0h1m27 0h1m17 0h1m30 0h1m37 0h1m60 0h1m99 0h1m235 0h1M24 35h1m10 0h1m74 0h1m6 0h1m145 0h1m3 0h1m133 0h1m15 0h1m96 0h1M71 36h1m18 0h1m81 0h1m36 0h1m51 0h1m1 0h1m40 0h1m15 0h1m35 0h1m37 0h1m66 0h1m121 0h1m9 0h1M28 37h1m18 0h1m8 0h1m8 0h1m164 0h1m24 0h1m83 0h1m93 0h1m39 0h1m37 0h1M19 38h1m160 0h1m43 0h1m110 0h1m8 0h1m3 0h1m26 0h1m27 0h1m25 0h1m24 0h1m138 0h1M185 39h1m48 0h1m37 0h1m66 0h1m2 0h1m39 0h1m14 0h1m132 0h1m22 0h1M36 40h1m116 0h1m15 0h1m3 0h1m12 0h1m29 0h1m124 0h1m68 0h1m71 0h1m27 0h1m12 0h1m7 0h1m54 0h1M28 41h1m30 0h1m2 0h1m140 0h1m24 0h1m30 0h1m2 0h1m84 0h1m2 0h1m11 0h1m47 0h1m61 0h1m37 0h1M31 42h1m24 0h1m44 0h1m90 0h2m73 0h1m55 0h1m14 0h1m194 0h1m9 0h1m6 0h1m7 0h1m25 0h1M158 43h1m19 0h1m59 0h1m11 0h1m3 0h1m16 0h1m36 0h1m17 0h1m26 0h1m17 0h1m6 0h1m57 0h1m51 0h1m73 0h1m30 0h1M79 44h1m168 0h1m8 0h1m20 0h1m31 0h1m17 0h1m44 0h1m82 0h1m2 0h1m19 0h1m34 0h1m82 0h1M25 45h2m33 0h1m54 0h1m8 0h1m47 0h1m43 0h1m12 0h1m130 0h1m45 0h1m9 0h1m35 0h1m128 0h1M76 46h1m77 0h1m13 0h1m10 0h1m130 0h1m23 0h1m30 0h1m22 0h1m1 0h1m167 0h1M58 47h1m30 0h1m252 0h1m15 0h1m56 0h1m31 0h1m109 0h1M14 48h1m44 0h1m26 0h1m116 0h1m68 0h1m37 0h1m10 0h1m21 0h1m147 0h1M18 49h1m29 0h1m78 0h1m12 0h1m39 0h1m153 0h1m40 0h1m84 0h1m2 0h1m98 0h1m12 0h1m12 0h1M67 50h1m40 0h1m39 0h1m19 0h1m92 0h1m51 0h1m136 0h1m36 0h1m8 0h1m90 0h1M122 51h1m61 0h1m7 0h1m4 0h1m190 0h1m28 0h1m79 0h1M25 52h1m35 0h1m16 0h1m109 0h1m36 0h1m21 0h1m48 0h1m86 0h1m127 0h1m42 0h1m11 0h1M24 53h1m100 0h1m57 0h1m166 0h1m109 0h1m11 0h1m13 0h1M26 54h1m155 0h1m140 0h1m36 0h1m5 0h1m13 0h2m12 0h1M35 55h1m100 0h1m36 0h1m4 0h1m8 0h1m96 0h1m43 0h1m47 0h1m142 0h1M111 56h1m8 0h1m139 0h1m28 0h1m62 0h1m10 0h1m87 0h1m10 0h1m56 0h1m16 0h1m18 0h1m6 0h1M34 57h1m122 0h1m6 0h1m89 0h1m38 0h1m29 0h1m31 0h1m81 0h1m133 0h1M89 58h1m70 0h1m22 0h1m30 0h1m52 0h1m1 0h1m102 0h1m25 0h1m5 0h1m60 0h1m9 0h1m30 0h1M14 59h1m116 0h1m44 0h1m17 0h1m121 0h1m266 0h1M5 60h1m160 0h1m23 0h1m18 0h1m72 0h1m36 0h1m59 0h1m69 0h1m82 0h1m29 0h1m15 0h1M6 61h1m34 0h1m95 0h1m150 0h1m137 0h1m50 0h1m34 0h1m11 0h1M187 62h1m74 0h1m64 0h1m28 0h1m18 0h1M125 63h1m12 0h1m19 0h1m4 0h1m82 0h1m41 0h1m72 0h1m108 0h1m91 0h1M103 64h1m37 0h1m71 0h1m31 0h1m20 0h1m49 0h1m159 0h1M171 65h1m77 0h1m86 0h1m63 0h1m71 0h1m53 0h1m41 0h1M102 66h1m127 0h1m303 0h1m24 0h1M54 67h1m7 0h1m21 0h1m121 0h1m15 0h1m35 0h1m63 0h1m33 0h1m104 0h1m55 0h1m10 0h1M11 68h1m26 0h1m329 0h1m98 0h1m8 0h1m43 0h1m41 0h1M80 69h1m163 0h1m141 0h1M40 70h1m3 0h1m92 0h1m132 0h1m60 0h1m11 0h1m5 0h1m67 0h1m7 0h1m24 0h1m89 0h1M233 71h1m117 0h1m16 0h1m38 0h1m141 0h1M58 72h1m110 0h1m51 0h1m6 0h1m197 0h1m83 0h1m1 0h1M62 73h1m63 0h1m71 0h1m45 0h1m132 0h1M4 74h1m6 0h1m136 0h1m49 0h1m53 0h1m211 0h1m120 0h1M97 75h1m60 0h1m68 0h1m11 0h1m18 0h1m113 0h1m79 0h1m90 0h1m10 0h1M105 76h1m93 0h1m37 0h1m227 0h1M203 77h1m127 0h1m143 0h1M5 78h1m148 0h1m189 0h1m33 0h1m58 0h1m69 0h1M93 79h1m61 0h1m67 0h1m121 0h1m5 0h1m98 0h1m21 0h1m46 0h1m13 0h1m3 0h1m15 0h1M115 80h1m22 0h1m12 0h1m53 0h1m52 0h1m26 0h1m92 0h1m28 0h1m31 0h1m13 0h1m113 0h1M256 81h1M156 82h1m189 0h1m86 0h1m22 0h1M95 83h1m11 0h1m342 0h1m12 0h1m5 0h1M7 84h1m24 0h1m8 0h1m97 0h1m420 0h1m13 0h1M35 85h1m1 0h1m113 0h1m67 0h1m63 0h1m138 0h1m42 0h1m64 0h1M202 86h1m9 0h1m20 0h1m59 0h1m201 0h1M24 87h1m55 0h1m60 0h1m160 0h1m52 0h1m218 0h1M24 88h1m562 0h1M5 89h1m41 0h1m53 0h1m208 0h1m78 0h1m21 0h1M37 90h1m79 0h1m256 0h1M58 91h1m25 0h1m49 0h1m100 0h1m151 0h1M191 92h1m71 0h1m40 0h1m213 0h1m41 0h1M11 93h1m322 0h1m152 0h1M388 94h1M25 95h1m77 0h1m4 0h1m109 0h1m270 0h1m2 0h1M100 96h1m247 0h1m172 0h1M75 97h1m81 0h1m27 0h1m173 0h1m97 0h1M340 98h1m223 0h1M272 99h1m29 0h1m39 0h1m237 0h1M80 100h1m124 0h1m111 0h1m12 0h1M185 101h1m22 0h1m25 0h1m86 0h1m105 0h1m38 0h1M450 102h1m19 0h1m101 0h1M33 103h1m10 0h1m208 0h1m53 0h1M171 104h1m45 0h1m12 0h1m56 0h1m48 0h1m38 0h1m85 0h1M79 105h1m196 0h1m1 0h1m143 0h1m58 0h1M20 106h1m69 0h1m131 0h1m116 0h1M16 107h1m109 0h1M120 108h1m4 0h1m210 0h1m151 0h1M340 109h1M97 111h1m74 0h1m293 0h1m92 0h1M120 112h1m399 0h1M139 113h1m75 0h1m1 0h1m119 0h1m249 0h1M196 114h1m136 0h1m263 0h1M165 115h1M235 116h1m255 0h1M80 117h1m314 0h1m100 0h1M32 118h1m347 0h1m7 0h1M162 119h1m145 0h1m245 0h1M175 120h1m43 0h1M44 121h1m175 0h1m33 0h1m318 0h1M268 122h1M111 123h1m107 0h1m234 0h1M216 124h1M312 125h1M11 126h1m24 0h1m14 0h1m44 0h1M316 127h1M447 128h1m30 0h1M263 129h1m154 0h1M107 130h1m45 0h1m98 0h1m316 0h1M334 132h1M256 133h1M108 134h1m375 0h1M447 135h1M36 136h1M174 137h1M326 139h1m57 0h1m5 0h1m37 0h1M72 140h1m114 0h1m138 0h1M470 141h1m78 0h1M50 142h1m67 0h1m425 0h1M26 143h1m457 0h1M52 144h1m532 0h1M351 146h1M3 148h1m343 0h1M162 154h1M413 155h1M103 160h1M143 177h1M324 179h1M137 190h1M203 197h1M8 198h1M227 199h1M566 202h1M0 212h1"/><path stroke="#0000dc" d="M81 0h1m63 0h1m217 0h1m116 0h1M34 1h1m30 0h1m69 0h1m17 0h1m118 0h1m90 0h1m81 0h1M242 2h1m75 0h1m12 0h1m89 0h1m143 0h1M61 3h1m122 0h1m79 0h1M30 4h1m178 0h1m175 0h1m113 0h1m6 0h1m52 0h2M35 6h1m175 0h1m57 0h1m34 0h1m241 0h1M31 7h1m31 0h1m2 0h1m70 0h1m239 0h1M10 8h1m126 0h1m162 0h1m127 0h1M0 9h1m88 0h1m391 0h1M63 10h1m69 0h1m354 0h1m80 0h1M270 11h1m238 0h1M20 12h1m97 0h1m48 0h1m110 0h1m17 0h1m157 0h1M258 13h1m303 0h1M116 14h1m28 0h1m113 0h1m188 0h1M57 15h1m7 0h1m95 0h1m50 0h1m253 0h1m126 0h1M99 16h1m85 0h1m219 0h1m134 0h1M60 17h1m11 0h1m304 0h1m205 0h1M343 18h1m159 0h1m34 0h1M55 19h2m3 0h1m29 0h1m327 0h1m98 0h1m39 0h1M31 20h1m181 0h1m23 0h1m39 0h1m301 0h1M333 21h1m15 0h1m86 0h1m120 0h1M141 22h1m220 0h1m57 0h1m60 0h1m24 0h1M119 23h1m96 0h1m250 0h1M8 24h1m249 0h1M58 25h1m54 0h1m61 0h1m116 0h1m49 0h1m127 0h1m11 0h1m65 0h1M23 26h1m336 0h1M17 27h1m84 0h1m303 0h1m70 0h1M111 28h1m236 0h1m18 0h1m159 0h1m65 0h1M221 29h1m3 0h1m17 0h1M339 30h1m52 0h1m17 0h1m13 0h1m67 0h1m66 0h1m27 0h1m9 0h1M27 31h1m272 0h1m205 0h1M61 32h1m15 0h1m25 0h1m341 0h1M55 33h1m121 0h1m64 0h1m5 0h1m185 0h1m81 0h1M264 34h1m225 0h1m92 0h1M137 35h1m52 0h1m73 0h1m18 0h1m48 0h1m15 0h1m150 0h1M58 36h1m281 0h1m126 0h1M51 37h1m7 0h1m19 0h1m55 0h1m19 0h1m151 0h1m83 0h1m138 0h1M150 38h1m55 0h1m69 0h1m254 0h1M146 39h1m61 0h1m247 0h1M11 40h1m8 0h1m125 0h1m319 0h1M87 41h1m45 0h1m39 0h1m8 0h1m37 0h1M360 42h1m85 0h1M191 43h1m5 0h1m256 0h1m87 0h1m13 0h1M63 44h1m319 0h1m28 0h1m6 0h1m148 0h1M218 45h1m206 0h1m4 0h1M83 46h1m46 0h1m173 0h1m114 0h1M272 47h1m324 0h1M34 48h1m19 0h1m28 0h1m1 0h1m450 0h1M125 49h1m3 0h1m345 0h1m59 0h1M411 50h1m28 0h1M169 51h1m275 0h1m70 0h1M327 52h1m69 0h1m20 0h1m10 0h1m40 0h1M80 53h1m8 0h1m13 0h1m437 0h1m53 0h1M81 54h1m170 0h1m282 0h1M202 55h1m26 0h1m184 0h1m124 0h1M181 56h1m392 0h1M281 57h1m29 0h1m2 0h1m13 0h1M37 58h1m49 0h1M82 59h1M340 60h1M568 61h1M109 62h1m431 0h1M206 63h1m94 0h1m242 0h1m28 0h1M151 64h1m318 0h1M417 65h1M317 66h1m150 0h1m118 0h1M422 67h1M99 68h1m16 0h1m332 0h1M193 69h1m193 0h1M153 70h1m173 0h1m57 0h1m46 0h1M54 71h1m30 0h1m12 0h1m200 0h1m83 0h1M234 72h1m4 0h1m146 0h1m153 0h1m42 0h1M206 73h1M24 74h1m535 0h1M260 75h1m149 0h1M135 76h1m172 0h1m118 0h1m57 0h1M108 78h1m296 0h1M411 79h1M422 81h1M442 82h1M464 83h1M320 84h1M31 85h1m226 0h1M90 86h1m65 0h1M405 87h1M27 88h1m229 0h1M129 89h1m221 0h1M8 90h1m298 0h1M308 91h1M437 92h1M246 93h1m110 0h1m101 0h1m24 0h1m59 0h1m2 0h1M212 94h1m10 0h1m22 0h1m151 0h1M326 95h1m15 0h1m225 0h1M410 96h1m15 0h1M136 97h1M20 98h1m134 0h1M30 99h1M453 103h1M25 105h1M86 106h1M241 107h1m227 0h1M25 112h1M125 114h1M194 115h1M450 116h1M55 117h1M501 118h1M223 119h1m191 0h1M69 120h1M320 121h1M190 123h1m203 0h1m15 0h1M257 125h1m148 0h1m82 0h1M403 127h1M138 135h1M242 138h1M198 144h1M39 147h1m362 0h1M56 158h1M125 161h1M146 163h1M43 170h1M121 171h1M104 174h1M194 177h1M582 183h1M494 184h1M64 194h1M352 196h1M155 202h1"/><path stroke="#0000ff" d="M429 2h1M445 3h1M20 4h1m128 0h1M319 6h1m160 0h1M86 11h1M306 14h1M487 15h1M270 16h1m133 0h1M270 17h1m46 0h1M109 19h1m22 0h1m58 0h1M510 20h1M198 21h1m104 0h1M131 22h1m459 0h1M70 23h1M144 24h1M374 25h1M463 26h1M265 29h1M39 30h1m193 0h1m8 0h1M262 32h1m192 0h1M553 33h1M216 34h1m175 0h1M277 35h1M84 37h1M199 41h1M473 43h1m73 0h1M421 44h1M18 46h1m332 0h1M308 47h1m229 0h1M28 51h1m126 0h1m161 0h1M511 55h1M92 56h1m121 0h1M192 58h1M459 60h1M451 62h1M85 64h1m155 0h1M371 65h1m162 0h1M145 71h1M457 75h1M336 78h1M71 84h1M111 87h1M19 92h1M328 94h1M248 99h1M260 104h1M270 112h1m99 0h1M371 115h1M401 125h1M392 129h1M106 132h1M182 150h1m275 0h1M512 169h1M421 172h1M117 183h1M307 186h1"/><path stroke="#0050ff" d="M546 9h1M247 13h1m22 0h1m84 0h1m220 0h1M471 18h1M102 20h1m37 0h1m207 0h1m143 0h1M540 25h1M79 26h1M13 31h1M223 34h1M94 35h1M475 41h1M218 42h1M83 45h1M187 49h1M294 52h1M215 54h1M556 56h1M501 61h1M310 69h1M335 80h1M514 86h1M456 133h1M587 160h1M167 233h1"/></svg>
<svg width="629" height="400" viewBox="0 0 629 400" shape-rendering="crispEdges"><rect x="20" y="370" width="598" height="1" fill="#808080"/><rect x="20" y="380" width="598" height="1" fill="#808080"/><rect x="20" y="390" width="598" height="1" fill="#808080"/><rect x="19" y="266" width="1" height="90" fill="#808080"/><rect x="19" y="266" width="1" height="1" fill="#a0a0a0"/><rect x="19" y="355" width="1" height="1" fill="#a0a0a0"/><rect x="617" y="370" width="1" height="1" fill="#a0a0a0"/><rect x="617" y="380" width="1" height="1" fill="#a0a0a0"/><rect x="617" y="390" width="1" height="1" fill="#a0a0a0"/><rect x="0" y="399" width="19" height="1" fill="#fff"/><rect x="622" y="399" width="7" height="1" fill="#fff"/><rect x="27" y="305" width="1" height="1" fill="#000078"/><rect x="27" y="306" width="1" height="1" fill="#00ffff"/><rect x="28" y="306" width="1" height="1" fill="#0000b0"/><rect x="27" y="307" width="1" height="1" fill="#00ffff"/><rect x="28" y="307" width="1" height="1" fill="#0000ff"/><rect x="27" y="308" width="1" height="1" fill="#0080ff"/><rect x="27" y="309" width="1" height="1" fill="#000078"/><rect x="50" y="302" width="1" height="1" fill="#000078"/><rect x="49" y="303" width="1" height="1" fill="#ffff00"/><rect x="50" y="303" width="1" height="1" fill="#00ffff"/><rect x="51" y="303" width="1" height="1" fill="#00ff00"/><rect x="49" y="304" width="1" height="1" fill="#ff8000"/><rect x="50" y="304" width="1" height="1" fill="#00ffff"/><rect x="51" y="304" width="1" height="1" fill="#00ffff"/><rect x="52" y="304" width="1" height="1" fill="#00ffff"/><rect x="49" y="305" width="1" height="1" fill="#0000ff"/><rect x="50" y="305" width="1" height="1" fill="#00ffff"/><rect x="51" y="305" width="1" height="1" fill="#ff0090"/><rect x="52" y="305" width="1" height="1" fill="#00ffff"/><rect x="50" y="306" width="1" height="1" fill="#0000ff"/><rect x="51" y="306" width="1" height="1" fill="#ff0090"/><rect x="50" y="307" width="1" height="1" fill="#000078"/><rect x="51" y="307" width="1" height="1" fill="#00ff00"/><rect x="51" y="308" width="1" height="1" fill="#0000ff"/><rect x="51" y="309" width="1" height="1" fill="#0000b0"/><rect x="51" y="310" width="1" height="1" fill="#000078"/><rect x="51" y="311" width="1" height="1" fill="#0000b0"/><rect x="56" y="296" width="1" height="1" fill="#000078"/><rect x="55" y="297" width="1" height="1" fill="#000078"/><rect x="56" y="298" width="1" height="1" fill="#000078"/><rect x="55" y="299" width="1" height="1" fill="#000078"/><rect x="56" y="299" width="1" height="1" fill="#0000b0"/><rect x="55" y="300" width="1" height="1" fill="#0000b0"/><rect x="56" y="300" width="1" height="1" fill="#000078"/><rect x="55" y="301" width="1" height="1" fill="#0000b0"/><rect x="56" y="301" width="1" height="1" fill="#0000b0"/><rect x="55" y="302" width="1" height="1" fill="#0000ff"/><rect x="56" y="302" width="1" height="1" fill="#0000b0"/><rect x="55" y="303" width="1" height="1" fill="#ff0000"/><rect x="56" y="303" width="1" height="1" fill="#ffff00"/><rect x="55" y="304" width="1" height="1" fill="#ff0000"/><rect x="56" y="304" width="1" height="1" fill="#00ff00"/><rect x="55" y="305" width="1" height="1" fill="#ff0000"/><rect x="56" y="305" width="1" height="1" fill="#ffff00"/><rect x="55" y="306" width="1" height="1" fill="#ff8000"/><rect x="56" y="306" width="1" height="1" fill="#00ff00"/><rect x="55" y="307" width="1" height="1" fill="#ffff00"/><rect x="56" y="307" width="1" height="1" fill="#00ff00"/><rect x="55" y="308" width="1" height="1" fill="#0000b0"/><rect x="56" y="308" width="1" height="1" fill="#0000ff"/><rect x="55" y="309" width="1" height="1" fill="#0000ff"/><rect x="56" y="309" width="1" height="1" fill="#0000b0"/><rect x="55" y="310" width="1" height="1" fill="#000078"/><rect x="56" y="310" width="1" height="1" fill="#0000b0"/><rect x="55" y="311" width="1" height="1" fill="#0000b0"/><rect x="56" y="311" width="1" height="1" fill="#000078"/><rect x="55" y="312" width="1" height="1" fill="#000078"/><rect x="56" y="313" width="1" height="1" fill="#000078"/><rect x="55" y="315" width="1" height="1" fill="#000078"/><rect x="87" y="304" width="1" height="1" fill="#0000b0"/><rect x="87" y="305" width="1" height="1" fill="#0000ff"/><rect x="87" y="306" width="1" height="1" fill="#0000ff"/><rect x="87" y="307" width="1" height="1" fill="#0000b0"/><rect x="87" y="308" width="1" height="1" fill="#000078"/><rect x="103" y="302" width="1" height="1" fill="#000078"/><rect x="103" y="303" width="1" height="1" fill="#0000ff"/><rect x="103" y="304" width="1" height="1" fill="#0000b0"/><rect x="119" y="305" width="1" height="1" fill="#000078"/><rect x="119" y="306" width="1" height="1" fill="#0000b0"/><rect x="149" y="299" width="1" height="1" fill="#000078"/><rect x="153" y="299" width="1" height="1" fill="#000078"/><rect x="146" y="300" width="1" height="1" fill="#000078"/><rect x="151" y="300" width="1" height="1" fill="#0000b0"/><rect x="156" y="300" width="1" height="1" fill="#000078"/><rect x="145" y="301" width="1" height="1" fill="#000078"/><rect x="147" y="301" width="1" height="1" fill="#0000b0"/><rect x="149" y="301" width="1" height="1" fill="#000078"/><rect x="152" y="301" width="1" height="1" fill="#0000b0"/><rect x="154" y="301" width="1" height="1" fill="#0000b0"/><rect x="158" y="301" width="1" height="1" fill="#000078"/><rect x="144" y="302" width="1" height="1" fill="#0000b0"/><rect x="145" y="302" width="1" height="1" fill="#00ff00"/><rect x="146" y="302" width="1" height="1" fill="#ffff00"/><rect x="147" y="302" width="1" height="1" fill="#ffff00"/><rect x="148" y="302" width="1" height="1" fill="#00ffff"/><rect x="149" y="302" width="1" height="1" fill="#0000ff"/><rect x="150" y="302" width="1" height="1" fill="#00ffff"/><rect x="151" y="302" width="1" height="1" fill="#0000b0"/><rect x="152" y="302" width="1" height="1" fill="#0000ff"/><rect x="153" y="302" width="1" height="1" fill="#000078"/><rect x="155" y="302" width="1" height="1" fill="#0000b0"/><rect x="156" y="302" width="1" height="1" fill="#0000ff"/><rect x="158" y="302" width="1" height="1" fill="#000078"/><rect x="161" y="302" width="1" height="1" fill="#000078"/><rect x="144" y="303" width="1" height="1" fill="#0000ff"/><rect x="145" y="303" width="1" height="1" fill="#00ff00"/><rect x="146" y="303" width="1" height="1" fill="#00ffff"/><rect x="147" y="303" width="1" height="1" fill="#00ff00"/><rect x="148" y="303" width="1" height="1" fill="#00ffff"/><rect x="149" y="303" width="1" height="1" fill="#00ffff"/><rect x="150" y="303" width="1" height="1" fill="#0000ff"/><rect x="151" y="303" width="1" height="1" fill="#00ffff"/><rect x="152" y="303" width="1" height="1" fill="#00ff00"/><rect x="153" y="303" width="1" height="1" fill="#0000ff"/><rect x="154" y="303" width="1" height="1" fill="#0000ff"/><rect x="155" y="303" width="1" height="1" fill="#000078"/><rect x="156" y="303" width="1" height="1" fill="#ff0000"/><rect x="157" y="303" width="1" height="1" fill="#00ff00"/><rect x="158" y="303" width="1" height="1" fill="#0000b0"/><rect x="159" y="303" width="1" height="1" fill="#00ff00"/><rect x="160" y="303" width="1" height="1" fill="#0000ff"/><rect x="161" y="303" width="1" height="1" fill="#000078"/><rect x="163" y="303" width="1" height="1" fill="#000078"/><rect x="144" y="304" width="1" height="1" fill="#000078"/><rect x="145" y="304" width="1" height="1" fill="#00ffff"/><rect x="146" y="304" width="1" height="1" fill="#0000ff"/><rect x="147" y="304" width="1" height="1" fill="#00ffff"/><rect x="148" y="304" width="1" height="1" fill="#00ff00"/><rect x="149" y="304" width="1" height="1" fill="#00ffff"/><rect x="150" y="304" width="1" height="1" fill="#00ff00"/><rect x="151" y="304" width="1" height="1" fill="#ffff00"/><rect x="152" y="304" width="1" height="1" fill="#ff0000"/><rect x="153" y="304" width="1" height="1" fill="#ff0000"/><rect x="154" y="304" width="1" height="1" fill="#00ff00"/><rect x="155" y="304" width="1" height="1" fill="#00ff00"/><rect x="156" y="304" width="1" height="1" fill="#00ff00"/><rect x="157" y="304" width="1" height="1" fill="#00ff00"/><rect x="158" y="304" width="1" height="1" fill="#00ff00"/><rect x="159" y="304" width="1" height="1" fill="#ffff00"/><rect x="160" y="304" width="1" height="1" fill="#00ff00"/><rect x="161" y="304" width="1" height="1" fill="#00ffff"/><rect x="162" y="304" width="1" height="1" fill="#0000ff"/><rect x="163" y="304" width="1" height="1" fill="#0000b0"/><rect x="164" y="304" width="1" height="1" fill="#0000b0"/><rect x="165" y="304" width="1" height="1" fill="#000078"/><rect x="166" y="304" width="1" height="1" fill="#0000b0"/><rect x="167" y="304" width="1" height="1" fill="#000078"/><rect x="144" y="305" width="1" height="1" fill="#0000b0"/><rect x="145" y="305" width="1" height="1" fill="#ff8000"/><rect x="146" y="305" width="1" height="1" fill="#00ffff"/><rect x="147" y="305" width="1" height="1" fill="#0080ff"/><rect x="148" y="305" width="1" height="1" fill="#00ffff"/><rect x="149" y="305" width="1" height="1" fill="#0000ff"/><rect x="150" y="305" width="1" height="1" fill="#0000ff"/><rect x="151" y="305" width="1" height="1" fill="#ff0000"/><rect x="152" y="305" width="1" height="1" fill="#ff0000"/><rect x="153" y="305" width="1" height="1" fill="#ff0090"/><rect x="154" y="305" width="1" height="1" fill="#00ff00"/><rect x="155" y="305" width="1" height="1" fill="#00ff00"/><rect x="156" y="305" width="1" height="1" fill="#00ffff"/><rect x="157" y="305" width="1" height="1" fill="#00ff00"/><rect x="158" y="305" width="1" height="1" fill="#00ffff"/><rect x="159" y="305" width="1" height="1" fill="#0080ff"/><rect x="160" y="305" width="1" height="1" fill="#0000ff"/><rect x="161" y="305" width="1" height="1" fill="#0000b0"/><rect x="162" y="305" width="1" height="1" fill="#000078"/><rect x="163" y="305" width="1" height="1" fill="#000078"/><rect x="165" y="305" width="1" height="1" fill="#0000b0"/><rect x="167" y="305" width="1" height="1" fill="#000078"/><rect x="145" y="306" width="1" height="1" fill="#000078"/><rect x="146" y="306" width="1" height="1" fill="#00ffff"/><rect x="147" y="306" width="1" height="1" fill="#00ffff"/><rect x="148" y="306" width="1" height="1" fill="#0000ff"/><rect x="149" y="306" width="1" height="1" fill="#000078"/><rect x="151" y="306" width="1" height="1" fill="#0000ff"/><rect x="152" y="306" width="1" height="1" fill="#00ffff"/><rect x="153" y="306" width="1" height="1" fill="#0000ff"/><rect x="154" y="306" width="1" height="1" fill="#0000b0"/><rect x="155" y="306" width="1" height="1" fill="#0000ff"/><rect x="156" y="306" width="1" height="1" fill="#000078"/><rect x="158" y="306" width="1" height="1" fill="#0000b0"/><rect x="159" y="306" width="1" height="1" fill="#000078"/><rect x="161" y="306" width="1" height="1" fill="#000078"/><rect x="146" y="307" width="1" height="1" fill="#000078"/><rect x="148" y="307" width="1" height="1" fill="#0000b0"/><rect x="151" y="307" width="1" height="1" fill="#000078"/><rect x="153" y="307" width="1" height="1" fill="#0000b0"/><rect x="155" y="307" width="1" height="1" fill="#000078"/><rect x="152" y="308" width="1" height="1" fill="#0000b0"/><rect x="154" y="308" width="1" height="1" fill="#0000b0"/><rect x="153" y="309" width="1" height="1" fill="#000078"/><rect x="155" y="309" width="1" height="1" fill="#0000b0"/><rect x="152" y="310" width="1" height="1" fill="#0000b0"/><rect x="155" y="311" width="1" height="1" fill="#000078"/><rect x="152" y="312" width="1" height="1" fill="#000078"/><rect x="154" y="312" width="1" height="1" fill="#0000b0"/><rect x="174" y="300" width="1" height="1" fill="#000078"/><rect x="173" y="301" width="1" height="1" fill="#0000ff"/><rect x="174" y="301" width="1" height="1" fill="#00ff00"/><rect x="174" y="302" width="1" height="1" fill="#0000ff"/><rect x="175" y="302" width="1" height="1" fill="#0000b0"/><rect x="174" y="303" width="1" height="1" fill="#0000ff"/><rect x="175" y="303" width="1" height="1" fill="#ffff00"/><rect x="174" y="304" width="1" height="1" fill="#0000b0"/><rect x="176" y="305" width="1" height="1" fill="#000078"/><rect x="177" y="305" width="1" height="1" fill="#0000b0"/><rect x="178" y="305" width="1" height="1" fill="#0000b0"/><rect x="177" y="306" width="1" height="1" fill="#00ffff"/><rect x="179" y="306" width="1" height="1" fill="#000078"/><rect x="177" y="307" width="1" height="1" fill="#0080ff"/><rect x="201" y="304" width="1" height="1" fill="#000078"/><rect x="201" y="305" width="1" height="1" fill="#0000ff"/><rect x="201" y="306" width="1" height="1" fill="#00ff00"/><rect x="201" y="307" width="1" height="1" fill="#0000ff"/><rect x="201" y="308" width="1" height="1" fill="#0000b0"/><rect x="171" y="313" width="1" height="1" fill="#0000b0"/><rect x="171" y="314" width="1" height="1" fill="#0000ff"/><rect x="171" y="315" width="1" height="1" fill="#0000ff"/><rect x="171" y="316" width="1" height="1" fill="#0000b0"/><rect x="389" y="298" width="1" height="1" fill="#000078"/><rect x="389" y="299" width="1" height="1" fill="#0000ff"/><rect x="389" y="300" width="1" height="1" fill="#ff0090"/><rect x="389" y="301" width="1" height="1" fill="#ff0090"/><rect x="389" y="302" width="1" height="1" fill="#0000ff"/><rect x="389" y="303" width="1" height="1" fill="#000078"/><rect x="425" y="286" width="1" height="1" fill="#000078"/><rect x="425" y="288" width="1" height="1" fill="#000078"/><rect x="425" y="289" width="1" height="1" fill="#000078"/><rect x="424" y="290" width="1" height="1" fill="#000078"/><rect x="425" y="291" width="1" height="1" fill="#000078"/><rect x="425" y="292" width="1" height="1" fill="#0000b0"/><rect x="425" y="293" width="1" height="1" fill="#000078"/><rect x="424" y="294" width="1" height="1" fill="#000078"/><rect x="425" y="294" width="1" height="1" fill="#0000b0"/><rect x="425" y="295" width="1" height="1" fill="#0000b0"/><rect x="424" y="296" width="1" height="1" fill="#000078"/><rect x="425" y="296" width="1" height="1" fill="#0000b0"/><rect x="424" y="297" width="1" height="1" fill="#0000b0"/><rect x="425" y="297" width="1" height="1" fill="#0000ff"/><rect x="424" y="298" width="1" height="1" fill="#00ffff"/><rect x="425" y="298" width="1" height="1" fill="#0080ff"/><rect x="424" y="299" width="1" height="1" fill="#0080ff"/><rect x="425" y="299" width="1" height="1" fill="#00ffff"/><rect x="424" y="300" width="1" height="1" fill="#0000ff"/><rect x="425" y="300" width="1" height="1" fill="#00ff00"/><rect x="426" y="300" width="1" height="1" fill="#0000b0"/><rect x="424" y="301" width="1" height="1" fill="#ffff00"/><rect x="425" y="301" width="1" height="1" fill="#00ff00"/><rect x="426" y="301" width="1" height="1" fill="#0000ff"/><rect x="423" y="302" width="1" height="1" fill="#0000b0"/><rect x="424" y="302" width="1" height="1" fill="#ff0000"/><rect x="425" y="302" width="1" height="1" fill="#ff0000"/><rect x="426" y="302" width="1" height="1" fill="#00ff00"/><rect x="423" y="303" width="1" height="1" fill="#0000ff"/><rect x="424" y="303" width="1" height="1" fill="#ff0000"/><rect x="425" y="303" width="1" height="1" fill="#ff0000"/><rect x="426" y="303" width="1" height="1" fill="#ff0000"/><rect x="427" y="303" width="1" height="1" fill="#0000b0"/><rect x="423" y="304" width="1" height="1" fill="#0000ff"/><rect x="424" y="304" width="1" height="1" fill="#ff0000"/><rect x="425" y="304" width="1" height="1" fill="#ff0090"/><rect x="426" y="304" width="1" height="1" fill="#ff0000"/><rect x="427" y="304" width="1" height="1" fill="#00ff00"/><rect x="422" y="305" width="1" height="1" fill="#000078"/><rect x="423" y="305" width="1" height="1" fill="#0000ff"/><rect x="424" y="305" width="1" height="1" fill="#ff0000"/><rect x="425" y="305" width="1" height="1" fill="#ff0090"/><rect x="426" y="305" width="1" height="1" fill="#ff0000"/><rect x="427" y="305" width="1" height="1" fill="#00ffff"/><rect x="423" y="306" width="1" height="1" fill="#0000b0"/><rect x="424" y="306" width="1" height="1" fill="#ffff00"/><rect x="425" y="306" width="1" height="1" fill="#ff0000"/><rect x="426" y="306" width="1" height="1" fill="#ff0000"/><rect x="427" y="306" width="1" height="1" fill="#0000ff"/><rect x="423" y="307" width="1" height="1" fill="#0000ff"/><rect x="424" y="307" width="1" height="1" fill="#ff0000"/><rect x="425" y="307" width="1" height="1" fill="#ff0000"/><rect x="426" y="307" width="1" height="1" fill="#ff0000"/><rect x="427" y="307" width="1" height="1" fill="#0000b0"/><rect x="424" y="308" width="1" height="1" fill="#ffff00"/><rect x="425" y="308" width="1" height="1" fill="#ff0000"/><rect x="426" y="308" width="1" height="1" fill="#00ff00"/><rect x="424" y="309" width="1" height="1" fill="#00ff00"/><rect x="425" y="309" width="1" height="1" fill="#00ff00"/><rect x="426" y="309" width="1" height="1" fill="#0000ff"/><rect x="424" y="310" width="1" height="1" fill="#0000ff"/><rect x="425" y="310" width="1" height="1" fill="#00ffff"/><rect x="424" y="311" width="1" height="1" fill="#0000b0"/><rect x="425" y="311" width="1" height="1" fill="#0080ff"/><rect x="425" y="312" width="1" height="1" fill="#0000ff"/><rect x="424" y="313" width="1" height="1" fill="#000078"/><rect x="425" y="313" width="1" height="1" fill="#0000b0"/><rect x="425" y="314" width="1" height="1" fill="#0000b0"/><rect x="425" y="315" width="1" height="1" fill="#0000b0"/><rect x="424" y="316" width="1" height="1" fill="#000078"/><rect x="425" y="316" width="1" height="1" fill="#000078"/><rect x="425" y="317" width="1" height="1" fill="#000078"/><rect x="425" y="318" width="1" height="1" fill="#000078"/><rect x="425" y="320" width="1" height="1" fill="#000078"/><rect x="425" y="322" width="1" height="1" fill="#000078"/><rect x="419" y="304" width="1" height="1" fill="#0000b0"/><rect x="419" y="305" width="1" height="1" fill="#0000ff"/><rect x="419" y="306" width="1" height="1" fill="#000078"/><rect x="419" y="307" width="1" height="1" fill="#0000b0"/><rect x="419" y="308" width="1" height="1" fill="#0000ff"/><rect x="419" y="309" width="1" height="1" fill="#000078"/><rect x="436" y="308" width="1" height="1" fill="#000078"/><rect x="436" y="309" width="1" height="1" fill="#0000b0"/><rect x="459" y="306" width="1" height="1" fill="#000078"/><rect x="459" y="307" width="1" height="1" fill="#0000ff"/><rect x="459" y="308" width="1" height="1" fill="#00ff00"/><rect x="459" y="309" width="1" height="1" fill="#00ff00"/><rect x="459" y="310" width="1" height="1" fill="#ffff00"/><rect x="459" y="311" width="1" height="1" fill="#00ff00"/><rect x="459" y="312" width="1" height="1" fill="#0000b0"/><rect x="463" y="306" width="1" height="1" fill="#0080ff"/><rect x="463" y="307" width="1" height="1" fill="#00ffff"/><rect x="463" y="308" width="1" height="1" fill="#0000ff"/><rect x="470" y="304" width="1" height="1" fill="#000078"/><rect x="469" y="305" width="1" height="1" fill="#0000b0"/><rect x="472" y="305" width="1" height="1" fill="#000078"/><rect x="474" y="305" width="1" height="1" fill="#0000b0"/><rect x="468" y="306" width="1" height="1" fill="#0000b0"/><rect x="471" y="306" width="1" height="1" fill="#0000b0"/><rect x="470" y="307" width="1" height="1" fill="#000078"/><rect x="473" y="307" width="1" height="1" fill="#000078"/><rect x="529" y="298" width="1" height="1" fill="#000078"/><rect x="529" y="299" width="1" height="1" fill="#0080ff"/><rect x="529" y="300" width="1" height="1" fill="#00ffff"/><rect x="529" y="301" width="1" height="1" fill="#00ffff"/><rect x="529" y="302" width="1" height="1" fill="#0080ff"/><rect x="529" y="303" width="1" height="1" fill="#000078"/><rect x="544" y="301" width="1" height="1" fill="#000078"/><rect x="544" y="302" width="1" height="1" fill="#0000ff"/><rect x="545" y="302" width="1" height="1" fill="#0000b0"/><rect x="543" y="303" width="1" height="1" fill="#000078"/><rect x="544" y="303" width="1" height="1" fill="#0000ff"/><rect x="575" y="300" width="1" height="1" fill="#0080ff"/><rect x="576" y="300" width="1" height="1" fill="#0000ff"/><rect x="575" y="301" width="1" height="1" fill="#0000ff"/><rect x="576" y="301" width="1" height="1" fill="#0080ff"/><rect x="574" y="302" width="1" height="1" fill="#000078"/><rect x="570" y="303" width="1" height="1" fill="#0000ff"/><rect x="571" y="303" width="1" height="1" fill="#0000b0"/><rect x="574" y="303" width="1" height="1" fill="#0000ff"/><rect x="575" y="303" width="1" height="1" fill="#0000b0"/><rect x="576" y="303" width="1" height="1" fill="#000078"/><rect x="570" y="304" width="1" height="1" fill="#0000ff"/><rect x="571" y="304" width="1" height="1" fill="#0000ff"/><rect x="574" y="304" width="1" height="1" fill="#0000ff"/><rect x="575" y="304" width="1" height="1" fill="#ff0000"/><rect x="576" y="304" width="1" height="1" fill="#00ff00"/><rect x="570" y="305" width="1" height="1" fill="#0000ff"/><rect x="571" y="305" width="1" height="1" fill="#0080ff"/><rect x="574" y="305" width="1" height="1" fill="#0000ff"/><rect x="580" y="305" width="1" height="1" fill="#00ff00"/><rect x="570" y="306" width="1" height="1" fill="#0000ff"/><rect x="571" y="306" width="1" height="1" fill="#ffff00"/><rect x="574" y="306" width="1" height="1" fill="#0000ff"/><rect x="570" y="307" width="1" height="1" fill="#0000b0"/><rect x="571" y="307" width="1" height="1" fill="#0000ff"/><rect x="574" y="307" width="1" height="1" fill="#0080ff"/><rect x="574" y="308" width="1" height="1" fill="#ffff00"/><rect x="574" y="309" width="1" height="1" fill="#ffff00"/><rect x="574" y="310" width="1" height="1" fill="#0000b0"/><rect x="586" y="306" width="1" height="1" fill="#000078"/><rect x="586" y="307" width="1" height="1" fill="#0000ff"/><rect x="586" y="308" width="1" height="1" fill="#0000ff"/><rect x="586" y="309" width="1" height="1" fill="#0080ff"/><rect x="586" y="310" width="1" height="1" fill="#0000ff"/><rect x="586" y="311" width="1" height="1" fill="#000078"/><rect x="598" y="308" width="1" height="1" fill="#0000b0"/><rect x="598" y="309" width="1" height="1" fill="#0000ff"/><rect x="598" y="310" width="1" height="1" fill="#0000b0"/><rect x="591" y="307" width="1" height="1" fill="#000078"/><rect x="591" y="308" width="1" height="1" fill="#0000b0"/><rect x="20" y="396" width="1" height="4" fill="#00ffff"/><rect x="22" y="399" width="1" height="1" fill="#00ffff"/><rect x="23" y="397" width="1" height="3" fill="#00ffff"/><rect x="30" y="399" width="1" height="1" fill="#00ffff"/><rect x="31" y="399" width="1" height="1" fill="#00ffff"/><rect x="34" y="399" width="1" height="1" fill="#00ffff"/><rect x="39" y="399" width="1" height="1" fill="#00ffff"/><rect x="40" y="397" width="1" height="3" fill="#00ffff"/><rect x="42" y="399" width="1" height="1" fill="#00ffff"/><rect x="43" y="399" width="1" height="1" fill="#00ffff"/><rect x="44" y="399" width="1" height="1" fill="#00ffff"/><rect x="45" y="399" width="1" height="1" fill="#00ffff"/><rect x="47" y="398" width="1" height="2" fill="#00ffff"/><rect x="48" y="399" width="1" height="1" fill="#00ffff"/><rect x="51" y="399" width="1" height="1" fill="#00ffff"/><rect x="52" y="399" width="1" height="1" fill="#00ffff"/><rect x="54" y="398" width="1" height="2" fill="#00ffff"/><rect x="55" y="398" width="1" height="2" fill="#00ffff"/><rect x="56" y="399" width="1" height="1" fill="#00ffff"/><rect x="57" y="399" width="1" height="1" fill="#00ffff"/><rect x="58" y="399" width="1" height="1" fill="#00ffff"/><rect x="61" y="398" width="1" height="2" fill="#00ffff"/><rect x="63" y="397" width="1" height="3" fill="#00ffff"/><rect x="65" y="399" width="1" height="1" fill="#00ffff"/><rect x="68" y="399" width="1" height="1" fill="#00ffff"/><rect x="70" y="398" width="1" height="2" fill="#00ffff"/><rect x="71" y="395" width="1" height="5" fill="#00ffff"/><rect x="73" y="398" width="1" height="2" fill="#00ffff"/><rect x="74" y="399" width="1" height="1" fill="#00ffff"/><rect x="76" y="399" width="1" height="1" fill="#00ffff"/><rect x="77" y="399" width="1" height="1" fill="#00ffff"/><rect x="83" y="399" width="1" height="1" fill="#00ffff"/><rect x="84" y="399" width="1" height="1" fill="#00ffff"/><rect x="85" y="399" width="1" height="1" fill="#00ffff"/><rect x="86" y="399" width="1" height="1" fill="#00ffff"/><rect x="89" y="399" width="1" height="1" fill="#00ffff"/><rect x="90" y="398" width="1" height="2" fill="#00ffff"/><rect x="93" y="399" width="1" height="1" fill="#00ffff"/><rect x="95" y="399" width="1" height="1" fill="#00ffff"/><rect x="97" y="399" width="1" height="1" fill="#00ffff"/><rect x="98" y="399" width="1" height="1" fill="#00ffff"/><rect x="99" y="397" width="1" height="3" fill="#00ffff"/><rect x="100" y="399" width="1" height="1" fill="#00ffff"/><rect x="102" y="399" width="1" height="1" fill="#00ffff"/><rect x="103" y="399" width="1" height="1" fill="#00ffff"/><rect x="104" y="399" width="1" height="1" fill="#00ffff"/><rect x="106" y="399" width="1" height="1" fill="#00ffff"/><rect x="108" y="399" width="1" height="1" fill="#00ffff"/><rect x="111" y="399" width="1" height="1" fill="#00ffff"/><rect x="113" y="399" width="1" height="1" fill="#00ffff"/><rect x="114" y="398" width="1" height="2" fill="#00ffff"/><rect x="115" y="399" width="1" height="1" fill="#00ffff"/><rect x="118" y="397" width="1" height="3" fill="#00ffff"/><rect x="122" y="399" width="1" height="1" fill="#00ffff"/><rect x="123" y="399" width="1" height="1" fill="#00ffff"/><rect x="124" y="399" width="1" height="1" fill="#00ffff"/><rect x="125" y="399" width="1" height="1" fill="#00ffff"/><rect x="127" y="399" width="1" height="1" fill="#00ffff"/><rect x="129" y="399" width="1" height="1" fill="#00ffff"/><rect x="131" y="395" width="1" height="5" fill="#00ffff"/><rect x="133" y="399" width="1" height="1" fill="#00ffff"/><rect x="134" y="399" width="1" height="1" fill="#00ffff"/><rect x="135" y="399" width="1" height="1" fill="#00ffff"/><rect x="137" y="399" width="1" height="1" fill="#00ffff"/><rect x="143" y="399" width="1" height="1" fill="#00ffff"/><rect x="144" y="399" width="1" height="1" fill="#00ffff"/><rect x="146" y="399" width="1" height="1" fill="#00ffff"/><rect x="147" y="398" width="1" height="2" fill="#00ffff"/><rect x="148" y="399" width="1" height="1" fill="#00ffff"/><rect x="149" y="399" width="1" height="1" fill="#00ffff"/><rect x="153" y="399" width="1" height="1" fill="#00ffff"/><rect x="154" y="399" width="1" height="1" fill="#00ffff"/><rect x="155" y="399" width="1" height="1" fill="#00ffff"/><rect x="156" y="399" width="1" height="1" fill="#00ffff"/><rect x="157" y="398" width="1" height="2" fill="#00ffff"/><rect x="159" y="399" width="1" height="1" fill="#00ffff"/><rect x="162" y="399" width="1" height="1" fill="#00ffff"/><rect x="164" y="399" width="1" height="1" fill="#00ffff"/><rect x="165" y="399" width="1" height="1" fill="#00ffff"/><rect x="168" y="398" width="1" height="2" fill="#00ffff"/><rect x="169" y="399" width="1" height="1" fill="#00ffff"/><rect x="171" y="397" width="1" height="3" fill="#00ffff"/><rect x="172" y="399" width="1" height="1" fill="#00ffff"/><rect x="173" y="399" width="1" height="1" fill="#00ffff"/><rect x="174" y="399" width="1" height="1" fill="#00ffff"/><rect x="175" y="397" width="1" height="3" fill="#00ffff"/><rect x="177" y="396" width="1" height="4" fill="#00ffff"/><rect x="178" y="399" width="1" height="1" fill="#00ffff"/><rect x="180" y="398" width="1" height="2" fill="#00ffff"/><rect x="181" y="399" width="1" height="1" fill="#00ffff"/><rect x="182" y="399" width="1" height="1" fill="#00ffff"/><rect x="185" y="399" width="1" height="1" fill="#00ffff"/><rect x="187" y="399" width="1" height="1" fill="#00ffff"/><rect x="189" y="399" width="1" height="1" fill="#00ffff"/><rect x="191" y="399" width="1" height="1" fill="#00ffff"/><rect x="194" y="398" width="1" height="2" fill="#00ffff"/><rect x="197" y="397" width="1" height="3" fill="#00ffff"/><rect x="198" y="399" width="1" height="1" fill="#00ffff"/><rect x="200" y="399" width="1" height="1" fill="#00ffff"/><rect x="202" y="399" width="1" height="1" fill="#00ffff"/><rect x="203" y="399" width="1" height="1" fill="#00ffff"/><rect x="205" y="399" width="1" height="1" fill="#00ffff"/><rect x="206" y="399" width="1" height="1" fill="#00ffff"/><rect x="207" y="399" width="1" height="1" fill="#00ffff"/><rect x="209" y="399" width="1" height="1" fill="#00ffff"/><rect x="210" y="398" width="1" height="2" fill="#00ffff"/><rect x="213" y="399" width="1" height="1" fill="#00ffff"/><rect x="214" y="399" width="1" height="1" fill="#00ffff"/><rect x="215" y="399" width="1" height="1" fill="#00ffff"/><rect x="216" y="399" width="1" height="1" fill="#00ffff"/><rect x="218" y="399" width="1" height="1" fill="#00ffff"/><rect x="220" y="399" width="1" height="1" fill="#00ffff"/><rect x="221" y="399" width="1" height="1" fill="#00ffff"/><rect x="223" y="399" width="1" height="1" fill="#00ffff"/><rect x="224" y="399" width="1" height="1" fill="#00ffff"/><rect x="225" y="399" width="1" height="1" fill="#00ffff"/><rect x="226" y="399" width="1" height="1" fill="#00ffff"/><rect x="227" y="399" width="1" height="1" fill="#00ffff"/><rect x="229" y="399" width="1" height="1" fill="#00ffff"/><rect x="230" y="399" width="1" height="1" fill="#00ffff"/><rect x="231" y="399" width="1" height="1" fill="#00ffff"/><rect x="236" y="399" width="1" height="1" fill="#00ffff"/><rect x="237" y="399" width="1" height="1" fill="#00ffff"/><rect x="241" y="399" width="1" height="1" fill="#00ffff"/><rect x="242" y="399" width="1" height="1" fill="#00ffff"/><rect x="243" y="399" width="1" height="1" fill="#00ffff"/><rect x="244" y="398" width="1" height="2" fill="#00ffff"/><rect x="250" y="399" width="1" height="1" fill="#00ffff"/><rect x="252" y="398" width="1" height="2" fill="#00ffff"/><rect x="255" y="399" width="1" height="1" fill="#00ffff"/><rect x="259" y="399" width="1" height="1" fill="#00ffff"/><rect x="265" y="399" width="1" height="1" fill="#00ffff"/><rect x="266" y="398" width="1" height="2" fill="#00ffff"/><rect x="267" y="399" width="1" height="1" fill="#00ffff"/><rect x="269" y="399" width="1" height="1" fill="#00ffff"/><rect x="271" y="398" width="1" height="2" fill="#00ffff"/><rect x="277" y="399" width="1" height="1" fill="#00ffff"/><rect x="278" y="399" width="1" height="1" fill="#00ffff"/><rect x="279" y="399" width="1" height="1" fill="#00ffff"/><rect x="280" y="399" width="1" height="1" fill="#00ffff"/><rect x="284" y="399" width="1" height="1" fill="#00ffff"/><rect x="287" y="399" width="1" height="1" fill="#00ffff"/><rect x="289" y="398" width="1" height="2" fill="#00ffff"/><rect x="290" y="399" width="1" height="1" fill="#00ffff"/><rect x="291" y="398" width="1" height="2" fill="#00ffff"/><rect x="293" y="399" width="1" height="1" fill="#00ffff"/><rect x="296" y="399" width="1" height="1" fill="#00ffff"/><rect x="297" y="399" width="1" height="1" fill="#00ffff"/><rect x="298" y="396" width="1" height="4" fill="#00ffff"/><rect x="301" y="399" width="1" height="1" fill="#00ffff"/><rect x="302" y="399" width="1" height="1" fill="#00ffff"/><rect x="307" y="399" width="1" height="1" fill="#00ffff"/><rect x="308" y="399" width="1" height="1" fill="#00ffff"/><rect x="310" y="399" width="1" height="1" fill="#00ffff"/><rect x="313" y="399" width="1" height="1" fill="#00ffff"/><rect x="314" y="399" width="1" height="1" fill="#00ffff"/><rect x="315" y="399" width="1" height="1" fill="#00ffff"/><rect x="316" y="399" width="1" height="1" fill="#00ffff"/><rect x="318" y="399" width="1" height="1" fill="#00ffff"/><rect x="321" y="399" width="1" height="1" fill="#00ffff"/><rect x="323" y="399" width="1" height="1" fill="#00ffff"/><rect x="324" y="399" width="1" height="1" fill="#00ffff"/><rect x="325" y="399" width="1" height="1" fill="#00ffff"/><rect x="326" y="399" width="1" height="1" fill="#00ffff"/><rect x="328" y="399" width="1" height="1" fill="#00ffff"/><rect x="331" y="399" width="1" height="1" fill="#00ffff"/><rect x="332" y="399" width="1" height="1" fill="#00ffff"/><rect x="333" y="399" width="1" height="1" fill="#00ffff"/><rect x="337" y="399" width="1" height="1" fill="#00ffff"/><rect x="340" y="399" width="1" height="1" fill="#00ffff"/><rect x="341" y="399" width="1" height="1" fill="#00ffff"/><rect x="342" y="399" width="1" height="1" fill="#00ffff"/><rect x="344" y="399" width="1" height="1" fill="#00ffff"/><rect x="345" y="399" width="1" height="1" fill="#00ffff"/><rect x="346" y="399" width="1" height="1" fill="#00ffff"/><rect x="347" y="399" width="1" height="1" fill="#00ffff"/><rect x="350" y="397" width="1" height="3" fill="#00ffff"/><rect x="351" y="399" width="1" height="1" fill="#00ffff"/><rect x="352" y="399" width="1" height="1" fill="#00ffff"/><rect x="357" y="399" width="1" height="1" fill="#00ffff"/><rect x="358" y="399" width="1" height="1" fill="#00ffff"/><rect x="359" y="399" width="1" height="1" fill="#00ffff"/><rect x="360" y="399" width="1" height="1" fill="#00ffff"/><rect x="361" y="399" width="1" height="1" fill="#00ffff"/><rect x="362" y="399" width="1" height="1" fill="#00ffff"/><rect x="363" y="399" width="1" height="1" fill="#00ffff"/><rect x="364" y="399" width="1" height="1" fill="#00ffff"/><rect x="367" y="399" width="1" height="1" fill="#00ffff"/><rect x="370" y="399" width="1" height="1" fill="#00ffff"/><rect x="373" y="398" width="1" height="2" fill="#00ffff"/><rect x="375" y="399" width="1" height="1" fill="#00ffff"/><rect x="377" y="397" width="1" height="3" fill="#00ffff"/><rect x="380" y="399" width="1" height="1" fill="#00ffff"/><rect x="381" y="398" width="1" height="2" fill="#00ffff"/><rect x="382" y="399" width="1" height="1" fill="#00ffff"/><rect x="383" y="399" width="1" height="1" fill="#00ffff"/><rect x="384" y="399" width="1" height="1" fill="#00ffff"/><rect x="387" y="398" width="1" height="2" fill="#00ffff"/><rect x="388" y="399" width="1" height="1" fill="#00ffff"/><rect x="389" y="398" width="1" height="2" fill="#00ffff"/><rect x="391" y="397" width="1" height="3" fill="#00ffff"/><rect x="395" y="399" width="1" height="1" fill="#00ffff"/><rect x="396" y="398" width="1" height="2" fill="#00ffff"/><rect x="397" y="399" width="1" height="1" fill="#00ffff"/><rect x="398" y="399" width="1" height="1" fill="#00ffff"/><rect x="399" y="399" width="1" height="1" fill="#00ffff"/><rect x="401" y="399" width="1" height="1" fill="#00ffff"/><rect x="403" y="399" width="1" height="1" fill="#00ffff"/><rect x="404" y="399" width="1" height="1" fill="#00ffff"/><rect x="406" y="396" width="1" height="4" fill="#00ffff"/><rect x="408" y="399" width="1" height="1" fill="#00ffff"/><rect x="413" y="399" width="1" height="1" fill="#00ffff"/><rect x="415" y="399" width="1" height="1" fill="#00ffff"/><rect x="416" y="397" width="1" height="3" fill="#00ffff"/><rect x="417" y="399" width="1" height="1" fill="#00ffff"/><rect x="419" y="399" width="1" height="1" fill="#00ffff"/><rect x="420" y="398" width="1" height="2" fill="#00ffff"/><rect x="421" y="399" width="1" height="1" fill="#00ffff"/><rect x="422" y="397" width="1" height="3" fill="#00ffff"/><rect x="423" y="399" width="1" height="1" fill="#00ffff"/><rect x="424" y="399" width="1" height="1" fill="#00ffff"/><rect x="425" y="399" width="1" height="1" fill="#00ffff"/><rect x="426" y="399" width="1" height="1" fill="#00ffff"/><rect x="427" y="399" width="1" height="1" fill="#00ffff"/><rect x="430" y="399" width="1" height="1" fill="#00ffff"/><rect x="433" y="397" width="1" height="3" fill="#00ffff"/><rect x="435" y="399" width="1" height="1" fill="#00ffff"/><rect x="436" y="399" width="1" height="1" fill="#00ffff"/><rect x="437" y="399" width="1" height="1" fill="#00ffff"/><rect x="438" y="399" width="1" height="1" fill="#00ffff"/><rect x="439" y="396" width="1" height="4" fill="#00ffff"/><rect x="440" y="399" width="1" height="1" fill="#00ffff"/><rect x="441" y="399" width="1" height="1" fill="#00ffff"/><rect x="448" y="399" width="1" height="1" fill="#00ffff"/><rect x="449" y="399" width="1" height="1" fill="#00ffff"/><rect x="450" y="399" width="1" height="1" fill="#00ffff"/><rect x="451" y="399" width="1" height="1" fill="#00ffff"/><rect x="453" y="399" width="1" height="1" fill="#00ffff"/><rect x="455" y="397" width="1" height="3" fill="#00ffff"/><rect x="458" y="398" width="1" height="2" fill="#00ffff"/><rect x="459" y="399" width="1" height="1" fill="#00ffff"/><rect x="461" y="399" width="1" height="1" fill="#00ffff"/><rect x="462" y="399" width="1" height="1" fill="#00ffff"/><rect x="463" y="399" width="1" height="1" fill="#00ffff"/><rect x="465" y="399" width="1" height="1" fill="#00ffff"/><rect x="467" y="399" width="1" height="1" fill="#00ffff"/><rect x="468" y="399" width="1" height="1" fill="#00ffff"/><rect x="469" y="399" width="1" height="1" fill="#00ffff"/><rect x="470" y="399" width="1" height="1" fill="#00ffff"/><rect x="472" y="399" width="1" height="1" fill="#00ffff"/><rect x="473" y="399" width="1" height="1" fill="#00ffff"/><rect x="475" y="399" width="1" height="1" fill="#00ffff"/><rect x="476" y="399" width="1" height="1" fill="#00ffff"/><rect x="478" y="399" width="1" height="1" fill="#00ffff"/><rect x="479" y="399" width="1" height="1" fill="#00ffff"/><rect x="480" y="399" width="1" height="1" fill="#00ffff"/><rect x="485" y="398" width="1" height="2" fill="#00ffff"/><rect x="489" y="398" width="1" height="2" fill="#00ffff"/><rect x="491" y="399" width="1" height="1" fill="#00ffff"/><rect x="495" y="399" width="1" height="1" fill="#00ffff"/><rect x="496" y="399" width="1" height="1" fill="#00ffff"/><rect x="497" y="399" width="1" height="1" fill="#00ffff"/><rect x="498" y="397" width="1" height="3" fill="#00ffff"/><rect x="501" y="399" width="1" height="1" fill="#00ffff"/><rect x="503" y="399" width="1" height="1" fill="#00ffff"/><rect x="505" y="399" width="1" height="1" fill="#00ffff"/><rect x="506" y="399" width="1" height="1" fill="#00ffff"/><rect x="507" y="399" width="1" height="1" fill="#00ffff"/><rect x="508" y="399" width="1" height="1" fill="#00ffff"/><rect x="509" y="399" width="1" height="1" fill="#00ffff"/><rect x="510" y="399" width="1" height="1" fill="#00ffff"/><rect x="511" y="399" width="1" height="1" fill="#00ffff"/><rect x="519" y="399" width="1" height="1" fill="#00ffff"/><rect x="520" y="399" width="1" height="1" fill="#00ffff"/><rect x="521" y="399" width="1" height="1" fill="#00ffff"/><rect x="522" y="399" width="1" height="1" fill="#00ffff"/><rect x="523" y="399" width="1" height="1" fill="#00ffff"/><rect x="525" y="399" width="1" height="1" fill="#00ffff"/><rect x="526" y="399" width="1" height="1" fill="#00ffff"/><rect x="528" y="398" width="1" height="2" fill="#00ffff"/><rect x="529" y="399" width="1" height="1" fill="#00ffff"/><rect x="530" y="399" width="1" height="1" fill="#00ffff"/><rect x="532" y="399" width="1" height="1" fill="#00ffff"/><rect x="534" y="399" width="1" height="1" fill="#00ffff"/><rect x="535" y="395" width="1" height="5" fill="#00ffff"/><rect x="538" y="398" width="1" height="2" fill="#00ffff"/><rect x="539" y="397" width="1" height="3" fill="#00ffff"/><rect x="540" y="398" width="1" height="2" fill="#00ffff"/><rect x="543" y="399" width="1" height="1" fill="#00ffff"/><rect x="546" y="399" width="1" height="1" fill="#00ffff"/><rect x="547" y="399" width="1" height="1" fill="#00ffff"/><rect x="550" y="398" width="1" height="2" fill="#00ffff"/><rect x="552" y="398" width="1" height="2" fill="#00ffff"/><rect x="554" y="399" width="1" height="1" fill="#00ffff"/><rect x="556" y="399" width="1" height="1" fill="#00ffff"/><rect x="557" y="398" width="1" height="2" fill="#00ffff"/><rect x="558" y="399" width="1" height="1" fill="#00ffff"/><rect x="560" y="399" width="1" height="1" fill="#00ffff"/><rect x="561" y="396" width="1" height="4" fill="#00ffff"/><rect x="563" y="398" width="1" height="2" fill="#00ffff"/><rect x="566" y="395" width="1" height="5" fill="#00ffff"/><rect x="568" y="399" width="1" height="1" fill="#00ffff"/><rect x="569" y="398" width="1" height="2" fill="#00ffff"/><rect x="572" y="399" width="1" height="1" fill="#00ffff"/><rect x="575" y="398" width="1" height="2" fill="#00ffff"/><rect x="577" y="399" width="1" height="1" fill="#00ffff"/><rect x="581" y="399" width="1" height="1" fill="#00ffff"/><rect x="582" y="399" width="1" height="1" fill="#00ffff"/><rect x="583" y="399" width="1" height="1" fill="#00ffff"/><rect x="584" y="399" width="1" height="1" fill="#00ffff"/><rect x="585" y="399" width="1" height="1" fill="#00ffff"/><rect x="586" y="399" width="1" height="1" fill="#00ffff"/><rect x="587" y="399" width="1" height="1" fill="#00ffff"/><rect x="588" y="399" width="1" height="1" fill="#00ffff"/><rect x="590" y="399" width="1" height="1" fill="#00ffff"/><rect x="591" y="399" width="1" height="1" fill="#00ffff"/><rect x="593" y="399" width="1" height="1" fill="#00ffff"/><rect x="594" y="399" width="1" height="1" fill="#00ffff"/><rect x="596" y="399" width="1" height="1" fill="#00ffff"/><rect x="598" y="399" width="1" height="1" fill="#00ffff"/><rect x="599" y="399" width="1" height="1" fill="#00ffff"/><rect x="602" y="398" width="1" height="2" fill="#00ffff"/><rect x="603" y="399" width="1" height="1" fill="#00ffff"/><rect x="604" y="399" width="1" height="1" fill="#00ffff"/><rect x="605" y="399" width="1" height="1" fill="#00ffff"/><rect x="607" y="399" width="1" height="1" fill="#00ffff"/><rect x="608" y="399" width="1" height="1" fill="#00ffff"/><rect x="610" y="399" width="1" height="1" fill="#00ffff"/><rect x="611" y="397" width="1" height="3" fill="#00ffff"/><rect x="612" y="399" width="1" height="1" fill="#00ffff"/><rect x="613" y="399" width="1" height="1" fill="#00ffff"/><rect x="614" y="399" width="1" height="1" fill="#00ffff"/><rect x="616" y="399" width="1" height="1" fill="#00ffff"/><rect x="618" y="397" width="1" height="3" fill="#00ffff"/><rect x="27" y="392" width="1" height="8" fill="#00ffff"/><rect x="52" y="391" width="1" height="9" fill="#00ffff"/><rect x="53" y="393" width="1" height="7" fill="#00ffff"/><rect x="161" y="394" width="1" height="6" fill="#00ffff"/><rect x="162" y="396" width="1" height="4" fill="#00ffff"/><rect x="165" y="396" width="1" height="4" fill="#00ffff"/><rect x="172" y="395" width="1" height="5" fill="#00ffff"/><rect x="174" y="393" width="1" height="7" fill="#00ffff"/><rect x="176" y="394" width="1" height="6" fill="#00ffff"/><rect x="177" y="395" width="1" height="5" fill="#00ffff"/><rect x="178" y="397" width="1" height="3" fill="#00ffff"/><rect x="419" y="395" width="1" height="5" fill="#00ffff"/><rect x="427" y="393" width="1" height="7" fill="#00ffff"/><rect x="463" y="392" width="1" height="8" fill="#00ffff"/><rect x="529" y="392" width="1" height="8" fill="#00ffff"/><rect x="580" y="392" width="1" height="8" fill="#00ffff"/><rect x="310" y="395" width="1" height="5" fill="#00ffff"/><rect x="349" y="395" width="1" height="5" fill="#00ffff"/><rect x="117" y="396" width="1" height="4" fill="#00ffff"/><rect x="104" y="397" width="1" height="3" fill="#00ffff"/><rect x="51" y="381" width="1" height="19" fill="#ffff00"/><rect x="49" y="388" width="1" height="12" fill="#ffff00"/><rect x="50" y="389" width="1" height="11" fill="#ffff00"/><rect x="55" y="384" width="1" height="16" fill="#ffff00"/><rect x="56" y="386" width="1" height="14" fill="#ffff00"/><rect x="173" y="390" width="1" height="10" fill="#ffff00"/><rect x="175" y="388" width="1" height="12" fill="#ffff00"/><rect x="201" y="390" width="1" height="10" fill="#ffff00"/><rect x="389" y="385" width="1" height="15" fill="#ffff00"/><rect x="424" y="378" width="1" height="22" fill="#ffff00"/><rect x="425" y="373" width="1" height="27" fill="#ffff00"/><rect x="426" y="381" width="1" height="19" fill="#ffff00"/><rect x="459" y="389" width="1" height="11" fill="#ffff00"/><rect x="571" y="388" width="1" height="12" fill="#ffff00"/><rect x="574" y="387" width="1" height="13" fill="#ffff00"/><rect x="575" y="387" width="1" height="13" fill="#ffff00"/><rect x="576" y="389" width="1" height="11" fill="#ffff00"/><rect x="145" y="388" width="1" height="12" fill="#ffff00"/><rect x="146" y="387" width="1" height="13" fill="#ffff00"/><rect x="147" y="387" width="1" height="13" fill="#ffff00"/><rect x="148" y="387" width="1" height="13" fill="#ffff00"/><rect x="149" y="389" width="1" height="11" fill="#ffff00"/><rect x="150" y="390" width="1" height="10" fill="#ffff00"/><rect x="151" y="386" width="1" height="14" fill="#ffff00"/><rect x="152" y="384" width="1" height="16" fill="#ffff00"/><rect x="153" y="383" width="1" height="17" fill="#ffff00"/><rect x="154" y="384" width="1" height="16" fill="#ffff00"/><rect x="155" y="383" width="1" height="17" fill="#ffff00"/><rect x="156" y="384" width="1" height="16" fill="#ffff00"/><rect x="157" y="385" width="1" height="15" fill="#ffff00"/><rect x="158" y="389" width="1" height="11" fill="#ffff00"/><rect x="159" y="389" width="1" height="11" fill="#ffff00"/><rect x="160" y="390" width="1" height="10" fill="#ffff00"/><rect x="16" y="90" width="2" height="1" fill="#ff0"/><rect x="624" y="90" width="2" height="1" fill="#ff0"/><rect x="16" y="100" width="2" height="1" fill="#ff0"/><rect x="624" y="100" width="2" height="1" fill="#ff0"/><rect x="16" y="110" width="2" height="1" fill="#ff0"/><rect x="624" y="110" width="2" height="1" fill="#ff0"/><rect x="16" y="120" width="2" height="1" fill="#ff0"/><rect x="624" y="120" width="2" height="1" fill="#ff0"/><rect x="14" y="130" width="5" height="1" fill="#ff0"/><rect x="624" y="130" width="5" height="1" fill="#ff0"/><rect x="16" y="140" width="2" height="1" fill="#ff0"/><rect x="624" y="140" width="2" height="1" fill="#ff0"/><rect x="16" y="150" width="2" height="1" fill="#ff0"/><rect x="624" y="150" width="2" height="1" fill="#ff0"/><rect x="16" y="160" width="2" height="1" fill="#ff0"/><rect x="624" y="160" width="2" height="1" fill="#ff0"/><rect x="16" y="170" width="2" height="1" fill="#ff0"/><rect x="624" y="170" width="2" height="1" fill="#ff0"/><rect x="14" y="180" width="5" height="1" fill="#ff0"/><rect x="624" y="180" width="5" height="1" fill="#ff0"/><rect x="16" y="190" width="2" height="1" fill="#ff0"/><rect x="624" y="190" width="2" height="1" fill="#ff0"/><rect x="16" y="200" width="2" height="1" fill="#ff0"/><rect x="624" y="200" width="2" height="1" fill="#ff0"/><rect x="16" y="210" width="2" height="1" fill="#ff0"/><rect x="624" y="210" width="2" height="1" fill="#ff0"/><rect x="16" y="220" width="2" height="1" fill="#ff0"/><rect x="624" y="220" width="2" height="1" fill="#ff0"/><rect x="14" y="230" width="5" height="1" fill="#ff0"/><rect x="624" y="230" width="5" height="1" fill="#ff0"/><rect x="16" y="240" width="2" height="1" fill="#ff0"/><rect x="624" y="240" width="2" height="1" fill="#ff0"/><rect x="16" y="250" width="2" height="1" fill="#ff0"/><rect x="624" y="250" width="2" height="1" fill="#ff0"/><rect x="16" y="260" width="2" height="1" fill="#ff0"/><rect x="624" y="260" width="2" height="1" fill="#ff0"/><rect x="16" y="270" width="2" height="1" fill="#ff0"/><rect x="624" y="270" width="2" height="1" fill="#ff0"/><rect x="14" y="280" width="5" height="1" fill="#ff0"/><rect x="624" y="280" width="5" height="1" fill="#ff0"/><rect x="16" y="290" width="2" height="1" fill="#ff0"/><rect x="624" y="290" width="2" height="1" fill="#ff0"/><rect x="16" y="300" width="2" height="1" fill="#ff0"/><rect x="624" y="300" width="2" height="1" fill="#ff0"/><rect x="16" y="310" width="2" height="1" fill="#ff0"/><rect x="624" y="310" width="2" height="1" fill="#ff0"/><rect x="16" y="320" width="2" height="1" fill="#ff0"/><rect x="624" y="320" width="2" height="1" fill="#ff0"/><rect x="14" y="330" width="5" height="1" fill="#ff0"/><rect x="624" y="330" width="5" height="1" fill="#ff0"/><rect x="16" y="340" width="2" height="1" fill="#ff0"/><rect x="624" y="340" width="2" height="1" fill="#ff0"/><rect x="16" y="350" width="2" height="1" fill="#ff0"/><rect x="624" y="350" width="2" height="1" fill="#ff0"/><rect x="16" y="360" width="2" height="1" fill="#ff0"/><rect x="624" y="360" width="2" height="1" fill="#ff0"/><rect x="16" y="370" width="2" height="1" fill="#ff0"/><rect x="624" y="370" width="2" height="1" fill="#ff0"/><rect x="14" y="380" width="5" height="1" fill="#ff0"/><rect x="624" y="380" width="5" height="1" fill="#ff0"/><rect x="16" y="390" width="2" height="1" fill="#ff0"/><rect x="624" y="390" width="2" height="1" fill="#ff0"/><rect x="79" y="92" width="1" height="3" fill="#ff0"/><rect x="139" y="92" width="1" height="3" fill="#ff0"/><rect x="199" y="92" width="1" height="3" fill="#ff0"/><rect x="259" y="92" width="1" height="3" fill="#ff0"/><rect x="319" y="92" width="1" height="3" fill="#ff0"/><rect x="378" y="92" width="1" height="3" fill="#ff0"/><rect x="438" y="92" width="1" height="3" fill="#ff0"/><rect x="498" y="92" width="1" height="3" fill="#ff0"/><rect x="558" y="92" width="1" height="3" fill="#ff0"/><rect x="618" y="92" width="1" height="3" fill="#ff0"/><rect x="628" y="0" width="1" height="400" fill="#fff"/></svg>
<div id="ttl" style="left:0;top:0;width:125px;height:16px"><span class="g" style="left:10px">H R O F F T</span></div>
<div class="v" style="left:125px;top:3px">1.0.0</div>
<pre class="m" style="left:9px;top:21px">0404281420.png</pre>
<pre class="m" style="left:9px;top:41px">04.04.28 14:20</pre>
<pre class="m" style="left:124px;top:26px">meteor</pre>
<pre class="m" style="left:140px;top:41px">12</pre>
<pre class="m" style="left:179px;top:6px">Observer           : Masayuki Kobayashi
Receiving Location : Ogata-vill. Akita-Pref. JAPAN (139.96E, 40.02N)
Receiver           : ICOM IC-575 53.7492(@LCD)MHz USB
Receiving antenna  : A504HB(yagi 4el)</pre>
<div id="tls" style="left:0;top:0"><span class="tl" style="left:57px">1421</span><span class="tl" style="left:117px">1422</span><span class="tl" style="left:177px">1423</span><span class="tl" style="left:237px">1424</span><span class="tl" style="left:297px">1425</span><span class="tl" style="left:356px">1426</span><span class="tl" style="left:416px">1427</span><span class="tl" style="left:476px">1428</span><span class="tl" style="left:536px">1429</span><span class="tl" style="left:596px">1430</span></div>
<div id="yls" style="left:0;top:0;width:629px;height:400px"><span class="yl" style="top:124px">1.1</span><span class="yl" style="top:174px">1.0</span><span class="yl" style="top:224px">0.9</span><span class="yl" style="top:274px">0.8</span><span class="yl" style="top:324px">0.7</span><span class="yl" style="top:374px">0.6</span><span class="kh">kHz</span></div>
<svg width="629" height="400" viewBox="0 0 629 400" shape-rendering="crispEdges" fill="#000"><rect x="56" y="89" width="3" height="1"/><rect x="60" y="89" width="3" height="1"/><rect x="116" y="89" width="3" height="1"/><rect x="120" y="89" width="3" height="1"/><rect x="176" y="89" width="3" height="1"/><rect x="180" y="89" width="3" height="1"/><rect x="236" y="89" width="3" height="1"/><rect x="240" y="89" width="3" height="1"/><rect x="296" y="89" width="3" height="1"/><rect x="300" y="89" width="3" height="1"/><rect x="355" y="89" width="3" height="1"/><rect x="359" y="89" width="3" height="1"/><rect x="415" y="89" width="3" height="1"/><rect x="419" y="89" width="3" height="1"/><rect x="475" y="89" width="3" height="1"/><rect x="479" y="89" width="3" height="1"/><rect x="535" y="89" width="3" height="1"/><rect x="539" y="89" width="3" height="1"/><rect x="595" y="89" width="3" height="1"/><rect x="599" y="89" width="3" height="1"/><rect x="74" y="89" width="3" height="1"/><rect x="78" y="89" width="3" height="1"/><rect x="-1" y="133" width="3" height="1"/><rect x="3" y="133" width="3" height="1"/><rect x="7" y="133" width="3" height="1"/><rect x="11" y="133" width="3" height="1"/><rect x="-1" y="183" width="3" height="1"/><rect x="3" y="183" width="3" height="1"/><rect x="124" y="12" width="3" height="1"/><rect x="128" y="12" width="3" height="1"/></svg>
</div>
</body></html>
